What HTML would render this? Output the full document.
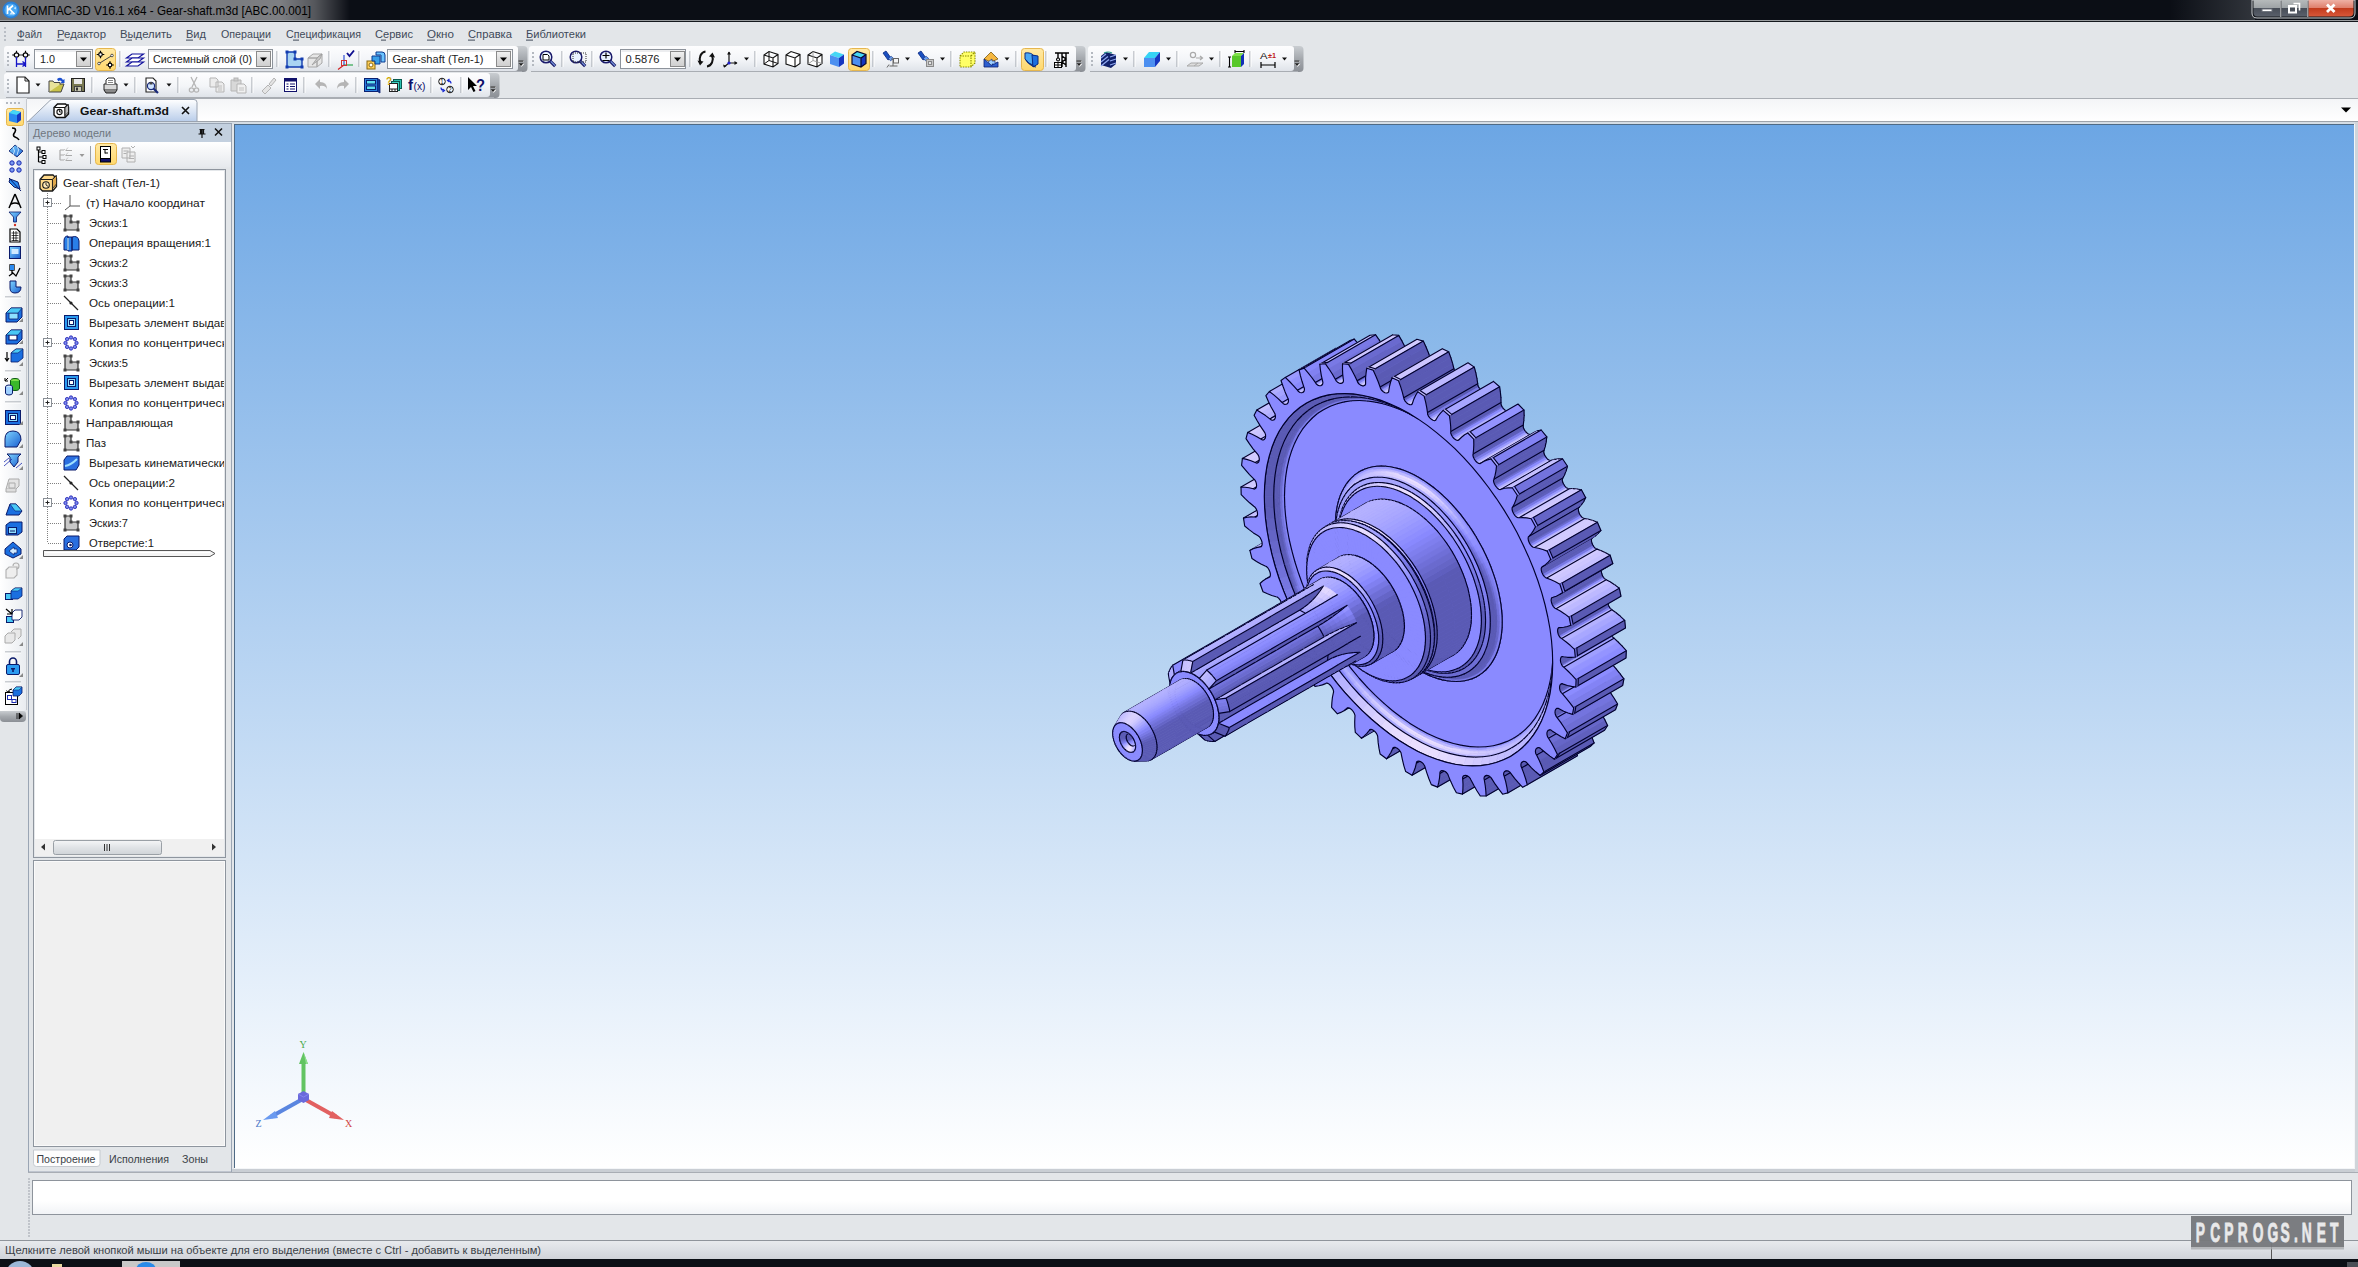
<!DOCTYPE html>
<html><head><meta charset="utf-8"><title>KOMPAS-3D</title>
<style>
html,body{margin:0;padding:0;width:2358px;height:1267px;overflow:hidden;background:#e3e6e9;font-family:"Liberation Sans", sans-serif}
#vp{position:absolute;left:235px;top:125px;width:2119px;height:1043px;background:linear-gradient(#6ca6e4,#ffffff)}
svg{position:absolute;left:0;top:0;font-family:"Liberation Sans", sans-serif}
.e{fill:none;stroke:#00002c;stroke-width:1.15;stroke-linecap:round}
.f{stroke:#00002c;stroke-width:1.15;stroke-linejoin:round}
</style></head><body>
<div id="vp"></div>
<svg width="2358" height="1267" viewBox="0 0 2358 1267">
<g stroke-width=".7">
<path d="M1319 548.4l-3.1 1.6-50.2 29 3.1-1.6z" fill="#b9b5ff" stroke="#b9b5ff"/>
<path d="M1319 548.4l-3.1 1.6M1315.9 550l-50.2 29" class="e"/>
<path d="M1303.3 519.8l-3.2 1.7-50.2 28.9 3.2-1.6z" fill="#b8b5ff" stroke="#b8b5ff"/>
<path d="M1303.3 519.8l-3.2 1.7M1300.1 521.5l-50.2 28.9" class="e"/>
<path d="M1394.1 681.7l2.8-2.2-50.2 29-2.8 2.2z" fill="#5a5ab4" stroke="#5a5ab4"/>
<path d="M1394.1 681.7l-50.2 29M1394.1 681.7l2.8-2.2" class="e"/>
<path d="M1320 548l-1 .4-50.2 29 1-.4z" fill="#bab6ff" stroke="#bab6ff"/>
<path d="M1320 548l-50.2 29M1320 548l-1 .4M1319 548.4l-50.2 29" class="e"/>
<path d="M1411.6 709.2l2.9-2.3-50.2 29-2.9 2.3z" fill="#5a5ab4" stroke="#5a5ab4"/>
<path d="M1411.6 709.2l-50.2 29M1411.6 709.2l2.9-2.3" class="e"/>
<path d="M1396.9 679.5l.8-.7-50.2 29-.8 .7z" fill="#5a5ab4" stroke="#5a5ab4"/>
<path d="M1396.9 679.5l-50.2 29M1396.9 679.5l.8-.7M1397.7 678.8l-50.2 29" class="e"/>
<path d="M1306.8 518.6l-3.5 1.2-50.2 29 3.4-1.2z" fill="#bcb8ff" stroke="#bcb8ff"/>
<path d="M1306.8 518.6l-3.5 1.2" class="e"/>
<path d="M1414.5 706.9l2.6-2.5-50.2 29-2.6 2.5z" fill="#5a5ab4" stroke="#5a5ab4"/>
<path d="M1414.5 706.9l2.6-2.5" class="e"/>
<path d="M1310.3 517.9l-3.5 .7-50.3 29 3.6-.7z" fill="#c1bcff" stroke="#c1bcff"/>
<path d="M1310.3 517.9l-3.5 .7" class="e"/>
<path d="M1311.4 517.7l-1.1 .2-50.2 29 1.1-.2z" fill="#c3beff" stroke="#c3beff"/>
<path d="M1311.4 517.7l-50.2 29M1311.4 517.7l-1.1 .2M1310.3 517.9l-50.2 29" class="e"/>
<path d="M1417.1 704.4l2.2-2.9-50.2 29-2.2 2.9z" fill="#5a5ab4" stroke="#5a5ab4"/>
<path d="M1417.1 704.4l2.2-2.9" class="e"/>
<path d="M1297.4 488.3l-3.7 .8-50.2 29 3.7-.8z" fill="#c1bcff" stroke="#c1bcff"/>
<path d="M1297.4 488.3l-3.7 .8M1293.7 489.1l-50.2 29" class="e"/>
<path d="M1419.3 701.5l.7-1-50.2 29-.7 1z" fill="#5a5ab4" stroke="#5a5ab4"/>
<path d="M1419.3 701.5l-50.2 29M1419.3 701.5l.7-1M1420 700.5l-50.2 29" class="e"/>
<path d="M1436.7 729.8l2.3-3-50.2 29-2.3 3z" fill="#5a5ab4" stroke="#5a5ab4"/>
<path d="M1436.7 729.8l-50.2 29M1436.7 729.8l2.3-3" class="e"/>
<path d="M1301.2 487.9l-3.8 .4-50.2 29 3.8-.4z" fill="#c5c0ff" stroke="#c5c0ff"/>
<path d="M1301.2 487.9l-3.8 .4" class="e"/>
<path d="M1305 488.1l-3.8-.2-50.2 29 3.8 .1z" fill="#cbc4ff" stroke="#cbc4ff"/>
<path d="M1305 488.1l-3.8-.2" class="e"/>
<path d="M1439 726.8l2.1-3.3-50.2 29-2.1 3.3z" fill="#5a5ab4" stroke="#5a5ab4"/>
<path d="M1439 726.8l2.1-3.3" class="e"/>
<path d="M1306.2 488.2l-1.2-.1-50.2 28.9 1.2 .1z" fill="#cdc6ff" stroke="#cdc6ff"/>
<path d="M1306.2 488.2l-50.2 28.9M1306.2 488.2l-1.2-.1M1305 488.1l-50.2 28.9" class="e"/>
<path d="M1441.1 723.5l1.6-3.6-50.2 29-1.6 3.6z" fill="#5a5ab4" stroke="#5a5ab4"/>
<path d="M1441.1 723.5l1.6-3.6" class="e"/>
<path d="M1442.7 719.9l.5-1.1-50.2 28.9-.5 1.2z" fill="#5a5ab4" stroke="#5a5ab4"/>
<path d="M1442.7 719.9l-50.2 29M1442.7 719.9l.5-1.1M1443.2 718.8l-50.2 28.9" class="e"/>
<path d="M1295.2 458.3l-4-.2-50.2 29 4 .1z" fill="#cbc4ff" stroke="#cbc4ff"/>
<path d="M1295.2 458.3l-4-.2M1291.2 458.1l-50.2 29" class="e"/>
<path d="M1299.3 458.8l-4.1-.5-50.2 28.9 4.1 .6z" fill="#cfc8ff" stroke="#cfc8ff"/>
<path d="M1299.3 458.8l-4.1-.5" class="e"/>
<path d="M1462.3 746.2l1.7-3.7-50.2 29-1.7 3.7z" fill="#5a5ab4" stroke="#5a5ab4"/>
<path d="M1462.3 746.2l-50.2 29M1462.3 746.2l1.7-3.7" class="e"/>
<path d="M1303.4 459.7l-4.1-.9-50.2 29 4.1 .9z" fill="#d2caff" stroke="#d2caff"/>
<path d="M1303.4 459.7l-4.1-.9" class="e"/>
<path d="M1464 742.5l1.5-4-50.2 29-1.5 4z" fill="#5a5ab4" stroke="#5a5ab4"/>
<path d="M1464 742.5l1.5-4" class="e"/>
<path d="M1304.7 460.1l-1.3-.4-50.2 29 1.3 .4z" fill="#d2cbff" stroke="#d2cbff"/>
<path d="M1304.7 460.1l-1.3-.4M1303.4 459.7l-50.2 29" class="e"/>
<path d="M1305.7 459.6l-1 .5-50.2 29 1-.5z" fill="#bab6ff" stroke="#bab6ff"/>
<path d="M1305.7 459.6l-50.2 29M1305.7 459.6l-1 .5" class="e"/>
<path d="M1465.5 738.5l1-4.2-50.2 29-1 4.2z" fill="#5a5ab4" stroke="#5a5ab4"/>
<path d="M1465.5 738.5l1-4.2" class="e"/>
<path d="M1466.5 734.3l.3-1.3-50.2 29-.3 1.3z" fill="#5a5ab4" stroke="#5a5ab4"/>
<path d="M1466.5 734.3l-50.2 29M1466.5 734.3l.3-1.3" class="e"/>
<path d="M1466.8 733l.9-.8-50.2 29-.9 .8z" fill="#5a5ab4" stroke="#5a5ab4"/>
<path d="M1466.8 733l.9-.8M1467.7 732.2l-50.2 29" class="e"/>
<path d="M1296.9 430.4l-4.3-1-50.2 29 4.3 1z" fill="#d2caff" stroke="#d2caff"/>
<path d="M1296.9 430.4l-4.3-1M1292.6 429.4l-50.2 29" class="e"/>
<path d="M1301.2 431.7l-4.3-1.3-50.2 29 4.3 1.3z" fill="#d2cbff" stroke="#d2cbff"/>
<path d="M1301.2 431.7l-4.3-1.3" class="e"/>
<path d="M1487.8 758.1l1.1-4.4-50.2 29-1.1 4.4z" fill="#5a5ab4" stroke="#5a5ab4"/>
<path d="M1487.8 758.1l-50.2 29M1487.8 758.1l1.1-4.4" class="e"/>
<path d="M1305.4 433.5l-4.2-1.8-50.2 29 4.2 1.8z" fill="#d0c9ff" stroke="#d0c9ff"/>
<path d="M1305.4 433.5l-4.2-1.8" class="e"/>
<path d="M1488.9 753.7l.8-4.5-50.2 28.9-.8 4.6z" fill="#5a5ab4" stroke="#5a5ab4"/>
<path d="M1488.9 753.7l.8-4.5" class="e"/>
<path d="M1306.7 434.1l-1.3-.6-50.2 29 1.3 .6z" fill="#cec7ff" stroke="#cec7ff"/>
<path d="M1306.7 434.1l-1.3-.6M1305.4 433.5l-50.2 29" class="e"/>
<path d="M1307.9 433.9l-1.2 .2-50.2 29 1.2-.2z" fill="#c3beff" stroke="#c3beff"/>
<path d="M1307.9 433.9l-50.2 29M1307.9 433.9l-1.2 .2" class="e"/>
<path d="M1489.7 749.2l.4-4.7-50.2 29-.4 4.6z" fill="#5a5ab4" stroke="#5a5ab4"/>
<path d="M1489.7 749.2l.4-4.7" class="e"/>
<path d="M1490.1 744.5l.1-1.5-50.2 29-.1 1.5z" fill="#5a5ab4" stroke="#5a5ab4"/>
<path d="M1490.1 744.5l-50.2 29M1490.1 744.5l.1-1.5" class="e"/>
<path d="M1490.2 743l.7-1-50.2 29-.7 1z" fill="#5a5ab4" stroke="#5a5ab4"/>
<path d="M1490.2 743l.7-1M1490.9 742l-50.2 29" class="e"/>
<path d="M1302.3 405.3l-4.4-1.8-50.2 28.9 4.4 1.9z" fill="#d0c9ff" stroke="#d0c9ff"/>
<path d="M1302.3 405.3l-4.4-1.8M1297.9 403.5l-50.2 28.9" class="e"/>
<path d="M1306.7 407.5l-4.4-2.2-50.2 29 4.4 2.2z" fill="#cbc5ff" stroke="#cbc5ff"/>
<path d="M1306.7 407.5l-4.4-2.2" class="e"/>
<path d="M1512.7 765.1l.4-5-50.2 29-.4 5z" fill="#5a5ab4" stroke="#5a5ab4"/>
<path d="M1512.7 765.1l-50.2 29M1512.7 765.1l.4-5" class="e"/>
<path d="M1311 410.1l-4.3-2.6-50.2 29 4.3 2.5z" fill="#c3beff" stroke="#c3beff"/>
<path d="M1311 410.1l-4.3-2.6" class="e"/>
<path d="M1312.3 410.9l-1.3-.8-50.2 28.9 1.3 .9z" fill="#bfbaff" stroke="#bfbaff"/>
<path d="M1312.3 410.9l-1.3-.8M1311 410.1l-50.2 28.9" class="e"/>
<path d="M1313.6 411l-1.3-.1-50.2 29 1.3 .1z" fill="#cdc6ff" stroke="#cdc6ff"/>
<path d="M1313.6 411l-1.3-.1" class="e"/>
<path d="M1513.1 760.1l.1-5-50.2 29-.1 5z" fill="#5a5ab4" stroke="#5a5ab4"/>
<path d="M1513.1 760.1l.1-5" class="e"/>
<path d="M1314.7 410.3l-1.1 .7-50.2 29 1.1-.7z" fill="#b7b4ff" stroke="#b7b4ff"/>
<path d="M1314.7 410.3l-50.2 29M1314.7 410.3l-1.1 .7" class="e"/>
<path d="M1513.2 755.1l-.2-5-50.3 29 .3 5z" fill="#5a5ab4" stroke="#5a5ab4"/>
<path d="M1513.2 755.1l-.2-5" class="e"/>
<path d="M1513 750.1l-.2-1.6-50.2 29 .1 1.6z" fill="#5a5ab4" stroke="#5a5ab4"/>
<path d="M1513 750.1l-50.3 29M1513 750.1l-.2-1.6" class="e"/>
<path d="M1512.8 748.5l.5-1.2-50.2 29-.5 1.2z" fill="#5a5ab4" stroke="#5a5ab4"/>
<path d="M1512.8 748.5l.5-1.2" class="e"/>
<path d="M1513.3 747.3l1.1-.8-50.2 29-1.1 .8z" fill="#5a5ab4" stroke="#5a5ab4"/>
<path d="M1513.3 747.3l1.1-.8M1514.4 746.5l-50.2 29" class="e"/>
<path d="M1311.5 383.7l-4.5-2.7-50.2 29 4.4 2.7z" fill="#c3beff" stroke="#c3beff"/>
<path d="M1311.5 383.7l-4.5-2.7M1307 381l-50.2 29" class="e"/>
<path d="M1315.8 386.6l-4.3-2.9-50.3 29 4.4 2.9z" fill="#bab6ff" stroke="#bab6ff"/>
<path d="M1315.8 386.6l-4.3-2.9" class="e"/>
<path d="M1320 389.9l-4.2-3.3-50.2 29 4.2 3.3z" fill="#afadff" stroke="#afadff"/>
<path d="M1320 389.9l-4.2-3.3" class="e"/>
<path d="M1536.3 767l-.3-5.3-50.2 29 .3 5.3z" fill="#5a5ab4" stroke="#5a5ab4"/>
<path d="M1536.3 767l-50.2 29M1536.3 767l-.3-5.3" class="e"/>
<path d="M1321.3 390.9l-1.3-1-50.2 29 1.3 1z" fill="#aaa8ff" stroke="#aaa8ff"/>
<path d="M1321.3 390.9l-1.3-1M1320 389.9l-50.2 29" class="e"/>
<path d="M1322.7 391.3l-1.4-.4-50.2 29 1.4 .4z" fill="#d2cbff" stroke="#d2cbff"/>
<path d="M1322.7 391.3l-1.4-.4" class="e"/>
<path d="M1536 761.7l-.6-5.4-50.2 29 .6 5.4z" fill="#5a5ab4" stroke="#5a5ab4"/>
<path d="M1536 761.7l-.6-5.4" class="e"/>
<path d="M1324 391l-1.3 .3-50.2 29 1.3-.3z" fill="#bfbaff" stroke="#bfbaff"/>
<path d="M1324 391l-50.2 29M1324 391l-1.3 .3" class="e"/>
<path d="M1535.4 756.3l-.9-5.3-50.2 29 .9 5.3z" fill="#5a5ab4" stroke="#5a5ab4"/>
<path d="M1535.4 756.3l-.9-5.3" class="e"/>
<path d="M1534.5 751l-.3-1.6-50.2 28.9 .3 1.7z" fill="#5a5ab4" stroke="#5a5ab4"/>
<path d="M1534.5 751l-50.2 29M1534.5 751l-.3-1.6" class="e"/>
<path d="M1534.2 749.4l.3-1.5-50.2 29-.3 1.4z" fill="#5a5ab4" stroke="#5a5ab4"/>
<path d="M1534.2 749.4l.3-1.5" class="e"/>
<path d="M1534.5 747.9l.9-1-50.2 29-.9 1z" fill="#5a5ab4" stroke="#5a5ab4"/>
<path d="M1534.5 747.9l.9-1M1535.4 746.9l-50.2 29" class="e"/>
<path d="M1324 365.9l-4.4-3.4-50.2 29 4.4 3.4z" fill="#afadff" stroke="#afadff"/>
<path d="M1324 365.9l-4.4-3.4M1319.6 362.5l-50.2 29" class="e"/>
<path d="M1328.3 369.6l-4.3-3.7-50.2 29 4.3 3.7z" fill="#a5a4ff" stroke="#a5a4ff"/>
<path d="M1328.3 369.6l-4.3-3.7" class="e"/>
<path d="M1332.3 373.5l-4-3.9-50.2 29 4 3.9z" fill="#9a9aff" stroke="#9a9aff"/>
<path d="M1332.3 373.5l-4-3.9" class="e"/>
<path d="M1333.6 374.7l-1.3-1.2-50.2 29 1.3 1.2z" fill="#9595ff" stroke="#9595ff"/>
<path d="M1333.6 374.7l-1.3-1.2M1332.3 373.5l-50.2 29" class="e"/>
<path d="M1335 375.4l-1.4-.7-50.2 29 1.4 .7z" fill="#cec7ff" stroke="#cec7ff"/>
<path d="M1335 375.4l-1.4-.7" class="e"/>
<path d="M1558 763.9l-.9-5.6-50.2 29 .9 5.6z" fill="#5a5ab4" stroke="#5a5ab4"/>
<path d="M1558 763.9l-50.2 29M1558 763.9l-.9-5.6" class="e"/>
<path d="M1336.4 375.4l-1.4 0-50.2 29 1.4-.1z" fill="#c9c3ff" stroke="#c9c3ff"/>
<path d="M1336.4 375.4l-1.4 0" class="e"/>
<path d="M1557.1 758.3l-1.2-5.6-50.2 29 1.2 5.6z" fill="#5a5ab4" stroke="#5a5ab4"/>
<path d="M1557.1 758.3l-1.2-5.6" class="e"/>
<path d="M1337.6 374.7l-1.2 .7-50.2 28.9 1.2-.6z" fill="#b7b4ff" stroke="#b7b4ff"/>
<path d="M1337.6 374.7l-50.2 29M1337.6 374.7l-1.2 .7" class="e"/>
<path d="M1555.9 752.7l-1.6-5.5-50.2 29 1.6 5.5z" fill="#5a5ab4" stroke="#5a5ab4"/>
<path d="M1555.9 752.7l-1.6-5.5" class="e"/>
<path d="M1554.3 747.2l-.5-1.6-50.2 28.9 .5 1.7z" fill="#5a5ab4" stroke="#5a5ab4"/>
<path d="M1554.3 747.2l-50.2 29M1554.3 747.2l-.5-1.6" class="e"/>
<path d="M1553.8 745.6l.1-1.6-50.2 29-.1 1.5z" fill="#5a5ab4" stroke="#5a5ab4"/>
<path d="M1553.8 745.6l.1-1.6" class="e"/>
<path d="M1553.9 744l.7-1.3-50.2 29-.7 1.3z" fill="#5a5ab4" stroke="#5a5ab4"/>
<path d="M1553.9 744l.7-1.3" class="e"/>
<path d="M1554.6 742.7l1.1-.8-50.2 29-1.1 .8z" fill="#5a5ab4" stroke="#5a5ab4"/>
<path d="M1554.6 742.7l1.1-.8M1555.7 741.9l-50.2 29" class="e"/>
<path d="M1339.8 352.5l-4.3-4.1-50.2 29 4.2 4.1z" fill="#9a9aff" stroke="#9a9aff"/>
<path d="M1339.8 352.5l-4.3-4.1M1335.5 348.4l-50.2 29" class="e"/>
<path d="M1343.8 356.8l-4-4.3-50.3 29 4.1 4.3z" fill="#9191ff" stroke="#9191ff"/>
<path d="M1343.8 356.8l-4-4.3" class="e"/>
<path d="M1347.6 361.3l-3.8-4.5-50.2 29 3.8 4.4z" fill="#8888fc" stroke="#8888fc"/>
<path d="M1347.6 361.3l-3.8-4.5" class="e"/>
<path d="M1348.7 362.6l-1.1-1.3-50.2 28.9 1.1 1.4z" fill="#8484f6" stroke="#8484f6"/>
<path d="M1348.7 362.6l-1.1-1.3M1347.6 361.3l-50.2 28.9" class="e"/>
<path d="M1350.2 363.6l-1.5-1-50.2 29 1.5 .9z" fill="#bfbaff" stroke="#bfbaff"/>
<path d="M1350.2 363.6l-1.5-1" class="e"/>
<path d="M1351.7 363.8l-1.5-.2-50.2 28.9 1.5 .3z" fill="#d1caff" stroke="#d1caff"/>
<path d="M1351.7 363.8l-1.5-.2" class="e"/>
<path d="M1577.5 755.8l-1.6-5.8-50.2 29 1.6 5.8z" fill="#5a5ab4" stroke="#5a5ab4"/>
<path d="M1577.5 755.8l-50.2 29M1577.5 755.8l-1.6-5.8" class="e"/>
<path d="M1353 363.5l-1.3 .3-50.2 29 1.3-.3z" fill="#bfbaff" stroke="#bfbaff"/>
<path d="M1353 363.5l-50.2 29M1353 363.5l-1.3 .3" class="e"/>
<path d="M1575.9 750l-1.9-5.6-50.2 29 1.9 5.6z" fill="#5a5ab4" stroke="#5a5ab4"/>
<path d="M1575.9 750l-1.9-5.6" class="e"/>
<path d="M1574 744.4l-2.1-5.5-50.2 28.9 2.1 5.6z" fill="#5a5ab4" stroke="#5a5ab4"/>
<path d="M1574 744.4l-2.1-5.5" class="e"/>
<path d="M1571.9 738.9l-.7-1.7-50.2 29 .7 1.6z" fill="#5a5ab4" stroke="#5a5ab4"/>
<path d="M1571.9 738.9l-50.2 28.9M1571.9 738.9l-.7-1.7" class="e"/>
<path d="M1571.2 737.2l-.1-1.7-50.2 29 .1 1.7z" fill="#5a5ab4" stroke="#5a5ab4"/>
<path d="M1571.2 737.2l-.1-1.7" class="e"/>
<path d="M1571.1 735.5l.4-1.5-50.2 28.9-.4 1.6z" fill="#5a5ab4" stroke="#5a5ab4"/>
<path d="M1571.1 735.5l.4-1.5" class="e"/>
<path d="M1571.5 734l.9-1.1-50.2 29-.9 1z" fill="#5a5ab4" stroke="#5a5ab4"/>
<path d="M1571.5 734l.9-1.1M1572.4 732.9l-50.2 29" class="e"/>
<path d="M1354.3 339.1l-5 1.8-50.2 29 5-1.8z" fill="#bbb7ff" stroke="#bbb7ff"/>
<path d="M1354.3 339.1l-5 1.8M1349.3 340.9l-50.2 29" class="e"/>
<path d="M1358.3 343.8l-4-4.7-50.2 29 4 4.7z" fill="#8888fc" stroke="#8888fc"/>
<path d="M1358.3 343.8l-4-4.7M1354.3 339.1l-50.2 29" class="e"/>
<path d="M1362 348.6l-3.7-4.8-50.2 29 3.7 4.7z" fill="#8181f1" stroke="#8181f1"/>
<path d="M1362 348.6l-3.7-4.8" class="e"/>
<path d="M1365.5 353.5l-3.5-4.9-50.2 28.9 3.5 4.9z" fill="#7979e5" stroke="#7979e5"/>
<path d="M1365.5 353.5l-3.5-4.9" class="e"/>
<path d="M1366.5 355l-1-1.5-50.2 28.9 1 1.6z" fill="#7575e0" stroke="#7575e0"/>
<path d="M1366.5 355l-1-1.5M1365.5 353.5l-50.2 28.9" class="e"/>
<path d="M1367.9 356.1l-1.4-1.1-50.2 29 1.4 1.1z" fill="#aaa9ff" stroke="#aaa9ff"/>
<path d="M1367.9 356.1l-1.4-1.1" class="e"/>
<path d="M1590.3 746.5l3.8-3.6-50.2 29-3.8 3.6z" fill="#5a5ab4" stroke="#5a5ab4"/>
<path d="M1590.3 746.5l-50.2 29M1590.3 746.5l3.8-3.6" class="e"/>
<path d="M1369.5 356.7l-1.6-.6-50.2 29 1.6 .6z" fill="#d1caff" stroke="#d1caff"/>
<path d="M1369.5 356.7l-1.6-.6" class="e"/>
<path d="M1371 356.7l-1.5 0-50.2 29 1.5 0z" fill="#c9c3ff" stroke="#c9c3ff"/>
<path d="M1371 356.7l-1.5 0" class="e"/>
<path d="M1594.1 742.9l-2.2-5.8-50.2 29 2.2 5.8z" fill="#5a5ab4" stroke="#5a5ab4"/>
<path d="M1594.1 742.9l-50.2 29M1594.1 742.9l-2.2-5.8" class="e"/>
<path d="M1372.2 356.1l-1.2 .6-50.2 29 1.2-.6z" fill="#b8b4ff" stroke="#b8b4ff"/>
<path d="M1372.2 356.1l-50.2 29M1372.2 356.1l-1.2 .6" class="e"/>
<path d="M1591.9 737.1l-2.4-5.6-50.2 29 2.4 5.6z" fill="#5a5ab4" stroke="#5a5ab4"/>
<path d="M1591.9 737.1l-2.4-5.6" class="e"/>
<path d="M1589.5 731.5l-2.7-5.4-50.2 29 2.7 5.4z" fill="#6060be" stroke="#6060be"/>
<path d="M1589.5 731.5l-2.7-5.4" class="e"/>
<path d="M1586.8 726.1l-.8-1.6-50.3 28.9 .9 1.7z" fill="#6363c3" stroke="#6363c3"/>
<path d="M1586.8 726.1l-50.2 29M1586.8 726.1l-.8-1.6" class="e"/>
<path d="M1586 724.5l-.4-1.8-50.2 28.9 .3 1.8z" fill="#5a5ab4" stroke="#5a5ab4"/>
<path d="M1586 724.5l-.4-1.8" class="e"/>
<path d="M1585.6 722.7l.2-1.8-50.2 29-.2 1.7z" fill="#5a5ab4" stroke="#5a5ab4"/>
<path d="M1585.6 722.7l.2-1.8" class="e"/>
<path d="M1585.8 720.9l.7-1.3-50.2 29-.7 1.3z" fill="#5a5ab4" stroke="#5a5ab4"/>
<path d="M1585.8 720.9l.7-1.3" class="e"/>
<path d="M1586.5 719.6l1.1-.8-50.2 28.9-1.1 .9z" fill="#5a5ab4" stroke="#5a5ab4"/>
<path d="M1586.5 719.6l1.1-.8M1587.6 718.8l-50.2 28.9" class="e"/>
<path d="M1375.5 334.7l-5.5 .6-50.2 29 5.5-.6z" fill="#c4bfff" stroke="#c4bfff"/>
<path d="M1375.5 334.7l-5.5 .6M1370 335.3l-50.2 29" class="e"/>
<path d="M1379.1 339.9l-3.6-5.2-50.2 29 3.6 5.1z" fill="#7979e5" stroke="#7979e5"/>
<path d="M1379.1 339.9l-3.6-5.2M1375.5 334.7l-50.2 29" class="e"/>
<path d="M1382.5 345.1l-3.4-5.2-50.2 28.9 3.4 5.2z" fill="#7272db" stroke="#7272db"/>
<path d="M1382.5 345.1l-3.4-5.2" class="e"/>
<path d="M1386.4 351.9l-.9-1.6-50.2 29 .9 1.6z" fill="#6767ca" stroke="#6767ca"/>
<path d="M1386.4 351.9l-.9-1.6" class="e"/>
<path d="M1385.5 350.3l-3-5.2-50.2 28.9 3 5.3z" fill="#6a6acf" stroke="#6a6acf"/>
<path d="M1385.5 350.3l-50.2 29M1385.5 350.3l-3-5.2" class="e"/>
<path d="M1387.8 353.2l-1.4-1.3-50.2 29 1.3 1.3z" fill="#9696ff" stroke="#9696ff"/>
<path d="M1387.8 353.2l-1.4-1.3" class="e"/>
<path d="M1389.3 354.1l-1.5-.9-50.3 29 1.6 .9z" fill="#c6c0ff" stroke="#c6c0ff"/>
<path d="M1389.3 354.1l-1.5-.9" class="e"/>
<path d="M1390.9 354.4l-1.6-.3-50.2 29 1.6 .3z" fill="#d1caff" stroke="#d1caff"/>
<path d="M1390.9 354.4l-1.6-.3" class="e"/>
<path d="M1604.6 730.2l3-4.7-50.2 29-3 4.7z" fill="#5a5ab4" stroke="#5a5ab4"/>
<path d="M1604.6 730.2l-50.2 29M1604.6 730.2l3-4.7" class="e"/>
<path d="M1392.3 354.1l-1.4 .3-50.2 29 1.4-.3z" fill="#c0bbff" stroke="#c0bbff"/>
<path d="M1392.3 354.1l-50.2 29M1392.3 354.1l-1.4 .3" class="e"/>
<path d="M1607.6 725.5l-2.8-5.7-50.2 29 2.8 5.7z" fill="#6060be" stroke="#6060be"/>
<path d="M1607.6 725.5l-50.2 29M1607.6 725.5l-2.8-5.7" class="e"/>
<path d="M1598.7 709.2l-1-1.6-50.2 29 1 1.6z" fill="#7171d9" stroke="#7171d9"/>
<path d="M1598.7 709.2l-1-1.6" class="e"/>
<path d="M1604.8 719.8l-3-5.5-50.2 29 3 5.5z" fill="#6666c8" stroke="#6666c8"/>
<path d="M1604.8 719.8l-3-5.5" class="e"/>
<path d="M1601.8 714.3l-3.1-5.1-50.2 29 3.1 5.1z" fill="#6e6ed4" stroke="#6e6ed4"/>
<path d="M1601.8 714.3l-3.1-5.1M1598.7 709.2l-50.2 29" class="e"/>
<path d="M1597.7 707.6l-.5-1.8-50.2 29 .5 1.8z" fill="#5a5ab4" stroke="#5a5ab4"/>
<path d="M1597.7 707.6l-.5-1.8" class="e"/>
<path d="M1597.2 705.8l-.1-1.9-50.2 29 .1 1.9z" fill="#5a5ab4" stroke="#5a5ab4"/>
<path d="M1597.2 705.8l-.1-1.9" class="e"/>
<path d="M1597.1 703.9l.5-1.6-50.2 29-.5 1.6z" fill="#5a5ab4" stroke="#5a5ab4"/>
<path d="M1597.1 703.9l.5-1.6" class="e"/>
<path d="M1597.6 702.3l.9-1.1-50.2 29-.9 1.1z" fill="#5a5ab4" stroke="#5a5ab4"/>
<path d="M1597.6 702.3l.9-1.1M1598.5 701.2l-50.2 29" class="e"/>
<path d="M1306.3 366.8l-4.9 1.8-2.3 1.3 5-1.8z" fill="#b8b4ff" stroke="#b8b4ff"/>
<path d="M1306.3 366.8l-4.9 1.8" class="e"/>
<path d="M1398.7 335.4l-5.9-.7-50.3 29 6 .7z" fill="#cec7ff" stroke="#cec7ff"/>
<path d="M1398.7 335.4l-5.9-.7M1392.8 334.7l-50.3 29" class="e"/>
<path d="M1542.3 774.2l3.9-3.6-2.3 1.3-3.8 3.6z" fill="#5a5ab4" stroke="#5a5ab4"/>
<path d="M1542.3 774.2l3.9-3.6" class="e"/>
<path d="M1408 353.5l-.7-1.7-50.2 29 .7 1.7z" fill="#5a5ab4" stroke="#5a5ab4"/>
<path d="M1408 353.5l-.7-1.7" class="e"/>
<path d="M1409.3 355l-1.3-1.5-50.2 29 1.3 1.5z" fill="#8484f7" stroke="#8484f7"/>
<path d="M1409.3 355l-1.3-1.5" class="e"/>
<path d="M1407.3 351.8l-2.5-5.4-50.2 29 2.5 5.4z" fill="#5c5cb9" stroke="#5c5cb9"/>
<path d="M1407.3 351.8l-50.2 29M1407.3 351.8l-2.5-5.4" class="e"/>
<path d="M1410.8 356.2l-1.5-1.2-50.2 29 1.5 1.1z" fill="#b3b0ff" stroke="#b3b0ff"/>
<path d="M1410.8 356.2l-1.5-1.2" class="e"/>
<path d="M1404.8 346.4l-2.9-5.5-50.2 29 2.9 5.5z" fill="#6464c5" stroke="#6464c5"/>
<path d="M1404.8 346.4l-2.9-5.5" class="e"/>
<path d="M1401.9 340.9l-3.2-5.5-50.2 29 3.2 5.5z" fill="#6a6acf" stroke="#6a6acf"/>
<path d="M1401.9 340.9l-3.2-5.5M1398.7 335.4l-50.2 29" class="e"/>
<path d="M1412.5 356.8l-1.7-.6-50.2 28.9 1.7 .7z" fill="#d1caff" stroke="#d1caff"/>
<path d="M1412.5 356.8l-1.7-.6" class="e"/>
<path d="M1414 356.8l-1.5 0-50.2 29 1.5 0z" fill="#cac4ff" stroke="#cac4ff"/>
<path d="M1414 356.8l-1.5 0" class="e"/>
<path d="M1615.5 709.7l2.1-5.7-50.2 28.9-2.2 5.8z" fill="#5a5ab4" stroke="#5a5ab4"/>
<path d="M1615.5 709.7l-50.3 29M1615.5 709.7l2.1-5.7" class="e"/>
<path d="M1415.2 356.2l-1.2 .6-50.2 29 1.2-.6z" fill="#b8b4ff" stroke="#b8b4ff"/>
<path d="M1415.2 356.2l-50.2 29M1415.2 356.2l-1.2 .6" class="e"/>
<path d="M1607.3 688.6l-1.1-1.5-50.2 29 1.1 1.5z" fill="#8080f0" stroke="#8080f0"/>
<path d="M1607.3 688.6l-1.1-1.5" class="e"/>
<path d="M1606.2 687.1l-.7-1.8-50.2 29 .7 1.8z" fill="#5a5ab4" stroke="#5a5ab4"/>
<path d="M1606.2 687.1l-.7-1.8" class="e"/>
<path d="M1610.9 693.4l-3.6-4.8-50.2 29 3.6 4.8z" fill="#7c7cea" stroke="#7c7cea"/>
<path d="M1610.9 693.4l-3.6-4.8M1607.3 688.6l-50.2 29" class="e"/>
<path d="M1605.5 685.3l-.3-2-50.2 29 .3 2z" fill="#5a5ab4" stroke="#5a5ab4"/>
<path d="M1605.5 685.3l-.3-2" class="e"/>
<path d="M1614.3 698.5l-3.4-5.1-50.2 29 3.4 5.1z" fill="#7474de" stroke="#7474de"/>
<path d="M1614.3 698.5l-3.4-5.1" class="e"/>
<path d="M1617.6 704l-3.3-5.5-50.2 29 3.3 5.4z" fill="#6e6ed4" stroke="#6e6ed4"/>
<path d="M1617.6 704l-50.2 28.9M1617.6 704l-3.3-5.5" class="e"/>
<path d="M1605.2 683.3l.2-1.8-50.2 29-.2 1.8z" fill="#5a5ab4" stroke="#5a5ab4"/>
<path d="M1605.2 683.3l.2-1.8" class="e"/>
<path d="M1605.4 681.5l.7-1.4-50.2 29-.7 1.4z" fill="#5a5ab4" stroke="#5a5ab4"/>
<path d="M1605.4 681.5l.7-1.4" class="e"/>
<path d="M1606.1 680.1l1-.7-50.2 28.9-1 .8z" fill="#5a5ab4" stroke="#5a5ab4"/>
<path d="M1606.1 680.1l1-.7M1607.1 679.4l-50.2 28.9" class="e"/>
<path d="M1327.6 362.4l-5.5 .6-2.3 1.3 5.5-.6z" fill="#bdb8ff" stroke="#bdb8ff"/>
<path d="M1327.6 362.4l-5.5 .6" class="e"/>
<path d="M1432 361.3l-1.2-1.6-50.2 29 1.1 1.6z" fill="#7575e0" stroke="#7575e0"/>
<path d="M1432 361.3l-1.2-1.6" class="e"/>
<path d="M1430.8 359.7l-.5-1.7-50.2 29 .5 1.7z" fill="#5a5ab4" stroke="#5a5ab4"/>
<path d="M1430.8 359.7l-.5-1.7" class="e"/>
<path d="M1433.5 362.7l-1.5-1.4-50.3 29 1.6 1.4z" fill="#9e9eff" stroke="#9e9eff"/>
<path d="M1433.5 362.7l-1.5-1.4" class="e"/>
<path d="M1423.3 341.1l-6.3-1.9-50.2 29 6.3 1.9z" fill="#d2cbff" stroke="#d2cbff"/>
<path d="M1423.3 341.1l-6.3-1.9M1417 339.2l-50.2 29" class="e"/>
<path d="M1430.3 358l-2-5.5-50.2 29 2 5.5z" fill="#5a5ab4" stroke="#5a5ab4"/>
<path d="M1430.3 358l-50.2 29M1430.3 358l-2-5.5" class="e"/>
<path d="M1435.2 363.7l-1.7-1-50.2 29 1.6 1z" fill="#c6c0ff" stroke="#c6c0ff"/>
<path d="M1435.2 363.7l-1.7-1" class="e"/>
<path d="M1428.3 352.5l-2.4-5.7-50.2 29 2.4 5.7z" fill="#5a5ab4" stroke="#5a5ab4"/>
<path d="M1428.3 352.5l-2.4-5.7" class="e"/>
<path d="M1436.8 364l-1.6-.3-50.3 29 1.7 .3z" fill="#d2caff" stroke="#d2caff"/>
<path d="M1436.8 364l-1.6-.3" class="e"/>
<path d="M1425.9 346.8l-2.6-5.7-50.2 29 2.6 5.7z" fill="#5c5cb9" stroke="#5c5cb9"/>
<path d="M1425.9 346.8l-2.6-5.7M1423.3 341.1l-50.2 29" class="e"/>
<path d="M1556.6 757.9l3.1-4.7-2.3 1.3-3 4.7z" fill="#5a5ab5" stroke="#5a5ab5"/>
<path d="M1556.6 757.9l3.1-4.7" class="e"/>
<path d="M1438.1 363.8l-1.3 .2-50.2 29 1.3-.3z" fill="#c0bbff" stroke="#c0bbff"/>
<path d="M1438.1 363.8l-50.2 28.9M1438.1 363.8l-1.3 .2" class="e"/>
<path d="M1611.3 663.5l-1-1.8-50.2 29 1 1.7z" fill="#6363c3" stroke="#6363c3"/>
<path d="M1611.3 663.5l-1-1.8" class="e"/>
<path d="M1612.5 664.7l-1.2-1.2-50.2 28.9 1.2 1.3z" fill="#9090ff" stroke="#9090ff"/>
<path d="M1612.5 664.7l-1.2-1.2" class="e"/>
<path d="M1610.3 661.7l-.5-2.1-50.2 29 .5 2.1z" fill="#5a5ab4" stroke="#5a5ab4"/>
<path d="M1610.3 661.7l-.5-2.1" class="e"/>
<path d="M1616.3 669.1l-3.8-4.4-50.2 29 3.8 4.4z" fill="#8c8cff" stroke="#8c8cff"/>
<path d="M1616.3 669.1l-3.8-4.4M1612.5 664.7l-50.2 29" class="e"/>
<path d="M1622.7 685.4l1.2-6.6-50.2 29-1.2 6.6z" fill="#5a5ab4" stroke="#5a5ab4"/>
<path d="M1622.7 685.4l-50.2 29M1622.7 685.4l1.2-6.6" class="e"/>
<path d="M1609.8 659.6l0-1.9-50.2 28.9 0 2z" fill="#5a5ab4" stroke="#5a5ab4"/>
<path d="M1609.8 659.6l0-1.9" class="e"/>
<path d="M1620.1 673.8l-3.8-4.7-50.2 29 3.8 4.7z" fill="#8383f5" stroke="#8383f5"/>
<path d="M1620.1 673.8l-3.8-4.7" class="e"/>
<path d="M1609.8 657.7l.4-1.7-50.2 29-.4 1.6z" fill="#5a5ab4" stroke="#5a5ab4"/>
<path d="M1609.8 657.7l.4-1.7" class="e"/>
<path d="M1623.9 678.8l-3.8-5-50.2 29 3.8 5z" fill="#7c7cea" stroke="#7c7cea"/>
<path d="M1623.9 678.8l-50.2 29M1623.9 678.8l-3.8-5" class="e"/>
<path d="M1610.2 656l.8-1-50.2 29-.8 1z" fill="#5a5ab4" stroke="#5a5ab4"/>
<path d="M1610.2 656l.8-1M1611 655l-50.2 29" class="e"/>
<path d="M1455.3 372.1l-1-1.8-50.2 29 1 1.8z" fill="#6767ca" stroke="#6767ca"/>
<path d="M1455.3 372.1l-1-1.8" class="e"/>
<path d="M1456.7 373.7l-1.4-1.6-50.2 29 1.4 1.6z" fill="#8b8bff" stroke="#8b8bff"/>
<path d="M1456.7 373.7l-1.4-1.6" class="e"/>
<path d="M1454.3 370.3l-.4-1.6-50.2 29 .4 1.6z" fill="#5a5ab4" stroke="#5a5ab4"/>
<path d="M1454.3 370.3l-.4-1.6" class="e"/>
<path d="M1458.4 375l-1.7-1.3-50.2 29 1.7 1.3z" fill="#b3b0ff" stroke="#b3b0ff"/>
<path d="M1458.4 375l-1.7-1.3" class="e"/>
<path d="M1453.9 368.7l-1.4-5.5-50.2 29 1.4 5.5z" fill="#5a5ab4" stroke="#5a5ab4"/>
<path d="M1453.9 368.7l-50.2 29M1453.9 368.7l-1.4-5.5" class="e"/>
<path d="M1460 375.6l-1.6-.6-50.2 29 1.6 .6z" fill="#d0c9ff" stroke="#d0c9ff"/>
<path d="M1460 375.6l-1.6-.6" class="e"/>
<path d="M1350.7 363.1l-5.9-.7-2.3 1.3 6 .7z" fill="#c1bcff" stroke="#c1bcff"/>
<path d="M1350.7 363.1l-5.9-.7" class="e"/>
<path d="M1448.7 351.8l-6.4-3.1-50.2 29 6.4 3.1z" fill="#ccc6ff" stroke="#ccc6ff"/>
<path d="M1448.7 351.8l-6.4-3.1M1442.3 348.7l-50.2 29" class="e"/>
<path d="M1452.5 363.2l-1.7-5.6-50.2 29 1.7 5.6z" fill="#5a5ab4" stroke="#5a5ab4"/>
<path d="M1452.5 363.2l-1.7-5.6" class="e"/>
<path d="M1461.4 375.7l-1.4-.1-50.2 29 1.4 .1z" fill="#cac4ff" stroke="#cac4ff"/>
<path d="M1461.4 375.7l-50.2 29M1461.4 375.7l-1.4-.1" class="e"/>
<path d="M1612.7 637.1l-1-1.7-50.2 29 1 1.7z" fill="#7171d9" stroke="#7171d9"/>
<path d="M1612.7 637.1l-1-1.7" class="e"/>
<path d="M1450.8 357.6l-2.1-5.8-50.2 29 2.1 5.8z" fill="#5a5ab4" stroke="#5a5ab4"/>
<path d="M1450.8 357.6l-2.1-5.8M1448.7 351.8l-50.2 29" class="e"/>
<path d="M1611.7 635.4l-.8-2-50.2 29 .8 2z" fill="#5a5ab4" stroke="#5a5ab4"/>
<path d="M1611.7 635.4l-.8-2" class="e"/>
<path d="M1614 638.2l-1.3-1.1-50.2 29 1.3 1.1z" fill="#a4a3ff" stroke="#a4a3ff"/>
<path d="M1614 638.2l-1.3-1.1" class="e"/>
<path d="M1610.9 633.4l-.3-2.1-50.2 29 .3 2.1z" fill="#5a5ab4" stroke="#5a5ab4"/>
<path d="M1610.9 633.4l-.3-2.1" class="e"/>
<path d="M1618.1 642l-4.1-3.8-50.2 29 4.1 3.8z" fill="#9f9fff" stroke="#9f9fff"/>
<path d="M1618.1 642l-4.1-3.8M1614 638.2l-50.2 29" class="e"/>
<path d="M1610.6 631.3l.2-1.8-50.2 28.9-.2 1.9z" fill="#5a5ab4" stroke="#5a5ab4"/>
<path d="M1610.6 631.3l.2-1.8" class="e"/>
<path d="M1610.8 629.5l.6-1.4-50.2 29-.6 1.3z" fill="#5a5ab4" stroke="#5a5ab4"/>
<path d="M1610.8 629.5l.6-1.4" class="e"/>
<path d="M1622.2 646.2l-4.1-4.2-50.2 29 4.1 4.2z" fill="#9494ff" stroke="#9494ff"/>
<path d="M1622.2 646.2l-4.1-4.2" class="e"/>
<path d="M1626 658l.3-7.3-50.2 29-.3 7.3z" fill="#5a5ab4" stroke="#5a5ab4"/>
<path d="M1626 658l-50.2 29M1626 658l.3-7.3" class="e"/>
<path d="M1567.5 737.4l2.2-5.8-2.3 1.3-2.2 5.8z" fill="#5d5dba" stroke="#5d5dba"/>
<path d="M1567.5 737.4l2.2-5.8" class="e"/>
<path d="M1611.4 628.1l1-.6-50.2 29-1 .6z" fill="#5a5ab4" stroke="#5a5ab4"/>
<path d="M1611.4 628.1l1-.6M1612.4 627.5l-50.2 29" class="e"/>
<path d="M1626.3 650.7l-4.1-4.5-50.2 29 4.1 4.5z" fill="#8c8cff" stroke="#8c8cff"/>
<path d="M1626.3 650.7l-50.2 29M1626.3 650.7l-4.1-4.5" class="e"/>
<path d="M1478.6 387.1l-.8-1.8-50.2 28.9 .8 1.9z" fill="#5a5ab4" stroke="#5a5ab4"/>
<path d="M1478.6 387.1l-.8-1.8" class="e"/>
<path d="M1480 388.9l-1.4-1.8-50.2 29 1.4 1.8z" fill="#7b7be9" stroke="#7b7be9"/>
<path d="M1480 388.9l-1.4-1.8" class="e"/>
<path d="M1477.8 385.3l-.1-1.6-50.2 28.9 .1 1.6z" fill="#5a5ab4" stroke="#5a5ab4"/>
<path d="M1477.8 385.3l-.1-1.6" class="e"/>
<path d="M1481.6 390.4l-1.6-1.5-50.2 29 1.6 1.4z" fill="#9e9eff" stroke="#9e9eff"/>
<path d="M1481.6 390.4l-1.6-1.5" class="e"/>
<path d="M1483.3 391.4l-1.7-1-50.2 28.9 1.6 1z" fill="#c4bfff" stroke="#c4bfff"/>
<path d="M1483.3 391.4l-1.7-1" class="e"/>
<path d="M1477.7 383.7l-.8-5.3-50.2 29 .8 5.2z" fill="#5a5ab4" stroke="#5a5ab4"/>
<path d="M1477.7 383.7l-50.2 28.9M1477.7 383.7l-.8-5.3" class="e"/>
<path d="M1484.8 391.7l-1.5-.3-50.3 28.9 1.6 .4z" fill="#d2caff" stroke="#d2caff"/>
<path d="M1484.8 391.7l-1.5-.3" class="e"/>
<path d="M1609.4 607.2l-1-2-50.2 29 1 2z" fill="#5d5dba" stroke="#5d5dba"/>
<path d="M1609.4 607.2l-1-2" class="e"/>
<path d="M1610.6 608.8l-1.2-1.6-50.2 29 1.2 1.6z" fill="#7f7fef" stroke="#7f7fef"/>
<path d="M1610.6 608.8l-1.2-1.6" class="e"/>
<path d="M1485.9 391.3l-1.1 .4-50.2 29 1.1-.4z" fill="#bdb8ff" stroke="#bdb8ff"/>
<path d="M1485.9 391.3l-50.2 29M1485.9 391.3l-1.1 .4" class="e"/>
<path d="M1608.4 605.2l-.5-2.2-50.2 29 .5 2.2z" fill="#5a5ab4" stroke="#5a5ab4"/>
<path d="M1608.4 605.2l-.5-2.2" class="e"/>
<path d="M1476.9 378.4l-1.1-5.6-50.2 29 1.1 5.6z" fill="#5a5ab4" stroke="#5a5ab4"/>
<path d="M1476.9 378.4l-1.1-5.6" class="e"/>
<path d="M1611.9 609.7l-1.3-.9-50.2 29 1.3 .8z" fill="#b9b5ff" stroke="#b9b5ff"/>
<path d="M1611.9 609.7l-1.3-.9" class="e"/>
<path d="M1607.9 603l-.1-2-50.2 29 .1 2z" fill="#5a5ab4" stroke="#5a5ab4"/>
<path d="M1607.9 603l-.1-2" class="e"/>
<path d="M1474.3 367.1l-6.3-4.3-50.2 29 6.3 4.3z" fill="#bcb8ff" stroke="#bcb8ff"/>
<path d="M1474.3 367.1l-6.3-4.3M1468 362.8l-50.2 29" class="e"/>
<path d="M1616.1 612.8l-4.2-3.1-50.2 28.9 4.2 3.1z" fill="#b4b1ff" stroke="#b4b1ff"/>
<path d="M1616.1 612.8l-4.2-3.1M1611.9 609.7l-50.2 28.9" class="e"/>
<path d="M1607.8 601l.4-1.5-50.2 29-.4 1.5z" fill="#5a5ab4" stroke="#5a5ab4"/>
<path d="M1607.8 601l.4-1.5" class="e"/>
<path d="M1475.8 372.8l-1.5-5.7-50.2 29 1.5 5.7z" fill="#5a5ab4" stroke="#5a5ab4"/>
<path d="M1475.8 372.8l-1.5-5.7M1474.3 367.1l-50.2 29" class="e"/>
<path d="M1608.2 599.5l.8-.9-50.2 29-.8 .9z" fill="#5a5ab4" stroke="#5a5ab4"/>
<path d="M1608.2 599.5l.8-.9M1609 598.6l-50.2 29" class="e"/>
<path d="M1620.4 616.3l-4.3-3.5-50.2 28.9 4.3 3.6z" fill="#a8a7ff" stroke="#a8a7ff"/>
<path d="M1620.4 616.3l-4.3-3.5" class="e"/>
<path d="M1375.3 368.8l-6.2-1.9-2.3 1.3 6.3 1.9z" fill="#c5bfff" stroke="#c5bfff"/>
<path d="M1375.3 368.8l-6.2-1.9" class="e"/>
<path d="M1625.5 628l-.8-7.7-50.2 29 .8 7.7z" fill="#5a5ab4" stroke="#5a5ab4"/>
<path d="M1625.5 628l-50.2 29M1625.5 628l-.8-7.7" class="e"/>
<path d="M1624.7 620.3l-4.3-4-50.2 29 4.3 4z" fill="#9f9fff" stroke="#9f9fff"/>
<path d="M1624.7 620.3l-50.2 29M1624.7 620.3l-4.3-4" class="e"/>
<path d="M1502.7 407.8l-1.1-1.9-50.2 29 1.1 1.9z" fill="#6d6dd3" stroke="#6d6dd3"/>
<path d="M1502.7 407.8l-1.1-1.9" class="e"/>
<path d="M1501.6 405.9l-.7-1.9-50.2 29 .7 1.9z" fill="#5a5ab4" stroke="#5a5ab4"/>
<path d="M1501.6 405.9l-.7-1.9" class="e"/>
<path d="M1504.2 409.5l-1.5-1.7-50.2 29 1.5 1.7z" fill="#8b8bff" stroke="#8b8bff"/>
<path d="M1504.2 409.5l-1.5-1.7" class="e"/>
<path d="M1500.9 404l.1-1.5-50.2 29-.1 1.5z" fill="#5a5ab4" stroke="#5a5ab4"/>
<path d="M1500.9 404l.1-1.5" class="e"/>
<path d="M1505.9 410.8l-1.7-1.3-50.2 29 1.7 1.3z" fill="#b0aeff" stroke="#b0aeff"/>
<path d="M1505.9 410.8l-1.7-1.3" class="e"/>
<path d="M1507.5 411.4l-1.6-.6-50.2 29 1.6 .6z" fill="#d0c9ff" stroke="#d0c9ff"/>
<path d="M1507.5 411.4l-1.6-.6" class="e"/>
<path d="M1574.7 713.1l1.2-6.6-2.2 1.3-1.2 6.6z" fill="#6262c2" stroke="#6262c2"/>
<path d="M1574.7 713.1l1.2-6.6" class="e"/>
<path d="M1501 402.5l-.1-4.9-50.2 28.9 .1 5z" fill="#5a5ab4" stroke="#5a5ab4"/>
<path d="M1501 402.5l-50.2 29M1501 402.5l-.1-4.9" class="e"/>
<path d="M1603.6 577.6l-1.1-1.9-50.2 29 1.1 1.9z" fill="#6b6bd0" stroke="#6b6bd0"/>
<path d="M1603.6 577.6l-1.1-1.9" class="e"/>
<path d="M1602.5 575.7l-.8-2.2-50.2 29 .8 2.2z" fill="#5a5ab4" stroke="#5a5ab4"/>
<path d="M1602.5 575.7l-.8-2.2" class="e"/>
<path d="M1604.9 579.1l-1.3-1.5-50.2 29 1.3 1.4z" fill="#9090ff" stroke="#9090ff"/>
<path d="M1604.9 579.1l-1.3-1.5" class="e"/>
<path d="M1508.7 411.3l-1.2 .1-50.2 29 1.2-.1z" fill="#c6c0ff" stroke="#c6c0ff"/>
<path d="M1508.7 411.3l-50.2 29M1508.7 411.3l-1.2 .1" class="e"/>
<path d="M1601.7 573.5l-.4-2.1-50.2 29 .4 2.1z" fill="#5a5ab4" stroke="#5a5ab4"/>
<path d="M1601.7 573.5l-.4-2.1" class="e"/>
<path d="M1606.2 579.7l-1.3-.6-50.2 28.9 1.3 .7z" fill="#cbc4ff" stroke="#cbc4ff"/>
<path d="M1606.2 579.7l-1.3-.6" class="e"/>
<path d="M1601.3 571.4l.2-1.7-50.2 29-.2 1.7z" fill="#5a5ab4" stroke="#5a5ab4"/>
<path d="M1601.3 571.4l.2-1.7" class="e"/>
<path d="M1500.9 397.6l-.5-5.3-50.2 28.9 .5 5.3z" fill="#5a5ab4" stroke="#5a5ab4"/>
<path d="M1500.9 397.6l-.5-5.3" class="e"/>
<path d="M1610.5 582.1l-4.3-2.4-50.2 29 4.3 2.4z" fill="#c7c1ff" stroke="#c7c1ff"/>
<path d="M1610.5 582.1l-4.3-2.4M1606.2 579.7l-50.2 29" class="e"/>
<path d="M1601.5 569.7l.6-1.1-50.2 29-.6 1.1z" fill="#5a5ab4" stroke="#5a5ab4"/>
<path d="M1601.5 569.7l.6-1.1M1602.1 568.6l-50.2 29" class="e"/>
<path d="M1499.6 386.7l-6.2-5.3-50.2 29 6.2 5.3z" fill="#a7a6ff" stroke="#a7a6ff"/>
<path d="M1499.6 386.7l-6.2-5.3M1493.4 381.4l-50.2 29" class="e"/>
<path d="M1500.4 392.3l-.8-5.6-50.2 29 .8 5.5z" fill="#5a5ab4" stroke="#5a5ab4"/>
<path d="M1500.4 392.3l-.8-5.6M1499.6 386.7l-50.2 29" class="e"/>
<path d="M1614.9 584.9l-4.4-2.8-50.2 29 4.4 2.8z" fill="#bdb9ff" stroke="#bdb9ff"/>
<path d="M1614.9 584.9l-4.4-2.8" class="e"/>
<path d="M1524.5 430.1l-1-2-50.2 29 1 2z" fill="#5f5fbd" stroke="#5f5fbd"/>
<path d="M1524.5 430.1l-1-2" class="e"/>
<path d="M1525.9 432l-1.4-1.9-50.2 29 1.3 1.9z" fill="#7b7be9" stroke="#7b7be9"/>
<path d="M1525.9 432l-1.4-1.9" class="e"/>
<path d="M1523.5 428.1l-.4-1.8-50.2 28.9 .4 1.9z" fill="#5a5ab4" stroke="#5a5ab4"/>
<path d="M1523.5 428.1l-.4-1.8" class="e"/>
<path d="M1527.5 433.5l-1.6-1.5-50.3 29 1.6 1.5z" fill="#9b9bff" stroke="#9b9bff"/>
<path d="M1527.5 433.5l-1.6-1.5" class="e"/>
<path d="M1523.1 426.3l.2-1.4-50.2 29-.2 1.3z" fill="#5a5ab4" stroke="#5a5ab4"/>
<path d="M1523.1 426.3l.2-1.4" class="e"/>
<path d="M1529 434.4l-1.5-.9-50.3 29 1.6 .9z" fill="#c4bfff" stroke="#c4bfff"/>
<path d="M1529 434.4l-1.5-.9" class="e"/>
<path d="M1593.1 545.7l-1-2.2-50.2 29 1 2.1z" fill="#5d5dba" stroke="#5d5dba"/>
<path d="M1593.1 545.7l-1-2.2" class="e"/>
<path d="M1594.4 547.5l-1.3-1.8-50.2 28.9 1.3 1.8z" fill="#7979e6" stroke="#7979e6"/>
<path d="M1594.4 547.5l-1.3-1.8" class="e"/>
<path d="M1621 596.3l-1.7-8.1-50.2 29 1.7 8.1z" fill="#5a5ab4" stroke="#5a5ab4"/>
<path d="M1621 596.3l-50.2 29M1621 596.3l-1.7-8.1" class="e"/>
<path d="M1619.3 588.2l-4.4-3.3-50.2 29 4.4 3.3z" fill="#b4b1ff" stroke="#b4b1ff"/>
<path d="M1619.3 588.2l-50.2 29M1619.3 588.2l-4.4-3.3" class="e"/>
<path d="M1592.1 543.5l-.6-2.1-50.2 28.9 .6 2.2z" fill="#5a5ab4" stroke="#5a5ab4"/>
<path d="M1592.1 543.5l-.6-2.1" class="e"/>
<path d="M1595.8 548.7l-1.4-1.2-50.2 28.9 1.4 1.3z" fill="#a3a3ff" stroke="#a3a3ff"/>
<path d="M1595.8 548.7l-1.4-1.2" class="e"/>
<path d="M1530.4 434.6l-1.4-.2-50.2 29 1.4 .2z" fill="#cfc8ff" stroke="#cfc8ff"/>
<path d="M1530.4 434.6l-50.2 29M1530.4 434.6l-1.4-.2" class="e"/>
<path d="M1591.5 541.4l-.1-1.9-50.2 29 .1 1.8z" fill="#5a5ab4" stroke="#5a5ab4"/>
<path d="M1591.5 541.4l-.1-1.9" class="e"/>
<path d="M1597.1 549.1l-1.3-.4-50.2 29 1.2 .4z" fill="#d2cbff" stroke="#d2cbff"/>
<path d="M1597.1 549.1l-1.3-.4" class="e"/>
<path d="M1523.3 424.9l.5-4.6-50.2 29-.5 4.6z" fill="#5a5ab4" stroke="#5a5ab4"/>
<path d="M1523.3 424.9l-50.2 29M1523.3 424.9l.5-4.6" class="e"/>
<path d="M1591.4 539.5l.5-1.3-50.2 29-.5 1.3z" fill="#5a5ab4" stroke="#5a5ab4"/>
<path d="M1591.4 539.5l.5-1.3" class="e"/>
<path d="M1601.3 550.7l-4.2-1.6-50.3 29 4.3 1.6z" fill="#d2caff" stroke="#d2caff"/>
<path d="M1601.3 550.7l-4.2-1.6M1597.1 549.1l-50.3 29" class="e"/>
<path d="M1591.9 538.2l.9-.6-50.2 29-.9 .6z" fill="#5a5ab4" stroke="#5a5ab4"/>
<path d="M1591.9 538.2l.9-.6" class="e"/>
<path d="M1545.9 457.2l-1.2-2-50.2 29 1.2 2z" fill="#6d6dd3" stroke="#6d6dd3"/>
<path d="M1545.9 457.2l-1.2-2" class="e"/>
<path d="M1544.7 455.2l-.8-2.1-50.2 29 .8 2.1z" fill="#5a5ab4" stroke="#5a5ab4"/>
<path d="M1544.7 455.2l-.8-2.1" class="e"/>
<path d="M1547.4 459l-1.5-1.8-50.2 29 1.5 1.8z" fill="#8989fd" stroke="#8989fd"/>
<path d="M1547.4 459l-1.5-1.8" class="e"/>
<path d="M1543.9 453.1l-.2-1.7-50.2 29 .2 1.7z" fill="#5a5ab4" stroke="#5a5ab4"/>
<path d="M1543.9 453.1l-.2-1.7" class="e"/>
<path d="M1523.8 420.3l.3-4.9-50.3 29-.2 4.9z" fill="#5a5ab4" stroke="#5a5ab4"/>
<path d="M1523.8 420.3l.3-4.9" class="e"/>
<path d="M1549 460.2l-1.6-1.2-50.2 29 1.5 1.2z" fill="#b0aeff" stroke="#b0aeff"/>
<path d="M1549 460.2l-1.6-1.2" class="e"/>
<path d="M1580.6 515.7l-1.2-2-50.2 28.9 1.2 2.1z" fill="#6b6bd0" stroke="#6b6bd0"/>
<path d="M1580.6 515.7l-1.2-2" class="e"/>
<path d="M1579.4 513.7l-.8-2.2-50.2 29 .8 2.1z" fill="#5a5ab4" stroke="#5a5ab4"/>
<path d="M1579.4 513.7l-.8-2.2" class="e"/>
<path d="M1582 517.4l-1.4-1.7-50.2 29 1.4 1.6z" fill="#8989fd" stroke="#8989fd"/>
<path d="M1582 517.4l-1.4-1.7" class="e"/>
<path d="M1543.7 451.4l.4-1.2-50.2 29-.4 1.2z" fill="#5a5ab4" stroke="#5a5ab4"/>
<path d="M1543.7 451.4l.4-1.2" class="e"/>
<path d="M1578.6 511.5l-.3-2-50.2 29 .3 2z" fill="#5a5ab4" stroke="#5a5ab4"/>
<path d="M1578.6 511.5l-.3-2" class="e"/>
<path d="M1583.4 518.3l-1.4-.9-50.2 28.9 1.4 1z" fill="#b9b5ff" stroke="#b9b5ff"/>
<path d="M1583.4 518.3l-1.4-.9" class="e"/>
<path d="M1400.7 379.4l-6.3-3.1-2.3 1.4 6.4 3.1z" fill="#c5c0ff" stroke="#c5c0ff"/>
<path d="M1400.7 379.4l-6.3-3.1" class="e"/>
<path d="M1550.4 460.6l-1.4-.4-50.3 29 1.4 .4z" fill="#d2cbff" stroke="#d2cbff"/>
<path d="M1550.4 460.6l-1.4-.4" class="e"/>
<path d="M1563.9 484.7l-1.1-2.2-50.2 29 1.1 2.2z" fill="#5f5fbd" stroke="#5f5fbd"/>
<path d="M1563.9 484.7l-1.1-2.2" class="e"/>
<path d="M1565.2 486.6l-1.3-1.9-50.2 29 1.3 1.9z" fill="#7979e6" stroke="#7979e6"/>
<path d="M1565.2 486.6l-1.3-1.9" class="e"/>
<path d="M1592.8 537.6l2.9-1.9-50.2 29-2.9 1.9z" fill="#5a5ab4" stroke="#5a5ab4"/>
<path d="M1592.8 537.6l-50.2 29M1592.8 537.6l2.9-1.9" class="e"/>
<path d="M1562.8 482.5l-.5-2-50.2 29 .5 2z" fill="#5a5ab4" stroke="#5a5ab4"/>
<path d="M1562.8 482.5l-.5-2" class="e"/>
<path d="M1578.3 509.5l.2-1.5-50.2 29-.2 1.5z" fill="#5a5ab4" stroke="#5a5ab4"/>
<path d="M1578.3 509.5l.2-1.5" class="e"/>
<path d="M1566.8 488l-1.6-1.4-50.2 29 1.5 1.4z" fill="#9b9bff" stroke="#9b9bff"/>
<path d="M1566.8 488l-1.6-1.4" class="e"/>
<path d="M1584.7 518.5l-1.3-.2-50.2 29 1.3 .2z" fill="#cfc8ff" stroke="#cfc8ff"/>
<path d="M1584.7 518.5l-1.3-.2" class="e"/>
<path d="M1605.6 552.7l-4.3-2-50.2 29 4.3 2z" fill="#cdc6ff" stroke="#cdc6ff"/>
<path d="M1605.6 552.7l-4.3-2" class="e"/>
<path d="M1551.4 460.3l-1 .3-50.3 29 1.1-.3z" fill="#bcb8ff" stroke="#bcb8ff"/>
<path d="M1551.4 460.3l-1 .3" class="e"/>
<path d="M1609.7 565.5l3.1-2-50.2 29-3.1 2z" fill="#5a5ab4" stroke="#5a5ab4"/>
<path d="M1609.7 565.5l-50.2 29M1609.7 565.5l3.1-2" class="e"/>
<path d="M1562.3 480.5l0-1.6-50.2 29 0 1.6z" fill="#5a5ab4" stroke="#5a5ab4"/>
<path d="M1562.3 480.5l0-1.6" class="e"/>
<path d="M1568.2 488.8l-1.4-.8-50.3 29 1.5 .7z" fill="#cac4ff" stroke="#cac4ff"/>
<path d="M1568.2 488.8l-1.4-.8" class="e"/>
<path d="M1524.1 415.4l-.1-5.3-50.3 29 .1 5.3z" fill="#5a5ab4" stroke="#5a5ab4"/>
<path d="M1524.1 415.4l-.1-5.3" class="e"/>
<path d="M1578.5 508l.8-.8-50.2 29-.8 .8z" fill="#5a5ab4" stroke="#5a5ab4"/>
<path d="M1578.5 508l.8-.8" class="e"/>
<path d="M1544.1 450.2l1.2-4-50.2 29-1.2 4z" fill="#5a5ab4" stroke="#5a5ab4"/>
<path d="M1544.1 450.2l-50.2 29M1544.1 450.2l1.2-4" class="e"/>
<path d="M1524 410.1l-6-6.1-50.2 29 5.9 6.1z" fill="#9393ff" stroke="#9393ff"/>
<path d="M1524 410.1l-50.3 29M1524 410.1l-6-6.1M1518 404l-50.2 29" class="e"/>
<path d="M1562.3 478.9l.6-1-50.2 29-.6 1z" fill="#5a5ab4" stroke="#5a5ab4"/>
<path d="M1562.3 478.9l.6-1" class="e"/>
<path d="M1569.3 488.7l-1.1 .1-50.2 28.9 1.1 0z" fill="#c6c0ff" stroke="#c6c0ff"/>
<path d="M1569.3 488.7l-1.1 .1" class="e"/>
<path d="M1537.6 430.9l-3.3 1.4-50.2 29 3.3-1.4z" fill="#bbb7ff" stroke="#bbb7ff"/>
<path d="M1537.6 430.9l-3.3 1.4M1534.3 432.3l-50.2 29" class="e"/>
<path d="M1588.7 519.3l-4-.8-50.2 29 4 .7z" fill="#d1c9ff" stroke="#d1c9ff"/>
<path d="M1588.7 519.3l-4-.8M1584.7 518.5l-50.2 29" class="e"/>
<path d="M1554.8 459.4l-3.4 .9-50.2 29 3.4-1z" fill="#bebaff" stroke="#bebaff"/>
<path d="M1554.8 459.4l-3.4 .9M1551.4 460.3l-50.2 29" class="e"/>
<path d="M1610.1 555.2l-4.5-2.5-50.2 29 4.5 2.5z" fill="#c7c1ff" stroke="#c7c1ff"/>
<path d="M1610.1 555.2l-4.5-2.5" class="e"/>
<path d="M1579.3 507.2l2.3-2.7-50.2 29-2.3 2.7z" fill="#5a5ab4" stroke="#5a5ab4"/>
<path d="M1579.3 507.2l-50.2 29M1579.3 507.2l2.3-2.7" class="e"/>
<path d="M1595.7 535.7l2.7-2.5-50.2 29-2.7 2.5z" fill="#5a5ab4" stroke="#5a5ab4"/>
<path d="M1595.7 535.7l2.7-2.5" class="e"/>
<path d="M1612.8 563.5l-2.7-8.3-50.2 29 2.7 8.3z" fill="#5a5ab4" stroke="#5a5ab4"/>
<path d="M1612.8 563.5l-50.2 29M1612.8 563.5l-2.7-8.3M1610.1 555.2l-50.2 29" class="e"/>
<path d="M1578.1 685.7l.2-7.3-2.2 1.3-.3 7.3z" fill="#6767ca" stroke="#6767ca"/>
<path d="M1578.1 685.7l.2-7.3" class="e"/>
<path d="M1562.9 477.9l1.8-3.5-50.2 29-1.8 3.5z" fill="#5a5ab4" stroke="#5a5ab4"/>
<path d="M1562.9 477.9l-50.2 29M1562.9 477.9l1.8-3.5" class="e"/>
<path d="M1573.1 488.6l-3.8 .1-50.2 29 3.8-.1z" fill="#c8c2ff" stroke="#c8c2ff"/>
<path d="M1573.1 488.6l-3.8 .1M1569.3 488.7l-50.2 29" class="e"/>
<path d="M1545.3 446.2l.9-4.5-50.2 29-.9 4.5z" fill="#5a5ab4" stroke="#5a5ab4"/>
<path d="M1545.3 446.2l.9-4.5" class="e"/>
<path d="M1593 520.5l-4.3-1.2-50.2 28.9 4.3 1.3z" fill="#d2cbff" stroke="#d2cbff"/>
<path d="M1593 520.5l-4.3-1.2" class="e"/>
<path d="M1541.2 430l-3.6 .9-50.2 29 3.6-1z" fill="#bfbaff" stroke="#bfbaff"/>
<path d="M1541.2 430l-3.6 .9" class="e"/>
<path d="M1558.6 458.9l-3.8 .5-50.2 28.9 3.7-.4z" fill="#c4beff" stroke="#c4beff"/>
<path d="M1558.6 458.9l-3.8 .5" class="e"/>
<path d="M1581.6 504.5l2.2-3.2-50.2 29-2.2 3.2z" fill="#5a5ab4" stroke="#5a5ab4"/>
<path d="M1581.6 504.5l2.2-3.2" class="e"/>
<path d="M1598.4 533.2l2.5-2.8-50.2 28.9-2.5 2.9z" fill="#5a5ab4" stroke="#5a5ab4"/>
<path d="M1598.4 533.2l2.5-2.8" class="e"/>
<path d="M1564.7 474.4l1.5-3.8-50.2 29-1.5 3.8z" fill="#5a5ab4" stroke="#5a5ab4"/>
<path d="M1564.7 474.4l1.5-3.8" class="e"/>
<path d="M1546.2 441.7l.6-4.8-50.3 29-.5 4.8z" fill="#5a5ab4" stroke="#5a5ab4"/>
<path d="M1546.2 441.7l.6-4.8" class="e"/>
<path d="M1577.1 489l-4-.4-50.2 29 4 .3z" fill="#cdc7ff" stroke="#cdc7ff"/>
<path d="M1577.1 489l-4-.4" class="e"/>
<path d="M1546.8 436.9l-5.6-6.9-50.2 28.9 5.5 7z" fill="#8282f3" stroke="#8282f3"/>
<path d="M1546.8 436.9l-50.3 29M1546.8 436.9l-5.6-6.9M1541.2 430l-50.2 28.9" class="e"/>
<path d="M1597.4 522.2l-4.4-1.7-50.2 29 4.4 1.6z" fill="#d2caff" stroke="#d2caff"/>
<path d="M1597.4 522.2l-4.4-1.7" class="e"/>
<path d="M1600.9 530.4l-3.5-8.2-50.2 28.9 3.5 8.2z" fill="#5a5ab4" stroke="#5a5ab4"/>
<path d="M1600.9 530.4l-50.2 28.9M1600.9 530.4l-3.5-8.2M1597.4 522.2l-50.2 28.9" class="e"/>
<path d="M1562.5 458.8l-3.9 .1-50.3 29 4-.1z" fill="#c8c2ff" stroke="#c8c2ff"/>
<path d="M1562.5 458.8l-3.9 .1" class="e"/>
<path d="M1583.8 501.3l1.9-3.6-50.2 29-1.9 3.6z" fill="#5a5ab4" stroke="#5a5ab4"/>
<path d="M1583.8 501.3l1.9-3.6" class="e"/>
<path d="M1566.2 470.6l1.3-4.3-50.2 29-1.3 4.3z" fill="#5a5ab4" stroke="#5a5ab4"/>
<path d="M1566.2 470.6l1.3-4.3" class="e"/>
<path d="M1581.4 489.7l-4.3-.7-50.2 28.9 4.3 .8z" fill="#d1c9ff" stroke="#d1c9ff"/>
<path d="M1581.4 489.7l-4.3-.7" class="e"/>
<path d="M1567.5 466.3l-5-7.5-50.2 29 5 7.5z" fill="#7373dd" stroke="#7373dd"/>
<path d="M1567.5 466.3l-50.2 29M1567.5 466.3l-5-7.5M1562.5 458.8l-50.2 29" class="e"/>
<path d="M1585.7 497.7l-4.3-8-50.2 29 4.3 8z" fill="#6565c7" stroke="#6565c7"/>
<path d="M1585.7 497.7l-50.2 29M1585.7 497.7l-4.3-8M1581.4 489.7l-50.2 29" class="e"/>
<path d="M1426.4 394.8l-6.4-4.3-2.2 1.3 6.3 4.3z" fill="#c3bdff" stroke="#c3bdff"/>
<path d="M1426.4 394.8l-6.4-4.3" class="e"/>
<path d="M1577.5 655.7l-.7-7.7-2.3 1.3 .8 7.7z" fill="#6d6dd4" stroke="#6d6dd4"/>
<path d="M1577.5 655.7l-.7-7.7" class="e"/>
<path d="M1451.7 414.4l-6.2-5.3-2.3 1.3 6.2 5.3z" fill="#bcb7ff" stroke="#bcb7ff"/>
<path d="M1451.7 414.4l-6.2-5.3" class="e"/>
<path d="M1573.1 624l-1.7-8.1-2.3 1.3 1.7 8.1z" fill="#7474de" stroke="#7474de"/>
<path d="M1573.1 624l-1.7-8.1" class="e"/>
<path d="M1476 437.8l-5.9-6.2-2.3 1.4 5.9 6.1z" fill="#b2afff" stroke="#b2afff"/>
<path d="M1476 437.8l-5.9-6.2" class="e"/>
<path d="M1564.8 591.2l-2.6-8.3-2.3 1.3 2.7 8.3z" fill="#7c7cea" stroke="#7c7cea"/>
<path d="M1564.8 591.2l-2.6-8.3" class="e"/>
<path d="M1498.8 464.6l-5.5-7-2.3 1.3 5.5 7z" fill="#a6a5ff" stroke="#a6a5ff"/>
<path d="M1498.8 464.6l-5.5-7" class="e"/>
<path d="M1552.9 558l-3.5-8.2-2.2 1.3 3.5 8.2z" fill="#8484f7" stroke="#8484f7"/>
<path d="M1552.9 558l-3.5-8.2" class="e"/>
<path d="M1519.5 494l-4.9-7.5-2.3 1.3 5 7.5z" fill="#9a9aff" stroke="#9a9aff"/>
<path d="M1519.5 494l-4.9-7.5" class="e"/>
<path d="M1537.7 525.4l-4.2-8-2.3 1.3 4.3 8z" fill="#8e8eff" stroke="#8e8eff"/>
<path d="M1537.7 525.4l-4.2-8" class="e"/>
<path d="M1553.2 651.4l-.2-10.3-.9-10.6-1.4-10.9-2-11-2.6-11.2-3.1-11.3-3.6-11.4-4.2-11.3-4.6-11.3-5.1-11.3-5.6-11-6-10.9-6.5-10.7-6.8-10.4-7.1-10-7.5-9.7-7.8-9.3-8-8.8-8.2-8.3-8.4-7.8-8.6-7.3-8.7-6.7-8.8-6-8.7-5.4-8.8-4.8-8.8-4-8.7-3.4-8.6-2.6-8.4-1.9-8.2-1.2-8-.4-7.8 .3-7.5 1-7.1 1.8-6.8 2.5-6.4 3.3-6.1 3.9-5.5 4.6-5.2 5.3-4.6 6-4.2 6.6-3.6 7.1-3.1 7.7-2.6 8.3-2 8.7-1.4 9.2-.9 9.6-.2 10 .2 10.4 .9 10.6 1.4 10.8 2 11.1 2.6 11.2 3.1 11.3 3.6 11.3 4.2 11.4 4.6 11.3 5.2 11.2 5.5 11.1 6.1 10.9 6.4 10.6 6.8 10.4 7.1 10.1 7.5 9.6 7.8 9.3 8 8.8 8.2 8.4 8.4 7.8 8.6 7.2 8.7 6.7 8.8 6.1 8.8 5.4 8.7 4.7 8.8 4.1 8.7 3.3 8.6 2.7 8.4 1.9 8.2 1.2 8 .4 7.8-.3 7.5-1.1 7.1-1.7 6.8-2.6 6.5-3.2 6-3.9 5.6-4.7 5.1-5.3 4.6-5.9 4.2-6.6 3.6-7.2 3.1-7.7 2.6-8.2 2-8.8 1.4-9.2 .9-9.6z" fill="#8a8aff"/>
<path d="M1310.4 621.5l6.2 11.2 2-1.1-6.2-11.2z" fill="#7f7fee" stroke="#7f7fee"/>
<path d="M1316.6 632.7l6.7 11.1 1.9-1.2-6.6-11z" fill="#8686f9" stroke="#8686f9"/>
<path d="M1312.4 620.4l6.2 11.2 2-1.2-6.1-11.1z" fill="#8d8dff" stroke="#8d8dff"/>
<path d="M1318.6 631.6l6.6 11 2-1.3-6.6-10.9z" fill="#9494ff" stroke="#9494ff"/>
<path d="M1300 626.9l6.5 11.7 8.1-4.7-6.3-11.3z" fill="#8d8dff" stroke="#8d8dff"/>
<path d="M1306.5 638.6l6.9 11.4 7.9-5-6.7-11.1z" fill="#9494ff" stroke="#9494ff"/>
<path d="M1300 626.9l6.5 11.7M1306.5 638.6l6.9 11.4" class="e"/>
<path d="M1304.6 610l5.8 11.5 2-1.1-5.7-11.4z" fill="#7878e4" stroke="#7878e4"/>
<path d="M1323.3 643.8l7 10.7 2-1.3-7.1-10.6z" fill="#8e8eff" stroke="#8e8eff"/>
<path d="M1306.7 609l5.7 11.4 2.1-1.1-5.7-11.3z" fill="#8686f9" stroke="#8686f9"/>
<path d="M1325.2 642.6l7.1 10.6 1.8-1.3-6.9-10.6z" fill="#9c9cff" stroke="#9c9cff"/>
<path d="M1314.5 619.3l6.1 11.1 1.8-1-6-11z" fill="#9090ff" stroke="#9090ff"/>
<path d="M1320.6 630.4l6.6 10.9 1.7-1.1-6.5-10.8z" fill="#9494ff" stroke="#9494ff"/>
<path d="M1308.3 622.6l6.3 11.3 2-1.2-6.2-11.2z" fill="#6e6ed4" stroke="#6e6ed4"/>
<path d="M1314.6 633.9l6.7 11.1 2-1.2-6.7-11.1z" fill="#7474de" stroke="#7474de"/>
<path d="M1314.6 633.9l-6.3-11.3M1321.3 645l-6.7-11.1" class="e"/>
<path d="M1294.1 615l5.9 11.9 8.3-4.3-5.7-11.5z" fill="#8686f9" stroke="#8686f9"/>
<path d="M1313.4 650l7.3 11.1 7.6-5.4-7-10.7z" fill="#9c9cff" stroke="#9c9cff"/>
<path d="M1294.1 615l5.9 11.9M1313.4 650l7.3 11.1" class="e"/>
<path d="M1308.8 608l5.7 11.3 1.9-.9-5.7-11.2z" fill="#8c8cff" stroke="#8c8cff"/>
<path d="M1327.2 641.3l6.9 10.6 1.7-1.3-6.9-10.4z" fill="#9898ff" stroke="#9898ff"/>
<path d="M1302.6 611.1l5.7 11.5 2.1-1.1-5.8-11.5z" fill="#6868cb" stroke="#6868cb"/>
<path d="M1321.3 645l7 10.7 2-1.2-7-10.7z" fill="#7a7ae7" stroke="#7a7ae7"/>
<path d="M1308.3 622.6l-5.7-11.5M1328.3 655.7l-7-10.7" class="e"/>
<path d="M1299.3 598.4l5.3 11.6 2.1-1-5.3-11.6z" fill="#7272db" stroke="#7272db"/>
<path d="M1330.3 654.5l7.4 10.4 1.9-1.3-7.3-10.4z" fill="#9797ff" stroke="#9797ff"/>
<path d="M1301.4 597.4l5.3 11.6 2.1-1-5.2-11.5z" fill="#8080f0" stroke="#8080f0"/>
<path d="M1332.3 653.2l7.3 10.4 1.8-1.4-7.3-10.3z" fill="#a5a4ff" stroke="#a5a4ff"/>
<path d="M1316.4 618.4l6 11 1.5-.8-6.1-10.9z" fill="#8c8cff" stroke="#8c8cff"/>
<path d="M1322.4 629.4l6.5 10.8 1.4-1-6.4-10.6z" fill="#8d8dff" stroke="#8d8dff"/>
<path d="M1323.9 628.6l-6.1-10.9M1330.3 639.2l-6.4-10.6" class="e"/>
<path d="M1288.6 603l5.5 12 8.5-3.9-5.4-11.6z" fill="#8080f0" stroke="#8080f0"/>
<path d="M1320.7 661.1l7.7 10.8 7.3-5.7-7.4-10.5z" fill="#a5a4ff" stroke="#a5a4ff"/>
<path d="M1288.6 603l5.5 12M1320.7 661.1l7.7 10.8" class="e"/>
<path d="M1303.6 596.5l5.2 11.5 1.9-.8-5.2-11.3z" fill="#8888fc" stroke="#8888fc"/>
<path d="M1334.1 651.9l7.3 10.3 1.6-1.4-7.2-10.2z" fill="#9c9cff" stroke="#9c9cff"/>
<path d="M1310.7 607.2l5.7 11.2 1.4-.7-5.5-11.1z" fill="#8b8bff" stroke="#8b8bff"/>
<path d="M1328.9 640.2l6.9 10.4 1.3-1-6.8-10.4z" fill="#8e8eff" stroke="#8e8eff"/>
<path d="M1317.8 617.7l-5.5-11.1M1337.1 649.6l-6.8-10.4" class="e"/>
<path d="M1297.2 599.5l5.4 11.6 2-1.1-5.3-11.6z" fill="#6262c1" stroke="#6262c1"/>
<path d="M1328.3 655.7l7.4 10.5 2-1.3-7.4-10.4z" fill="#8080f1" stroke="#8080f1"/>
<path d="M1302.6 611.1l-5.4-11.6M1335.7 666.2l-7.4-10.5" class="e"/>
<path d="M1294.5 586.7l4.8 11.7 2.1-1-4.8-11.6z" fill="#6c6cd2" stroke="#6c6cd2"/>
<path d="M1337.7 664.9l7.8 10 1.8-1.3-7.7-10z" fill="#a0a0ff" stroke="#a0a0ff"/>
<path d="M1296.6 585.8l4.8 11.6 2.2-.9-4.8-11.5z" fill="#7b7be8" stroke="#7b7be8"/>
<path d="M1339.6 663.6l7.7 10 1.8-1.6-7.7-9.8z" fill="#aeacff" stroke="#aeacff"/>
<path d="M1305.5 595.9l5.2 11.3 1.6-.6-5.1-11.1z" fill="#8a8aff" stroke="#8a8aff"/>
<path d="M1335.8 650.6l7.2 10.2 1.2-1.2-7.1-10z" fill="#8f8fff" stroke="#8f8fff"/>
<path d="M1312.3 606.6l-5.1-11.1M1344.2 659.6l-7.1-10" class="e"/>
<path d="M1283.6 590.9l5 12.1 8.6-3.5-4.8-11.7z" fill="#7b7be8" stroke="#7b7be8"/>
<path d="M1328.4 671.9l8 10.4 7.1-6.1-7.8-10z" fill="#aeacff" stroke="#aeacff"/>
<path d="M1283.6 590.9l5 12.1M1328.4 671.9l8 10.4" class="e"/>
<path d="M1298.8 585l4.8 11.5 1.9-.6-4.7-11.5z" fill="#8585f7" stroke="#8585f7"/>
<path d="M1341.4 662.2l7.7 9.8 1.5-1.4-7.6-9.8z" fill="#a0a0ff" stroke="#a0a0ff"/>
<path d="M1292.4 587.8l4.8 11.7 2.1-1.1-4.8-11.7z" fill="#5c5cb8" stroke="#5c5cb8"/>
<path d="M1335.7 666.2l7.8 10 2-1.3-7.8-10z" fill="#8787fa" stroke="#8787fa"/>
<path d="M1297.2 599.5l-4.8-11.7M1343.5 676.2l-7.8-10" class="e"/>
<path d="M1300.8 584.4l4.7 11.5 1.7-.4-4.7-11.3z" fill="#8989fe" stroke="#8989fe"/>
<path d="M1343 660.8l7.6 9.8 1-1.4-7.4-9.6z" fill="#9090ff" stroke="#9090ff"/>
<path d="M1307.2 595.5l-4.7-11.3M1351.6 669.2l-7.4-9.6" class="e"/>
<path d="M1347.3 673.6l8 9.5 1.7-1.6-7.9-9.5z" fill="#b8b4ff" stroke="#b8b4ff"/>
<path d="M1292.4 574.1l4.2 11.7 2.2-.8-4.2-11.6z" fill="#7676e0" stroke="#7676e0"/>
<path d="M1345.5 674.9l8 9.6 1.8-1.4-8-9.5z" fill="#aaa8ff" stroke="#aaa8ff"/>
<path d="M1290.2 574.9l4.3 11.8 2.1-.9-4.2-11.7z" fill="#6666c9" stroke="#6666c9"/>
<path d="M1294.6 573.4l4.2 11.6 2-.6-4.1-11.4z" fill="#8181f2" stroke="#8181f2"/>
<path d="M1349.1 672l7.9 9.5 1.4-1.6-7.8-9.3z" fill="#a4a4ff" stroke="#a4a4ff"/>
<path d="M1279.1 578.7l4.5 12.2 8.8-3.1-4.3-11.8z" fill="#7676e0" stroke="#7676e0"/>
<path d="M1336.4 682.3l8.3 10 6.8-6.5-8-9.6z" fill="#b8b4ff" stroke="#b8b4ff"/>
<path d="M1279.1 578.7l4.5 12.2M1336.4 682.3l8.3 10" class="e"/>
<path d="M1288.1 576l4.3 11.8 2.1-1.1-4.3-11.8z" fill="#5a5ab4" stroke="#5a5ab4"/>
<path d="M1343.5 676.2l8 9.6 2-1.3-8-9.6z" fill="#8d8dff" stroke="#8d8dff"/>
<path d="M1292.4 587.8l-4.3-11.8M1351.5 685.8l-8-9.6" class="e"/>
<path d="M1296.7 573l4.1 11.4 1.7-.2-4.1-11.4z" fill="#8888fc" stroke="#8888fc"/>
<path d="M1350.6 670.6l7.8 9.3 1-1.4-7.8-9.3z" fill="#9191ff" stroke="#9191ff"/>
<path d="M1302.5 584.2l-4.1-11.4M1359.4 678.5l-7.8-9.3" class="e"/>
<path d="M1288.6 562.4l3.8 11.7 2.2-.7-3.7-11.6z" fill="#7171d9" stroke="#7171d9"/>
<path d="M1355.3 683.1l8.3 9.1 1.6-1.7-8.2-9z" fill="#c1bcff" stroke="#c1bcff"/>
<path d="M1286.4 563.2l3.8 11.7 2.2-.8-3.8-11.7z" fill="#6161c0" stroke="#6161c0"/>
<path d="M1353.5 684.5l8.3 9.2 1.8-1.5-8.3-9.1z" fill="#b4b1ff" stroke="#b4b1ff"/>
<path d="M1290.9 561.8l3.7 11.6 2.1-.4-3.7-11.5z" fill="#7e7eed" stroke="#7e7eed"/>
<path d="M1357 681.5l8.2 9 1.3-1.7-8.1-8.9z" fill="#a9a7ff" stroke="#a9a7ff"/>
<path d="M1275.2 566.5l3.9 12.2 9-2.7-3.8-11.8z" fill="#7171d9" stroke="#7171d9"/>
<path d="M1344.7 692.3l8.6 9.4 6.5-6.7-8.3-9.2z" fill="#c1bcff" stroke="#c1bcff"/>
<path d="M1284.3 564.2l3.8 11.8 2.1-1.1-3.8-11.7z" fill="#5a5ab4" stroke="#5a5ab4"/>
<path d="M1351.5 685.8l8.3 9.2 2-1.3-8.3-9.2z" fill="#9494ff" stroke="#9494ff"/>
<path d="M1275.2 566.5l3.9 12.2M1344.7 692.3l8.6 9.4M1288.1 576l-3.8-11.8M1359.8 695l-8.3-9.2" class="e"/>
<path d="M1293 561.5l3.7 11.5 1.7-.2-3.6-11.3z" fill="#8787fb" stroke="#8787fb"/>
<path d="M1358.4 679.9l8.1 8.9 .9-1.5-8-8.8z" fill="#9292ff" stroke="#9292ff"/>
<path d="M1298.4 572.8l-3.6-11.3M1367.4 687.3l-8-8.8" class="e"/>
<path d="M1363.6 692.2l8.4 8.6 1.6-1.8-8.4-8.5z" fill="#cbc4ff" stroke="#cbc4ff"/>
<path d="M1285.4 550.7l3.2 11.7 2.3-.6-3.2-11.5z" fill="#6c6cd2" stroke="#6c6cd2"/>
<path d="M1283.2 551.5l3.2 11.7 2.2-.8-3.2-11.7z" fill="#5c5cb8" stroke="#5c5cb8"/>
<path d="M1361.8 693.7l8.5 8.6 1.7-1.5-8.4-8.6z" fill="#bebaff" stroke="#bebaff"/>
<path d="M1287.7 550.3l3.2 11.5 2.1-.3-3.1-11.4z" fill="#7b7be9" stroke="#7b7be9"/>
<path d="M1365.2 690.5l8.4 8.5 1.2-1.7-8.3-8.5z" fill="#acaaff" stroke="#acaaff"/>
<path d="M1281.1 552.5l3.2 11.7 2.1-1-3.2-11.7z" fill="#5a5ab4" stroke="#5a5ab4"/>
<path d="M1359.8 695l8.6 8.6 1.9-1.3-8.5-8.6z" fill="#9a9aff" stroke="#9a9aff"/>
<path d="M1271.9 554.4l3.3 12.1 9.1-2.3-3.2-11.7z" fill="#6c6cd2" stroke="#6c6cd2"/>
<path d="M1353.3 701.7l8.8 9 6.3-7.1-8.6-8.6z" fill="#cbc4ff" stroke="#cbc4ff"/>
<path d="M1271.9 554.4l3.3 12.1M1284.3 564.2l-3.2-11.7M1353.3 701.7l8.8 9M1368.4 703.6l-8.6-8.6" class="e"/>
<path d="M1289.9 550.1l3.1 11.4 1.8 0-3.1-11.3z" fill="#8686f9" stroke="#8686f9"/>
<path d="M1366.5 688.8l8.3 8.5 .8-1.7-8.2-8.3z" fill="#9393ff" stroke="#9393ff"/>
<path d="M1294.8 561.5l-3.1-11.3M1375.6 695.6l-8.2-8.3" class="e"/>
<path d="M1282.8 539.2l2.6 11.5 2.3-.4-2.6-11.5z" fill="#6868cb" stroke="#6868cb"/>
<path d="M1372 700.8l8.7 8 1.5-1.8-8.6-8z" fill="#d3ccff" stroke="#d3ccff"/>
<path d="M1280.6 539.9l2.6 11.6 2.2-.8-2.6-11.5z" fill="#5a5ab5" stroke="#5a5ab5"/>
<path d="M1370.3 702.3l8.7 8.1 1.7-1.6-8.7-8z" fill="#c8c2ff" stroke="#c8c2ff"/>
<path d="M1285.1 538.8l2.6 11.5 2.2-.2-2.6-11.3z" fill="#7878e4" stroke="#7878e4"/>
<path d="M1373.6 699l8.6 8 1.1-1.9-8.5-7.8z" fill="#b0adff" stroke="#b0adff"/>
<path d="M1278.5 540.9l2.6 11.6 2.1-1-2.6-11.6z" fill="#5a5ab4" stroke="#5a5ab4"/>
<path d="M1368.4 703.6l8.7 8.1 1.9-1.3-8.7-8.1z" fill="#a0a0ff" stroke="#a0a0ff"/>
<path d="M1269.2 542.4l2.7 12 9.2-1.9-2.6-11.6z" fill="#6868cb" stroke="#6868cb"/>
<path d="M1362.1 710.7l9.1 8.3 5.9-7.3-8.7-8.1z" fill="#d3ccff" stroke="#d3ccff"/>
<path d="M1269.2 542.4l2.7 12M1281.1 552.5l-2.6-11.6M1362.1 710.7l9.1 8.3M1377.1 711.7l-8.7-8.1" class="e"/>
<path d="M1287.3 538.8l2.6 11.3 1.8 .1-2.6-11.2z" fill="#8585f8" stroke="#8585f8"/>
<path d="M1374.8 697.3l8.5 7.8 .7-1.7-8.4-7.8z" fill="#9494ff" stroke="#9494ff"/>
<path d="M1291.7 550.2l-2.6-11.2M1384 703.4l-8.4-7.8" class="e"/>
<path d="M1380.7 708.8l8.8 7.5 1.4-1.9-8.7-7.4z" fill="#dbd2ff" stroke="#dbd2ff"/>
<path d="M1280.7 527.8l2.1 11.4 2.3-.4-2-11.3z" fill="#6464c5" stroke="#6464c5"/>
<path d="M1379 710.4l8.9 7.5 1.6-1.6-8.8-7.5z" fill="#d1caff" stroke="#d1caff"/>
<path d="M1278.5 528.4l2.1 11.5 2.2-.7-2.1-11.4z" fill="#5a5ab4" stroke="#5a5ab4"/>
<path d="M1382.2 707l8.7 7.4 1.1-1.9-8.7-7.4z" fill="#b3b0ff" stroke="#b3b0ff"/>
<path d="M1283.1 527.5l2 11.3 2.2 0-2-11.2z" fill="#7676e0" stroke="#7676e0"/>
<path d="M1276.4 529.4l2.1 11.5 2.1-1-2.1-11.5z" fill="#5a5ab4" stroke="#5a5ab4"/>
<path d="M1377.1 711.7l8.9 7.6 1.9-1.4-8.9-7.5z" fill="#a6a5ff" stroke="#a6a5ff"/>
<path d="M1267 530.5l2.2 11.9 9.3-1.5-2.1-11.5z" fill="#6464c5" stroke="#6464c5"/>
<path d="M1371.2 719l9.2 7.8 5.6-7.5-8.9-7.6z" fill="#dbd2ff" stroke="#dbd2ff"/>
<path d="M1267 530.5l2.2 11.9M1278.5 540.9l-2.1-11.5M1371.2 719l9.2 7.8M1386 719.3l-8.9-7.6" class="e"/>
<path d="M1383.3 705.1l8.7 7.4 .6-1.8-8.6-7.3z" fill="#9494ff" stroke="#9494ff"/>
<path d="M1285.3 527.6l2 11.2 1.8 .2-2-11z" fill="#8484f6" stroke="#8484f6"/>
<path d="M1392.6 710.7l-8.6-7.3M1289.1 539l-2-11" class="e"/>
<path d="M1389.5 716.3l9 6.9 1.3-2-8.9-6.8z" fill="#e2d8ff" stroke="#e2d8ff"/>
<path d="M1279.3 516.6l1.4 11.2 2.4-.3-1.5-11z" fill="#6060bf" stroke="#6060bf"/>
<path d="M1387.9 717.9l9 6.9 1.6-1.6-9-6.9z" fill="#d8d0ff" stroke="#d8d0ff"/>
<path d="M1277 517.2l1.5 11.2 2.2-.6-1.4-11.2z" fill="#5a5ab4" stroke="#5a5ab4"/>
<path d="M1390.9 714.4l8.9 6.8 1-2-8.8-6.7z" fill="#b6b3ff" stroke="#b6b3ff"/>
<path d="M1281.6 516.5l1.5 11 2.2 .1-1.5-11z" fill="#7373dc" stroke="#7373dc"/>
<path d="M1386 719.3l9 6.9 1.9-1.4-9-6.9z" fill="#aba9ff" stroke="#aba9ff"/>
<path d="M1274.9 518.1l1.5 11.3 2.1-1-1.5-11.2z" fill="#5a5ab4" stroke="#5a5ab4"/>
<path d="M1380.4 726.8l9.3 7.2 5.3-7.8-9-6.9z" fill="#e2d8ff" stroke="#e2d8ff"/>
<path d="M1265.5 518.9l1.5 11.6 9.4-1.1-1.5-11.3z" fill="#6060bf" stroke="#6060bf"/>
<path d="M1380.4 726.8l9.3 7.2M1395 726.2l-9-6.9M1265.5 518.9l1.5 11.6M1276.4 529.4l-1.5-11.3" class="e"/>
<path d="M1392 712.5l8.8 6.7 .4-1.9-8.6-6.6z" fill="#9595ff" stroke="#9595ff"/>
<path d="M1283.8 516.6l1.5 11 1.8 .4-1.4-10.8z" fill="#8383f5" stroke="#8383f5"/>
<path d="M1401.2 717.3l-8.6-6.6M1287.1 528l-1.4-10.8" class="e"/>
<path d="M1278.4 505.7l.9 10.9 2.3-.1-.9-10.9z" fill="#5c5cb8" stroke="#5c5cb8"/>
<path d="M1398.5 723.2l9 6.2 1.3-2-9-6.2z" fill="#e6dcff" stroke="#e6dcff"/>
<path d="M1276.1 506.2l.9 11 2.3-.6-.9-10.9z" fill="#5a5ab4" stroke="#5a5ab4"/>
<path d="M1396.9 724.8l9.1 6.3 1.5-1.7-9-6.2z" fill="#ded5ff" stroke="#ded5ff"/>
<path d="M1280.7 505.6l.9 10.9 2.2 .1-.9-10.7z" fill="#7070d8" stroke="#7070d8"/>
<path d="M1399.8 721.2l9 6.2 .8-2.1-8.8-6.1z" fill="#b8b5ff" stroke="#b8b5ff"/>
<path d="M1274 507.1l.9 11 2.1-.9-.9-11z" fill="#5a5ab4" stroke="#5a5ab4"/>
<path d="M1395 726.2l9.1 6.2 1.9-1.3-9.1-6.3z" fill="#b0adff" stroke="#b0adff"/>
<path d="M1282.9 505.9l.9 10.7 1.9 .6-.9-10.6z" fill="#8282f4" stroke="#8282f4"/>
<path d="M1400.8 719.2l8.8 6.1 .4-1.9-8.8-6.1z" fill="#9696ff" stroke="#9696ff"/>
<path d="M1285.7 517.2l-.9-10.6M1410 723.4l-8.8-6.1" class="e"/>
<path d="M1264.6 507.5l.9 11.4 9.4-.8-.9-11z" fill="#5c5cb8" stroke="#5c5cb8"/>
<path d="M1389.7 734l9.4 6.5 5-8.1-9.1-6.2z" fill="#e6dcff" stroke="#e6dcff"/>
<path d="M1264.6 507.5l.9 11.4M1274.9 518.1l-.9-11M1389.7 734l9.4 6.5M1404.1 732.4l-9.1-6.2" class="e"/>
<path d="M1278.1 495.1l.3 10.6 2.3-.1-.3-10.5z" fill="#5a5ab4" stroke="#5a5ab4"/>
<path d="M1407.5 729.4l9.1 5.6 1.1-2.1-8.9-5.5z" fill="#e9deff" stroke="#e9deff"/>
<path d="M1406 731.1l9.1 5.6 1.5-1.7-9.1-5.6z" fill="#e1d8ff" stroke="#e1d8ff"/>
<path d="M1275.8 495.5l.3 10.7 2.3-.5-.3-10.6z" fill="#5a5ab4" stroke="#5a5ab4"/>
<path d="M1408.8 727.4l8.9 5.5 .8-2.1-8.9-5.5z" fill="#bab6ff" stroke="#bab6ff"/>
<path d="M1280.4 495.1l.3 10.5 2.2 .3-.3-10.4z" fill="#6e6ed5" stroke="#6e6ed5"/>
<path d="M1404.1 732.4l9.1 5.7 1.9-1.4-9.1-5.6z" fill="#b3b0ff" stroke="#b3b0ff"/>
<path d="M1273.7 496.4l.3 10.7 2.1-.9-.3-10.7z" fill="#5a5ab4" stroke="#5a5ab4"/>
<path d="M1409.6 725.3l8.9 5.5 .3-2-8.8-5.4z" fill="#9696ff" stroke="#9696ff"/>
<path d="M1282.6 495.5l.3 10.4 1.9 .7-.3-10.3z" fill="#8282f3" stroke="#8282f3"/>
<path d="M1418.8 728.8l-8.8-5.4M1284.8 506.6l-.3-10.3" class="e"/>
<path d="M1264.3 496.4l.3 11.1 9.4-.4-.3-10.7z" fill="#5a5ab4" stroke="#5a5ab4"/>
<path d="M1399.1 740.5l9.4 5.8 4.7-8.2-9.1-5.7z" fill="#e9deff" stroke="#e9deff"/>
<path d="M1264.3 496.4l.3 11.1M1274 507.1l-.3-10.7M1399.1 740.5l9.4 5.8M1413.2 738.1l-9.1-5.7" class="e"/>
<path d="M1416.6 735l9 4.9 1.1-2.1-9-4.9z" fill="#eadfff" stroke="#eadfff"/>
<path d="M1278.4 484.8l-.3 10.3 2.3 0 .3-10.2z" fill="#5a5ab4" stroke="#5a5ab4"/>
<path d="M1417.7 732.9l9 4.9 .7-2.2-8.9-4.8z" fill="#bbb7ff" stroke="#bbb7ff"/>
<path d="M1280.7 484.9l-.3 10.2 2.2 .4 .3-10.1z" fill="#6c6cd1" stroke="#6c6cd1"/>
<path d="M1415.1 736.7l9.1 4.9 1.4-1.7-9-4.9z" fill="#e3d9ff" stroke="#e3d9ff"/>
<path d="M1276.1 485.2l-.3 10.3 2.3-.4 .3-10.3z" fill="#5a5ab4" stroke="#5a5ab4"/>
<path d="M1418.5 730.8l8.9 4.8 .1-2.1-8.7-4.7z" fill="#9797ff" stroke="#9797ff"/>
<path d="M1282.9 485.4l-.3 10.1 1.9 .8 .3-10z" fill="#8181f1" stroke="#8181f1"/>
<path d="M1427.5 733.5l-8.7-4.7M1284.5 496.3l.3-10" class="e"/>
<path d="M1413.2 738.1l9.2 4.9 1.8-1.4-9.1-4.9z" fill="#b6b3ff" stroke="#b6b3ff"/>
<path d="M1274 486.1l-.3 10.3 2.1-.9 .3-10.3z" fill="#5a5ab4" stroke="#5a5ab4"/>
<path d="M1408.5 746.3l9.4 5.1 4.5-8.4-9.2-4.9z" fill="#eadfff" stroke="#eadfff"/>
<path d="M1264.6 485.7l-.3 10.7 9.4 0 .3-10.3z" fill="#5a5ab4" stroke="#5a5ab4"/>
<path d="M1408.5 746.3l9.4 5.1M1422.4 743l-9.2-4.9M1264.6 485.7l-.3 10.7M1273.7 496.4l.3-10.3" class="e"/>
<path d="M1425.6 739.9l9 4.1 1.1-2.1-9-4.1z" fill="#e9dfff" stroke="#e9dfff"/>
<path d="M1279.3 474.9l-.9 9.9 2.3 .1 .9-9.8z" fill="#5a5ab4" stroke="#5a5ab4"/>
<path d="M1426.7 737.8l9 4.1 .5-2.2-8.8-4.1z" fill="#bcb8ff" stroke="#bcb8ff"/>
<path d="M1281.6 475.1l-.9 9.8 2.2 .5 .9-9.7z" fill="#6a6ace" stroke="#6a6ace"/>
<path d="M1424.2 741.6l9.1 4.2 1.3-1.8-9-4.1z" fill="#e3d9ff" stroke="#e3d9ff"/>
<path d="M1277 475.2l-.9 10 2.3-.4 .9-9.9z" fill="#5a5ab4" stroke="#5a5ab4"/>
<path d="M1427.4 735.6l8.8 4.1 .1-2.2-8.8-4z" fill="#9797ff" stroke="#9797ff"/>
<path d="M1283.8 475.7l-.9 9.7 1.9 .9 .9-9.6z" fill="#8080f0" stroke="#8080f0"/>
<path d="M1436.3 737.5l-8.8-4M1284.8 486.3l.9-9.6" class="e"/>
<path d="M1422.4 743l9 4.2 1.9-1.4-9.1-4.2z" fill="#b9b5ff" stroke="#b9b5ff"/>
<path d="M1274.9 476.1l-.9 10 2.1-.9 .9-10z" fill="#5a5ab4" stroke="#5a5ab4"/>
<path d="M1417.9 751.4l9.4 4.3 4.1-8.5-9-4.2z" fill="#e9dfff" stroke="#e9dfff"/>
<path d="M1265.5 475.4l-.9 10.3 9.4 .4 .9-10z" fill="#5a5ab4" stroke="#5a5ab4"/>
<path d="M1417.9 751.4l9.4 4.3M1431.4 747.2l-9-4.2M1265.5 475.4l-.9 10.3M1274 486.1l.9-10" class="e"/>
<path d="M1434.6 744l9 3.5 .9-2.1-8.8-3.5z" fill="#e7ddff" stroke="#e7ddff"/>
<path d="M1280.7 465.4l-1.4 9.5 2.3 .2 1.5-9.4z" fill="#5a5ab4" stroke="#5a5ab4"/>
<path d="M1435.7 741.9l8.8 3.5 .5-2.3-8.8-3.4z" fill="#bcb8ff" stroke="#bcb8ff"/>
<path d="M1283.1 465.7l-1.5 9.4 2.2 .6 1.5-9.3z" fill="#6868cb" stroke="#6868cb"/>
<path d="M1433.3 745.8l9 3.5 1.3-1.8-9-3.5z" fill="#e1d7ff" stroke="#e1d7ff"/>
<path d="M1278.5 465.7l-1.5 9.5 2.3-.3 1.4-9.5z" fill="#5a5ab4" stroke="#5a5ab4"/>
<path d="M1436.2 739.7l8.8 3.4-.1-2.2-8.6-3.4z" fill="#9898ff" stroke="#9898ff"/>
<path d="M1285.3 466.4l-1.5 9.3 1.9 1 1.4-9.1z" fill="#7f7fef" stroke="#7f7fef"/>
<path d="M1444.9 740.9l-8.6-3.4M1285.7 476.7l1.4-9.1" class="e"/>
<path d="M1431.4 747.2l9.1 3.5 1.8-1.4-9-3.5z" fill="#bab6ff" stroke="#bab6ff"/>
<path d="M1276.4 466.5l-1.5 9.6 2.1-.9 1.5-9.5z" fill="#5a5ab4" stroke="#5a5ab4"/>
<path d="M1427.3 755.7l9.3 3.6 3.9-8.6-9.1-3.5z" fill="#e7ddff" stroke="#e7ddff"/>
<path d="M1267 465.5l-1.5 9.9 9.4 .7 1.5-9.6z" fill="#5a5ab4" stroke="#5a5ab4"/>
<path d="M1427.3 755.7l9.3 3.6M1440.5 750.7l-9.1-3.5M1267 465.5l-1.5 9.9M1274.9 476.1l1.5-9.6" class="e"/>
<path d="M1443.6 747.5l8.8 2.7 .9-2.1-8.8-2.7z" fill="#e4daff" stroke="#e4daff"/>
<path d="M1282.8 456.4l-2.1 9 2.4 .3 2-9z" fill="#5a5ab4" stroke="#5a5ab4"/>
<path d="M1444.5 745.4l8.8 2.7 .4-2.4-8.7-2.6z" fill="#bcb8ff" stroke="#bcb8ff"/>
<path d="M1285.1 456.7l-2 9 2.2 .7 2-8.8z" fill="#6666c8" stroke="#6666c8"/>
<path d="M1442.3 749.3l8.8 2.7 1.3-1.8-8.8-2.7z" fill="#ded5ff" stroke="#ded5ff"/>
<path d="M1280.6 456.6l-2.1 9.1 2.2-.3 2.1-9z" fill="#5a5ab4" stroke="#5a5ab4"/>
<path d="M1445 743.1l8.7 2.6-.2-2.2-8.6-2.6z" fill="#9898ff" stroke="#9898ff"/>
<path d="M1287.3 457.6l-2 8.8 1.8 1.2 2-8.8z" fill="#7f7fee" stroke="#7f7fee"/>
<path d="M1453.5 743.5l-8.6-2.6M1287.1 467.6l2-8.8" class="e"/>
<path d="M1440.5 750.7l8.8 2.7 1.8-1.4-8.8-2.7z" fill="#bbb7ff" stroke="#bbb7ff"/>
<path d="M1278.5 457.5l-2.1 9 2.1-.8 2.1-9.1z" fill="#5a5ab4" stroke="#5a5ab4"/>
<path d="M1436.6 759.3l9.2 2.8 3.5-8.7-8.8-2.7z" fill="#e4daff" stroke="#e4daff"/>
<path d="M1269.2 456.1l-2.2 9.4 9.4 1 2.1-9z" fill="#5a5ab4" stroke="#5a5ab4"/>
<path d="M1436.6 759.3l9.2 2.8M1449.3 753.4l-8.8-2.7M1269.2 456.1l-2.2 9.4M1276.4 466.5l2.1-9" class="e"/>
<path d="M1453.3 748.1l8.6 1.9 .3-2.3-8.5-2z" fill="#bbb7ff" stroke="#bbb7ff"/>
<path d="M1287.7 448.3l-2.6 8.4 2.2 .9 2.6-8.4z" fill="#6464c5" stroke="#6464c5"/>
<path d="M1452.4 750.2l8.7 2 .8-2.2-8.6-1.9z" fill="#e0d6ff" stroke="#e0d6ff"/>
<path d="M1285.4 447.9l-2.6 8.5 2.3 .3 2.6-8.4z" fill="#5a5ab4" stroke="#5a5ab4"/>
<path d="M1453.7 745.7l8.5 2-.3-2.3-8.4-1.9z" fill="#9898ff" stroke="#9898ff"/>
<path d="M1289.9 449.2l-2.6 8.4 1.8 1.2 2.6-8.2z" fill="#7e7eed" stroke="#7e7eed"/>
<path d="M1461.9 745.4l-8.4-1.9M1289.1 458.8l2.6-8.2" class="e"/>
<path d="M1451.1 752l8.7 2 1.3-1.8-8.7-2z" fill="#dad1ff" stroke="#dad1ff"/>
<path d="M1283.2 448.1l-2.6 8.5 2.2-.2 2.6-8.5z" fill="#5a5ab4" stroke="#5a5ab4"/>
<path d="M1449.3 753.4l8.8 2 1.7-1.4-8.7-2z" fill="#bcb8ff" stroke="#bcb8ff"/>
<path d="M1281.1 448.9l-2.6 8.6 2.1-.9 2.6-8.5z" fill="#5a5ab4" stroke="#5a5ab4"/>
<path d="M1445.8 762.1l9.1 2.1 3.2-8.8-8.8-2z" fill="#e0d6ff" stroke="#e0d6ff"/>
<path d="M1271.9 447.3l-2.7 8.8 9.3 1.4 2.6-8.6z" fill="#5a5ab4" stroke="#5a5ab4"/>
<path d="M1445.8 762.1l9.1 2.1M1458.1 755.4l-8.8-2M1271.9 447.3l-2.7 8.8M1278.5 457.5l2.6-8.6" class="e"/>
<path d="M1461.9 750l8.4 1.2 .2-2.3-8.3-1.2z" fill="#bab6ff" stroke="#bab6ff"/>
<path d="M1290.9 440.4l-3.2 7.9 2.2 .9 3.1-7.8z" fill="#6262c2" stroke="#6262c2"/>
<path d="M1461.1 752.2l8.5 1.2 .7-2.2-8.4-1.2z" fill="#dbd2ff" stroke="#dbd2ff"/>
<path d="M1288.6 440l-3.2 7.9 2.3 .4 3.2-7.9z" fill="#5a5ab4" stroke="#5a5ab4"/>
<path d="M1462.2 747.7l8.3 1.2-.4-2.3-8.2-1.2z" fill="#9898ff" stroke="#9898ff"/>
<path d="M1293 441.4l-3.1 7.8 1.8 1.4 3.1-7.7z" fill="#7d7dec" stroke="#7d7dec"/>
<path d="M1470.1 746.6l-8.2-1.2M1291.7 450.6l3.1-7.7" class="e"/>
<path d="M1459.8 754l8.6 1.2 1.2-1.8-8.5-1.2z" fill="#d6ceff" stroke="#d6ceff"/>
<path d="M1286.4 440.1l-3.2 8 2.2-.2 3.2-7.9z" fill="#5a5ab4" stroke="#5a5ab4"/>
<path d="M1458.1 755.4l8.5 1.2 1.8-1.4-8.6-1.2z" fill="#bcb8ff" stroke="#bcb8ff"/>
<path d="M1284.3 440.9l-3.2 8 2.1-.8 3.2-8z" fill="#5a5ab4" stroke="#5a5ab4"/>
<path d="M1454.9 764.2l8.8 1.3 2.9-8.9-8.5-1.2z" fill="#dbd2ff" stroke="#dbd2ff"/>
<path d="M1275.2 439l-3.3 8.3 9.2 1.6 3.2-8z" fill="#5a5ab4" stroke="#5a5ab4"/>
<path d="M1454.9 764.2l8.8 1.3M1466.6 756.6l-8.5-1.2M1275.2 439l-3.3 8.3M1281.1 448.9l3.2-8" class="e"/>
<path d="M1470.3 751.2l8.2 .4 .1-2.3-8.1-.4z" fill="#b9b5ff" stroke="#b9b5ff"/>
<path d="M1294.6 433.1l-3.7 7.3 2.1 1 3.7-7.2z" fill="#6161c0" stroke="#6161c0"/>
<path d="M1470.5 748.9l8.1 .4-.5-2.3-8-.4z" fill="#9999ff" stroke="#9999ff"/>
<path d="M1296.7 434.2l-3.7 7.2 1.8 1.5 3.6-7.2z" fill="#7d7dec" stroke="#7d7dec"/>
<path d="M1478.1 747l-8-.4M1294.8 442.9l3.6-7.2" class="e"/>
<path d="M1469.6 753.4l8.2 .4 .7-2.2-8.2-.4z" fill="#d6ceff" stroke="#d6ceff"/>
<path d="M1292.4 432.6l-3.8 7.4 2.3 .4 3.7-7.3z" fill="#5a5ab4" stroke="#5a5ab4"/>
<path d="M1468.4 755.2l8.3 .5 1.1-1.9-8.2-.4z" fill="#d2caff" stroke="#d2caff"/>
<path d="M1290.2 432.7l-3.8 7.4 2.2-.1 3.8-7.4z" fill="#5a5ab4" stroke="#5a5ab4"/>
<path d="M1466.6 756.6l8.3 .5 1.8-1.4-8.3-.5z" fill="#bcb8ff" stroke="#bcb8ff"/>
<path d="M1288.1 433.5l-3.8 7.4 2.1-.8 3.8-7.4z" fill="#5a5ab4" stroke="#5a5ab4"/>
<path d="M1463.7 765.5l8.6 .4 2.6-8.8-8.3-.5z" fill="#d6ceff" stroke="#d6ceff"/>
<path d="M1279.1 431.3l-3.9 7.7 9.1 1.9 3.8-7.4z" fill="#5a5ab4" stroke="#5a5ab4"/>
<path d="M1463.7 765.5l8.6 .4M1474.9 757.1l-8.3-.5M1279.1 431.3l-3.9 7.7M1284.3 440.9l3.8-7.4" class="e"/>
<path d="M1478.5 751.6l7.9-.3 0-2.3-7.8 .3z" fill="#b8b4ff" stroke="#b8b4ff"/>
<path d="M1298.8 426.4l-4.2 6.7 2.1 1.1 4.1-6.6z" fill="#5f5fbe" stroke="#5f5fbe"/>
<path d="M1478.6 749.3l7.8-.3-.5-2.3-7.8 .3z" fill="#9999ff" stroke="#9999ff"/>
<path d="M1300.8 427.6l-4.1 6.6 1.7 1.5 4.1-6.5z" fill="#7c7ceb" stroke="#7c7ceb"/>
<path d="M1485.9 746.7l-7.8 .3M1298.4 435.7l4.1-6.5" class="e"/>
<path d="M1477.8 753.8l8-.3 .6-2.2-7.9 .3z" fill="#d1caff" stroke="#d1caff"/>
<path d="M1296.6 425.8l-4.2 6.8 2.2 .5 4.2-6.7z" fill="#5a5ab4" stroke="#5a5ab4"/>
<path d="M1476.7 755.7l8-.4 1.1-1.8-8 .3z" fill="#cec7ff" stroke="#cec7ff"/>
<path d="M1294.5 425.9l-4.3 6.8 2.2-.1 4.2-6.8z" fill="#5a5ab4" stroke="#5a5ab4"/>
<path d="M1474.9 757.1l8.1-.3 1.7-1.5-8 .4z" fill="#bcb8ff" stroke="#bcb8ff"/>
<path d="M1292.4 426.7l-4.3 6.8 2.1-.8 4.3-6.8z" fill="#5a5ab4" stroke="#5a5ab4"/>
<path d="M1472.3 765.9l8.3-.3 2.4-8.8-8.1 .3z" fill="#d1caff" stroke="#d1caff"/>
<path d="M1283.6 424.3l-4.5 7 9 2.2 4.3-6.8z" fill="#5a5ab4" stroke="#5a5ab4"/>
<path d="M1472.3 765.9l8.3-.3M1483 756.8l-8.1 .3M1283.6 424.3l-4.5 7M1288.1 433.5l4.3-6.8" class="e"/>
<path d="M1486.4 749l7.6-1.1-.7-2.2-7.4 1z" fill="#9999ff" stroke="#9999ff"/>
<path d="M1305.5 421.6l-4.7 6 1.7 1.6 4.7-5.9z" fill="#7c7cea" stroke="#7c7cea"/>
<path d="M1486.4 751.3l7.6-1 0-2.4-7.6 1.1z" fill="#b6b3ff" stroke="#b6b3ff"/>
<path d="M1303.6 420.3l-4.8 6.1 2 1.2 4.7-6z" fill="#5e5ebc" stroke="#5e5ebc"/>
<path d="M1493.3 745.7l-7.4 1M1302.5 429.2l4.7-5.9" class="e"/>
<path d="M1485.8 753.5l7.7-1.1 .5-2.1-7.6 1z" fill="#cdc6ff" stroke="#cdc6ff"/>
<path d="M1301.4 419.7l-4.8 6.1 2.2 .6 4.8-6.1z" fill="#5a5ab4" stroke="#5a5ab4"/>
<path d="M1484.7 755.3l7.8-1 1-1.9-7.7 1.1z" fill="#cac4ff" stroke="#cac4ff"/>
<path d="M1299.3 419.7l-4.8 6.2 2.1-.1 4.8-6.1z" fill="#5a5ab4" stroke="#5a5ab4"/>
<path d="M1483 756.8l7.7-1.1 1.8-1.4-7.8 1z" fill="#bcb8ff" stroke="#bcb8ff"/>
<path d="M1297.2 420.5l-4.8 6.2 2.1-.8 4.8-6.2z" fill="#5a5ab4" stroke="#5a5ab4"/>
<path d="M1480.6 765.6l8-1.1 2.1-8.8-7.7 1.1z" fill="#cdc6ff" stroke="#cdc6ff"/>
<path d="M1288.6 417.9l-5 6.4 8.8 2.4 4.8-6.2z" fill="#5a5ab4" stroke="#5a5ab4"/>
<path d="M1480.6 765.6l8-1.1M1490.7 755.7l-7.7 1.1M1288.6 417.9l-5 6.4M1292.4 426.7l4.8-6.2" class="e"/>
<path d="M1494 747.9l7.2-1.8-.7-2.2-7.2 1.8z" fill="#9999ff" stroke="#9999ff"/>
<path d="M1310.7 416.2l-5.2 5.4 1.7 1.7 5.1-5.3z" fill="#7c7cea" stroke="#7c7cea"/>
<path d="M1500.5 743.9l-7.2 1.8M1307.2 423.3l5.1-5.3" class="e"/>
<path d="M1494 750.3l7.3-1.9-.1-2.3-7.2 1.8z" fill="#b5b2ff" stroke="#b5b2ff"/>
<path d="M1308.8 414.9l-5.2 5.4 1.9 1.3 5.2-5.4z" fill="#5d5dba" stroke="#5d5dba"/>
<path d="M1493.5 752.4l7.4-1.8 .4-2.2-7.3 1.9z" fill="#c8c2ff" stroke="#c8c2ff"/>
<path d="M1306.7 414.2l-5.3 5.5 2.2 .6 5.2-5.4z" fill="#5a5ab4" stroke="#5a5ab4"/>
<path d="M1492.5 754.3l7.4-1.9 1-1.8-7.4 1.8z" fill="#c7c2ff" stroke="#c7c2ff"/>
<path d="M1304.6 414.2l-5.3 5.5 2.1 0 5.3-5.5z" fill="#5a5ab4" stroke="#5a5ab4"/>
<path d="M1490.7 755.7l7.5-1.9 1.7-1.4-7.4 1.9z" fill="#bcb8ff" stroke="#bcb8ff"/>
<path d="M1302.6 415l-5.4 5.5 2.1-.8 5.3-5.5z" fill="#5a5ab4" stroke="#5a5ab4"/>
<path d="M1488.6 764.5l7.7-2 1.9-8.7-7.5 1.9z" fill="#c8c2ff" stroke="#c8c2ff"/>
<path d="M1294.1 412.2l-5.5 5.7 8.6 2.6 5.4-5.5z" fill="#5a5ab4" stroke="#5a5ab4"/>
<path d="M1488.6 764.5l7.7-2M1498.2 753.8l-7.5 1.9M1294.1 412.2l-5.5 5.7M1297.2 420.5l5.4-5.5" class="e"/>
<path d="M1501.2 746.1l6.9-2.5-.9-2.2-6.7 2.5z" fill="#9898ff" stroke="#9898ff"/>
<path d="M1316.4 411.5l-5.7 4.7 1.6 1.8 5.5-4.7z" fill="#7b7be9" stroke="#7b7be9"/>
<path d="M1507.2 741.4l-6.7 2.5M1312.3 418l5.5-4.7" class="e"/>
<path d="M1501.3 748.4l7-2.5-.2-2.3-6.9 2.5z" fill="#b4b1ff" stroke="#b4b1ff"/>
<path d="M1314.5 410.2l-5.7 4.7 1.9 1.3 5.7-4.7z" fill="#5c5cb9" stroke="#5c5cb9"/>
<path d="M1500.9 750.6l7-2.6 .4-2.1-7 2.5z" fill="#c5bfff" stroke="#c5bfff"/>
<path d="M1312.4 409.5l-5.7 4.7 2.1 .7 5.7-4.7z" fill="#5a5ab4" stroke="#5a5ab4"/>
<path d="M1499.9 752.4l7-2.6 1-1.8-7 2.6z" fill="#c5bfff" stroke="#c5bfff"/>
<path d="M1310.4 409.4l-5.8 4.8 2.1 0 5.7-4.7z" fill="#5a5ab4" stroke="#5a5ab4"/>
<path d="M1498.2 753.8l7-2.6 1.7-1.4-7 2.6z" fill="#bbb7ff" stroke="#bbb7ff"/>
<path d="M1308.3 410.2l-5.7 4.8 2-.8 5.8-4.8z" fill="#5a5ab4" stroke="#5a5ab4"/>
<path d="M1496.3 762.5l7.3-2.7 1.6-8.6-7 2.6z" fill="#c5bfff" stroke="#c5bfff"/>
<path d="M1300 407.3l-5.9 4.9 8.5 2.8 5.7-4.8z" fill="#5a5ab4" stroke="#5a5ab4"/>
<path d="M1496.3 762.5l7.3-2.7M1505.2 751.2l-7 2.6M1300 407.3l-5.9 4.9M1302.6 415l5.7-4.8" class="e"/>
<path d="M1508.1 743.6l6.5-3.3-.9-2.1-6.5 3.2z" fill="#9898ff" stroke="#9898ff"/>
<path d="M1322.4 407.6l-6 3.9 1.4 1.8 6.1-3.9z" fill="#7b7be9" stroke="#7b7be9"/>
<path d="M1513.7 738.2l-6.5 3.2M1317.8 413.3l6.1-3.9" class="e"/>
<path d="M1320.6 406.2l-6.1 4 1.9 1.3 6-3.9z" fill="#5c5cb8" stroke="#5c5cb8"/>
<path d="M1508.3 745.9l6.5-3.3-.2-2.3-6.5 3.3z" fill="#b2afff" stroke="#b2afff"/>
<path d="M1507.9 748l6.6-3.3 .3-2.1-6.5 3.3z" fill="#c2bdff" stroke="#c2bdff"/>
<path d="M1318.6 405.4l-6.2 4.1 2.1 .7 6.1-4z" fill="#5a5ab4" stroke="#5a5ab4"/>
<path d="M1506.9 749.8l6.7-3.4 .9-1.7-6.6 3.3z" fill="#c3beff" stroke="#c3beff"/>
<path d="M1316.6 405.3l-6.2 4.1 2 .1 6.2-4.1zM1314.6 406.1l-6.3 4.1 2.1-.8 6.2-4.1z" fill="#5a5ab4" stroke="#5a5ab4"/>
<path d="M1505.2 751.2l6.7-3.4 1.7-1.4-6.7 3.4z" fill="#bab6ff" stroke="#bab6ff"/>
<path d="M1503.6 759.8l6.9-3.4 1.4-8.6-6.7 3.4z" fill="#c2bdff" stroke="#c2bdff"/>
<path d="M1306.5 403l-6.5 4.3 8.3 2.9 6.3-4.1z" fill="#5a5ab4" stroke="#5a5ab4"/>
<path d="M1503.6 759.8l6.9-3.4M1511.9 747.8l-6.7 3.4M1306.5 403l-6.5 4.3M1308.3 410.2l6.3-4.1" class="e"/>
<path d="M1514.6 740.3l6-4-.9-2.1-6 4z" fill="#9898ff" stroke="#9898ff"/>
<path d="M1328.9 404.3l-6.5 3.3 1.5 1.8 6.4-3.2z" fill="#7b7be9" stroke="#7b7be9"/>
<path d="M1519.7 734.2l-6 4M1323.9 409.4l6.4-3.2" class="e"/>
<path d="M1327.2 402.9l-6.6 3.3 1.8 1.4 6.5-3.3z" fill="#5b5bb7" stroke="#5b5bb7"/>
<path d="M1514.8 742.6l6.2-4.1-.4-2.2-6 4z" fill="#b1aeff" stroke="#b1aeff"/>
<path d="M1325.2 402.1l-6.6 3.3 2 .8 6.6-3.3z" fill="#5a5ab4" stroke="#5a5ab4"/>
<path d="M1514.5 744.7l6.2-4.1 .3-2.1-6.2 4.1z" fill="#bfbaff" stroke="#bfbaff"/>
<path d="M1513.6 746.4l6.2-4 .9-1.8-6.2 4.1z" fill="#c1bcff" stroke="#c1bcff"/>
<path d="M1323.3 402l-6.7 3.3 2 .1 6.6-3.3z" fill="#5a5ab4" stroke="#5a5ab4"/>
<path d="M1511.9 747.8l6.2-4.1 1.7-1.3-6.2 4z" fill="#b9b5ff" stroke="#b9b5ff"/>
<path d="M1321.3 402.7l-6.7 3.4 2-.8 6.7-3.3z" fill="#5a5ab4" stroke="#5a5ab4"/>
<path d="M1510.5 756.4l6.5-4.3 1.1-8.4-6.2 4.1z" fill="#bfbaff" stroke="#bfbaff"/>
<path d="M1313.4 399.6l-6.9 3.4 8.1 3.1 6.7-3.4z" fill="#5a5ab4" stroke="#5a5ab4"/>
<path d="M1510.5 756.4l6.5-4.3M1518.1 743.7l-6.2 4.1M1313.4 399.6l-6.9 3.4M1314.6 406.1l6.7-3.4" class="e"/>
<path d="M1520.6 736.3l5.7-4.7-1.1-2-5.5 4.6z" fill="#9898ff" stroke="#9898ff"/>
<path d="M1335.8 401.7l-6.9 2.6 1.4 1.9 6.8-2.5z" fill="#7b7be8" stroke="#7b7be8"/>
<path d="M1525.2 729.6l-5.5 4.6M1330.3 406.2l6.8-2.5" class="e"/>
<path d="M1521 738.5l5.7-4.7-.4-2.2-5.7 4.7z" fill="#afadff" stroke="#afadff"/>
<path d="M1334.1 400.3l-6.9 2.6 1.7 1.4 6.9-2.6z" fill="#5b5bb7" stroke="#5b5bb7"/>
<path d="M1520.7 740.6l5.7-4.8 .3-2-5.7 4.7z" fill="#bdb8ff" stroke="#bdb8ff"/>
<path d="M1332.3 399.5l-7.1 2.6 2 .8 6.9-2.6z" fill="#5a5ab4" stroke="#5a5ab4"/>
<path d="M1519.8 742.4l5.8-4.8 .8-1.8-5.7 4.8z" fill="#bfbaff" stroke="#bfbaff"/>
<path d="M1330.3 399.4l-7 2.6 1.9 .1 7.1-2.6z" fill="#5a5ab4" stroke="#5a5ab4"/>
<path d="M1518.1 743.7l5.8-4.8 1.7-1.3-5.8 4.8z" fill="#b8b4ff" stroke="#b8b4ff"/>
<path d="M1328.3 400.1l-7 2.6 2-.7 7-2.6z" fill="#5a5ab4" stroke="#5a5ab4"/>
<path d="M1523.9 738.9l1.7-1.3M1328.3 400.1l2-.7" class="e"/>
<path d="M1517 752.1l5.9-4.9 1-8.3-5.8 4.8z" fill="#bdb8ff" stroke="#bdb8ff"/>
<path d="M1320.7 396.9l-7.3 2.7 7.9 3.1 7-2.6z" fill="#5a5ab4" stroke="#5a5ab4"/>
<path d="M1517 752.1l5.9-4.9M1523.9 738.9l-5.8 4.8M1320.7 396.9l-7.3 2.7M1321.3 402.7l7-2.6" class="e"/>
<path d="M1526.3 731.6l5.1-5.3-1.1-2-5.1 5.3z" fill="#9797ff" stroke="#9797ff"/>
<path d="M1343 399.9l-7.2 1.8 1.3 2 7.1-1.8z" fill="#7b7be8" stroke="#7b7be8"/>
<path d="M1530.3 724.3l-5.1 5.3M1337.1 403.7l7.1-1.8" class="e"/>
<path d="M1526.7 733.8l5.2-5.4-.5-2.1-5.1 5.3z" fill="#aeabff" stroke="#aeabff"/>
<path d="M1341.4 398.5l-7.3 1.8 1.7 1.4 7.2-1.8z" fill="#5b5bb7" stroke="#5b5bb7"/>
<path d="M1526.4 735.8l5.3-5.4 .2-2-5.2 5.4z" fill="#bab6ff" stroke="#bab6ff"/>
<path d="M1339.6 397.6l-7.3 1.9 1.8 .8 7.3-1.8z" fill="#5a5ab4" stroke="#5a5ab4"/>
<path d="M1525.6 737.6l5.3-5.5 .8-1.7-5.3 5.4z" fill="#bdb9ff" stroke="#bdb9ff"/>
<path d="M1337.7 397.5l-7.4 1.9 2 .1 7.3-1.9z" fill="#5a5ab4" stroke="#5a5ab4"/>
<path d="M1530.9 732.1l-5.3 5.5M1330.3 399.4l7.4-1.9" class="e"/>
<path d="M1522.9 747.2l5.5-5.7 .8-8.1-5.3 5.5z" fill="#bab6ff" stroke="#bab6ff"/>
<path d="M1328.4 394.9l-7.7 2 7.6 3.2 7.4-1.8z" fill="#5a5ab4" stroke="#5a5ab4"/>
<path d="M1522.9 747.2l5.5-5.7M1529.2 733.4l-5.3 5.5M1328.4 394.9l-7.7 2M1328.3 400.1l7.4-1.8" class="e"/>
<path d="M1531.4 726.3l4.7-6-1.1-1.9-4.7 5.9z" fill="#9797ff" stroke="#9797ff"/>
<path d="M1350.6 398.9l-7.6 1 1.2 2 7.4-1.1z" fill="#7b7be8" stroke="#7b7be8"/>
<path d="M1535 718.4l-4.7 5.9M1344.2 401.9l7.4-1.1" class="e"/>
<path d="M1531.9 728.4l4.8-6.1-.6-2-4.7 6z" fill="#acaaff" stroke="#acaaff"/>
<path d="M1349.1 397.4l-7.7 1.1 1.6 1.4 7.6-1z" fill="#5b5bb7" stroke="#5b5bb7"/>
<path d="M1531.7 730.4l4.8-6.1 .2-2-4.8 6.1z" fill="#b8b5ff" stroke="#b8b5ff"/>
<path d="M1347.3 396.6l-7.7 1 1.8 .9 7.7-1.1z" fill="#5a5ab4" stroke="#5a5ab4"/>
<path d="M1530.9 732.1l4.8-6.2 .8-1.6-4.8 6.1z" fill="#bbb7ff" stroke="#bbb7ff"/>
<path d="M1345.5 396.4l-7.8 1.1 1.9 .1 7.7-1z" fill="#5a5ab4" stroke="#5a5ab4"/>
<path d="M1535.7 725.9l-4.8 6.2M1337.7 397.5l7.8-1.1" class="e"/>
<path d="M1528.4 741.5l5-6.4 .7-7.8-4.9 6.1z" fill="#b8b5ff" stroke="#b8b5ff"/>
<path d="M1336.4 393.8l-8 1.1 7.3 3.4 7.8-1.1z" fill="#5a5ab4" stroke="#5a5ab4"/>
<path d="M1528.4 741.5l5-6.4M1534.1 727.3l-4.9 6.1M1336.4 393.8l-8 1.1M1335.7 398.3l7.8-1.1" class="e"/>
<path d="M1536.1 720.3l4.2-6.6-1.2-1.9-4.1 6.6z" fill="#9696ff" stroke="#9696ff"/>
<path d="M1358.4 398.6l-7.8 .3 1 1.9 7.8-.3z" fill="#7b7be9" stroke="#7b7be9"/>
<path d="M1539.1 711.8l-4.1 6.6M1351.6 400.8l7.8-.3" class="e"/>
<path d="M1536.7 722.3l4.2-6.7-.6-1.9-4.2 6.6z" fill="#aba9ff" stroke="#aba9ff"/>
<path d="M1357 397.1l-7.9 .3 1.5 1.5 7.8-.3z" fill="#5b5bb7" stroke="#5b5bb7"/>
<path d="M1536.5 724.3l4.3-6.8 .1-1.9-4.2 6.7z" fill="#b6b3ff" stroke="#b6b3ff"/>
<path d="M1355.3 396.2l-8 .4 1.8 .8 7.9-.3z" fill="#5a5ab4" stroke="#5a5ab4"/>
<path d="M1535.7 725.9l4.3-6.8 .8-1.6-4.3 6.8z" fill="#b8b5ff" stroke="#b8b5ff"/>
<path d="M1353.5 396.1l-8 .3 1.8 .2 8-.4z" fill="#5a5ab4" stroke="#5a5ab4"/>
<path d="M1540 719.1l-4.3 6.8M1345.5 396.4l8-.3" class="e"/>
<path d="M1533.4 735.1l4.5-7 .5-7.6-4.3 6.8z" fill="#b6b3ff" stroke="#b6b3ff"/>
<path d="M1344.7 393.5l-8.3 .3 7.1 3.4 8-.3z" fill="#5a5ab4" stroke="#5a5ab4"/>
<path d="M1533.4 735.1l4.5-7M1538.4 720.5l-4.3 6.8M1344.7 393.5l-8.3 .3M1343.5 397.2l8-.3" class="e"/>
<path d="M1540.3 713.7l3.7-7.3-1.3-1.7-3.6 7.1z" fill="#9696ff" stroke="#9696ff"/>
<path d="M1366.5 399l-8.1-.4 1 1.9 8 .5z" fill="#7b7be9" stroke="#7b7be9"/>
<path d="M1542.7 704.7l-3.6 7.1M1359.4 400.5l8 .5" class="e"/>
<path d="M1540.9 715.6l3.7-7.3-.6-1.9-3.7 7.3z" fill="#a9a7ff" stroke="#a9a7ff"/>
<path d="M1365.2 397.5l-8.2-.4 1.4 1.5 8.1 .4z" fill="#5c5cb8" stroke="#5c5cb8"/>
<path d="M1540.8 717.5l3.7-7.4 .1-1.8-3.7 7.3z" fill="#b4b1ff" stroke="#b4b1ff"/>
<path d="M1363.6 396.7l-8.3-.5 1.7 .9 8.2 .4z" fill="#5a5ab4" stroke="#5a5ab4"/>
<path d="M1540 719.1l3.7-7.4 .8-1.6-3.7 7.4z" fill="#b6b2ff" stroke="#b6b2ff"/>
<path d="M1361.8 396.6l-8.3-.5 1.8 .1 8.3 .5z" fill="#5a5ab4" stroke="#5a5ab4"/>
<path d="M1543.7 711.7l-3.7 7.4M1543.7 711.7l.8-1.6M1353.5 396.1l8.3 .5M1361.8 396.6l1.8 .1" class="e"/>
<path d="M1537.9 728.1l3.9-7.7 .3-7.4-3.7 7.5z" fill="#b4b1ff" stroke="#b4b1ff"/>
<path d="M1353.3 393.9l-8.6-.4 6.8 3.4 8.3 .4z" fill="#5a5ab4" stroke="#5a5ab4"/>
<path d="M1537.9 728.1l3.9-7.7M1542.1 713l-3.7 7.5M1353.3 393.9l-8.6-.4M1351.5 396.9l8.3 .4" class="e"/>
<path d="M1544 706.4l3.1-7.8-1.3-1.6-3.1 7.7z" fill="#9595ff" stroke="#9595ff"/>
<path d="M1374.8 400.2l-8.3-1.2 .9 2 8.2 1.1z" fill="#7b7be9" stroke="#7b7be9"/>
<path d="M1545.8 697l-3.1 7.7M1367.4 401l8.2 1.1" class="e"/>
<path d="M1544.6 708.3l3.2-7.9-.7-1.8-3.1 7.8z" fill="#a7a6ff" stroke="#a7a6ff"/>
<path d="M1373.6 398.7l-8.4-1.2 1.3 1.5 8.3 1.2z" fill="#5c5cb9" stroke="#5c5cb9"/>
<path d="M1544.5 710.1l3.2-7.9 .1-1.8-3.2 7.9z" fill="#b1afff" stroke="#b1afff"/>
<path d="M1372 397.9l-8.4-1.2 1.6 .8 8.4 1.2z" fill="#5a5ab4" stroke="#5a5ab4"/>
<path d="M1547.7 702.2l-3.2 7.9M1363.6 396.7l8.4 1.2" class="e"/>
<path d="M1547.1 698.6l2.6-8.3-1.3-1.6-2.6 8.3z" fill="#9595ff" stroke="#9595ff"/>
<path d="M1383.3 402.1l-8.5-1.9 .8 1.9 8.4 1.9z" fill="#7c7ce9" stroke="#7c7ce9"/>
<path d="M1548.4 688.7l-2.6 8.3M1375.6 402.1l8.4 1.9" class="e"/>
<path d="M1541.8 720.4l3.3-8.3 .2-7.1-3.2 8z" fill="#b1afff" stroke="#b1afff"/>
<path d="M1362.1 395.2l-8.8-1.3 6.5 3.4 8.6 1.2z" fill="#5a5ab4" stroke="#5a5ab4"/>
<path d="M1541.8 720.4l3.3-8.3M1545.3 705l-3.2 8M1362.1 395.2l-8.8-1.3M1359.8 397.3l8.6 1.2" class="e"/>
<path d="M1547.8 700.4l2.6-8.4-.7-1.7-2.6 8.3z" fill="#a5a5ff" stroke="#a5a5ff"/>
<path d="M1382.2 400.7l-8.6-2 1.2 1.5 8.5 1.9z" fill="#5d5dba" stroke="#5d5dba"/>
<path d="M1547.7 702.2l2.6-8.5 .1-1.7-2.6 8.4z" fill="#afacff" stroke="#afacff"/>
<path d="M1380.7 399.9l-8.7-2 1.6 .8 8.6 2z" fill="#5a5ab4" stroke="#5a5ab4"/>
<path d="M1550.3 693.7l-2.6 8.5M1372 397.9l8.7 2" class="e"/>
<path d="M1549.7 690.3l2-8.8-1.3-1.5-2 8.7z" fill="#9494ff" stroke="#9494ff"/>
<path d="M1392 404.8l-8.7-2.7 .7 1.9 8.6 2.7z" fill="#7c7cea" stroke="#7c7cea"/>
<path d="M1550.4 680l-2 8.7M1384 404l8.6 2.7" class="e"/>
<path d="M1545.1 712.1l2.7-8.8 .2-6.8-2.7 8.5z" fill="#afacff" stroke="#afacff"/>
<path d="M1371.2 397.3l-9.1-2.1 6.3 3.3 8.7 2z" fill="#5a5ab4" stroke="#5a5ab4"/>
<path d="M1545.1 712.1l2.7-8.8M1548 696.5l-2.7 8.5M1371.2 397.3l-9.1-2.1M1368.4 398.5l8.7 2" class="e"/>
<path d="M1550.4 692l2-8.9-.7-1.6-2 8.8z" fill="#a4a3ff" stroke="#a4a3ff"/>
<path d="M1390.9 403.4l-8.7-2.7 1.1 1.4 8.7 2.7z" fill="#5e5ebb" stroke="#5e5ebb"/>
<path d="M1550.3 693.7l2.1-9 0-1.6-2 8.9z" fill="#acaaff" stroke="#acaaff"/>
<path d="M1389.5 402.6l-8.8-2.7 1.5 .8 8.7 2.7z" fill="#5a5ab4" stroke="#5a5ab4"/>
<path d="M1552.4 684.7l-2.1 9M1380.7 399.9l8.8 2.7" class="e"/>
<path d="M1551.7 681.5l1.5-9.3-1.4-1.4-1.4 9.2z" fill="#9393ff" stroke="#9393ff"/>
<path d="M1400.8 408.2l-8.8-3.4 .6 1.9 8.6 3.3z" fill="#7c7cea" stroke="#7c7cea"/>
<path d="M1551.8 670.8l-1.4 9.2M1392.6 406.7l8.6 3.3" class="e"/>
<path d="M1552.4 683.1l1.5-9.4-.7-1.5-1.5 9.3z" fill="#a2a1ff" stroke="#a2a1ff"/>
<path d="M1399.8 406.8l-8.9-3.4 1.1 1.4 8.8 3.4z" fill="#5f5fbd" stroke="#5f5fbd"/>
<path d="M1547.8 703.3l2.2-9.4 .1-6.5-2.1 9.1z" fill="#acaaff" stroke="#acaaff"/>
<path d="M1380.4 400.1l-9.2-2.8 5.9 3.2 8.9 2.8z" fill="#5a5ab4" stroke="#5a5ab4"/>
<path d="M1547.8 703.3l2.2-9.4M1550.1 687.4l-2.1 9.1M1380.4 400.1l-9.2-2.8M1377.1 400.5l8.9 2.8" class="e"/>
<path d="M1552.4 684.7l1.5-9.5 0-1.5-1.5 9.4z" fill="#a9a7ff" stroke="#a9a7ff"/>
<path d="M1398.5 406l-9-3.4 1.4 .8 8.9 3.4z" fill="#5a5ab4" stroke="#5a5ab4"/>
<path d="M1553.9 675.2l-1.5 9.5M1389.5 402.6l9 3.4" class="e"/>
<path d="M1409.6 412.3l-8.8-4.1 .4 1.8 8.8 4.1z" fill="#7d7deb" stroke="#7d7deb"/>
<path d="M1553.2 672.2l.9-9.7-1.4-1.3-.9 9.6z" fill="#9393ff" stroke="#9393ff"/>
<path d="M1401.2 410l8.8 4.1M1552.7 661.2l-.9 9.6" class="e"/>
<path d="M1408.8 410.9l-9-4.1 1 1.4 8.8 4.1z" fill="#6060bf" stroke="#6060bf"/>
<path d="M1553.9 673.7l.9-9.8-.7-1.4-.9 9.7z" fill="#a09fff" stroke="#a09fff"/>
<path d="M1550 693.9l1.5-9.9 .1-6.1-1.5 9.5z" fill="#a9a7ff" stroke="#a9a7ff"/>
<path d="M1389.7 403.7l-9.3-3.6 5.6 3.2 9 3.4z" fill="#5a5ab4" stroke="#5a5ab4"/>
<path d="M1550 693.9l1.5-9.9M1551.6 677.9l-1.5 9.5M1389.7 403.7l-9.3-3.6M1386 403.3l9 3.4" class="e"/>
<path d="M1407.5 410.2l-9-4.2 1.3 .8 9 4.1z" fill="#5a5ab4" stroke="#5a5ab4"/>
<path d="M1553.9 675.2l.9-9.9 0-1.4-.9 9.8z" fill="#a6a5ff" stroke="#a6a5ff"/>
<path d="M1398.5 406l9 4.2M1554.8 665.3l-.9 9.9" class="e"/>
<path d="M1418.5 417.1l-8.9-4.8 .4 1.8 8.8 4.7z" fill="#7d7dec" stroke="#7d7dec"/>
<path d="M1554.1 662.5l.2-10.1-1.3-1.1-.3 9.9z" fill="#9292ff" stroke="#9292ff"/>
<path d="M1410 414.1l8.8 4.7M1553 651.3l-.3 9.9" class="e"/>
<path d="M1417.7 415.8l-8.9-4.9 .8 1.4 8.9 4.8z" fill="#6262c1" stroke="#6262c1"/>
<path d="M1554.8 663.9l.3-10.2-.8-1.3-.2 10.1z" fill="#9d9dff" stroke="#9d9dff"/>
<path d="M1416.6 415.1l-9.1-4.9 1.3 .7 8.9 4.9z" fill="#5a5ab4" stroke="#5a5ab4"/>
<path d="M1554.8 665.3l.3-10.3 0-1.3-.3 10.2z" fill="#a2a2ff" stroke="#a2a2ff"/>
<path d="M1407.5 410.2l9.1 4.9M1555.1 655l-.3 10.3M1555.1 653.7l0 1.3M1416.6 415.1l1.1 .7" class="e"/>
<path d="M1399.1 408l-9.4-4.3 5.3 3 9.1 4.2z" fill="#5a5ab4" stroke="#5a5ab4"/>
<path d="M1551.5 684l.9-10.3 .1-5.8-.9 10z" fill="#a6a5ff" stroke="#a6a5ff"/>
<path d="M1399.1 408l-9.4-4.3M1395 406.7l9.1 4.2M1551.5 684l.9-10.3M1552.5 667.9l-.9 10" class="e"/>
<path d="M1554.3 652.4l-.2-10.5-1.4-.9 .3 10.3z" fill="#9191ff" stroke="#9191ff"/>
<path d="M1427.4 422.5l-8.9-5.4 .3 1.7 8.7 5.4z" fill="#7e7eed" stroke="#7e7eed"/>
<path d="M1552.7 641l.3 10.3M1418.8 418.8l8.7 5.4" class="e"/>
<path d="M1555.1 653.7l-.3-10.6-.7-1.2 .2 10.5z" fill="#9b9bff" stroke="#9b9bff"/>
<path d="M1426.7 421.3l-9-5.5 .8 1.3 8.9 5.4z" fill="#6363c4" stroke="#6363c4"/>
<path d="M1554.8 643.1l.3 10.6M1417.7 415.8l9 5.5" class="e"/>
<path d="M1552.4 673.7l.3-10.7 0-5.5-.2 10.4z" fill="#a2a2ff" stroke="#a2a2ff"/>
<path d="M1408.5 413.1l-9.4-5.1 5 2.9 9.1 5z" fill="#5a5ab4" stroke="#5a5ab4"/>
<path d="M1552.7 657.5l0 5.5M1552.4 673.7l.3-10.7M1552.7 657.5l-.2 10.4M1408.5 413.1l4.7 2.8M1408.5 413.1l-9.4-5.1M1404.1 410.9l9.1 5" class="e"/>
<path d="M1554.1 641.9l-.9-10.7-1.4-.8 .9 10.6z" fill="#9090ff" stroke="#9090ff"/>
<path d="M1436.2 428.6l-8.8-6.1 .1 1.7 8.8 6z" fill="#7e7eee" stroke="#7e7eee"/>
<path d="M1551.8 630.4l.9 10.6M1427.5 424.2l8.8 6" class="e"/>
<path d="M1554.8 643.1l-.9-10.8-.7-1.1 .9 10.7z" fill="#9999ff" stroke="#9999ff"/>
<path d="M1435.7 427.5l-9-6.2 .7 1.2 8.8 6.1z" fill="#6565c6" stroke="#6565c6"/>
<path d="M1553.9 632.3l.9 10.8M1426.7 421.3l9 6.2" class="e"/>
<path d="M1553.2 631.2l-1.5-10.9-1.3-.8 1.4 10.9z" fill="#8f8fff" stroke="#8f8fff"/>
<path d="M1445 435.4l-8.8-6.8 .1 1.6 8.6 6.7z" fill="#7f7fee" stroke="#7f7fee"/>
<path d="M1550.4 619.5l1.4 10.9M1436.3 430.2l8.6 6.7" class="e"/>
<path d="M1553.9 632.3l-1.5-11.1-.7-.9 1.5 10.9z" fill="#9696ff" stroke="#9696ff"/>
<path d="M1444.5 434.3l-8.8-6.8 .5 1.1 8.8 6.8z" fill="#6767c9" stroke="#6767c9"/>
<path d="M1552.4 621.2l1.5 11.1M1435.7 427.5l8.8 6.8" class="e"/>
<path d="M1453.7 442.7l-8.7-7.3-.1 1.5 8.6 7.2z" fill="#8080ef" stroke="#8080ef"/>
<path d="M1551.7 620.3l-2-11.2-1.3-.6 2 11z" fill="#8f8fff" stroke="#8f8fff"/>
<path d="M1444.9 436.9l8.6 7.2M1548.4 608.5l2 11" class="e"/>
<path d="M1552.4 621.2l-2-11.3-.7-.8 2 11.2z" fill="#9494ff" stroke="#9494ff"/>
<path d="M1453.3 441.7l-8.8-7.4 .5 1.1 8.7 7.3z" fill="#6969cc" stroke="#6969cc"/>
<path d="M1550.4 609.9l2 11.3M1444.5 434.3l8.8 7.4" class="e"/>
<path d="M1462.2 450.6l-8.5-7.9-.2 1.4 8.4 7.8z" fill="#8080f1" stroke="#8080f1"/>
<path d="M1549.7 609.1l-2.6-11.3-1.3-.5 2.6 11.2z" fill="#8e8eff" stroke="#8e8eff"/>
<path d="M1453.5 444.1l8.4 7.8M1545.8 597.3l2.6 11.2" class="e"/>
<path d="M1550.4 609.9l-2.6-11.4-.7-.7 2.6 11.3z" fill="#9191ff" stroke="#9191ff"/>
<path d="M1461.9 449.7l-8.6-8 .4 1 8.5 7.9z" fill="#6b6bd0" stroke="#6b6bd0"/>
<path d="M1547.8 598.5l2.6 11.4M1453.3 441.7l8.6 8" class="e"/>
<path d="M1547.1 597.8l-3.1-11.4-1.3-.3 3.1 11.2z" fill="#8d8dff" stroke="#8d8dff"/>
<path d="M1470.5 459l-8.3-8.4-.3 1.3 8.2 8.4z" fill="#8181f2" stroke="#8181f2"/>
<path d="M1542.7 586.1l3.1 11.2M1461.9 451.9l8.2 8.4" class="e"/>
<path d="M1547.8 598.5l-3.2-11.6-.6-.5 3.1 11.4z" fill="#8f8fff" stroke="#8f8fff"/>
<path d="M1470.3 458.2l-8.4-8.5 .3 .9 8.3 8.4z" fill="#6d6dd3" stroke="#6d6dd3"/>
<path d="M1544.6 586.9l3.2 11.6M1461.9 449.7l8.4 8.5" class="e"/>
<path d="M1544 586.4l-3.7-11.5-1.2-.2 3.6 11.4z" fill="#8c8cff" stroke="#8c8cff"/>
<path d="M1478.6 467.9l-8.1-8.9-.4 1.3 8 8.8z" fill="#8282f3" stroke="#8282f3"/>
<path d="M1539.1 574.7l3.6 11.4M1470.1 460.3l8 8.8" class="e"/>
<path d="M1544.6 586.9l-3.7-11.6-.6-.4 3.7 11.5z" fill="#8c8cff" stroke="#8c8cff"/>
<path d="M1478.5 467.2l-8.2-9 .2 .8 8.1 8.9z" fill="#6f6fd7" stroke="#6f6fd7"/>
<path d="M1540.9 575.3l3.7 11.6M1470.3 458.2l8.2 9" class="e"/>
<path d="M1540.3 574.9l-4.2-11.5-1.1 0 4.1 11.3z" fill="#8b8bff" stroke="#8b8bff"/>
<path d="M1486.4 477.3l-7.8-9.4-.5 1.2 7.8 9.2z" fill="#8383f4" stroke="#8383f4"/>
<path d="M1535 563.4l4.1 11.3M1478.1 469.1l7.8 9.2" class="e"/>
<path d="M1540.9 575.3l-4.2-11.6-.6-.3 4.2 11.5z" fill="#8989fe" stroke="#8989fe"/>
<path d="M1486.4 476.7l-7.9-9.5 .1 .7 7.8 9.4z" fill="#7272da" stroke="#7272da"/>
<path d="M1536.7 563.7l4.2 11.6M1478.5 467.2l7.9 9.5" class="e"/>
<path d="M1536.1 563.4l-4.7-11.4-1.1 .1 4.7 11.3z" fill="#8a8aff" stroke="#8a8aff"/>
<path d="M1494 487.1l-7.6-9.8-.5 1 7.4 9.7z" fill="#8484f5" stroke="#8484f5"/>
<path d="M1530.3 552.1l4.7 11.3M1485.9 478.3l7.4 9.7" class="e"/>
<path d="M1531.4 552l-5.1-11.3-1.1 .2 5.1 11.2z" fill="#8989fe" stroke="#8989fe"/>
<path d="M1501.2 497.2l-7.2-10.1-.7 .9 7.2 10z" fill="#8484f7" stroke="#8484f7"/>
<path d="M1525.2 540.9l5.1 11.2M1493.3 488l7.2 10" class="e"/>
<path d="M1536.7 563.7l-4.8-11.5-.5-.2 4.7 11.4z" fill="#8787fa" stroke="#8787fa"/>
<path d="M1494 486.6l-7.6-9.9 0 .6 7.6 9.8z" fill="#7474de" stroke="#7474de"/>
<path d="M1531.9 552.2l4.8 11.5M1486.4 476.7l7.6 9.9" class="e"/>
<path d="M1526.3 540.7l-5.7-11.2-.9 .4 5.5 11z" fill="#8888fc" stroke="#8888fc"/>
<path d="M1508.1 507.7l-6.9-10.5-.7 .8 6.7 10.4z" fill="#8585f8" stroke="#8585f8"/>
<path d="M1519.7 529.9l5.5 11M1500.5 498l6.7 10.4" class="e"/>
<path d="M1520.6 529.5l-6-11-.9 .5 6 10.9z" fill="#8787fb" stroke="#8787fb"/>
<path d="M1514.6 518.5l-6.5-10.8-.9 .7 6.5 10.6z" fill="#8686f9" stroke="#8686f9"/>
<path d="M1513.7 519l6 10.9M1507.2 508.4l6.5 10.6" class="e"/>
<path d="M1531.9 552.2l-5.2-11.5-.4 0 5.1 11.3z" fill="#8484f6" stroke="#8484f6"/>
<path d="M1501.3 496.8l-7.3-10.2 0 .5 7.2 10.1z" fill="#7777e2" stroke="#7777e2"/>
<path d="M1526.7 540.7l5.2 11.5M1494 486.6l7.3 10.2" class="e"/>
<path d="M1526.7 540.7l-5.7-11.3-.4 .1 5.7 11.2z" fill="#8181f2" stroke="#8181f2"/>
<path d="M1508.3 507.4l-7-10.6-.1 .4 6.9 10.5z" fill="#7979e6" stroke="#7979e6"/>
<path d="M1521 529.4l5.7 11.3M1501.3 496.8l7 10.6" class="e"/>
<path d="M1521 529.4l-6.2-11.1-.2 .2 6 11z" fill="#7e7eee" stroke="#7e7eee"/>
<path d="M1514.8 518.3l-6.5-10.9-.2 .3 6.5 10.8z" fill="#7c7cea" stroke="#7c7cea"/>
<path d="M1514.8 518.3l6.2 11.1M1508.3 507.4l6.5 10.9" class="e"/>
<path d="M1352 710l1.5 1.9 1 1.9 .5 1.9-.1 1.4-.2 4.8 .1 5.1 .5 5.4 6.1 5.8 2.9-2.3 2.6-2.5 2.2-2.9 .7-1 1.2-.2 1.5 .5 1.7 1.1 1.6 1.6 1.2 1.9 .7 1.8 .1 1.6 .4 5.1 .8 5.5 1.1 5.6 6.4 4.8 2.3-3 2.1-3.3 1.6-3.6 .5-1.2 1.1-.5 1.4 .2 1.7 .8 1.7 1.4 1.3 1.7 .9 1.8 .3 1.7 1.1 5.3 1.4 5.7 1.8 5.8 6.4 3.6 1.7-3.7 1.5-4 1-4.2 .3-1.3 .9-.8 1.3-.1 1.7 .5 1.7 1.1 1.4 1.5 1.1 1.8 .5 1.6 1.7 5.5 2 5.7 2.4 5.8 6.3 2.5 1.1-4.4 .8-4.6 .4-4.6 .1-1.5 .7-1 1.2-.5 1.6 .2 1.7 .8 1.5 1.3 1.2 1.6 .6 1.7 2.3 5.5 2.6 5.6 3 5.6 6.1 1.3 .4-5 .1-5-.3-5-.1-1.6 .5-1.2 1.1-.8 1.5-.1 1.6 .4 1.6 1.1 1.3 1.4 .8 1.7 2.8 5.3 3.1 5.4 3.4 5.3 5.8 0-.3-5.3-.6-5.4-.9-5.3-.3-1.7 .3-1.4 .9-1 1.3-.5 1.5 .2 1.6 .7 1.4 1.3 1 1.5 3.2 5.1 3.6 5 3.8 5 5.2-1.3-.9-5.6-1.2-5.6-1.6-5.5-.5-1.7 .1-1.5 .7-1.3 1.1-.8 1.4-.2 1.6 .4 1.4 1.1 1.1 1.4 3.6 4.7 3.9 4.6 4.2 4.4 4.6-2.5-1.6-5.8-1.9-5.6-2.1-5.6-.7-1.6-.1-1.7 .4-1.6 .9-1 1.3-.6 1.5 .2 1.4 .8 1.2 1.3 3.9 4.2 4.2 4 4.4 3.7 3.8-3.6-2.2-5.8-2.4-5.6-2.7-5.4-.9-1.7-.3-1.8 .2-1.7 .7-1.3 1.1-.9 1.4-.1 1.4 .5 1.2 1.1 4.2 3.6 4.3 3.3 4.5 3.1 3-4.7-2.8-5.7-3-5.5-3.1-5.1-1-1.6-.5-1.8-.1-1.9 .5-1.6 .9-1.1 1.2-.5 1.3 .2 1.3 1 4.3 2.9 4.4 2.6 4.4 2.3 2.2-5.8-3.3-5.4-3.4-5.1-3.6-4.8-1.1-1.5-.7-1.8-.3-2 .2-1.8 .7-1.4 1-.8 1.3 0 1.3 .7 4.2 2.2 4.4 1.8 4.4 1.4 1.2-6.6-3.8-5-3.8-4.7-3.8-4.4-1.2-1.3-1-1.7-.5-2.1 0-2 .4-1.6 .8-1 1.2-.4 1.3 .5 4.1 1.4 4.2 .9 4.2 .6 .3-7.3-4.1-4.5-4.1-4.2-4.1-3.8-1.3-1.1-1-1.7-.8-2-.3-2.1 .2-1.9 .6-1.3 1-.6 1.2 .3 4 .5 4 .1 3.9-.4-.8-7.7-4.3-4-4.3-3.6-4.2-3.1-1.3-.8-1.2-1.6-1-2-.5-2.2-.1-2 .4-1.5 .8-.9 1.2 0 3.7-.3 3.6-.8 3.5-1.2-1.7-8.1-4.4-3.3-4.4-2.8-4.3-2.4-1.3-.7-1.3-1.4-1.1-1.9-.8-2.2-.4-2.1 .2-1.7 .6-1.1 1.1-.3 3.3-1.1 3.2-1.7 3.1-2-2.7-8.3-4.5-2.5-4.3-2-4.3-1.6-1.2-.4-1.4-1.3-1.3-1.8-1-2.1-.6-2.2-.1-1.8 .5-1.3 .9-.6 2.9-1.9 2.7-2.5 2.5-2.9-3.5-8.2-4.4-1.6-4.3-1.3-4-.7-1.3-.2-1.4-1-1.4-1.6-1.2-2.1-.8-2.1-.3-2 .2-1.5 .8-.8 2.3-2.7 2.2-3.2 1.9-3.6-4.3-8-4.3-.8-4-.3-3.8 .1-1.1 0-1.5-.7-1.5-1.4-1.3-1.9-1.1-2.2-.5-2 0-1.6 .6-1 1.8-3.5 1.5-3.8 1.3-4.3-5-7.5-4 .1-3.7 .4-3.4 1-1.1 .3-1.4-.4-1.5-1.2-1.5-1.8-1.2-2-.8-2.1-.2-1.7 .4-1.2 1.2-4 .9-4.5 .5-4.8-5.5-7-3.6 1-3.3 1.4-3 1.7-.9 .6-1.4-.2-1.6-.9-1.6-1.5-1.3-1.9-1-2-.4-1.9 .2-1.3 .5-4.6 .2-4.9-.1-5.3-5.9-6.1-3.2 1.8-2.8 2.2-2.6 2.5-.7 .8-1.2 .1-1.6-.6-1.7-1.3-1.5-1.7-1.1-1.9-.7-1.9 .1-1.5-.1-5-.5-5.3-.8-5.5-6.2-5.3-2.7 2.7-2.3 2.9-2 3.3-.5 1-1.1 .4-1.6-.4-1.6-1-1.6-1.4-1.4-1.8-.8-1.9-.1-1.6-.8-5.2-1.1-5.6-1.5-5.7-6.3-4.3-2.1 3.4-1.8 3.7-1.3 3.9-.4 1.2-1 .7-1.4-.1-1.6-.6-1.7-1.3-1.4-1.6-1-1.8-.4-1.6-1.4-5.5-1.7-5.6-2.1-5.8-6.4-3.1-1.4 4-1.1 4.3-.8 4.5-.1 1.3-.8 .9-1.3 .3-1.7-.3-1.6-1-1.6-1.4-1.1-1.6-.5-1.7-2-5.5-2.4-5.7-2.6-5.7-6.3-1.9-.7 4.7-.5 4.8 0 4.9 0 1.5-.6 1.1-1.2 .6-1.5 0-1.7-.7-1.5-1.1-1.3-1.5-.7-1.7-2.5-5.4-2.9-5.5-3.2-5.5-6-.7 0 5.2 .2 5.2 .6 5.2 .2 1.6-.4 1.3-1 .9-1.4 .3-1.6-.3-1.6-.9-1.3-1.3-.9-1.6-3-5.3-3.4-5.2-3.6-5.1-5.5 .6 .6 5.5 .9 5.5 1.2 5.4 .4 1.7-.2 1.5-.7 1.2-1.2 .6-1.5 0-1.6-.6-1.4-1.1-1-1.6-3.5-4.9-3.7-4.7-4-4.7-5 1.8 1.3 5.8 1.6 5.6 1.8 5.5 .6 1.7 0 1.6-.5 1.4-1.1 1-1.3 .3-1.5-.3-1.5-.9-1.1-1.4-3.8-4.4-4.1-4.3-4.2-4.1-4.3 3.1 2 5.8 2.1 5.6 2.4 5.5 .8 1.7 .2 1.7-.3 1.6-.8 1.3-1.2 .6-1.4 .1-1.4-.7-1.3-1.2-4-3.9-4.3-3.7-4.4-3.4-3.5 4.2 2.5 5.7 2.7 5.6 3 5.3 .9 1.6 .4 1.8 0 1.8-.6 1.5-1 1-1.3 .3-1.4-.4-1.3-1-4.2-3.3-4.4-2.9-4.4-2.7-2.7 5.2 3.1 5.6 3.2 5.3 3.4 5 1 1.5 .7 1.8 .1 2-.3 1.7-.8 1.2-1.1 .7-1.3-.1-1.3-.9-4.3-2.5-4.4-2.2-4.4-1.9-1.7 6.2 3.5 5.3 3.6 4.9 3.8 4.6 1.1 1.3 .9 1.9 .4 2-.1 1.9-.6 1.5-.9 .9-1.2 .2-1.3-.6-4.2-1.8-4.3-1.3-4.3-1-.8 6.9 4 4.8 3.9 4.5 4 4 1.2 1.2 1.1 1.8 .6 2 .2 2.1-.3 1.7-.8 1.2-1 .5-1.3-.4-4.1-.9-4.1-.6-4-.1 .2 7.6 4.2 4.2 4.2 3.9 4.2 3.5 1.3 1 1.1 1.6 .9 2 .4 2.2 0 1.9-.5 1.4-1 .7-1.2-.1-3.8-.1-3.8 .4-3.7 .8 1.2 7.9 4.4 3.6 4.3 3.3 4.3 2.7 1.3 .8 1.3 1.5 1 2 .7 2.1 .2 2.1-.3 1.6-.7 1-1.1 .2-3.6 .7-3.4 1.2-3.2 1.6 2.1 8.2 4.5 2.9 4.4 2.5 4.3 2 1.2 .5 1.4 1.3 1.2 1.9 .9 2.2 .5 2.1-.1 1.8-.5 1.2-1 .4-3.1 1.6-3 2-2.7 2.5 3 8.3 4.5 2 4.3 1.7 4.2 1.2 1.2 .3 1.4 1.1 1.4 1.7 1.1 2.1 .7 2.2 .2 1.9-.4 1.4-.8 .7-2.6 2.3-2.5 2.8-2.2 3.3 3.9 8.1 4.4 1.2 4.1 .8 4 .4 1.1 0 1.5 .9 1.4 1.5 1.3 2 1 2.2 .4 2-.1 1.5-.7 .9-2.1 3.1-1.8 3.6-1.6 3.9 4.6 7.8 4.1 .3 3.9 0 3.7-.5 1-.3 1.5 .6 1.5 1.4 1.4 1.8 1.2 2.1 .6 2 .1 1.7-.5 1.1-1.5 3.8-1.2 4.2-.9 4.5 5.2 7.3 3.9-.6 3.5-.9 3.2-1.3 1-.5 1.4 .3 1.6 1.1 1.5 1.6 1.3 2 .9 2 .3 1.8-.3 1.3-.9 4.3-.5 4.7-.3 5.1 5.8 6.5 3.4-1.4 3.1-1.7 2.8-2.2 .8-.7 1.3 .1 1.6 .7zM1552.7 663l-.3-11.1-.9-11.4-1.5-11.6-2.2-11.9-2.7-12-3.3-12.1-3.9-12.2-4.5-12.2-5-12.1-5.5-12-5.9-11.9-6.5-11.7-6.9-11.4-7.3-11.1-7.7-10.8-8-10.4-8.3-10-8.6-9.4-8.8-9-9.1-8.3-9.2-7.8-9.3-7.2-9.4-6.5-9.4-5.8-9.4-5.1-9.4-4.3-9.3-3.6-9.2-2.8-9.1-2.1-8.8-1.3-8.6-.4-8.3 .3-8 1.1-7.7 2-7.3 2.7-6.9 3.4-6.5 4.3-5.9 4.9-5.5 5.7-5 6.4-4.5 7-3.9 7.7-3.3 8.3-2.7 8.8-2.2 9.4-1.5 9.9-.9 10.3-.3 10.7 .3 11.1 .9 11.4 1.5 11.6 2.2 11.9 2.7 12 3.3 12.1 3.9 12.2 4.5 12.2 5 12.1 5.5 12 5.9 11.9 6.5 11.7 6.9 11.4 7.3 11.1 7.7 10.8 8 10.4 8.3 10 8.6 9.4 8.8 9 9.1 8.3 9.2 7.8 9.3 7.2 9.4 6.5 9.4 5.8 9.4 5.1 9.4 4.3 9.3 3.6 9.2 2.8 9.1 2.1 8.8 1.3 8.6 .4 8.3-.3 8-1.1 7.7-2 7.3-2.7 6.9-3.4 6.5-4.3 5.9-4.9 5.5-5.7 5-6.4 4.5-7 3.9-7.7 3.3-8.3 2.7-8.8 2.2-9.4 1.5-9.9 .9-10.3z" fill="#8a8aff" fill-rule="evenodd" class="f"/>
<path d="M1502.2 622l-.1-5.7-.5-5.9-.7-5.9-1-6.1-1.2-6.1-1.5-6.2-1.8-6.2-2.1-6.3-2.3-6.3-2.5-6.2-2.8-6.2-3-6.1-3.3-6.1-3.4-5.9-3.6-5.9-3.8-5.6-4-5.5-4.1-5.4-4.3-5.1-4.4-4.9-4.5-4.7-4.6-4.4-4.7-4.2-4.8-3.8-4.8-3.6-4.8-3.3-4.8-3-4.9-2.6-4.8-2.3-4.8-2-4.8-1.6-4.7-1.2-4.6-.9-4.5-.6-4.4-.1-4.3 .2-4.1 .5-4 .9-3.8 1.3-3.6 1.6-3.4 2-3.3 2.3-3 2.7-2.8 3-2.5 3.3-2.3 3.6-2.1 3.9-1.8 4.2-1.5 4.4-1.2 4.7-1 4.9-.7 5.1-.4 5.4-.2 5.5 .2 5.7 .4 5.8 .7 6 1 6 1.2 6.2 1.5 6.2 1.8 6.2 2.1 6.3 2.3 6.2 2.5 6.3 2.8 6.2 3 6.1 3.3 6.1 3.4 5.9 3.6 5.8 3.8 5.7 4 5.5 4.1 5.3 4.3 5.2 4.4 4.9 4.5 4.6 4.6 4.5 4.7 4.1 4.8 3.9 4.8 3.6 4.8 3.3 4.9 2.9 4.8 2.7 4.8 2.3 4.8 1.9 4.8 1.6 4.7 1.3 4.6 .9 4.5 .5 4.4 .2 4.3-.2 4.1-.6 4-.9 3.8-1.2 3.6-1.7 3.4-2 3.3-2.3 3-2.6 2.8-3 2.5-3.3 2.3-3.6 2.1-3.9 1.8-4.2 1.5-4.4 1.2-4.7 1-4.9 .7-5.2 .5-5.3z" class="e"/>
<path d="M1358.1 604.9l3.4 5.9 1-.6-3.4-5.9z" fill="#8787fa" stroke="#8787fa"/>
<path d="M1358.1 604.9l3.4 5.9" class="e"/>
<path d="M1354.8 598.8l3.3 6.1 1-.6-3.1-5.9z" fill="#8888fb" stroke="#8888fb"/>
<path d="M1361.5 610.8l3.6 5.8 .9-.8-3.5-5.6z" fill="#8686f9" stroke="#8686f9"/>
<path d="M1354.8 598.8l3.3 6.1M1361.5 610.8l3.6 5.8" class="e"/>
<path d="M1351.8 592.7l3 6.1 1.2-.4-3-6z" fill="#8888fd" stroke="#8888fd"/>
<path d="M1365.1 616.6l3.8 5.7 .8-.9-3.7-5.6z" fill="#8585f8" stroke="#8585f8"/>
<path d="M1351.8 592.7l3 6.1M1365.1 616.6l3.8 5.7" class="e"/>
<path d="M1349 586.5l2.8 6.2 1.2-.3-2.7-6z" fill="#8989fe" stroke="#8989fe"/>
<path d="M1368.9 622.3l4 5.5 .7-1-3.9-5.4z" fill="#8484f6" stroke="#8484f6"/>
<path d="M1349 586.5l2.8 6.2M1368.9 622.3l4 5.5" class="e"/>
<path d="M1359.1 604.3l3.4 5.9 .3-.3-3.3-5.7z" fill="#7d7dec" stroke="#7d7dec"/>
<path d="M1362.8 609.9l-3.3-5.7" class="e"/>
<path d="M1372.9 627.8l4.1 5.3 .7-1.1-4.1-5.2z" fill="#8383f5" stroke="#8383f5"/>
<path d="M1346.5 580.2l2.5 6.3 1.3-.1-2.5-6.1z" fill="#8a8aff" stroke="#8a8aff"/>
<path d="M1372.9 627.8l4.1 5.3M1346.5 580.2l2.5 6.3" class="e"/>
<path d="M1362.5 610.2l3.5 5.6 .2-.3-3.4-5.6z" fill="#7b7be8" stroke="#7b7be8"/>
<path d="M1356 598.4l3.1 5.9 .4-.1-3.1-5.8z" fill="#8080ef" stroke="#8080ef"/>
<path d="M1366.2 615.5l-3.4-5.6M1359.5 604.2l-3.1-5.8" class="e"/>
<path d="M1353 592.4l3 6 .4 0-2.9-5.9z" fill="#8282f3" stroke="#8282f3"/>
<path d="M1366 615.8l3.7 5.6 .2-.5-3.7-5.4z" fill="#7878e5" stroke="#7878e5"/>
<path d="M1356.4 598.4l-2.9-5.9M1369.9 620.9l-3.7-5.4" class="e"/>
<path d="M1350.3 586.4l2.7 6 .5 .1-2.7-5.9z" fill="#8484f7" stroke="#8484f7"/>
<path d="M1369.7 621.4l3.9 5.4 .1-.6-3.8-5.3z" fill="#7676e1" stroke="#7676e1"/>
<path d="M1353.5 592.5l-2.7-5.9M1373.7 626.2l-3.8-5.3" class="e"/>
<path d="M1377 633.1l4.3 5.2 .5-1.3-4.1-5z" fill="#8383f4" stroke="#8383f4"/>
<path d="M1344.2 574l2.3 6.2 1.3 .1-2.3-6.2z" fill="#8b8bff" stroke="#8b8bff"/>
<path d="M1377 633.1l4.3 5.2M1344.2 574l2.3 6.2" class="e"/>
<path d="M1373.6 626.8l4.1 5.2-.1-.7-3.9-5.1z" fill="#7474de" stroke="#7474de"/>
<path d="M1347.8 580.3l2.5 6.1 .5 .2-2.4-6z" fill="#8787fa" stroke="#8787fa"/>
<path d="M1377.6 631.3l-3.9-5.1M1350.8 586.6l-2.4-6" class="e"/>
<path d="M1342.1 567.7l2.1 6.3 1.3 .1-2-6.1z" fill="#8c8cff" stroke="#8c8cff"/>
<path d="M1381.3 638.3l4.4 4.9 .4-1.4-4.3-4.8z" fill="#8282f3" stroke="#8282f3"/>
<path d="M1342.1 567.7l2.1 6.3M1381.3 638.3l4.4 4.9" class="e"/>
<path d="M1345.5 574.1l2.3 6.2 .6 .3-2.2-6z" fill="#8989fe" stroke="#8989fe"/>
<path d="M1377.7 632l4.1 5-.1-.8-4.1-4.9z" fill="#7272da" stroke="#7272da"/>
<path d="M1348.4 580.6l-2.2-6M1381.7 636.2l-4.1-4.9" class="e"/>
<path d="M1385.7 643.2l4.5 4.6 .4-1.4-4.5-4.6z" fill="#8181f2" stroke="#8181f2"/>
<path d="M1340.3 561.5l1.8 6.2 1.4 .3-1.7-6.1z" fill="#8d8dff" stroke="#8d8dff"/>
<path d="M1385.7 643.2l4.5 4.6M1340.3 561.5l1.8 6.2" class="e"/>
<path d="M1343.5 568l2 6.1 .7 .5-2-6z" fill="#8c8cff" stroke="#8c8cff"/>
<path d="M1381.8 637l4.3 4.8-.1-.9-4.3-4.7z" fill="#7070d7" stroke="#7070d7"/>
<path d="M1346.2 574.6l-2-6M1386 640.9l-4.3-4.7" class="e"/>
<path d="M1386.1 641.8l4.5 4.6-.3-1-4.3-4.5z" fill="#6e6ed4" stroke="#6e6ed4"/>
<path d="M1341.8 561.9l1.7 6.1 .7 .6-1.7-6z" fill="#8e8eff" stroke="#8e8eff"/>
<path d="M1390.3 645.4l-4.3-4.5M1344.2 568.6l-1.7-6" class="e"/>
<path d="M1390.2 647.8l4.6 4.5 .3-1.6-4.5-4.3z" fill="#8181f1" stroke="#8181f1"/>
<path d="M1338.8 555.3l1.5 6.2 1.5 .4-1.5-6.1z" fill="#8d8dff" stroke="#8d8dff"/>
<path d="M1390.2 647.8l4.6 4.5M1338.8 555.3l1.5 6.2" class="e"/>
<path d="M1390.6 646.4l4.5 4.3-.4-1.1-4.4-4.2z" fill="#6c6cd1" stroke="#6c6cd1"/>
<path d="M1340.3 555.8l1.5 6.1 .7 .7-1.5-5.9z" fill="#9090ff" stroke="#9090ff"/>
<path d="M1394.7 649.6l-4.4-4.2M1342.5 562.6l-1.5-5.9" class="e"/>
<path d="M1394.8 652.3l4.7 4.1 .1-1.6-4.5-4.1z" fill="#8080f0" stroke="#8080f0"/>
<path d="M1337.6 549.1l1.2 6.2 1.5 .5-1.2-6z" fill="#8e8eff" stroke="#8e8eff"/>
<path d="M1394.8 652.3l4.7 4.1M1337.6 549.1l1.2 6.2" class="e"/>
<path d="M1356.4 606.1l3.2 5.5 1.4-1-3.1-5.2z" fill="#8383f4" stroke="#8383f4"/>
<path d="M1359.6 611.6l-3.2-5.5M1361 610.6l-3.1-5.2" class="e"/>
<path d="M1353.4 600.5l3 5.6 1.5-.7-2.8-5.4z" fill="#8484f7" stroke="#8484f7"/>
<path d="M1359.6 611.6l3.4 5.4 1.2-1.2-3.2-5.2z" fill="#8181f2" stroke="#8181f2"/>
<path d="M1356.4 606.1l-3-5.6M1363 617l-3.4-5.4M1357.9 605.4l-2.8-5.4M1364.2 615.8l-3.2-5.2" class="e"/>
<path d="M1350.6 594.8l2.8 5.7 1.7-.5-2.7-5.4z" fill="#8686f9" stroke="#8686f9"/>
<path d="M1363 617l3.5 5.3 1.1-1.5-3.4-5z" fill="#8080f0" stroke="#8080f0"/>
<path d="M1353.4 600.5l-2.8-5.7M1355.1 600l-2.7-5.4M1366.5 622.3l-3.5-5.3M1367.6 620.8l-3.4-5" class="e"/>
<path d="M1348.1 589l2.5 5.8 1.8-.2-2.5-5.5z" fill="#8787fb" stroke="#8787fb"/>
<path d="M1366.5 622.3l3.7 5.1 .9-1.7-3.5-4.9z" fill="#7e7eed" stroke="#7e7eed"/>
<path d="M1350.6 594.8l-2.5-5.8M1352.4 594.6l-2.5-5.5M1370.2 627.4l-3.7-5.1M1371.1 625.7l-3.5-4.9" class="e"/>
<path d="M1395.1 650.7l4.5 4.1-.4-1.2-4.5-4z" fill="#6a6ace" stroke="#6a6ace"/>
<path d="M1339.1 549.8l1.2 6 .7 .9-1.2-5.9z" fill="#9393ff" stroke="#9393ff"/>
<path d="M1399.2 653.6l-4.5-4M1341 556.7l-1.2-5.9" class="e"/>
<path d="M1345.7 583.2l2.4 5.8 1.8 .1-2.2-5.5z" fill="#8989fe" stroke="#8989fe"/>
<path d="M1370.2 627.4l3.9 4.9 .6-1.9-3.6-4.7z" fill="#7d7deb" stroke="#7d7deb"/>
<path d="M1348.1 589l-2.4-5.8M1349.9 589.1l-2.2-5.5M1374.1 632.3l-3.9-4.9M1374.7 630.4l-3.6-4.7" class="e"/>
<path d="M1399.5 656.4l4.8 3.9 0-1.7-4.7-3.8z" fill="#7f7fef" stroke="#7f7fef"/>
<path d="M1336.6 543.1l1 6 1.5 .7-1-5.9z" fill="#8f8fff" stroke="#8f8fff"/>
<path d="M1399.5 656.4l4.8 3.9M1336.6 543.1l1 6" class="e"/>
<path d="M1343.6 577.4l2.1 5.8 2 .4-2.1-5.6z" fill="#8b8bff" stroke="#8b8bff"/>
<path d="M1374.1 632.3l3.9 4.8 .5-2.1-3.8-4.6z" fill="#7b7be9" stroke="#7b7be9"/>
<path d="M1345.7 583.2l-2.1-5.8M1378 637.1l-3.9-4.8M1347.7 583.6l-2.1-5.6M1378.5 635l-3.8-4.6" class="e"/>
<path d="M1338.1 543.9l1 5.9 .7 1-.9-5.8z" fill="#9595ff" stroke="#9595ff"/>
<path d="M1399.6 654.8l4.7 3.8-.6-1.3-4.5-3.7z" fill="#6868cb" stroke="#6868cb"/>
<path d="M1339.8 550.8l-.9-5.8M1403.7 657.3l-4.5-3.7" class="e"/>
<path d="M1341.7 571.6l1.9 5.8 2 .6-1.8-5.5z" fill="#8c8cff" stroke="#8c8cff"/>
<path d="M1378 637.1l4.1 4.6 .3-2.4-3.9-4.3z" fill="#7a7ae7" stroke="#7a7ae7"/>
<path d="M1343.6 577.4l-1.9-5.8M1382.1 641.7l-4.1-4.6M1345.6 578l-1.8-5.5M1382.4 639.3l-3.9-4.3" class="e"/>
<path d="M1335.9 537.1l.7 6 1.5 .8-.7-5.8z" fill="#9090ff" stroke="#9090ff"/>
<path d="M1404.3 660.3l4.8 3.6-.1-1.8-4.7-3.5z" fill="#7f7fee" stroke="#7f7fee"/>
<path d="M1335.9 537.1l.7 6M1404.3 660.3l4.8 3.6" class="e"/>
<path d="M1382.1 641.7l4.2 4.3 .1-2.6-4-4.1z" fill="#7878e5" stroke="#7878e5"/>
<path d="M1340 565.8l1.7 5.8 2.1 .9-1.6-5.5z" fill="#8e8eff" stroke="#8e8eff"/>
<path d="M1386.3 646l-4.2-4.3M1386.4 643.4l-4-4.1M1341.7 571.6l-1.7-5.8M1343.8 572.5l-1.6-5.5" class="e"/>
<path d="M1337.4 538.1l.7 5.8 .8 1.1-.7-5.7z" fill="#9797ff" stroke="#9797ff"/>
<path d="M1404.3 658.6l4.7 3.5-.7-1.3-4.6-3.5z" fill="#6666c8" stroke="#6666c8"/>
<path d="M1338.9 545l-.7-5.7M1408.3 660.8l-4.6-3.5" class="e"/>
<path d="M1335.5 531.3l.4 5.8 1.5 1-.4-5.7z" fill="#9090ff" stroke="#9090ff"/>
<path d="M1409.1 663.9l4.8 3.3-.2-1.9-4.7-3.2z" fill="#7e7eed" stroke="#7e7eed"/>
<path d="M1335.5 531.3l.4 5.8M1409.1 663.9l4.8 3.3" class="e"/>
<path d="M1386.3 646l4.3 4.1-.1-2.7-4.1-4z" fill="#7777e3" stroke="#7777e3"/>
<path d="M1338.6 560l1.4 5.8 2.2 1.2-1.3-5.5z" fill="#8f8fff" stroke="#8f8fff"/>
<path d="M1390.6 650.1l-4.3-4.1M1390.5 647.4l-4.1-4M1340 565.8l-1.4-5.8M1342.2 567l-1.3-5.5" class="e"/>
<path d="M1337 532.4l.4 5.7 .8 1.2-.4-5.6z" fill="#9999ff" stroke="#9999ff"/>
<path d="M1409 662.1l4.7 3.2-.7-1.4-4.7-3.1z" fill="#6565c6" stroke="#6565c6"/>
<path d="M1338.2 539.3l-.4-5.6M1413 663.9l-4.7-3.1" class="e"/>
<path d="M1337.4 554.3l1.2 5.7 2.3 1.5-1.1-5.5z" fill="#9191ff" stroke="#9191ff"/>
<path d="M1390.6 650.1l4.3 3.9-.3-3-4.1-3.6z" fill="#7676e1" stroke="#7676e1"/>
<path d="M1338.6 560l-1.2-5.7M1394.9 654l-4.3-3.9M1340.9 561.5l-1.1-5.5M1394.6 651l-4.1-3.6" class="e"/>
<path d="M1357.3 605.8l3 5.2 6.8-4.4-2.6-4.4z" fill="#8a8aff" stroke="#8a8aff"/>
<path d="M1360.3 611l-3-5.2M1367.1 606.6l-2.6-4.4" class="e"/>
<path d="M1354.5 600.6l2.8 5.2 7.2-3.6-2.4-4.5zM1360.3 611l3.1 5 6.3-5.1-2.6-4.3z" fill="#8a8aff" stroke="#8a8aff"/>
<path d="M1357.3 605.8l-2.8-5.2M1364.5 602.2l-2.4-4.5M1363.4 616l-3.1-5M1369.7 610.9l-2.6-4.3" class="e"/>
<path d="M1351.9 595.4l2.6 5.2 7.6-2.9-2.2-4.6zM1363.4 616l3.3 4.9 5.9-5.8-2.9-4.2z" fill="#8a8aff" stroke="#8a8aff"/>
<path d="M1354.5 600.6l-2.6-5.2M1366.7 620.9l-3.3-4.9M1362.1 597.7l-2.2-4.6M1372.6 615.1l-2.9-4.2" class="e"/>
<path d="M1413.9 667.2l4.9 2.9-.3-1.9-4.8-2.9z" fill="#7e7eed" stroke="#7e7eed"/>
<path d="M1335.3 525.6l.2 5.7 1.5 1.1-.1-5.6z" fill="#9191ff" stroke="#9191ff"/>
<path d="M1413.9 667.2l4.9 2.9M1335.3 525.6l.2 5.7" class="e"/>
<path d="M1349.5 590l2.4 5.4 8-2.3-2.1-4.6zM1366.7 620.9l3.4 4.7 5.4-6.4-2.9-4.1z" fill="#8a8aff" stroke="#8a8aff"/>
<path d="M1351.9 595.4l-2.4-5.4M1370.1 625.6l-3.4-4.7M1359.9 593.1l-2.1-4.6M1375.5 619.2l-2.9-4.1" class="e"/>
<path d="M1394.9 654l4.5 3.6-.5-3.1-4.3-3.5z" fill="#7575df" stroke="#7575df"/>
<path d="M1336.5 548.7l.9 5.6 2.4 1.7-.9-5.3z" fill="#9292ff" stroke="#9292ff"/>
<path d="M1399.4 657.6l-4.5-3.6M1398.9 654.5l-4.3-3.5M1337.4 554.3l-.9-5.6M1339.8 556l-.9-5.3" class="e"/>
<path d="M1347.3 584.6l2.2 5.4 8.3-1.5-1.9-4.6zM1370.1 625.6l3.5 4.6 5-7.1-3.1-3.9z" fill="#8a8aff" stroke="#8a8aff"/>
<path d="M1349.5 590l-2.2-5.4M1373.6 630.2l-3.5-4.6M1357.8 588.5l-1.9-4.6M1378.6 623.1l-3.1-3.9" class="e"/>
<path d="M1336.9 526.8l.1 5.6 .8 1.3-.1-5.4z" fill="#9b9bff" stroke="#9b9bff"/>
<path d="M1413.7 665.3l4.8 2.9-.9-1.4-4.6-2.9z" fill="#6363c4" stroke="#6363c4"/>
<path d="M1337.8 533.7l-.1-5.4M1417.6 666.8l-4.6-2.9" class="e"/>
<path d="M1373.6 630.2l3.7 4.4 4.5-7.6-3.2-3.9zM1345.4 579.3l1.9 5.3 8.6-.7-1.7-4.7z" fill="#8a8aff" stroke="#8a8aff"/>
<path d="M1377.3 634.6l-3.7-4.4M1381.8 627l-3.2-3.9M1347.3 584.6l-1.9-5.3M1355.9 583.9l-1.7-4.7" class="e"/>
<path d="M1418.8 670.1l4.8 2.7-.4-2-4.7-2.6z" fill="#7d7dec" stroke="#7d7dec"/>
<path d="M1335.5 520.1l-.2 5.5 1.6 1.2 .1-5.4z" fill="#9292ff" stroke="#9292ff"/>
<path d="M1418.8 670.1l4.8 2.7M1335.5 520.1l-.2 5.5" class="e"/>
<path d="M1343.6 573.9l1.8 5.4 8.8-.1-1.5-4.6zM1377.3 634.6l3.8 4.2 3.9-8.2-3.2-3.6z" fill="#8a8aff" stroke="#8a8aff"/>
<path d="M1345.4 579.3l-1.8-5.4M1381.1 638.8l-3.8-4.2M1354.2 579.2l-1.5-4.6M1385 630.6l-3.2-3.6" class="e"/>
<path d="M1335.8 543.2l.7 5.5 2.4 2-.6-5.3z" fill="#9494ff" stroke="#9494ff"/>
<path d="M1399.4 657.6l4.4 3.3-.7-3.2-4.2-3.2z" fill="#7474dd" stroke="#7474dd"/>
<path d="M1336.5 548.7l-.7-5.5M1403.8 660.9l-4.4-3.3M1338.9 550.7l-.6-5.3M1403.1 657.7l-4.2-3.2" class="e"/>
<path d="M1418.5 668.2l4.7 2.6-.9-1.5-4.7-2.5z" fill="#6262c1" stroke="#6262c1"/>
<path d="M1337 521.4l-.1 5.4 .8 1.5 .1-5.3z" fill="#9d9dff" stroke="#9d9dff"/>
<path d="M1381.1 638.8l3.9 4.1 3.4-8.8-3.4-3.5zM1342.1 568.5l1.5 5.4 9.1 .7-1.3-4.7z" fill="#8a8aff" stroke="#8a8aff"/>
<path d="M1385 642.9l-3.9-4.1M1388.4 634.1l-3.4-3.5M1343.6 573.9l-1.5-5.4M1352.7 574.6l-1.3-4.7" class="e"/>
<path d="M1335.4 537.7l.4 5.5 2.5 2.2-.4-5.2z" fill="#9595ff" stroke="#9595ff"/>
<path d="M1403.8 660.9l4.5 3-.9-3.3-4.3-2.9z" fill="#7272dc" stroke="#7272dc"/>
<path d="M1335.8 543.2l-.4-5.5M1408.3 663.9l-4.5-3M1338.3 545.4l-.4-5.2M1407.4 660.6l-4.3-2.9" class="e"/>
<path d="M1385 642.9l4 3.8 2.8-9.3-3.4-3.3zM1340.7 563.1l1.4 5.4 9.3 1.4-1.2-4.6z" fill="#8a8aff" stroke="#8a8aff"/>
<path d="M1389 646.7l-4-3.8M1391.8 637.4l-3.4-3.3M1342.1 568.5l-1.4-5.4M1351.4 569.9l-1.2-4.6" class="e"/>
<path d="M1417.6 666.8l4.7 2.5-1.4-.8-4.6-2.5z" fill="#5a5ab4" stroke="#5a5ab4"/>
<path d="M1337.8 523l-.1 5.3 0 1.5 .1-5.2z" fill="#a2a2ff" stroke="#a2a2ff"/>
<path d="M1417.6 666.8l-1.3-.8M1420.9 668.5l-4.6-2.5M1337.7 528.3l0 1.5M1337.7 529.8l.1-5.2" class="e"/>
<path d="M1423.6 672.8l4.8 2.3-.5-2.1-4.7-2.2z" fill="#7d7deb" stroke="#7d7deb"/>
<path d="M1335.9 514.7l-.4 5.4 1.5 1.3 .4-5.2z" fill="#9393ff" stroke="#9393ff"/>
<path d="M1423.6 672.8l4.8 2.3M1335.9 514.7l-.4 5.4" class="e"/>
<path d="M1389 646.7l4 3.5 2.3-9.8-3.5-3zM1339.7 557.9l1 5.2 9.5 2.2-.9-4.5z" fill="#8a8aff" stroke="#8a8aff"/>
<path d="M1393 650.2l-4-3.5M1395.3 640.4l-3.5-3M1340.7 563.1l-1-5.2M1350.2 565.3l-.9-4.5" class="e"/>
<path d="M1337.4 516.2l-.4 5.2 .8 1.6 .4-5.1z" fill="#9f9fff" stroke="#9f9fff"/>
<path d="M1423.2 670.8l4.7 2.2-1-1.5-4.6-2.2z" fill="#6060bf" stroke="#6060bf"/>
<path d="M1408.3 663.9l4.5 2.8-1.1-3.5-4.3-2.6z" fill="#7171da" stroke="#7171da"/>
<path d="M1335.3 532.5l.1 5.2 2.5 2.5-.1-5z" fill="#9797ff" stroke="#9797ff"/>
<path d="M1412.8 666.7l-4.5-2.8M1411.7 663.2l-4.3-2.6M1335.4 537.7l-.1-5.2M1337.9 540.2l-.1-5" class="e"/>
<path d="M1422.3 669.3l4.6 2.2-1.5-.9-4.5-2.1z" fill="#5a5ab4" stroke="#5a5ab4"/>
<path d="M1338.2 517.9l-.4 5.1 0 1.6 .4-5z" fill="#a5a4ff" stroke="#a5a4ff"/>
<path d="M1425.4 670.6l-4.5-2.1M1337.8 524.6l.4-5" class="e"/>
<path d="M1393 650.2l4.1 3.4 1.7-10.3-3.5-2.9zM1338.8 552.6l.9 5.3 9.6 2.9-.7-4.5z" fill="#8a8aff" stroke="#8a8aff"/>
<path d="M1397.1 653.6l-4.1-3.4M1398.8 643.3l-3.5-2.9M1339.7 557.9l-.9-5.3M1349.3 560.8l-.7-4.5" class="e"/>
<path d="M1336.6 509.6l-.7 5.1 1.5 1.5 .7-5z" fill="#9393ff" stroke="#9393ff"/>
<path d="M1428.4 675.1l4.8 1.9-.6-2.1-4.7-1.9z" fill="#7c7ceb" stroke="#7c7ceb"/>
<path d="M1336.6 509.6l-.7 5.1M1428.4 675.1l4.8 1.9" class="e"/>
<path d="M1338.1 511.2l-.7 5 .8 1.7 .7-5z" fill="#a1a1ff" stroke="#a1a1ff"/>
<path d="M1427.9 673l4.7 1.9-1.1-1.5-4.6-1.9z" fill="#5f5fbe" stroke="#5f5fbe"/>
<path d="M1412.8 666.7l4.5 2.4-1.3-3.6-4.3-2.3z" fill="#7171d9" stroke="#7171d9"/>
<path d="M1335.4 527.3l-.1 5.2 2.5 2.7 .1-4.9z" fill="#9898ff" stroke="#9898ff"/>
<path d="M1417.3 669.1l-4.5-2.4M1416 665.5l-4.3-2.3M1335.3 532.5l.1-5.2M1337.8 535.2l.1-4.9" class="e"/>
<path d="M1338.2 547.5l.6 5.1 9.8 3.7-.6-4.4zM1397.1 653.6l4.1 3.1 1.2-10.7-3.6-2.7z" fill="#8a8aff" stroke="#8a8aff"/>
<path d="M1338.8 552.6l-.6-5.1M1348.6 556.3l-.6-4.4M1401.2 656.7l-4.1-3.1M1402.4 646l-3.6-2.7" class="e"/>
<path d="M1338.9 512.9l-.7 5 0 1.7 .7-4.9z" fill="#a8a7ff" stroke="#a8a7ff"/>
<path d="M1426.9 671.5l4.6 1.9-1.5-.9-4.6-1.9z" fill="#5a5ab4" stroke="#5a5ab4"/>
<path d="M1338.2 519.6l.7-4.9M1430 672.5l-4.6-1.9" class="e"/>
<path d="M1433.2 677l4.8 1.6-.7-2.1-4.7-1.6z" fill="#7c7cea" stroke="#7c7cea"/>
<path d="M1337.6 504.7l-1 4.9 1.5 1.6 1-4.8z" fill="#9494ff" stroke="#9494ff"/>
<path d="M1433.2 677l4.8 1.6M1337.6 504.7l-1 4.9" class="e"/>
<path d="M1337.8 542.5l.4 5 9.8 4.4-.3-4.4zM1401.2 656.7l4.2 2.8 .6-11.1-3.6-2.4z" fill="#8a8aff" stroke="#8a8aff"/>
<path d="M1338.2 547.5l-.4-5M1405.4 659.5l-4.2-2.8M1348 551.9l-.3-4.4M1406 648.4l-3.6-2.4" class="e"/>
<path d="M1417.3 669.1l4.5 2.2-1.5-3.7-4.3-2.1z" fill="#7070d7" stroke="#7070d7"/>
<path d="M1335.8 522.4l-.4 4.9 2.5 3 .4-4.7z" fill="#9999ff" stroke="#9999ff"/>
<path d="M1421.8 671.3l-4.5-2.2M1335.4 527.3l.4-4.9" class="e"/>
<path d="M1432.6 674.9l4.7 1.6-1.2-1.6-4.6-1.5z" fill="#5e5ebc" stroke="#5e5ebc"/>
<path d="M1339.1 506.4l-1 4.8 .8 1.7 .9-4.7z" fill="#a3a2ff" stroke="#a3a2ff"/>
<path d="M1339.8 508.2l-.9 4.7 0 1.8 .9-4.6z" fill="#aba9ff" stroke="#aba9ff"/>
<path d="M1431.5 673.4l4.6 1.5-1.7-.9-4.4-1.5z" fill="#5a5ab4" stroke="#5a5ab4"/>
<path d="M1338.9 514.7l.9-4.6M1434.4 674l-4.4-1.5" class="e"/>
<path d="M1405.4 659.5l4.2 2.5 0-11.4-3.6-2.2zM1337.7 537.6l.1 4.9 9.9 5-.1-4.2z" fill="#8a8aff" stroke="#8a8aff"/>
<path d="M1409.6 662l-4.2-2.5M1409.6 650.6l-3.6-2.2M1337.8 542.5l-.1-4.9M1347.7 547.5l-.1-4.2" class="e"/>
<path d="M1438 678.6l4.7 1.3-.8-2.2-4.6-1.2z" fill="#7c7cea" stroke="#7c7cea"/>
<path d="M1338.8 500l-1.2 4.7 1.5 1.7 1.2-4.6z" fill="#9494ff" stroke="#9494ff"/>
<path d="M1438 678.6l4.7 1.3M1338.8 500l-1.2 4.7" class="e"/>
<path d="M1416 665.5l4.3 2.1-2.4-1.3-4.2-2z" fill="#5a5ab4" stroke="#5a5ab4"/>
<path d="M1338.3 525.6l-.4 4.7-.1 2.6 .4-4.6z" fill="#a5a4ff" stroke="#a5a4ff"/>
<path d="M1420.3 667.6l-4.3-2.1M1416 665.5l-2.3-1.2M1337.9 530.3l.4-4.7M1337.9 530.3l-.1 2.6" class="e"/>
<path d="M1336.5 517.6l-.7 4.8 2.5 3.2 .6-4.6z" fill="#9b9bff" stroke="#9b9bff"/>
<path d="M1421.8 671.3l4.5 1.8-1.8-3.8-4.2-1.7z" fill="#6f6fd6" stroke="#6f6fd6"/>
<path d="M1335.8 522.4l.7-4.8M1426.3 673.1l-4.5-1.8" class="e"/>
<path d="M1437.3 676.5l4.6 1.2-1.4-1.6-4.4-1.2z" fill="#5d5dba" stroke="#5d5dba"/>
<path d="M1340.3 501.8l-1.2 4.6 .7 1.8 1.2-4.5z" fill="#a5a4ff" stroke="#a5a4ff"/>
<path d="M1409.6 662l4.1 2.3-.5-11.7-3.6-2zM1337.8 532.9l-.1 4.7 9.9 5.7 .1-4.1z" fill="#8a8aff" stroke="#8a8aff"/>
<path d="M1413.7 664.3l-4.1-2.3M1413.2 652.6l-3.6-2M1337.7 537.6l.1-4.7M1347.6 543.3l.1-4.1" class="e"/>
<path d="M1436.1 674.9l4.4 1.2-1.6-.9-4.5-1.2z" fill="#5a5ab4" stroke="#5a5ab4"/>
<path d="M1341 503.7l-1.2 4.5 0 1.9 1.2-4.4z" fill="#adabff" stroke="#adabff"/>
<path d="M1438.9 675.2l-4.5-1.2M1339.8 510.1l1.2-4.4" class="e"/>
<path d="M1338.9 521l-.6 4.6-.1 2.7 .6-4.5z" fill="#a8a7ff" stroke="#a8a7ff"/>
<path d="M1420.3 667.6l4.2 1.7-2.5-1.3-4.1-1.7z" fill="#5a5ab4" stroke="#5a5ab4"/>
<path d="M1338.3 525.6l.6-4.6M1424.5 669.3l-4.2-1.7" class="e"/>
<path d="M1426.3 673.1l4.4 1.5-2-3.9-4.2-1.4z" fill="#6e6ed5" stroke="#6e6ed5"/>
<path d="M1337.4 513l-.9 4.6 2.4 3.4 .9-4.3z" fill="#9c9cff" stroke="#9c9cff"/>
<path d="M1430.7 674.6l-4.4-1.5M1336.5 517.6l.9-4.6" class="e"/>
<path d="M1442.7 679.9l4.6 .9-.9-2.2-4.5-.9z" fill="#7b7be9" stroke="#7b7be9"/>
<path d="M1340.3 495.6l-1.5 4.4 1.5 1.8 1.5-4.4z" fill="#9595ff" stroke="#9595ff"/>
<path d="M1442.7 679.9l4.6 .9M1340.3 495.6l-1.5 4.4" class="e"/>
<path d="M1413.7 664.3l4.2 2-1.1-12-3.6-1.7zM1338.2 528.3l-.4 4.6 9.9 6.3 .3-3.9z" fill="#8a8aff" stroke="#8a8aff"/>
<path d="M1417.9 666.3l-4.2-2M1416.8 654.3l-3.6-1.7M1337.8 532.9l.4-4.6M1347.7 539.2l.3-3.9" class="e"/>
<path d="M1441.9 677.7l4.5 .9-1.4-1.6-4.5-.9z" fill="#5d5db9" stroke="#5d5db9"/>
<path d="M1341.8 497.4l-1.5 4.4 .7 1.9 1.5-4.2z" fill="#a6a5ff" stroke="#a6a5ff"/>
<path d="M1440.5 676.1l4.5 .9-1.8-1-4.3-.8z" fill="#5a5ab4" stroke="#5a5ab4"/>
<path d="M1342.5 499.5l-1.5 4.2 0 2 1.4-4.2z" fill="#b0adff" stroke="#b0adff"/>
<path d="M1443.2 676l-4.3-.8M1341 505.7l1.4-4.2" class="e"/>
<path d="M1339.8 516.7l-.9 4.3-.1 2.8 .9-4.2z" fill="#aba9ff" stroke="#aba9ff"/>
<path d="M1424.5 669.3l4.2 1.4-2.6-1.3-4.1-1.4z" fill="#5a5ab4" stroke="#5a5ab4"/>
<path d="M1338.9 521l.9-4.3M1428.7 670.7l-4.2-1.4" class="e"/>
<path d="M1338.8 523.8l-.6 4.5 9.8 7 .6-3.9zM1417.9 666.3l4.1 1.7-1.7-12.3-3.5-1.4z" fill="#8a8aff" stroke="#8a8aff"/>
<path d="M1338.2 528.3l.6-4.5M1348 535.3l.6-3.9M1422 668l-4.1-1.7M1420.3 655.7l-3.5-1.4" class="e"/>
<path d="M1430.7 674.6l4.3 1.2-2.1-4-4.2-1.1z" fill="#6e6ed4" stroke="#6e6ed4"/>
<path d="M1338.6 508.7l-1.2 4.3 2.4 3.7 1.1-4.2z" fill="#9d9dff" stroke="#9d9dff"/>
<path d="M1435 675.8l-4.3-1.2M1337.4 513l1.2-4.3" class="e"/>
<path d="M1447.3 680.8l4.5 .5-1-2.2-4.4-.5z" fill="#7b7be9" stroke="#7b7be9"/>
<path d="M1342.1 491.4l-1.8 4.2 1.5 1.8 1.7-4z" fill="#9696ff" stroke="#9696ff"/>
<path d="M1447.3 680.8l4.5 .5M1342.1 491.4l-1.8 4.2" class="e"/>
<path d="M1446.4 678.6l4.4 .5-1.5-1.6-4.3-.5z" fill="#5c5cb8" stroke="#5c5cb8"/>
<path d="M1343.5 493.4l-1.7 4 .7 2.1 1.7-4z" fill="#a8a6ff" stroke="#a8a6ff"/>
<path d="M1428.7 670.7l4.2 1.1-2.7-1.3-4.1-1.1z" fill="#5a5ab4" stroke="#5a5ab4"/>
<path d="M1340.9 512.5l-1.1 4.2-.1 2.9 1-4z" fill="#aeabff" stroke="#aeabff"/>
<path d="M1432.9 671.8l-4.2-1.1M1339.8 516.7l1.1-4.2" class="e"/>
<path d="M1422 668l4.1 1.4-2.3-12.5-3.5-1.2zM1339.7 519.6l-.9 4.2 9.8 7.6 .7-3.6z" fill="#8a8aff" stroke="#8a8aff"/>
<path d="M1426.1 669.4l-4.1-1.4M1423.8 656.9l-3.5-1.2M1338.8 523.8l.9-4.2M1348.6 531.4l.7-3.6" class="e"/>
<path d="M1445 677l4.3 .5-1.9-1-4.2-.5z" fill="#5a5ab4" stroke="#5a5ab4"/>
<path d="M1344.2 495.5l-1.7 4-.1 2 1.7-4z" fill="#b2afff" stroke="#b2afff"/>
<path d="M1447.4 676.5l-4.2-.5M1342.4 501.5l1.7-4" class="e"/>
<path d="M1435 675.8l4.3 .8-2.3-4-4.1-.8z" fill="#6d6dd4" stroke="#6d6dd4"/>
<path d="M1340 504.6l-1.4 4.1 2.3 3.8 1.3-3.9z" fill="#9e9eff" stroke="#9e9eff"/>
<path d="M1439.3 676.6l-4.3-.8M1338.6 508.7l1.4-4.1" class="e"/>
<path d="M1451.8 681.3l4.4 .2-1.1-2.2-4.3-.2z" fill="#7b7be9" stroke="#7b7be9"/>
<path d="M1344.2 487.5l-2.1 3.9 1.4 2 2-3.8z" fill="#9696ff" stroke="#9696ff"/>
<path d="M1451.8 681.3l4.4 .2M1344.2 487.5l-2.1 3.9" class="e"/>
<path d="M1450.8 679.1l4.3 .2-1.6-1.7-4.2-.1z" fill="#5b5bb8" stroke="#5b5bb8"/>
<path d="M1345.5 489.6l-2 3.8 .7 2.1 2-3.7z" fill="#a9a8ff" stroke="#a9a8ff"/>
<path d="M1432.9 671.8l4.1 .8-2.9-1.4-3.9-.7z" fill="#5a5ab4" stroke="#5a5ab4"/>
<path d="M1342.2 508.6l-1.3 3.9-.2 3.1 1.4-3.9z" fill="#b0adff" stroke="#b0adff"/>
<path d="M1426.1 669.4l4.1 1.1-2.9-12.6-3.5-1zM1340.7 515.6l-1 4 9.6 8.2 .9-3.5z" fill="#8a8aff" stroke="#8a8aff"/>
<path d="M1437 672.6l-4.1-.8M1340.9 512.5l1.3-3.9M1430.2 670.5l-4.1-1.1M1427.3 657.9l-3.5-1M1339.7 519.6l1-4M1349.3 527.8l.9-3.5" class="e"/>
<path d="M1449.3 677.5l4.2 .1-1.9-.9-4.2-.2z" fill="#5a5ab4" stroke="#5a5ab4"/>
<path d="M1346.2 491.8l-2 3.7-.1 2 1.9-3.6z" fill="#b4b1ff" stroke="#b4b1ff"/>
<path d="M1439.3 676.6l4.2 .5-2.6-4-3.9-.5z" fill="#6d6dd3" stroke="#6d6dd3"/>
<path d="M1341.7 500.7l-1.7 3.9 2.2 4 1.6-3.7z" fill="#9f9fff" stroke="#9f9fff"/>
<path d="M1443.5 677.1l-4.2-.5M1340 504.6l1.7-3.9" class="e"/>
<path d="M1447.4 676.5l4.2 .2-2-.1-4.1-.2z" fill="#5a5ab4" stroke="#5a5ab4"/>
<path d="M1346 493.9l-1.9 3.6-.9 1.8 1.9-3.6z" fill="#b6b3ff" stroke="#b6b3ff"/>
<path d="M1447.4 676.5l-1.9-.1M1449.6 676.6l-4.1-.2M1344.1 497.5l-.9 1.8M1343.2 499.3l1.9-3.6" class="e"/>
<path d="M1346.5 483.9l-2.3 3.6 1.3 2.1 2.3-3.6z" fill="#9696ff" stroke="#9696ff"/>
<path d="M1456.2 681.5l4.3-.2-1.2-2.2-4.2 .2z" fill="#7b7be8" stroke="#7b7be8"/>
<path d="M1346.5 483.9l-2.3 3.6M1456.2 681.5l4.3-.2" class="e"/>
<path d="M1430.2 670.5l3.9 .7-3.4-12.7-3.4-.6zM1342.1 511.7l-1.4 3.9 9.5 8.7 1.2-3.3z" fill="#8a8aff" stroke="#8a8aff"/>
<path d="M1434.1 671.2l-3.9-.7M1430.7 658.5l-3.4-.6M1340.7 515.6l1.4-3.9M1350.2 524.3l1.2-3.3" class="e"/>
<path d="M1437 672.6l3.9 .5-2.9-1.4-3.9-.5z" fill="#5a5ab4" stroke="#5a5ab4"/>
<path d="M1343.8 504.9l-1.6 3.7-.1 3.1 1.5-3.6z" fill="#b2afff" stroke="#b2afff"/>
<path d="M1440.9 673.1l-3.9-.5M1342.2 508.6l1.6-3.7" class="e"/>
<path d="M1455.1 679.3l4.2-.2-1.7-1.6-4.1 .1z" fill="#5b5bb7" stroke="#5b5bb7"/>
<path d="M1347.8 486l-2.3 3.6 .7 2.2 2.2-3.5z" fill="#aba9ff" stroke="#aba9ff"/>
<path d="M1348.4 488.3l-2.2 3.5-.2 2.1 2.2-3.4z" fill="#b6b3ff" stroke="#b6b3ff"/>
<path d="M1453.5 677.6l4.1-.1-2-1-4 .2z" fill="#5a5ab4" stroke="#5a5ab4"/>
<path d="M1443.5 677.1l4.1 .2-2.8-4-3.9-.2z" fill="#6d6dd2" stroke="#6d6dd2"/>
<path d="M1343.6 497.1l-1.9 3.6 2.1 4.2 1.8-3.5z" fill="#a0a0ff" stroke="#a0a0ff"/>
<path d="M1447.6 677.3l-4.1-.2M1341.7 500.7l1.9-3.6" class="e"/>
<path d="M1348.2 490.5l-2.2 3.4-.9 1.8 2.2-3.4z" fill="#b8b5ff" stroke="#b8b5ff"/>
<path d="M1451.6 676.7l4-.2-2.1-.1-3.9 .2z" fill="#5a5ab4" stroke="#5a5ab4"/>
<path d="M1345.1 495.7l2.2-3.4M1453.5 676.4l-3.9 .2" class="e"/>
<path d="M1434.1 671.2l3.9 .5-3.9-12.8-3.4-.4zM1343.6 508.1l-1.5 3.6 9.3 9.3 1.3-3.1z" fill="#8a8aff" stroke="#8a8aff"/>
<path d="M1438 671.7l-3.9-.5M1434.1 658.9l-3.4-.4M1342.1 511.7l1.5-3.6M1351.4 521l1.3-3.1" class="e"/>
<path d="M1440.9 673.1l3.9 .2-3-1.5-3.8-.1z" fill="#5a5ab4" stroke="#5a5ab4"/>
<path d="M1345.6 501.4l-1.8 3.5-.2 3.2 1.8-3.3z" fill="#b4b1ff" stroke="#b4b1ff"/>
<path d="M1444.8 673.3l-3.9-.2M1343.8 504.9l1.8-3.5" class="e"/>
<path d="M1460.5 681.3l4.1-.6-1.3-2.1-4 .5z" fill="#7b7be8" stroke="#7b7be8"/>
<path d="M1349 480.6l-2.5 3.3 1.3 2.1 2.5-3.2z" fill="#9797ff" stroke="#9797ff"/>
<path d="M1460.5 681.3l4.1-.6M1349 480.6l-2.5 3.3" class="e"/>
<path d="M1459.3 679.1l4-.5-1.7-1.7-4 .6z" fill="#5b5bb7" stroke="#5b5bb7"/>
<path d="M1350.3 482.8l-2.5 3.2 .6 2.3 2.4-3.2z" fill="#acaaff" stroke="#acaaff"/>
<path d="M1447.6 677.3l4-.2-3-4-3.8 .2z" fill="#6c6cd2" stroke="#6c6cd2"/>
<path d="M1345.7 493.7l-2.1 3.4 2 4.3 2.1-3.1z" fill="#a1a1ff" stroke="#a1a1ff"/>
<path d="M1451.6 677.1l-4 .2M1343.6 497.1l2.1-3.4" class="e"/>
<path d="M1457.6 677.5l4-.6-2.1-.9-3.9 .5z" fill="#5a5ab4" stroke="#5a5ab4"/>
<path d="M1350.8 485.1l-2.4 3.2-.2 2.2 2.4-3.1z" fill="#b8b4ff" stroke="#b8b4ff"/>
<path d="M1438 671.7l3.8 .1-4.4-12.7-3.3-.2zM1345.4 504.8l-1.8 3.3 9.1 9.8 1.5-2.9z" fill="#8a8aff" stroke="#8a8aff"/>
<path d="M1441.8 671.8l-3.8-.1M1437.4 659.1l-3.3-.2M1343.6 508.1l1.8-3.3M1352.7 517.9l1.5-2.9" class="e"/>
<path d="M1455.6 676.5l3.9-.5-2.1-.1-3.9 .5z" fill="#5a5ab4" stroke="#5a5ab4"/>
<path d="M1350.6 487.4l-2.4 3.1-.9 1.8 2.4-3z" fill="#bbb7ff" stroke="#bbb7ff"/>
<path d="M1457.4 675.9l-3.9 .5M1347.3 492.3l2.4-3" class="e"/>
<path d="M1347.7 498.3l-2.1 3.1-.2 3.4 1.9-3.1z" fill="#b6b3ff" stroke="#b6b3ff"/>
<path d="M1444.8 673.3l3.8-.2-3.1-1.4-3.7 .1z" fill="#5a5ab4" stroke="#5a5ab4"/>
<path d="M1345.6 501.4l2.1-3.1M1448.6 673.1l-3.8 .2" class="e"/>
<path d="M1464.6 680.7l4-.9-1.4-2.1-3.9 .9z" fill="#7b7be8" stroke="#7b7be8"/>
<path d="M1351.8 477.6l-2.8 3 1.3 2.2 2.7-2.9z" fill="#9797ff" stroke="#9797ff"/>
<path d="M1464.6 680.7l4-.9M1351.8 477.6l-2.8 3" class="e"/>
<path d="M1463.3 678.6l3.9-.9-1.8-1.7-3.8 .9z" fill="#5b5bb7" stroke="#5b5bb7"/>
<path d="M1353 479.9l-2.7 2.9 .5 2.3 2.7-2.8z" fill="#adabff" stroke="#adabff"/>
<path d="M1451.6 677.1l3.8-.5-3.1-4-3.7 .5z" fill="#6c6cd2" stroke="#6c6cd2"/>
<path d="M1348.1 490.7l-2.4 3 2 4.6 2.2-3z" fill="#a2a1ff" stroke="#a2a1ff"/>
<path d="M1455.4 676.6l-3.8 .5M1345.7 493.7l2.4-3" class="e"/>
<path d="M1347.3 501.7l-1.9 3.1 8.8 10.2 1.7-2.6zM1441.8 671.8l3.7-.1-5-12.8-3.1 .2z" fill="#8a8aff" stroke="#8a8aff"/>
<path d="M1345.4 504.8l1.9-3.1M1354.2 515l1.7-2.6M1445.5 671.7l-3.7 .1M1440.5 658.9l-3.1 .2" class="e"/>
<path d="M1461.6 676.9l3.8-.9-2.1-.9-3.8 .9z" fill="#5a5ab4" stroke="#5a5ab4"/>
<path d="M1353.5 482.3l-2.7 2.8-.2 2.3 2.6-2.8z" fill="#bab6ff" stroke="#bab6ff"/>
<path d="M1322.9 626.3l2.4 4.2 14.4-9.3-1.6-2.7z" fill="#8a8aff" stroke="#8a8aff"/>
<path d="M1325.3 630.5l-2.4-4.2M1339.7 621.2l-1.6-2.7" class="e"/>
<path d="M1320.6 622l2.3 4.3 15.2-7.8-1.4-2.8zM1325.3 630.5l2.6 4.2 13.5-10.8-1.7-2.7z" fill="#8a8aff" stroke="#8a8aff"/>
<path d="M1322.9 626.3l-2.3-4.3M1338.1 618.5l-1.4-2.8M1327.9 634.7l-2.6-4.2M1341.4 623.9l-1.7-2.7" class="e"/>
<path d="M1327.9 634.7l2.7 4 12.5-12.2-1.7-2.6zM1318.4 617.6l2.2 4.4 16.1-6.3-1.4-2.8z" fill="#8a8aff" stroke="#8a8aff"/>
<path d="M1330.6 638.7l-2.7-4M1343.1 626.5l-1.7-2.6M1320.6 622l-2.2-4.4M1336.7 615.7l-1.4-2.8" class="e"/>
<path d="M1459.5 676l3.8-.9-2.2-.1-3.7 .9z" fill="#5a5ab4" stroke="#5a5ab4"/>
<path d="M1353.2 484.6l-2.6 2.8-.9 1.9 2.6-2.8z" fill="#bdb8ff" stroke="#bdb8ff"/>
<path d="M1461.1 675l-3.7 .9M1349.7 489.3l2.6-2.8" class="e"/>
<path d="M1448.6 673.1l3.7-.5-3.3-1.4-3.5 .5z" fill="#5a5ab4" stroke="#5a5ab4"/>
<path d="M1349.9 495.3l-2.2 3-.4 3.4 2.2-2.9z" fill="#b8b5ff" stroke="#b8b5ff"/>
<path d="M1452.3 672.6l-3.7 .5M1347.7 498.3l2.2-3" class="e"/>
<path d="M1316.4 613.2l2 4.4 16.9-4.7-1.3-2.9zM1330.6 638.7l2.8 4 11.6-13.6-1.9-2.6z" fill="#8a8aff" stroke="#8a8aff"/>
<path d="M1318.4 617.6l-2-4.4M1335.3 612.9l-1.3-2.9M1333.4 642.7l-2.8-4M1345 629.1l-1.9-2.6" class="e"/>
<path d="M1314.6 608.8l1.8 4.4 17.6-3.2-1.2-2.8zM1333.4 642.7l3 3.7 10.5-14.9-1.9-2.4z" fill="#8a8aff" stroke="#8a8aff"/>
<path d="M1316.4 613.2l-1.8-4.4M1336.4 646.4l-3-3.7M1334 610l-1.2-2.8M1346.9 631.5l-1.9-2.4" class="e"/>
<path d="M1336.4 646.4l3 3.7 9.4-16.2-1.9-2.4zM1313 604.3l1.6 4.5 18.2-1.6-1-2.9z" fill="#8a8aff" stroke="#8a8aff"/>
<path d="M1339.4 650.1l-3-3.7M1348.8 633.9l-1.9-2.4M1314.6 608.8l-1.6-4.5M1332.8 607.2l-1-2.9" class="e"/>
<path d="M1468.6 679.8l3.8-1.2-1.5-2.2-3.7 1.3z" fill="#7b7be8" stroke="#7b7be8"/>
<path d="M1354.8 474.9l-3 2.7 1.2 2.3 3-2.6z" fill="#9898ff" stroke="#9898ff"/>
<path d="M1468.6 679.8l3.8-1.2M1354.8 474.9l-3 2.7" class="e"/>
<path d="M1445.5 671.7l3.5-.5-5.4-12.7-3.1 .4zM1349.5 498.8l-2.2 2.9 8.6 10.7 1.9-2.5z" fill="#8a8aff" stroke="#8a8aff"/>
<path d="M1449 671.2l-3.5 .5M1443.6 658.5l-3.1 .4M1347.3 501.7l2.2-2.9M1355.9 512.4l1.9-2.5" class="e"/>
<path d="M1467.2 677.7l3.7-1.3-1.9-1.6-3.6 1.2z" fill="#5b5bb7" stroke="#5b5bb7"/>
<path d="M1356 477.3l-3 2.6 .5 2.4 2.9-2.6z" fill="#afacff" stroke="#afacff"/>
<path d="M1311.5 599.9l1.5 4.4 18.8 0-1-2.9zM1339.4 650.1l3.1 3.5 8.4-17.5-2.1-2.2z" fill="#8a8aff" stroke="#8a8aff"/>
<path d="M1313 604.3l-1.5-4.4M1342.5 653.6l-3.1-3.5M1331.8 604.3l-1-2.9M1350.9 636.1l-2.1-2.2" class="e"/>
<path d="M1455.4 676.6l3.7-.9-3.3-3.9-3.5 .8z" fill="#6c6cd2" stroke="#6c6cd2"/>
<path d="M1350.6 487.9l-2.5 2.8 1.8 4.6 2.5-2.6z" fill="#a3a2ff" stroke="#a3a2ff"/>
<path d="M1459.1 675.7l-3.7 .9M1348.1 490.7l2.5-2.8" class="e"/>
<path d="M1465.4 676l3.6-1.2-2.2-.9-3.5 1.2z" fill="#5a5ab4" stroke="#5a5ab4"/>
<path d="M1356.4 479.7l-2.9 2.6-.3 2.3 2.9-2.5z" fill="#bcb8ff" stroke="#bcb8ff"/>
<path d="M1342.5 653.6l3.3 3.3 7.1-18.6-2-2.2zM1310.3 595.4l1.2 4.5 19.3 1.5-.8-2.9z" fill="#8a8aff" stroke="#8a8aff"/>
<path d="M1345.8 656.9l-3.3-3.3M1352.9 638.3l-2-2.2M1311.5 599.9l-1.2-4.5M1330.8 601.4l-.8-2.9" class="e"/>
<path d="M1452.3 672.6l3.5-.8-3.3-1.4-3.5 .8z" fill="#5a5ab4" stroke="#5a5ab4"/>
<path d="M1352.4 492.7l-2.5 2.6-.4 3.5 2.4-2.5z" fill="#bab6ff" stroke="#bab6ff"/>
<path d="M1455.8 671.8l-3.5 .8M1349.9 495.3l2.5-2.6" class="e"/>
<path d="M1463.3 675.1l3.5-1.2-2.1-.1-3.6 1.2z" fill="#5a5ab4" stroke="#5a5ab4"/>
<path d="M1356.1 482.1l-2.9 2.5-.9 1.9 2.8-2.5z" fill="#bebaff" stroke="#bebaff"/>
<path d="M1464.7 673.8l-3.6 1.2M1352.3 486.5l2.8-2.5" class="e"/>
<path d="M1345.8 656.9l3.2 3.2 6.1-19.8-2.2-2zM1309.2 591l1.1 4.4 19.7 3.1-.7-2.8z" fill="#8a8aff" stroke="#8a8aff"/>
<path d="M1349 660.1l-3.2-3.2M1355.1 640.3l-2.2-2M1310.3 595.4l-1.1-4.4M1330 598.5l-.7-2.8" class="e"/>
<path d="M1368.5 674.3l3.7 1.9-2.7-1.5-3.4-1.9z" fill="#5a5ab4" stroke="#5a5ab4"/>
<path d="M1306.7 562.9l-.1 4.1 .1 2.9 .1-3.9z" fill="#a2a2ff" stroke="#a2a2ff"/>
<path d="M1372.2 676.2l-3.7-1.9M1368.5 674.3l-2.4-1.5M1306.6 567l.1-4.1M1306.6 567l.1 2.9" class="e"/>
<path d="M1449 671.2l3.5-.8-5.9-12.6-3 .7zM1351.9 496.3l-2.4 2.5 8.3 11.1 2.1-2.2z" fill="#8a8aff" stroke="#8a8aff"/>
<path d="M1452.5 670.4l-3.5 .8M1446.6 657.8l-3 .7M1349.5 498.8l2.4-2.5M1357.8 509.9l2.1-2.2" class="e"/>
<path d="M1349 660.1l3.4 2.9 4.8-20.8-2.1-1.9zM1308.3 586.6l.9 4.4 20.1 4.7-.6-2.9z" fill="#8a8aff" stroke="#8a8aff"/>
<path d="M1352.4 663l-3.4-2.9M1357.2 642.2l-2.1-1.9M1309.2 591l-.9-4.4M1329.3 595.7l-.6-2.9" class="e"/>
<path d="M1472.4 678.6l3.6-1.7-1.5-2.1-3.6 1.6z" fill="#7b7be9" stroke="#7b7be9"/>
<path d="M1358.1 472.6l-3.3 2.3 1.2 2.4 3.1-2.3z" fill="#9898ff" stroke="#9898ff"/>
<path d="M1472.4 678.6l3.6-1.7M1358.1 472.6l-3.3 2.3" class="e"/>
<path d="M1470.9 676.4l3.6-1.6-2-1.5-3.5 1.5z" fill="#5b5bb7" stroke="#5b5bb7"/>
<path d="M1359.1 475l-3.1 2.3 .4 2.4 3.1-2.2z" fill="#b0aeff" stroke="#b0aeff"/>
<path d="M1459.1 675.7l3.5-1.2-3.4-3.9-3.4 1.2z" fill="#6c6cd2" stroke="#6c6cd2"/>
<path d="M1353.4 485.4l-2.8 2.5 1.8 4.8 2.7-2.4z" fill="#a3a3ff" stroke="#a3a3ff"/>
<path d="M1462.6 674.5l-3.5 1.2M1350.6 487.9l2.8-2.5" class="e"/>
<path d="M1352.4 663l3.4 2.8 3.6-21.8-2.2-1.8zM1307.6 582.3l.7 4.3 20.4 6.2-.4-2.7z" fill="#8a8aff" stroke="#8a8aff"/>
<path d="M1355.8 665.8l-3.4-2.8M1359.4 644l-2.2-1.8M1308.3 586.6l-.7-4.3M1328.7 592.8l-.4-2.7" class="e"/>
<path d="M1469 674.8l3.5-1.5-2.2-.9-3.5 1.5z" fill="#5a5ab4" stroke="#5a5ab4"/>
<path d="M1359.5 477.5l-3.1 2.2-.3 2.4 3-2.2z" fill="#bebaff" stroke="#bebaff"/>
<path d="M1455.8 671.8l3.4-1.2-3.5-1.3-3.2 1.1z" fill="#5a5ab4" stroke="#5a5ab4"/>
<path d="M1355.1 490.3l-2.7 2.4-.5 3.6 2.6-2.3z" fill="#bcb8ff" stroke="#bcb8ff"/>
<path d="M1459.2 670.6l-3.4 1.2M1352.4 492.7l2.7-2.4" class="e"/>
<path d="M1307 558.9l-.3 4 .1 3.1 .3-3.8z" fill="#a5a4ff" stroke="#a5a4ff"/>
<path d="M1372.2 676.2l3.5 1.8-2.7-1.7-3.5-1.6z" fill="#5a5ab4" stroke="#5a5ab4"/>
<path d="M1306.7 562.9l.3-4M1375.7 678l-3.5-1.8" class="e"/>
<path d="M1315 547.6l-.7 3.6-.3 1.7 .7-3.6z" fill="#acaaff" stroke="#acaaff"/>
<path d="M1386 675.5l3.6 1.2-1.7-.6-3.5-1.1z" fill="#5a5ab4" stroke="#5a5ab4"/>
<path d="M1314.3 551.2l.7-3.6M1389.6 676.7l-3.6-1.2M1314.3 551.2l-.3 1.7M1314 552.9l.7-3.6M1386 675.5l-1.6-.5M1387.9 676.1l-3.5-1.1" class="e"/>
<path d="M1466.8 673.9l3.5-1.5-2.3-.1-3.3 1.5z" fill="#5a5ab4" stroke="#5a5ab4"/>
<path d="M1359.1 479.9l-3 2.2-1 1.9 3-2.2z" fill="#c0bbff" stroke="#c0bbff"/>
<path d="M1307.1 578.1l.5 4.2 20.7 7.8-.4-2.8zM1355.8 665.8l3.4 2.5 2.4-22.6-2.2-1.7z" fill="#8a8aff" stroke="#8a8aff"/>
<path d="M1307.6 582.3l-.5-4.2M1328.3 590.1l-.4-2.8M1359.2 668.3l-3.4-2.5M1361.6 645.7l-2.2-1.7" class="e"/>
<path d="M1452.5 670.4l3.2-1.1-6.3-12.4-2.8 .9zM1354.5 494l-2.6 2.3 8 11.4 2.2-2z" fill="#8a8aff" stroke="#8a8aff"/>
<path d="M1455.7 669.3l-3.2 1.1M1449.4 656.9l-2.8 .9M1351.9 496.3l2.6-2.3M1359.9 507.7l2.2-2" class="e"/>
<path d="M1464.7 673.8l3.3-1.5-2 .7-3.4 1.5z" fill="#5a5ab4" stroke="#5a5ab4"/>
<path d="M1358.1 481.8l-3 2.2-1.7 1.4 3-2.1z" fill="#b9b5ff" stroke="#b9b5ff"/>
<path d="M1464.7 673.8l-2.1 .7M1355.1 484l-1.7 1.4" class="e"/>
<path d="M1359.2 668.3l3.4 2.4 1.2-23.5-2.2-1.5zM1306.8 573.9l.3 4.2 20.8 9.2-.2-2.7z" fill="#8a8aff" stroke="#8a8aff"/>
<path d="M1362.6 670.7l-3.4-2.4M1363.8 647.2l-2.2-1.5M1307.1 578.1l-.3-4.2M1327.9 587.3l-.2-2.7" class="e"/>
<path d="M1476 676.9l3.4-2-1.6-2-3.3 1.9z" fill="#7b7be9" stroke="#7b7be9"/>
<path d="M1361.5 470.6l-3.4 2 1 2.4 3.4-1.9z" fill="#9898ff" stroke="#9898ff"/>
<path d="M1476 676.9l3.4-2M1361.5 470.6l-3.4 2" class="e"/>
<path d="M1307.5 555.1l-.5 3.8 .1 3.3 .5-3.7z" fill="#a8a7ff" stroke="#a8a7ff"/>
<path d="M1375.7 678l3.6 1.4-2.9-1.7-3.4-1.4z" fill="#5a5ab4" stroke="#5a5ab4"/>
<path d="M1307 558.9l.5-3.8M1379.3 679.4l-3.6-1.4" class="e"/>
<path d="M1462.6 674.5l3.4-1.5-3.6-3.8-3.2 1.4z" fill="#6c6cd2" stroke="#6c6cd2"/>
<path d="M1356.4 483.3l-3 2.1 1.7 4.9 2.8-2z" fill="#a4a3ff" stroke="#a4a3ff"/>
<path d="M1466 673l-3.4 1.5M1353.4 485.4l3-2.1" class="e"/>
<path d="M1474.5 674.8l3.3-1.9-2-1.5-3.3 1.9z" fill="#5c5cb8" stroke="#5c5cb8"/>
<path d="M1362.5 473.1l-3.4 1.9 .4 2.5 3.3-1.9z" fill="#b1afff" stroke="#b1afff"/>
<path d="M1389.6 676.7l3.4 1-1.7-.7-3.4-.9z" fill="#5a5ab4" stroke="#5a5ab4"/>
<path d="M1315.9 544.1l-.9 3.5-.3 1.7 .9-3.4z" fill="#aeacff" stroke="#aeacff"/>
<path d="M1393 677.7l-3.4-1M1391.3 677l-3.4-.9M1315 547.6l.9-3.5M1314.7 549.3l.9-3.4" class="e"/>
<path d="M1362.8 475.6l-3.3 1.9-.4 2.4 3.2-1.9z" fill="#c0bcff" stroke="#c0bcff"/>
<path d="M1472.5 673.3l3.3-1.9-2.3-.9-3.2 1.9zM1459.2 670.6l3.2-1.4-3.5-1.3-3.2 1.4z" fill="#5a5ab4" stroke="#5a5ab4"/>
<path d="M1357.9 488.3l-2.8 2-.6 3.7 2.8-2z" fill="#bfbaff" stroke="#bfbaff"/>
<path d="M1462.4 669.2l-3.2 1.4M1355.1 490.3l2.8-2" class="e"/>
<path d="M1362.6 670.7l3.5 2.1 0-24.3-2.3-1.3zM1306.7 569.9l.1 4 20.9 10.7 0-2.6z" fill="#8a8aff" stroke="#8a8aff"/>
<path d="M1366.1 672.8l-3.5-2.1M1366.1 648.5l-2.3-1.3M1306.8 573.9l-.1-4M1327.7 584.6l0-2.6" class="e"/>
<path d="M1470.3 672.4l3.2-1.9-2.3 0-3.2 1.8z" fill="#5a5ab4" stroke="#5a5ab4"/>
<path d="M1362.3 478l-3.2 1.9-1 1.9 3.2-1.8z" fill="#c2bdff" stroke="#c2bdff"/>
<path d="M1455.7 669.3l3.2-1.4-6.8-12.2-2.7 1.2zM1357.3 492l-2.8 2 7.6 11.7 2.4-1.7z" fill="#8a8aff" stroke="#8a8aff"/>
<path d="M1458.9 667.9l-3.2 1.4M1452.1 655.7l-2.7 1.2M1354.5 494l2.8-2M1362.1 505.7l2.4-1.7" class="e"/>
<path d="M1308.3 551.5l-.8 3.6 .1 3.4 .7-3.5z" fill="#aba9ff" stroke="#aba9ff"/>
<path d="M1379.3 679.4l3.5 1.2-3-1.8-3.4-1.1z" fill="#5a5ab4" stroke="#5a5ab4"/>
<path d="M1307.5 555.1l.8-3.6M1382.8 680.6l-3.5-1.2" class="e"/>
<path d="M1468 672.3l3.2-1.8-2 .7-3.2 1.8z" fill="#5a5ab4" stroke="#5a5ab4"/>
<path d="M1361.3 480l-3.2 1.8-1.7 1.5 3.2-1.9z" fill="#bab6ff" stroke="#bab6ff"/>
<path d="M1366.1 672.8l3.4 1.9-1.2-25-2.2-1.2zM1306.8 566l-.1 3.9 21 12.1 0-2.5z" fill="#8a8aff" stroke="#8a8aff"/>
<path d="M1393 677.7l3.5 .6-1.8-.6-3.4-.7z" fill="#5a5ab4" stroke="#5a5ab4"/>
<path d="M1317.1 540.8l-1.2 3.3-.3 1.8 1.1-3.2z" fill="#b1aeff" stroke="#b1aeff"/>
<path d="M1369.5 674.7l-3.4-1.9M1368.3 649.7l-2.2-1.2M1306.7 569.9l.1-3.9M1327.7 582l0-2.5M1396.5 678.3l-3.5-.6M1394.7 677.7l-3.4-.7M1315.9 544.1l1.2-3.3M1315.6 545.9l1.1-3.2" class="e"/>
<path d="M1466 673l3.2-1.8-3.8-3.8-3 1.8z" fill="#6d6dd2" stroke="#6d6dd2"/>
<path d="M1359.6 481.4l-3.2 1.9 1.5 5 3.1-1.8z" fill="#a5a4ff" stroke="#a5a4ff"/>
<path d="M1469.2 671.2l-3.2 1.8M1356.4 483.3l3.2-1.9" class="e"/>
<path d="M1479.4 674.9l3.3-2.3-1.7-2-3.2 2.3z" fill="#7b7be9" stroke="#7b7be9"/>
<path d="M1365.1 469l-3.6 1.6 1 2.5 3.5-1.6z" fill="#9898ff" stroke="#9898ff"/>
<path d="M1479.4 674.9l3.3-2.3M1365.1 469l-3.6 1.6" class="e"/>
<path d="M1477.8 672.9l3.2-2.3-2.1-1.5-3.1 2.3z" fill="#5c5cb8" stroke="#5c5cb8"/>
<path d="M1366 471.5l-3.5 1.6 .3 2.5 3.4-1.6z" fill="#b3b0ff" stroke="#b3b0ff"/>
<path d="M1361 486.5l-3.1 1.8-.6 3.7 3-1.7z" fill="#c1bcff" stroke="#c1bcff"/>
<path d="M1462.4 669.2l3-1.8-3.6-1.2-2.9 1.7z" fill="#5a5ab4" stroke="#5a5ab4"/>
<path d="M1357.9 488.3l3.1-1.8M1465.4 667.4l-3 1.8" class="e"/>
<path d="M1307.1 562.2l-.3 3.8 20.9 13.5 .2-2.5zM1369.5 674.7l3.5 1.6-2.5-25.5-2.2-1.1z" fill="#8a8aff" stroke="#8a8aff"/>
<path d="M1306.8 566l.3-3.8M1327.7 579.5l.2-2.5M1373 676.3l-3.5-1.6M1370.5 650.8l-2.2-1.1" class="e"/>
<path d="M1475.8 671.4l3.1-2.3-2.4-.8-3 2.2z" fill="#5a5ab4" stroke="#5a5ab4"/>
<path d="M1366.2 474l-3.4 1.6-.5 2.4 3.5-1.5z" fill="#c3beff" stroke="#c3beff"/>
<path d="M1382.8 680.6l3.5 .9-3.2-1.8-3.3-.9z" fill="#5a5ab4" stroke="#5a5ab4"/>
<path d="M1309.2 548l-.9 3.5 0 3.5 .9-3.3z" fill="#adabff" stroke="#adabff"/>
<path d="M1386.3 681.5l-3.5-.9M1308.3 551.5l.9-3.5" class="e"/>
<path d="M1458.9 667.9l2.9-1.7-7.2-12-2.5 1.5zM1360.3 490.3l-3 1.7 7.2 12 2.6-1.5z" fill="#8a8aff" stroke="#8a8aff"/>
<path d="M1461.8 666.2l-2.9 1.7M1454.6 654.2l-2.5 1.5M1357.3 492l3-1.7M1364.5 504l2.6-1.5" class="e"/>
<path d="M1473.5 670.5l3-2.2-2.3 0-3 2.2z" fill="#5a5ab4" stroke="#5a5ab4"/>
<path d="M1365.8 476.5l-3.5 1.5-1 2 3.3-1.5z" fill="#c4beff" stroke="#c4beff"/>
<path d="M1396.5 678.3l3.3 .4-1.9-.6-3.2-.4z" fill="#5a5ab4" stroke="#5a5ab4"/>
<path d="M1318.4 537.7l-1.3 3.1-.4 1.9 1.3-3z" fill="#b4b0ff" stroke="#b4b0ff"/>
<path d="M1399.8 678.7l-3.3-.4M1397.9 678.1l-3.2-.4M1317.1 540.8l1.3-3.1M1316.7 542.7l1.3-3" class="e"/>
<path d="M1307.6 558.5l-.5 3.7 20.8 14.8 .4-2.3zM1373 676.3l3.4 1.4-3.7-26-2.2-.9z" fill="#8a8aff" stroke="#8a8aff"/>
<path d="M1364.6 478.5l-3.3 1.5-1.7 1.4 3.4-1.5z" fill="#bbb7ff" stroke="#bbb7ff"/>
<path d="M1471.2 670.5l3-2.2-2 .7-3 2.2z" fill="#5a5ab4" stroke="#5a5ab4"/>
<path d="M1307.1 562.2l.5-3.7M1327.9 577l.4-2.3M1376.4 677.7l-3.4-1.4M1372.7 651.7l-2.2-.9" class="e"/>
<path d="M1469.2 671.2l3-2.2-3.9-3.6-2.9 2z" fill="#6d6dd3" stroke="#6d6dd3"/>
<path d="M1363 479.9l-3.4 1.5 1.4 5.1 3.2-1.4z" fill="#a5a4ff" stroke="#a5a4ff"/>
<path d="M1472.2 669l-3 2.2M1359.6 481.4l3.4-1.5" class="e"/>
<path d="M1386.3 681.5l3.4 .7-3.3-1.8-3.3-.7z" fill="#5a5ab4" stroke="#5a5ab4"/>
<path d="M1310.3 544.7l-1.1 3.3 0 3.7 1.1-3.2z" fill="#afadff" stroke="#afadff"/>
<path d="M1389.7 682.2l-3.4-.7M1309.2 548l1.1-3.3" class="e"/>
<path d="M1482.7 672.6l3-2.6-1.8-2-2.9 2.6z" fill="#7b7be9" stroke="#7b7be9"/>
<path d="M1368.9 467.7l-3.8 1.3 .9 2.5 3.7-1.3z" fill="#9898ff" stroke="#9898ff"/>
<path d="M1482.7 672.6l3-2.6M1368.9 467.7l-3.8 1.3" class="e"/>
<path d="M1481 670.6l2.9-2.6-2.2-1.4-2.8 2.5z" fill="#5d5db9" stroke="#5d5db9"/>
<path d="M1369.7 470.2l-3.7 1.3 .2 2.5 3.7-1.2z" fill="#b4b1ff" stroke="#b4b1ff"/>
<path d="M1465.4 667.4l2.9-2-3.7-1.2-2.8 2z" fill="#5a5ab4" stroke="#5a5ab4"/>
<path d="M1364.2 485.1l-3.2 1.4-.7 3.8 3.1-1.4z" fill="#c3beff" stroke="#c3beff"/>
<path d="M1468.3 665.4l-2.9 2M1361 486.5l3.2-1.4" class="e"/>
<path d="M1399.8 678.7l3.3 .2-2-.7-3.2-.1z" fill="#5a5ab4" stroke="#5a5ab4"/>
<path d="M1319.9 534.8l-1.5 2.9-.4 2 1.5-2.9z" fill="#b6b2ff" stroke="#b6b2ff"/>
<path d="M1403.1 678.9l-3.3-.2M1401.1 678.2l-3.2-.1M1318.4 537.7l1.5-2.9M1318 539.7l1.5-2.9" class="e"/>
<path d="M1461.8 666.2l2.8-2-7.6-11.7-2.4 1.7zM1363.4 488.9l-3.1 1.4 6.8 12.2 2.6-1.2zM1376.4 677.7l3.4 1.1-4.9-26.4-2.2-.7zM1308.3 555l-.7 3.5 20.7 16.2 .4-2.3z" fill="#8a8aff" stroke="#8a8aff"/>
<path d="M1464.6 664.2l-2.8 2M1360.3 490.3l3.1-1.4M1379.8 678.8l-3.4-1.1M1374.9 652.4l-2.2-.7M1307.6 558.5l.7-3.5M1328.3 574.7l.4-2.3" class="e"/>
<path d="M1478.9 669.1l2.8-2.5-2.3-.8-2.9 2.5z" fill="#5a5ab4" stroke="#5a5ab4"/>
<path d="M1369.9 472.8l-3.7 1.2-.4 2.5 3.5-1.2z" fill="#c6c0ff" stroke="#c6c0ff"/>
<path d="M1476.5 668.3l2.9-2.5-2.4 0-2.8 2.5z" fill="#5a5ab4" stroke="#5a5ab4"/>
<path d="M1369.3 475.3l-3.5 1.2-1.2 2 3.6-1.2z" fill="#c6c0ff" stroke="#c6c0ff"/>
<path d="M1389.7 682.2l3.4 .4-3.5-1.8-3.2-.4z" fill="#5a5ab4" stroke="#5a5ab4"/>
<path d="M1311.7 541.6l-1.4 3.1 0 3.8 1.2-3z" fill="#b2afff" stroke="#b2afff"/>
<path d="M1393.1 682.6l-3.4-.4M1310.3 544.7l1.4-3.1" class="e"/>
<path d="M1474.2 668.3l2.8-2.5-2 .7-2.8 2.5z" fill="#5a5ab4" stroke="#5a5ab4"/>
<path d="M1368.2 477.3l-3.6 1.2-1.6 1.4 3.5-1.2z" fill="#bcb8ff" stroke="#bcb8ff"/>
<path d="M1379.8 678.8l3.3 .9-6-26.7-2.2-.6zM1309.2 551.7l-.9 3.3 20.4 17.4 .6-2.2z" fill="#8a8aff" stroke="#8a8aff"/>
<path d="M1383.1 679.7l-3.3-.9M1377.1 653l-2.2-.6M1308.3 555l.9-3.3M1328.7 572.4l.6-2.2" class="e"/>
<path d="M1472.2 669l2.8-2.5-4-3.5-2.7 2.4z" fill="#6d6dd4" stroke="#6d6dd4"/>
<path d="M1366.5 478.7l-3.5 1.2 1.2 5.2 3.4-1.2z" fill="#a6a5ff" stroke="#a6a5ff"/>
<path d="M1475 666.5l-2.8 2.5M1363 479.9l3.5-1.2" class="e"/>
<path d="M1321.6 532.2l-1.7 2.6-.4 2 1.7-2.6z" fill="#b8b4ff" stroke="#b8b4ff"/>
<path d="M1403.1 678.9l3.1-.2-1.9-.6-3.2 .1z" fill="#5a5ab4" stroke="#5a5ab4"/>
<path d="M1319.9 534.8l1.7-2.6M1319.5 536.8l1.7-2.6M1406.2 678.7l-3.1 .2M1404.3 678.1l-3.2 .1" class="e"/>
<path d="M1468.3 665.4l2.7-2.4-3.8-1.1-2.6 2.3z" fill="#5a5ab4" stroke="#5a5ab4"/>
<path d="M1367.6 483.9l-3.4 1.2-.8 3.8 3.3-1.1z" fill="#c6c1ff" stroke="#c6c1ff"/>
<path d="M1471 663l-2.7 2.4M1364.2 485.1l3.4-1.2" class="e"/>
<path d="M1464.6 664.2l2.6-2.3-8-11.4-2.2 2zM1366.7 487.8l-3.3 1.1 6.3 12.4 2.9-.9z" fill="#8a8aff" stroke="#8a8aff"/>
<path d="M1467.2 661.9l-2.6 2.3M1363.4 488.9l3.3-1.1" class="e"/>
<path d="M1485.7 670l2.8-3-1.9-1.9-2.7 2.9z" fill="#7c7cea" stroke="#7c7cea"/>
<path d="M1372.9 466.8l-4 .9 .8 2.5 3.9-.9z" fill="#9999ff" stroke="#9999ff"/>
<path d="M1485.7 670l2.8-3M1372.9 466.8l-4 .9" class="e"/>
<path d="M1483.9 668l2.7-2.9-2.2-1.4-2.7 2.9z" fill="#5d5dbb" stroke="#5d5dbb"/>
<path d="M1373.6 469.3l-3.9 .9 .2 2.6 3.8-.9z" fill="#b5b2ff" stroke="#b5b2ff"/>
<path d="M1481.7 666.6l2.7-2.9-2.4-.7-2.6 2.8z" fill="#5a5ab4" stroke="#5a5ab4"/>
<path d="M1373.7 471.9l-3.8 .9-.6 2.5 3.8-.9z" fill="#c9c3ff" stroke="#c9c3ff"/>
<path d="M1383.1 679.7l3.3 .7-7.2-27-2.1-.4zM1310.3 548.5l-1.1 3.2 20.1 18.5 .7-2z" fill="#8a8aff" stroke="#8a8aff"/>
<path d="M1386.4 680.4l-3.3-.7M1379.2 653.4l-2.1-.4M1309.2 551.7l1.1-3.2M1329.3 570.2l.7-2" class="e"/>
<path d="M1393.1 682.6l3.2 .1-3.6-1.8-3.1-.1z" fill="#5a5ab4" stroke="#5a5ab4"/>
<path d="M1313.2 538.7l-1.5 2.9-.2 3.9 1.5-2.7z" fill="#b4b1ff" stroke="#b4b1ff"/>
<path d="M1396.3 682.7l-3.2-.1M1311.7 541.6l1.5-2.9" class="e"/>
<path d="M1479.4 665.8l2.6-2.8-2.4 0-2.6 2.8z" fill="#5a5ab4" stroke="#5a5ab4"/>
<path d="M1373.1 474.4l-3.8 .9-1.1 2 3.7-.9z" fill="#c8c2ff" stroke="#c8c2ff"/>
<path d="M1369.7 501.3l-2.6 1.2-17.2 9.9 2.7-1.2z" fill="#b5b2ff" stroke="#b5b2ff"/>
<path d="M1454.6 654.2l2.4-1.7-17.1 9.9-2.4 1.7z" fill="#5a5ab4" stroke="#5a5ab4"/>
<path d="M1367.1 502.5l2.6-1.2M1367.1 502.5l-17.2 9.9M1457 652.5l-2.4 1.7M1454.6 654.2l-17.1 9.9" class="e"/>
<path d="M1477 665.8l2.6-2.8-2 .8-2.6 2.7z" fill="#5a5ab4" stroke="#5a5ab4"/>
<path d="M1371.9 476.4l-3.7 .9-1.7 1.4 3.7-.8z" fill="#bdb8ff" stroke="#bdb8ff"/>
<path d="M1406.2 678.7l3.1-.4-2-.6-3 .4z" fill="#5a5ab4" stroke="#5a5ab4"/>
<path d="M1323.5 529.7l-1.9 2.5-.4 2 1.8-2.4z" fill="#bab6ff" stroke="#bab6ff"/>
<path d="M1409.3 678.3l-3.1 .4M1407.3 677.7l-3 .4M1321.6 532.2l1.9-2.5M1321.2 534.2l1.8-2.4" class="e"/>
<path d="M1475 666.5l2.6-2.7-4.2-3.4-2.4 2.6z" fill="#6e6ed4" stroke="#6e6ed4"/>
<path d="M1370.2 477.9l-3.7 .8 1.1 5.2 3.5-.8z" fill="#a6a5ff" stroke="#a6a5ff"/>
<path d="M1477.6 663.8l-2.6 2.7M1366.5 478.7l3.7-.8" class="e"/>
<path d="M1386.4 680.4l3.2 .4-8.3-27.1-2.1-.3zM1311.5 545.5l-1.2 3 19.7 19.7 .8-1.9z" fill="#8a8aff" stroke="#8a8aff"/>
<path d="M1389.6 680.8l-3.2-.4M1381.3 653.7l-2.1-.3M1310.3 548.5l1.2-3M1330 568.2l.8-1.9" class="e"/>
<path d="M1467.2 661.9l2.4-2.6-8.3-11-2.1 2.2zM1370.1 487l-3.4 .8 5.9 12.6 2.9-.7z" fill="#8a8aff" stroke="#8a8aff"/>
<path d="M1471 663l2.4-2.6-3.8-1.1-2.4 2.6z" fill="#5a5ab4" stroke="#5a5ab4"/>
<path d="M1371.1 483.1l-3.5 .8-.9 3.9 3.4-.8z" fill="#cac3ff" stroke="#cac3ff"/>
<path d="M1473.4 660.4l-2.4 2.6M1469.6 659.3l-2.4 2.6M1367.6 483.9l3.5-.8M1366.7 487.8l3.4-.8" class="e"/>
<path d="M1396.3 682.7l3.2-.1-3.7-1.9-3.1 .2z" fill="#5a5ab4" stroke="#5a5ab4"/>
<path d="M1314.9 536l-1.7 2.7-.2 4.1 1.6-2.6z" fill="#b6b2ff" stroke="#b6b2ff"/>
<path d="M1399.5 682.6l-3.2 .1M1313.2 538.7l1.7-2.7" class="e"/>
<path d="M1486.6 665.1l2.5-3.2-2.2-1.3-2.5 3.1z" fill="#5e5ebc" stroke="#5e5ebc"/>
<path d="M1377.7 468.8l-4.1 .5 .1 2.6 3.9-.5z" fill="#b7b3ff" stroke="#b7b3ff"/>
<path d="M1488.5 667l2.5-3.3-1.9-1.8-2.5 3.2z" fill="#7c7cea" stroke="#7c7cea"/>
<path d="M1377 466.3l-4.1 .5 .7 2.5 4.1-.5z" fill="#9999ff" stroke="#9999ff"/>
<path d="M1488.5 667l2.5-3.3M1377 466.3l-4.1 .5" class="e"/>
<path d="M1484.4 663.7l2.5-3.1-2.5-.7-2.4 3.1z" fill="#5a5ab4" stroke="#5a5ab4"/>
<path d="M1377.6 471.4l-3.9 .5-.6 2.5 3.9-.5z" fill="#cdc6ff" stroke="#cdc6ff"/>
<path d="M1457 652.5l2.2-2-17.1 9.9-2.2 2z" fill="#5a5ab4" stroke="#5a5ab4"/>
<path d="M1372.6 500.4l-2.9 .9-17.1 9.9 2.8-.9z" fill="#b5b2ff" stroke="#b5b2ff"/>
<path d="M1459.2 650.5l-2.2 2M1369.7 501.3l2.9-.9" class="e"/>
<path d="M1316.7 632.7l2.6 4.3 3.1-2.5-2.3-3.8zM1314.3 628.3l2.4 4.4 3.4-2-2.1-3.8z" fill="#8a8aff" stroke="#8a8aff"/>
<path d="M1319.3 637l-2.6-4.3M1322.4 634.5l-2.3-3.8M1316.7 632.7l-2.4-4.4M1320.1 630.7l-2.1-3.8" class="e"/>
<path d="M1482 663l2.4-3.1-2.4 .1-2.4 3z" fill="#5a5ab4" stroke="#5a5ab4"/>
<path d="M1377 473.9l-3.9 .5-1.2 2 3.9-.5z" fill="#cbc4ff" stroke="#cbc4ff"/>
<path d="M1312.2 623.7l2.1 4.6 3.7-1.4-1.8-3.9zM1319.3 637l2.9 4.1 2.7-3.1-2.5-3.5z" fill="#8a8aff" stroke="#8a8aff"/>
<path d="M1314.3 628.3l-2.1-4.6M1322.2 641.1l-2.9-4.1M1318 626.9l-1.8-3.9M1324.9 638l-2.5-3.5" class="e"/>
<path d="M1389.6 680.8l3.1 .1-9.4-27.1-2-.1zM1313 542.8l-1.5 2.7 19.3 20.8 1-1.8z" fill="#8a8aff" stroke="#8a8aff"/>
<path d="M1392.7 680.9l-3.1-.1M1383.3 653.8l-2-.1M1311.5 545.5l1.5-2.7M1330.8 566.3l1-1.8" class="e"/>
<path d="M1409.3 678.3l3-.7-2.1-.6-2.9 .7z" fill="#5a5ab4" stroke="#5a5ab4"/>
<path d="M1325.6 527.5l-2.1 2.2-.5 2.1 2.1-2.2z" fill="#bcb8ff" stroke="#bcb8ff"/>
<path d="M1412.3 677.6l-3 .7M1410.2 677l-2.9 .7M1323.5 529.7l2.1-2.2M1323 531.8l2.1-2.2" class="e"/>
<path d="M1310.3 619.1l1.9 4.6 4-.7-1.6-4zM1322.2 641.1l3.1 3.9 2.2-3.6-2.6-3.4z" fill="#8a8aff" stroke="#8a8aff"/>
<path d="M1312.2 623.7l-1.9-4.6M1325.3 645l-3.1-3.9M1316.2 623l-1.6-4M1327.5 641.4l-2.6-3.4" class="e"/>
<path d="M1479.6 663l2.4-3-2.1 .7-2.3 3.1z" fill="#5a5ab4" stroke="#5a5ab4"/>
<path d="M1375.8 475.9l-3.9 .5-1.7 1.5 3.9-.6z" fill="#bdb9ff" stroke="#bdb9ff"/>
<path d="M1469.6 659.3l2.2-2.8-8.6-10.7-1.9 2.5zM1373.6 486.5l-3.5 .5 5.4 12.7 3.1-.4z" fill="#8a8aff" stroke="#8a8aff"/>
<path d="M1477.6 663.8l2.3-3.1-4.2-3.2-2.3 2.9z" fill="#6e6ed5" stroke="#6e6ed5"/>
<path d="M1374.1 477.3l-3.9 .6 .9 5.2 3.6-.5z" fill="#a7a5ff" stroke="#a7a5ff"/>
<path d="M1479.9 660.7l-2.3 3.1M1370.2 477.9l3.9-.6" class="e"/>
<path d="M1325.3 645l3.2 3.6 1.8-4.1-2.8-3.1zM1308.8 614.5l1.5 4.6 4.3-.1-1.4-4z" fill="#8a8aff" stroke="#8a8aff"/>
<path d="M1328.5 648.6l-3.2-3.6M1330.3 644.5l-2.8-3.1M1310.3 619.1l-1.5-4.6M1314.6 619l-1.4-4" class="e"/>
<path d="M1399.5 682.6l3.1-.4-3.9-1.9-2.9 .4z" fill="#5a5ab4" stroke="#5a5ab4"/>
<path d="M1316.8 533.6l-1.9 2.4-.3 4.2 1.8-2.3z" fill="#b8b4ff" stroke="#b8b4ff"/>
<path d="M1402.6 682.2l-3.1 .4M1314.9 536l1.9-2.4" class="e"/>
<path d="M1473.4 660.4l2.3-2.9-3.9-1-2.2 2.8z" fill="#5a5ab4" stroke="#5a5ab4"/>
<path d="M1374.7 482.6l-3.6 .5-1 3.9 3.5-.5z" fill="#cdc7ff" stroke="#cdc7ff"/>
<path d="M1475.7 657.5l-2.3 2.9M1471.8 656.5l-2.2 2.8M1371.1 483.1l3.6-.5M1370.1 487l3.5-.5" class="e"/>
<path d="M1392.7 680.9l3.1-.2-10.5-27-2 .1zM1314.6 540.2l-1.6 2.6 18.8 21.7 1-1.7z" fill="#8a8aff" stroke="#8a8aff"/>
<path d="M1395.8 680.7l-3.1 .2M1385.3 653.7l-2 .1M1313 542.8l1.6-2.6M1331.8 564.5l1-1.7" class="e"/>
<path d="M1459.2 650.5l2.1-2.2-17.1 9.9-2.1 2.2z" fill="#5a5ab4" stroke="#5a5ab4"/>
<path d="M1375.5 499.7l-2.9 .7-17.2 9.9 3-.7z" fill="#b6b2ff" stroke="#b6b2ff"/>
<path d="M1461.3 648.3l-2.1 2.2M1372.6 500.4l2.9-.7" class="e"/>
<path d="M1328.5 648.6l3.3 3.3 1.4-4.5-2.9-2.9zM1307.6 610l1.2 4.5 4.4 .5-1-4z" fill="#8a8aff" stroke="#8a8aff"/>
<path d="M1331.8 651.9l-3.3-3.3M1333.2 647.4l-2.9-2.9M1308.8 614.5l-1.2-4.5M1313.2 615l-1-4" class="e"/>
<path d="M1489.1 661.9l2.3-3.6-2.3-1.2-2.2 3.5z" fill="#5f5fbe" stroke="#5f5fbe"/>
<path d="M1381.8 468.6l-4.1 .2-.1 2.6 4.1-.2z" fill="#b8b4ff" stroke="#b8b4ff"/>
<path d="M1491 663.7l2.3-3.6-1.9-1.8-2.3 3.6z" fill="#7c7ceb" stroke="#7c7ceb"/>
<path d="M1381.3 466.1l-4.3 .2 .7 2.5 4.1-.2z" fill="#9999ff" stroke="#9999ff"/>
<path d="M1491 663.7l2.3-3.6M1381.3 466.1l-4.3 .2" class="e"/>
<path d="M1381.7 471.2l-4.1 .2-.6 2.5 4-.2z" fill="#d1c9ff" stroke="#d1c9ff"/>
<path d="M1486.9 660.6l2.2-3.5-2.5-.6-2.2 3.4zM1412.3 677.6l2.8-.9-2.2-.6-2.7 .9z" fill="#5a5ab4" stroke="#5a5ab4"/>
<path d="M1327.8 525.5l-2.2 2-.5 2.1 2.2-1.9z" fill="#beb9ff" stroke="#beb9ff"/>
<path d="M1415.1 676.7l-2.8 .9M1412.9 676.1l-2.7 .9M1325.6 527.5l2.2-2M1325.1 529.6l2.2-1.9" class="e"/>
<path d="M1381 473.7l-4 .2-1.2 2 3.9-.2z" fill="#cec7ff" stroke="#cec7ff"/>
<path d="M1484.4 659.9l2.2-3.4-2.4 .1-2.2 3.4z" fill="#5a5ab4" stroke="#5a5ab4"/>
<path d="M1331.8 651.9l3.5 3 .9-4.9-3-2.6zM1306.7 605.5l.9 4.5 4.6 1-.7-3.9z" fill="#8a8aff" stroke="#8a8aff"/>
<path d="M1335.3 654.9l-3.5-3M1336.2 650l-3-2.6M1307.6 610l-.9-4.5M1312.2 611l-.7-3.9" class="e"/>
<path d="M1471.8 656.5l2-3.1-8.9-10.3-1.7 2.7zM1377.3 486.3l-3.7 .2 5 12.8 3.2-.2z" fill="#8a8aff" stroke="#8a8aff"/>
<path d="M1482 660l2.2-3.4-2.1 .8-2.2 3.3z" fill="#5a5ab4" stroke="#5a5ab4"/>
<path d="M1379.7 475.7l-3.9 .2-1.7 1.4 3.9-.1z" fill="#bdb9ff" stroke="#bdb9ff"/>
<path d="M1402.6 682.2l2.9-.7-4-1.8-2.8 .6z" fill="#5a5ab4" stroke="#5a5ab4"/>
<path d="M1318.9 531.4l-2.1 2.2-.4 4.3 2-2.2z" fill="#bab6ff" stroke="#bab6ff"/>
<path d="M1405.5 681.5l-2.9 .7M1316.8 533.6l2.1-2.2" class="e"/>
<path d="M1395.8 680.7l2.9-.4-11.5-26.9-1.9 .3zM1316.4 537.9l-1.8 2.3 18.2 22.6 1.2-1.5z" fill="#8a8aff" stroke="#8a8aff"/>
<path d="M1398.7 680.3l-2.9 .4M1387.2 653.4l-1.9 .3M1314.6 540.2l1.8-2.3M1332.8 562.8l1.2-1.5" class="e"/>
<path d="M1479.9 660.7l2.2-3.3-4.4-3.1-2 3.2z" fill="#6f6fd6" stroke="#6f6fd6"/>
<path d="M1378 477.2l-3.9 .1 .6 5.3 3.8-.1z" fill="#a7a6ff" stroke="#a7a6ff"/>
<path d="M1482.1 657.4l-2.2 3.3M1374.1 477.3l3.9-.1" class="e"/>
<path d="M1378.5 482.5l-3.8 .1-1.1 3.9 3.7-.2z" fill="#d1caff" stroke="#d1caff"/>
<path d="M1475.7 657.5l2-3.2-3.9-.9-2 3.1z" fill="#5a5ab4" stroke="#5a5ab4"/>
<path d="M1374.7 482.6l3.8-.1M1477.7 654.3l-2 3.2M1373.6 486.5l3.7-.2M1473.8 653.4l-2 3.1" class="e"/>
<path d="M1335.3 654.9l3.5 2.7 .5-5.3-3.1-2.3zM1306.2 601.1l.5 4.4 4.8 1.6-.5-3.8z" fill="#8a8aff" stroke="#8a8aff"/>
<path d="M1338.8 657.6l-3.5-2.7M1339.3 652.3l-3.1-2.3M1306.7 605.5l-.5-4.4M1311.5 607.1l-.5-3.8" class="e"/>
<path d="M1461.3 648.3l1.9-2.5-17.1 9.9-1.9 2.5z" fill="#5a5ab4" stroke="#5a5ab4"/>
<path d="M1378.6 499.3l-3.1 .4-17.1 9.9 3-.4z" fill="#b6b2ff" stroke="#b6b2ff"/>
<path d="M1463.2 645.8l-1.9 2.5M1375.5 499.7l3.1-.4" class="e"/>
<path d="M1415.1 676.7l2.7-1.2-2.2-.6-2.7 1.2z" fill="#5a5ab4" stroke="#5a5ab4"/>
<path d="M1330.2 523.8l-2.4 1.7-.5 2.2 2.3-1.7z" fill="#c0bbff" stroke="#c0bbff"/>
<path d="M1417.8 675.5l-2.7 1.2M1415.6 674.9l-2.7 1.2M1327.8 525.5l2.4-1.7M1327.3 527.7l2.3-1.7" class="e"/>
<path d="M1491.4 658.3l2-3.8-2.4-1.1-1.9 3.7z" fill="#6161c0" stroke="#6161c0"/>
<path d="M1386.1 468.8l-4.3-.2-.1 2.6 4.3 .2z" fill="#b9b5ff" stroke="#b9b5ff"/>
<path d="M1344.4 661l3.8 2-2.3-1.3-3.5-1.9z" fill="#5a5ab4" stroke="#5a5ab4"/>
<path d="M1306.2 590.3l-.2 4.2 0 2.4 .2-4z" fill="#a3a3ff" stroke="#a3a3ff"/>
<path d="M1348.2 663l-3.8-2M1344.4 661l-2-1.2M1306 594.5l.2-4.2M1306 594.5l0 2.4" class="e"/>
<path d="M1352.6 511.2l-2.7 1.2-17.1 9.9 2.7-1.2z" fill="#b5b2ff" stroke="#b5b2ff"/>
<path d="M1437.5 664.1l2.4-1.7-17.2 9.9-2.4 1.7z" fill="#5a5ab4" stroke="#5a5ab4"/>
<path d="M1349.9 512.4l-17.1 9.9M1437.5 664.1l-17.2 9.9" class="e"/>
<path d="M1493.3 660.1l2.1-3.9-2-1.7-2 3.8z" fill="#7d7deb" stroke="#7d7deb"/>
<path d="M1385.7 466.2l-4.4-.1 .5 2.5 4.3 .2z" fill="#9999ff" stroke="#9999ff"/>
<path d="M1493.3 660.1l2.1-3.9M1385.7 466.2l-4.4-.1" class="e"/>
<path d="M1489.1 657.1l1.9-3.7-2.5-.6-1.9 3.7z" fill="#5a5ab4" stroke="#5a5ab4"/>
<path d="M1386 471.4l-4.3-.2-.7 2.5 4.2 .1z" fill="#d5cdff" stroke="#d5cdff"/>
<path d="M1398.7 680.3l2.8-.6-12.5-26.7-1.8 .4zM1318.4 535.7l-2 2.2 17.6 23.4 1.3-1.4z" fill="#8a8aff" stroke="#8a8aff"/>
<path d="M1401.5 679.7l-2.8 .6M1389 653l-1.8 .4M1316.4 537.9l2-2.2M1334 561.3l1.3-1.4" class="e"/>
<path d="M1306 596.9l.2 4.2 4.8 2.2-.2-3.6zM1338.8 657.6l3.6 2.2 0-5.5-3.1-2z" fill="#8a8aff" stroke="#8a8aff"/>
<path d="M1306.2 601.1l-.2-4.2M1342.4 659.8l-3.6-2.2M1311 603.3l-.2-3.6M1342.4 654.3l-3.1-2" class="e"/>
<path d="M1486.6 656.5l1.9-3.7-2.4 .2-1.9 3.6z" fill="#5a5ab4" stroke="#5a5ab4"/>
<path d="M1385.2 473.8l-4.2-.1-1.3 2 4.1 .2z" fill="#d1caff" stroke="#d1caff"/>
<path d="M1405.5 681.5l2.9-1-4.1-1.7-2.8 .9z" fill="#5a5ab4" stroke="#5a5ab4"/>
<path d="M1321.1 529.4l-2.2 2-.5 4.3 2.2-1.9z" fill="#bcb7ff" stroke="#bcb7ff"/>
<path d="M1408.4 680.5l-2.9 1M1318.9 531.4l2.2-2" class="e"/>
<path d="M1473.8 653.4l1.7-3.4-9.1-9.7-1.5 2.8zM1381.1 486.5l-3.8-.2 4.5 12.8 3.2 .1z" fill="#8a8aff" stroke="#8a8aff"/>
<path d="M1484.2 656.6l1.9-3.6-2.1 .7-1.9 3.7z" fill="#5a5ab4" stroke="#5a5ab4"/>
<path d="M1383.8 475.9l-4.1-.2-1.7 1.5 4.1 .1z" fill="#bdb9ff" stroke="#bdb9ff"/>
<path d="M1381.8 499.1l-3.2 .2-17.2 9.9 3.2-.2z" fill="#b5b2ff" stroke="#b5b2ff"/>
<path d="M1463.2 645.8l1.7-2.7-17.1 9.9-1.7 2.7z" fill="#5a5ab4" stroke="#5a5ab4"/>
<path d="M1378.6 499.3l3.2-.2M1464.9 643.1l-1.7 2.7" class="e"/>
<path d="M1482.1 657.4l1.9-3.7-4.5-2.9-1.8 3.5z" fill="#7070d8" stroke="#7070d8"/>
<path d="M1382.1 477.3l-4.1-.1 .5 5.3 3.9 .1z" fill="#a7a6ff" stroke="#a7a6ff"/>
<path d="M1484 653.7l-1.9 3.7M1378 477.2l4.1 .1" class="e"/>
<path d="M1477.7 654.3l1.8-3.5-4-.8-1.7 3.4z" fill="#5a5ab4" stroke="#5a5ab4"/>
<path d="M1382.4 482.6l-3.9-.1-1.2 3.8 3.8 .2z" fill="#d6ceff" stroke="#d6ceff"/>
<path d="M1479.5 650.8l-1.8 3.5M1475.5 650l-1.7 3.4M1378.5 482.5l3.9 .1M1377.3 486.3l3.8 .2" class="e"/>
<path d="M1348.2 663l3.7 1.5-2.4-1.4-3.6-1.4z" fill="#5a5ab4" stroke="#5a5ab4"/>
<path d="M1306.8 586.3l-.6 4 0 2.6 .5-3.8z" fill="#a8a7ff" stroke="#a8a7ff"/>
<path d="M1351.9 664.5l-3.7-1.5M1306.2 590.3l.6-4" class="e"/>
<path d="M1342.4 659.8l3.5 1.9-.4-5.8-3.1-1.6zM1306.2 592.9l-.2 4 4.8 2.8 .2-3.5z" fill="#8a8aff" stroke="#8a8aff"/>
<path d="M1345.9 661.7l-3.5-1.9M1345.5 655.9l-3.1-1.6M1306 596.9l.2-4M1310.8 599.7l.2-3.5" class="e"/>
<path d="M1332.8 522.3l-2.6 1.5-.6 2.2 2.5-1.5z" fill="#c2bdff" stroke="#c2bdff"/>
<path d="M1417.8 675.5l2.5-1.5-2.2-.6-2.5 1.5z" fill="#5a5ab4" stroke="#5a5ab4"/>
<path d="M1330.2 523.8l2.6-1.5M1329.6 526l2.5-1.5M1420.3 674l-2.5 1.5M1418.1 673.4l-2.5 1.5" class="e"/>
<path d="M1401.5 679.7l2.8-.9-13.5-26.4-1.8 .6zM1320.6 533.8l-2.2 1.9 16.9 24.2 1.4-1.2z" fill="#8a8aff" stroke="#8a8aff"/>
<path d="M1404.3 678.8l-2.8 .9M1390.8 652.4l-1.8 .6M1318.4 535.7l2.2-1.9M1335.3 559.9l1.4-1.2" class="e"/>
<path d="M1439.9 662.4l2.2-2-17.1 9.9-2.3 2z" fill="#5a5ab4" stroke="#5a5ab4"/>
<path d="M1355.4 510.3l-2.8 .9-17.1 9.9 2.8-.9z" fill="#b5b2ff" stroke="#b5b2ff"/>
<path d="M1493.4 654.5l1.7-4.1-2.4-1-1.7 4z" fill="#6262c2" stroke="#6262c2"/>
<path d="M1390.6 469.3l-4.5-.5-.1 2.6 4.3 .5z" fill="#bab6ff" stroke="#bab6ff"/>
<path d="M1491 653.4l1.7-4-2.5-.5-1.7 3.9z" fill="#5a5ab4" stroke="#5a5ab4"/>
<path d="M1390.3 471.9l-4.3-.5-.8 2.4 4.2 .5z" fill="#d9d1ff" stroke="#d9d1ff"/>
<path d="M1495.4 656.2l1.8-4.2-2.1-1.6-1.7 4.1z" fill="#7d7dec" stroke="#7d7dec"/>
<path d="M1390.2 466.8l-4.5-.6 .4 2.6 4.5 .5z" fill="#9999ff" stroke="#9999ff"/>
<path d="M1495.4 656.2l1.8-4.2M1390.2 466.8l-4.5-.6" class="e"/>
<path d="M1408.4 680.5l2.7-1.2-4.3-1.7-2.5 1.2z" fill="#5a5ab4" stroke="#5a5ab4"/>
<path d="M1323.5 527.7l-2.4 1.7-.5 4.4 2.3-1.6z" fill="#beb9ff" stroke="#beb9ff"/>
<path d="M1411.1 679.3l-2.7 1.2M1321.1 529.4l2.4-1.7" class="e"/>
<path d="M1475.5 650l1.6-3.6-9.3-9.2-1.4 3.1zM1385 486.9l-3.9-.4 3.9 12.7 3.4 .4z" fill="#8a8aff" stroke="#8a8aff"/>
<path d="M1488.5 652.8l1.7-3.9-2.5 .2-1.6 3.9z" fill="#5a5ab4" stroke="#5a5ab4"/>
<path d="M1389.4 474.3l-4.2-.5-1.4 2.1 4.2 .5z" fill="#d5cdff" stroke="#d5cdff"/>
<path d="M1464.9 643.1l1.5-2.8-17.1 9.9-1.5 2.8z" fill="#5a5ab4" stroke="#5a5ab4"/>
<path d="M1385 499.2l-3.2-.1-17.2 9.9 3.3 .1z" fill="#b5b2ff" stroke="#b5b2ff"/>
<path d="M1466.4 640.3l-1.5 2.8M1381.8 499.1l3.2 .1" class="e"/>
<path d="M1345.9 661.7l3.6 1.4-1-6-3-1.2zM1306.7 589.1l-.5 3.8 4.8 3.3 .5-3.3z" fill="#8a8aff" stroke="#8a8aff"/>
<path d="M1349.5 663.1l-3.6-1.4M1348.5 657.1l-3-1.2M1306.2 592.9l.5-3.8M1311 596.2l.5-3.3" class="e"/>
<path d="M1351.9 664.5l3.7 1-2.7-1.4-3.4-1z" fill="#5a5ab4" stroke="#5a5ab4"/>
<path d="M1307.7 582.6l-.9 3.7-.1 2.8 .9-3.5z" fill="#adabff" stroke="#adabff"/>
<path d="M1355.6 665.5l-3.7-1M1306.8 586.3l.9-3.7" class="e"/>
<path d="M1486.1 653l1.6-3.9-2.1 .8-1.6 3.8z" fill="#5a5ab4" stroke="#5a5ab4"/>
<path d="M1388 476.4l-4.2-.5-1.7 1.4 4.2 .5z" fill="#beb9ff" stroke="#beb9ff"/>
<path d="M1404.3 678.8l2.5-1.2-14.4-25.9-1.6 .7zM1322.9 532.2l-2.3 1.6 16.1 24.9 1.4-1.1z" fill="#8a8aff" stroke="#8a8aff"/>
<path d="M1406.8 677.6l-2.5 1.2M1392.4 651.7l-1.6 .7M1320.6 533.8l2.3-1.6M1336.7 558.7l1.4-1.1" class="e"/>
<path d="M1484 653.7l1.6-3.8-4.5-2.8-1.6 3.7z" fill="#7171d9" stroke="#7171d9"/>
<path d="M1386.3 477.8l-4.2-.5 .3 5.3 4 .5z" fill="#a7a6ff" stroke="#a7a6ff"/>
<path d="M1485.6 649.9l-1.6 3.8M1382.1 477.3l4.2 .5" class="e"/>
<path d="M1479.5 650.8l1.6-3.7-4-.7-1.6 3.6z" fill="#5a5ab4" stroke="#5a5ab4"/>
<path d="M1386.4 483.1l-4-.5-1.3 3.9 3.9 .4z" fill="#dad2ff" stroke="#dad2ff"/>
<path d="M1481.1 647.1l-1.6 3.7M1477.1 646.4l-1.6 3.6M1382.4 482.6l4 .5M1381.1 486.5l3.9 .4" class="e"/>
<path d="M1335.5 521.1l-2.7 1.2-.7 2.2 2.7-1.2z" fill="#c5bfff" stroke="#c5bfff"/>
<path d="M1420.3 674l2.4-1.7-2.3-.6-2.3 1.7z" fill="#5a5ab4" stroke="#5a5ab4"/>
<path d="M1332.8 522.3l2.7-1.2M1422.7 672.3l-2.4 1.7M1332.1 524.5l2.7-1.2M1420.4 671.7l-2.3 1.7" class="e"/>
<path d="M1442.1 660.4l2.1-2.2-17.2 9.9-2 2.2z" fill="#5a5ab4" stroke="#5a5ab4"/>
<path d="M1358.4 509.6l-3 .7-17.1 9.9 2.9-.7z" fill="#b6b2ff" stroke="#b6b2ff"/>
<path d="M1326 526.2l-2.5 1.5-.6 4.5 2.4-1.4z" fill="#c0bbff" stroke="#c0bbff"/>
<path d="M1411.1 679.3l2.5-1.4-4.3-1.7-2.5 1.4z" fill="#5a5ab4" stroke="#5a5ab4"/>
<path d="M1323.5 527.7l2.5-1.5M1413.6 677.9l-2.5 1.4" class="e"/>
<path d="M1477.1 646.4l1.3-3.8-9.5-8.7-1.1 3.3zM1389 487.7l-4-.8 3.4 12.7 3.4 .7zM1349.5 663.1l3.4 1-1.4-6.1-3-.9zM1307.6 585.6l-.9 3.5 4.8 3.8 .7-3z" fill="#8a8aff" stroke="#8a8aff"/>
<path d="M1352.9 664.1l-3.4-1M1351.5 658l-3-.9M1306.7 589.1l.9-3.5M1311.5 592.9l.7-3" class="e"/>
<path d="M1495.1 650.4l1.5-4.3-2.4-1-1.5 4.3z" fill="#6363c4" stroke="#6363c4"/>
<path d="M1395.1 470.2l-4.5-.9-.3 2.6 4.4 .9z" fill="#bbb7ff" stroke="#bbb7ff"/>
<path d="M1492.7 649.4l1.5-4.3-2.6-.4-1.4 4.2z" fill="#5a5ab4" stroke="#5a5ab4"/>
<path d="M1394.7 472.8l-4.4-.9-.9 2.4 4.4 .9z" fill="#ded5ff" stroke="#ded5ff"/>
<path d="M1466.4 640.3l1.4-3.1-17.2 9.9-1.3 3.1z" fill="#5a5ab4" stroke="#5a5ab4"/>
<path d="M1388.4 499.6l-3.4-.4-17.1 9.9 3.3 .4z" fill="#b4b1ff" stroke="#b4b1ff"/>
<path d="M1467.8 637.2l-1.4 3.1M1385 499.2l3.4 .4" class="e"/>
<path d="M1497.2 652l1.5-4.4-2.1-1.5-1.5 4.3z" fill="#7e7eed" stroke="#7e7eed"/>
<path d="M1394.8 467.7l-4.6-.9 .4 2.5 4.5 .9z" fill="#9898ff" stroke="#9898ff"/>
<path d="M1497.2 652l1.5-4.4M1394.8 467.7l-4.6-.9" class="e"/>
<path d="M1406.8 677.6l2.5-1.4-15.3-25.5-1.6 1zM1325.3 530.8l-2.4 1.4 15.2 25.4 1.6-.9z" fill="#8a8aff" stroke="#8a8aff"/>
<path d="M1409.3 676.2l-2.5 1.4M1394 650.7l-1.6 1M1322.9 532.2l2.4-1.4M1338.1 557.6l1.6-.9" class="e"/>
<path d="M1355.6 665.5l3.5 .6-2.8-1.4-3.4-.6z" fill="#5a5ab4" stroke="#5a5ab4"/>
<path d="M1309 579.2l-1.3 3.4-.1 3 1.2-3.2z" fill="#b1aeff" stroke="#b1aeff"/>
<path d="M1359.1 666.1l-3.5-.6M1307.7 582.6l1.3-3.4" class="e"/>
<path d="M1490.2 648.9l1.4-4.2-2.4 .2-1.5 4.2z" fill="#5a5ab4" stroke="#5a5ab4"/>
<path d="M1393.8 475.2l-4.4-.9-1.4 2.1 4.3 .8z" fill="#d8d0ff" stroke="#d8d0ff"/>
<path d="M1332.6 522.7l-2.7 1.3-3.9 2.2 2.7-1.2z" fill="#b5b2ff" stroke="#b5b2ff"/>
<path d="M1417.5 675.6l2.4-1.7-3.9 2.2-2.4 1.8z" fill="#5a5ab4" stroke="#5a5ab4"/>
<path d="M1329.9 524l2.7-1.3M1329.9 524l-3.9 2.2M1419.9 673.9l-2.4 1.7M1417.5 675.6l-3.9 2.3" class="e"/>
<path d="M1317.9 656.8l-.9 1.8 4.3-2.6 0 0z" fill="#5a5ab4" stroke="#5a5ab4"/>
<path d="M1321.3 656l-4.3 2.6M1321.3 656l-3.4 .8" class="e"/>
<path d="M1422.7 672.3l2.3-2-2.4-.5-2.2 1.9z" fill="#5a5ab4" stroke="#5a5ab4"/>
<path d="M1338.3 520.2l-2.8 .9-.7 2.2 2.7-.9z" fill="#c8c2ff" stroke="#c8c2ff"/>
<path d="M1425 670.3l-2.3 2M1422.6 669.8l-2.2 1.9M1335.5 521.1l2.8-.9M1334.8 523.3l2.7-.9" class="e"/>
<path d="M1487.7 649.1l1.5-4.2-2.1 .8-1.5 4.2z" fill="#5a5ab4" stroke="#5a5ab4"/>
<path d="M1392.3 477.2l-4.3-.8-1.7 1.4 4.3 .8z" fill="#bdb9ff" stroke="#bdb9ff"/>
<path d="M1481.1 647.1l1.4-3.9-4.1-.6-1.3 3.8z" fill="#5a5ab4" stroke="#5a5ab4"/>
<path d="M1390.5 483.9l-4.1-.8-1.4 3.8 4 .8z" fill="#dfd5ff" stroke="#dfd5ff"/>
<path d="M1478.4 642.6l-1.3 3.8M1385 486.9l4 .8" class="e"/>
<path d="M1485.6 649.9l1.5-4.2-4.6-2.5-1.4 3.9z" fill="#7272da" stroke="#7272da"/>
<path d="M1390.6 478.6l-4.3-.8 .1 5.3 4.1 .8z" fill="#a7a6ff" stroke="#a7a6ff"/>
<path d="M1487.1 645.7l-1.5 4.2M1482.5 643.2l-1.4 3.9M1386.3 477.8l4.3 .8M1386.4 483.1l4.1 .8" class="e"/>
<path d="M1444.2 658.2l1.9-2.5-17.2 9.9-1.9 2.5z" fill="#5a5ab4" stroke="#5a5ab4"/>
<path d="M1361.4 509.2l-3 .4-17.2 9.9 3.1-.4z" fill="#b6b2ff" stroke="#b6b2ff"/>
<path d="M1298.4 614.6l0 0-4.4 2.5 2.1 .3z" fill="#b4b1ff" stroke="#b4b1ff"/>
<path d="M1298.4 614.6l-2.3 2.8M1294 617.1l4.4-2.5" class="e"/>
<path d="M1308.8 582.4l-1.2 3.2 4.6 4.3 1-2.8zM1352.9 664.1l3.4 .6-1.8-6.2-3-.5z" fill="#8a8aff" stroke="#8a8aff"/>
<path d="M1307.6 585.6l1.2-3.2M1356.3 664.7l-3.4-.6M1312.2 589.9l1-2.8M1354.5 658.5l-3-.5" class="e"/>
<path d="M1328.7 525l-2.7 1.2-.7 4.6 2.6-1.2z" fill="#c3bdff" stroke="#c3bdff"/>
<path d="M1413.6 677.9l2.4-1.8-4.4-1.5-2.3 1.6z" fill="#5a5ab4" stroke="#5a5ab4"/>
<path d="M1326 526.2l2.7-1.2M1416 676.1l-2.4 1.8" class="e"/>
<path d="M1478.4 642.6l1.1-4-9.7-8.2-.9 3.5zM1393 488.8l-4-1.1 2.8 12.6 3.5 .9zM1409.3 676.2l2.3-1.6-16.1-24.9-1.5 1zM1327.9 529.6l-2.6 1.2 14.4 25.9 1.7-.7z" fill="#8a8aff" stroke="#8a8aff"/>
<path d="M1411.6 674.6l-2.3 1.6M1395.5 649.7l-1.5 1M1325.3 530.8l2.6-1.2M1339.7 556.7l1.7-.7" class="e"/>
<path d="M1467.8 637.2l1.1-3.3-17.1 9.9-1.2 3.3z" fill="#5a5ab4" stroke="#5a5ab4"/>
<path d="M1391.8 500.3l-3.4-.7-17.2 9.9 3.4 .7z" fill="#b3b0ff" stroke="#b3b0ff"/>
<path d="M1468.9 633.9l-1.1 3.3M1388.4 499.6l3.4 .7" class="e"/>
<path d="M1310.6 576.2l-1.6 3-.2 3.2 1.5-2.8z" fill="#b4b1ff" stroke="#b4b1ff"/>
<path d="M1359.1 666.1l3.4 .1-3-1.4-3.2-.1z" fill="#5a5ab4" stroke="#5a5ab4"/>
<path d="M1309 579.2l1.6-3M1362.5 666.2l-3.4-.1" class="e"/>
<path d="M1496.6 646.1l1.3-4.6-2.5-.9-1.2 4.5z" fill="#6565c6" stroke="#6565c6"/>
<path d="M1399.6 471.4l-4.5-1.2-.4 2.6 4.5 1.2z" fill="#bcb7ff" stroke="#bcb7ff"/>
<path d="M1399.2 474l-4.5-1.2-.9 2.4 4.4 1.2z" fill="#e2d8ff" stroke="#e2d8ff"/>
<path d="M1494.2 645.1l1.2-4.5-2.6-.3-1.2 4.4zM1419.9 673.9l2.2-2-3.9 2.3-2.2 1.9z" fill="#5a5ab4" stroke="#5a5ab4"/>
<path d="M1335.4 521.8l-2.8 .9-3.9 2.3 2.9-1z" fill="#b5b2ff" stroke="#b5b2ff"/>
<path d="M1422.1 671.9l-2.2 2M1332.6 522.7l2.8-.9" class="e"/>
<path d="M1399.5 468.9l-4.7-1.2 .3 2.5 4.5 1.2z" fill="#9898ff" stroke="#9898ff"/>
<path d="M1498.7 647.6l1.2-4.7-2-1.4-1.3 4.6z" fill="#7e7eee" stroke="#7e7eee"/>
<path d="M1399.5 468.9l-4.7-1.2M1498.7 647.6l1.2-4.7" class="e"/>
<path d="M1491.6 644.7l1.2-4.4-2.5 .3-1.1 4.3z" fill="#5a5ab4" stroke="#5a5ab4"/>
<path d="M1398.2 476.4l-4.4-1.2-1.5 2 4.4 1.2z" fill="#dcd3ff" stroke="#dcd3ff"/>
<path d="M1425 670.3l2-2.2-2.3-.5-2.1 2.2z" fill="#5a5ab4" stroke="#5a5ab4"/>
<path d="M1341.2 519.5l-2.9 .7-.8 2.2 2.9-.7z" fill="#cbc5ff" stroke="#cbc5ff"/>
<path d="M1427 668.1l-2 2.2M1424.7 667.6l-2.1 2.2M1338.3 520.2l2.9-.7M1337.5 522.4l2.9-.7" class="e"/>
<path d="M1314.2 657.9l-1.6 3.2 4.4-2.5 .9-1.8z" fill="#5a5ab4" stroke="#5a5ab4"/>
<path d="M1317 658.6l-4.4 2.5M1317.9 656.8l-3.7 1.1" class="e"/>
<path d="M1482.5 643.2l1.1-4.1-4.1-.5-1.1 4z" fill="#5a5ab4" stroke="#5a5ab4"/>
<path d="M1394.6 485l-4.1-1.1-1.5 3.8 4 1.1z" fill="#e3d9ff" stroke="#e3d9ff"/>
<path d="M1479.5 638.6l-1.1 4M1389 487.7l4 1.1" class="e"/>
<path d="M1396.7 478.4l-4.4-1.2-1.7 1.4 4.3 1.2z" fill="#bdb9ff" stroke="#bdb9ff"/>
<path d="M1489.2 644.9l1.1-4.3-2.1 .8-1.1 4.3z" fill="#5a5ab4" stroke="#5a5ab4"/>
<path d="M1394.9 479.8l-4.3-1.2-.1 5.3 4.1 1.1z" fill="#a7a6ff" stroke="#a7a6ff"/>
<path d="M1487.1 645.7l1.1-4.3-4.6-2.3-1.1 4.1z" fill="#7373dc" stroke="#7373dc"/>
<path d="M1390.6 478.6l4.3 1.2M1390.5 483.9l4.1 1.1M1488.2 641.4l-1.1 4.3M1483.6 639.1l-1.1 4.1" class="e"/>
<path d="M1364.6 509l-3.2 .2-17.1 9.9 3.2-.2z" fill="#b5b2ff" stroke="#b5b2ff"/>
<path d="M1446.1 655.7l1.7-2.7-17.2 9.9-1.7 2.7z" fill="#5a5ab4" stroke="#5a5ab4"/>
<path d="M1356.3 664.7l3.2 .1-2.2-6.2-2.8-.1zM1310.3 579.6l-1.5 2.8 4.4 4.7 1.4-2.5z" fill="#8a8aff" stroke="#8a8aff"/>
<path d="M1359.5 664.8l-3.2-.1M1357.3 658.6l-2.8-.1M1308.8 582.4l1.5-2.8M1313.2 587.1l1.4-2.5" class="e"/>
<path d="M1411.6 674.6l2.1-1.9-16.8-24.2-1.4 1.2zM1330.6 528.7l-2.7 .9 13.5 26.4 1.7-.6z" fill="#8a8aff" stroke="#8a8aff"/>
<path d="M1396.9 648.5l-1.4 1.2M1341.4 556l1.7-.6" class="e"/>
<path d="M1393.2 651.2l2.6-1.7-10.9 6.2-2.5 1.8z" fill="#5a5ab4" stroke="#5a5ab4"/>
<path d="M1341.7 555.9l-2.8 1.3-10.8 6.2 2.8-1.3z" fill="#b5b1ff" stroke="#b5b1ff"/>
<path d="M1393.2 651.2l-10.8 6.3M1393.2 651.2l2.6-1.7M1341.7 555.9l-2.8 1.3M1338.9 557.2l-10.8 6.2" class="e"/>
<path d="M1296.1 617.4l-2.1-.3-4.4 2.5 3.7 .5z" fill="#b4b1ff" stroke="#b4b1ff"/>
<path d="M1296.1 617.4l-2.8 2.7M1289.6 619.6l4.4-2.5" class="e"/>
<path d="M1397.1 490.2l-4.1-1.4 2.3 12.4 3.5 1.2zM1479.5 638.6l.8-4.3-9.7-7.6-.8 3.7z" fill="#8a8aff" stroke="#8a8aff"/>
<path d="M1416 676.1l2.2-1.9-4.5-1.5-2.1 1.9z" fill="#5a5ab4" stroke="#5a5ab4"/>
<path d="M1331.6 524l-2.9 1-.8 4.6 2.7-.9z" fill="#c5c0ff" stroke="#c5c0ff"/>
<path d="M1418.2 674.2l-2.2 1.9M1413.7 672.7l-2.1 1.9M1328.7 525l2.9-1M1327.9 529.6l2.7-.9" class="e"/>
<path d="M1395.3 501.2l-3.5-.9-17.2 9.9 3.5 .9z" fill="#b2afff" stroke="#b2afff"/>
<path d="M1468.9 633.9l.9-3.5-17.1 9.9-.9 3.5z" fill="#5a5ab4" stroke="#5a5ab4"/>
<path d="M1391.8 500.3l3.5 .9M1469.8 630.4l-.9 3.5" class="e"/>
<path d="M1362.5 666.2l3.3-.3-3.2-1.5-3.1 .4z" fill="#5a5ab4" stroke="#5a5ab4"/>
<path d="M1312.5 573.6l-1.9 2.6-.3 3.4 1.9-2.5z" fill="#b8b4ff" stroke="#b8b4ff"/>
<path d="M1365.8 665.9l-3.3 .3M1310.6 576.2l1.9-2.6" class="e"/>
<path d="M1403.7 475.5l-4.5-1.5-1 2.4 4.5 1.5z" fill="#e5dbff" stroke="#e5dbff"/>
<path d="M1495.4 640.6l1-4.7-2.7-.2-.9 4.6z" fill="#5a5ab4" stroke="#5a5ab4"/>
<path d="M1404.3 473l-4.7-1.6-.4 2.6 4.5 1.5z" fill="#bcb8ff" stroke="#bcb8ff"/>
<path d="M1497.9 641.5l.9-4.8-2.4-.8-1 4.7z" fill="#6666c9" stroke="#6666c9"/>
<path d="M1422.1 671.9l2.1-2.2-3.9 2.2-2.1 2.3z" fill="#5a5ab4" stroke="#5a5ab4"/>
<path d="M1338.4 521.1l-3 .7-3.8 2.2 2.9-.6z" fill="#b6b2ff" stroke="#b6b2ff"/>
<path d="M1424.2 669.7l-2.1 2.2M1335.4 521.8l3-.7" class="e"/>
<path d="M1402.7 477.9l-4.5-1.5-1.5 2 4.4 1.5z" fill="#dfd6ff" stroke="#dfd6ff"/>
<path d="M1492.8 640.3l.9-4.6-2.4 .3-1 4.6zM1427 668.1l1.9-2.5-2.4-.4-1.8 2.4z" fill="#5a5ab4" stroke="#5a5ab4"/>
<path d="M1344.3 519.1l-3.1 .4-.8 2.2 3-.4z" fill="#cfc8ff" stroke="#cfc8ff"/>
<path d="M1428.9 665.6l-1.9 2.5M1426.5 665.2l-1.8 2.4M1341.2 519.5l3.1-.4M1340.4 521.7l3-.4" class="e"/>
<path d="M1404.3 470.5l-4.8-1.6 .1 2.5 4.7 1.6z" fill="#9898ff" stroke="#9898ff"/>
<path d="M1499.9 642.9l1-4.9-2.1-1.3-.9 4.8z" fill="#7f7fee" stroke="#7f7fee"/>
<path d="M1404.3 470.5l-4.8-1.6M1499.9 642.9l1-4.9" class="e"/>
<path d="M1413.7 672.7l2-2.2-17.5-23.4-1.3 1.4zM1333.4 528l-2.8 .7 12.5 26.7 1.9-.4z" fill="#8a8aff" stroke="#8a8aff"/>
<path d="M1398.2 647.1l-1.3 1.4M1343.1 555.4l1.9-.4" class="e"/>
<path d="M1359.5 664.8l3.1-.4-2.7-6.1-2.6 .3zM1312.2 577.1l-1.9 2.5 4.3 5 1.6-2.1z" fill="#8a8aff" stroke="#8a8aff"/>
<path d="M1362.6 664.4l-3.1 .4M1359.9 658.3l-2.6 .3M1310.3 579.6l1.9-2.5M1314.6 584.6l1.6-2.1" class="e"/>
<path d="M1398.9 486.4l-4.3-1.4-1.6 3.8 4.1 1.4z" fill="#e7dcff" stroke="#e7dcff"/>
<path d="M1483.6 639.1l.9-4.4-4.2-.4-.8 4.3z" fill="#5a5ab4" stroke="#5a5ab4"/>
<path d="M1393 488.8l4.1 1.4M1480.3 634.3l-.8 4.3" class="e"/>
<path d="M1447.8 653l1.5-2.8-17.2 9.9-1.5 2.8z" fill="#5a5ab4" stroke="#5a5ab4"/>
<path d="M1367.9 509.1l-3.3-.1-17.1 9.9 3.2 .1z" fill="#b5b2ff" stroke="#b5b2ff"/>
<path d="M1310.4 659.3l-2.2 4.3 4.4-2.5 1.6-3.2z" fill="#5a5ab4" stroke="#5a5ab4"/>
<path d="M1312.6 661.1l-4.4 2.5M1314.2 657.9l-3.8 1.4" class="e"/>
<path d="M1399.4 481.3l-4.5-1.5-.3 5.2 4.3 1.4z" fill="#a7a6ff" stroke="#a7a6ff"/>
<path d="M1488.2 641.4l.9-4.6-4.6-2.1-.9 4.4z" fill="#7474de" stroke="#7474de"/>
<path d="M1394.6 485l4.3 1.4M1484.5 634.7l-.9 4.4" class="e"/>
<path d="M1401.1 479.9l-4.4-1.5-1.8 1.4 4.5 1.5z" fill="#bdb8ff" stroke="#bdb8ff"/>
<path d="M1490.3 640.6l1-4.6-2.2 .8-.9 4.6z" fill="#5a5ab4" stroke="#5a5ab4"/>
<path d="M1394.9 479.8l4.5 1.5M1489.1 636.8l-.9 4.6" class="e"/>
<path d="M1480.3 634.3l.6-4.4-9.8-7-.5 3.8zM1401.2 491.9l-4.1-1.7 1.7 12.2 3.6 1.5z" fill="#8a8aff" stroke="#8a8aff"/>
<path d="M1398.8 502.4l-3.5-1.2-17.2 9.9 3.6 1.2z" fill="#b0aeff" stroke="#b0aeff"/>
<path d="M1469.8 630.4l.8-3.7-17.2 9.9-.7 3.7z" fill="#5a5ab4" stroke="#5a5ab4"/>
<path d="M1395.3 501.2l3.5 1.2M1470.6 626.7l-.8 3.7" class="e"/>
<path d="M1395.8 649.5l2.2-2.2-10.8 6.2-2.3 2.2z" fill="#5a5ab4" stroke="#5a5ab4"/>
<path d="M1344.7 555l-3 .9-10.8 6.2 3-.8z" fill="#b5b2ff" stroke="#b5b2ff"/>
<path d="M1395.8 649.5l2.2-2.2M1344.7 555l-3 .9" class="e"/>
<path d="M1293.3 620.1l-3.7-.5-4.3 2.5 4.9 .7z" fill="#b4b1ff" stroke="#b4b1ff"/>
<path d="M1293.3 620.1l-3.1 2.7M1285.3 622.1l4.3-2.5" class="e"/>
<path d="M1418.2 674.2l2.1-2.3-4.6-1.4-2 2.2z" fill="#5a5ab4" stroke="#5a5ab4"/>
<path d="M1334.5 523.4l-2.9 .6-1 4.7 2.8-.7z" fill="#c9c3ff" stroke="#c9c3ff"/>
<path d="M1420.3 671.9l-2.1 2.3M1415.7 670.5l-2 2.2M1331.6 524l2.9-.6M1330.6 528.7l2.8-.7" class="e"/>
<path d="M1314.8 571.4l-2.3 2.2-.3 3.5 2.1-2.1z" fill="#bbb7ff" stroke="#bbb7ff"/>
<path d="M1365.8 665.9l3-.9-3.4-1.4-2.8 .8z" fill="#5a5ab4" stroke="#5a5ab4"/>
<path d="M1312.5 573.6l2.3-2.2M1368.8 665l-3 .9" class="e"/>
<path d="M1424.2 669.7l1.9-2.4-3.9 2.2-1.9 2.4z" fill="#5a5ab4" stroke="#5a5ab4"/>
<path d="M1341.5 520.7l-3.1 .4-3.9 2.3 3.1-.5z" fill="#b6b2ff" stroke="#b6b2ff"/>
<path d="M1426.1 667.3l-1.9 2.4M1338.4 521.1l3.1-.4" class="e"/>
<path d="M1415.7 670.5l1.8-2.3-18.2-22.6-1.1 1.5zM1336.4 527.7l-3 .3 11.6 27 1.9-.3z" fill="#8a8aff" stroke="#8a8aff"/>
<path d="M1399.3 645.6l-1.1 1.5M1345 555l1.9-.3" class="e"/>
<path d="M1408.3 477.4l-4.6-1.9-1 2.4 4.5 1.8z" fill="#e8ddff" stroke="#e8ddff"/>
<path d="M1496.4 635.9l.6-4.9-2.6-.2-.7 4.9z" fill="#5a5ab4" stroke="#5a5ab4"/>
<path d="M1498.8 636.7l.7-5-2.5-.7-.6 4.9z" fill="#6868cb" stroke="#6868cb"/>
<path d="M1409 474.9l-4.7-1.9-.6 2.5 4.6 1.9z" fill="#bcb8ff" stroke="#bcb8ff"/>
<path d="M1428.9 665.6l1.7-2.7-2.4-.3-1.7 2.6z" fill="#5a5ab4" stroke="#5a5ab4"/>
<path d="M1347.5 518.9l-3.2 .2-.9 2.2 3.2-.1z" fill="#d3cbff" stroke="#d3cbff"/>
<path d="M1430.6 662.9l-1.7 2.7M1428.2 662.6l-1.7 2.6M1344.3 519.1l3.2-.2M1343.4 521.3l3.2-.1" class="e"/>
<path d="M1493.7 635.7l.7-4.9-2.5 .4-.6 4.8z" fill="#5a5ab4" stroke="#5a5ab4"/>
<path d="M1407.2 479.7l-4.5-1.8-1.6 2 4.5 1.8z" fill="#e1d8ff" stroke="#e1d8ff"/>
<path d="M1314.3 575l-2.1 2.1 4 5.4 1.8-1.8zM1362.6 664.4l2.8-.8-3-6-2.5 .7z" fill="#8a8aff" stroke="#8a8aff"/>
<path d="M1312.2 577.1l2.1-2.1M1365.4 663.6l-2.8 .8M1316.2 582.5l1.8-1.8M1362.4 657.6l-2.5 .7" class="e"/>
<path d="M1449.3 650.2l1.3-3.1-17.1 9.9-1.4 3.1z" fill="#5a5ab4" stroke="#5a5ab4"/>
<path d="M1371.2 509.5l-3.3-.4-17.2 9.9 3.4 .4z" fill="#b4b1ff" stroke="#b4b1ff"/>
<path d="M1484.5 634.7l.6-4.6-4.2-.2-.6 4.4z" fill="#5a5ab4" stroke="#5a5ab4"/>
<path d="M1403.1 488.2l-4.2-1.8-1.8 3.8 4.1 1.7z" fill="#e9dfff" stroke="#e9dfff"/>
<path d="M1480.9 629.9l-.6 4.4M1397.1 490.2l4.1 1.7" class="e"/>
<path d="M1500.9 638l.7-5.2-2.1-1.1-.7 5z" fill="#8080ef" stroke="#8080ef"/>
<path d="M1409.1 472.5l-4.8-2 0 2.5 4.7 1.9z" fill="#9898ff" stroke="#9898ff"/>
<path d="M1500.9 638l.7-5.2M1409.1 472.5l-4.8-2" class="e"/>
<path d="M1480.9 629.9l.4-4.6-9.9-6.4-.3 4zM1405.4 493.9l-4.2-2 1.2 12 3.6 1.7z" fill="#8a8aff" stroke="#8a8aff"/>
<path d="M1306.4 661.1l-2.5 5 4.3-2.5 2.2-4.3z" fill="#5a5ab4" stroke="#5a5ab4"/>
<path d="M1308.2 663.6l-4.3 2.5M1310.4 659.3l-4 1.8" class="e"/>
<path d="M1470.6 626.7l.5-3.8-17.2 9.9-.5 3.8z" fill="#5a5ab4" stroke="#5a5ab4"/>
<path d="M1402.4 503.9l-3.6-1.5-17.1 9.9 3.5 1.5z" fill="#aeacff" stroke="#aeacff"/>
<path d="M1471.1 622.9l-.5 3.8M1398.8 502.4l3.6 1.5" class="e"/>
<path d="M1403.8 483.1l-4.4-1.8-.5 5.1 4.2 1.8z" fill="#a6a5ff" stroke="#a6a5ff"/>
<path d="M1489.1 636.8l.7-4.8-4.7-1.9-.6 4.6z" fill="#7575df" stroke="#7575df"/>
<path d="M1398.9 486.4l4.2 1.8M1485.1 630.1l-.6 4.6" class="e"/>
<path d="M1491.3 636l.6-4.8-2.1 .8-.7 4.8z" fill="#5a5ab4" stroke="#5a5ab4"/>
<path d="M1405.6 481.7l-4.5-1.8-1.7 1.4 4.4 1.8z" fill="#bcb7ff" stroke="#bcb7ff"/>
<path d="M1489.8 632l-.7 4.8M1399.4 481.3l4.4 1.8" class="e"/>
<path d="M1420.3 671.9l1.9-2.4-4.7-1.3-1.8 2.3z" fill="#5a5ab4" stroke="#5a5ab4"/>
<path d="M1337.6 522.9l-3.1 .5-1.1 4.6 3-.3z" fill="#ccc6ff" stroke="#ccc6ff"/>
<path d="M1422.2 669.5l-1.9 2.4M1417.5 668.2l-1.8 2.3M1334.5 523.4l3.1-.5M1333.4 528l3-.3" class="e"/>
<path d="M1398 647.3l1.9-2.7-10.8 6.3-1.9 2.6z" fill="#5a5ab4" stroke="#5a5ab4"/>
<path d="M1348 554.6l-3.3 .4-10.8 6.3 3.3-.4z" fill="#b5b2ff" stroke="#b5b2ff"/>
<path d="M1398 647.3l1.9-2.7M1348 554.6l-3.3 .4" class="e"/>
<path d="M1290.2 622.8l-4.9-.7-4.4 2.5 5.8 .8z" fill="#b4b1ff" stroke="#b4b1ff"/>
<path d="M1290.2 622.8l-3.5 2.6M1280.9 624.6l4.4-2.5" class="e"/>
<path d="M1382.4 657.5l2.5-1.8-10.8 6.2-2.5 1.8z" fill="#5a5ab4" stroke="#5a5ab4"/>
<path d="M1330.9 562.1l-2.8 1.3-10.8 6.3 2.8-1.3z" fill="#b5b1ff" stroke="#b5b1ff"/>
<path d="M1382.4 657.5l-10.8 6.2M1328.1 563.4l-10.8 6.3" class="e"/>
<path d="M1417.5 668.2l1.7-2.6-18.8-21.7-1.1 1.7zM1339.4 527.5l-3 .2 10.5 27 1.9-.1z" fill="#8a8aff" stroke="#8a8aff"/>
<path d="M1400.4 643.9l-1.1 1.7M1346.9 554.7l1.9-.1" class="e"/>
<path d="M1317.3 569.7l-2.5 1.7-.5 3.6 2.4-1.6z" fill="#bebaff" stroke="#bebaff"/>
<path d="M1368.8 665l2.8-1.3-3.5-1.3-2.7 1.2z" fill="#5a5ab4" stroke="#5a5ab4"/>
<path d="M1314.8 571.4l2.5-1.7M1371.6 663.7l-2.8 1.3" class="e"/>
<path d="M1344.6 520.6l-3.1 .1-3.9 2.2 3.1-.1z" fill="#b5b2ff" stroke="#b5b2ff"/>
<path d="M1426.1 667.3l1.7-2.7-3.9 2.2-1.7 2.7z" fill="#5a5ab4" stroke="#5a5ab4"/>
<path d="M1341.5 520.7l3.1-.1M1427.8 664.6l-1.7 2.7" class="e"/>
<path d="M1497 631l.4-5.1-2.6-.1-.4 5z" fill="#5a5ab4" stroke="#5a5ab4"/>
<path d="M1413 479.6l-4.7-2.2-1.1 2.3 4.5 2.2z" fill="#eadfff" stroke="#eadfff"/>
<path d="M1430.6 662.9l1.5-2.8-2.4-.3-1.5 2.8z" fill="#5a5ab4" stroke="#5a5ab4"/>
<path d="M1350.7 519l-3.2-.1-.9 2.3 3.2 .1z" fill="#d7cfff" stroke="#d7cfff"/>
<path d="M1432.1 660.1l-1.5 2.8M1429.7 659.8l-1.5 2.8M1347.5 518.9l3.2 .1M1346.6 521.2l3.2 .1" class="e"/>
<path d="M1365.4 663.6l2.7-1.2-3.4-5.9-2.3 1.1zM1316.7 573.4l-2.4 1.6 3.7 5.7 2.1-1.5z" fill="#8a8aff" stroke="#8a8aff"/>
<path d="M1368.1 662.4l-2.7 1.2M1364.7 656.5l-2.3 1.1M1314.3 575l2.4-1.6M1318 580.7l2.1-1.5" class="e"/>
<path d="M1471.1 622.9l.3-4-17.1 9.9-.4 4z" fill="#5a5ab4" stroke="#5a5ab4"/>
<path d="M1406 505.6l-3.6-1.7-17.2 9.9 3.6 1.7z" fill="#acaaff" stroke="#acaaff"/>
<path d="M1471.4 618.9l-.3 4M1402.4 503.9l3.6 1.7" class="e"/>
<path d="M1481.3 625.3l.1-4.7-9.9-5.7-.1 4zM1409.6 496.1l-4.2-2.2 .6 11.7 3.6 2z" fill="#8a8aff" stroke="#8a8aff"/>
<path d="M1499.5 631.7l.4-5.2-2.5-.6-.4 5.1z" fill="#6a6ace" stroke="#6a6ace"/>
<path d="M1413.7 477.1l-4.7-2.2-.7 2.5 4.7 2.2z" fill="#bcb8ff" stroke="#bcb8ff"/>
<path d="M1450.6 647.1l1.2-3.3-17.2 9.9-1.1 3.3z" fill="#5a5ab4" stroke="#5a5ab4"/>
<path d="M1374.6 510.2l-3.4-.7-17.1 9.9 3.4 .7z" fill="#b3b0ff" stroke="#b3b0ff"/>
<path d="M1485.1 630.1l.3-4.7-4.1-.1-.4 4.6z" fill="#5a5ab4" stroke="#5a5ab4"/>
<path d="M1407.4 490.2l-4.3-2-1.9 3.7 4.2 2z" fill="#ebe0ff" stroke="#ebe0ff"/>
<path d="M1494.4 630.8l.4-5-2.5 .4-.4 5z" fill="#5a5ab4" stroke="#5a5ab4"/>
<path d="M1411.7 481.9l-4.5-2.2-1.6 2 4.5 2.2z" fill="#e3d9ff" stroke="#e3d9ff"/>
<path d="M1481.3 625.3l-.4 4.6M1401.2 491.9l4.2 2" class="e"/>
<path d="M1302.3 663.1l-2.8 5.5 4.4-2.5 2.5-5z" fill="#5a5ab4" stroke="#5a5ab4"/>
<path d="M1303.9 666.1l-4.4 2.5M1306.4 661.1l-4.1 2" class="e"/>
<path d="M1501.6 632.8l.5-5.3-2.2-1-.4 5.2z" fill="#8080f0" stroke="#8080f0"/>
<path d="M1413.9 474.8l-4.8-2.3-.1 2.4 4.7 2.2z" fill="#9797ff" stroke="#9797ff"/>
<path d="M1501.6 632.8l.5-5.3M1413.9 474.8l-4.8-2.3" class="e"/>
<path d="M1489.8 632l.4-4.9-4.8-1.7-.3 4.7z" fill="#7676e1" stroke="#7676e1"/>
<path d="M1408.3 485.3l-4.5-2.2-.7 5.1 4.3 2z" fill="#a6a5ff" stroke="#a6a5ff"/>
<path d="M1485.4 625.4l-.3 4.7M1403.1 488.2l4.3 2" class="e"/>
<path d="M1491.9 631.2l.4-5-2.1 .9-.4 4.9z" fill="#5a5ab4" stroke="#5a5ab4"/>
<path d="M1410.1 483.9l-4.5-2.2-1.8 1.4 4.5 2.2z" fill="#bab6ff" stroke="#bab6ff"/>
<path d="M1490.2 627.1l-.4 4.9M1403.8 483.1l4.5 2.2" class="e"/>
<path d="M1340.7 522.8l-3.1 .1-1.2 4.8 3-.2z" fill="#d0c9ff" stroke="#d0c9ff"/>
<path d="M1422.2 669.5l1.7-2.7-4.7-1.2-1.7 2.6z" fill="#5a5ab4" stroke="#5a5ab4"/>
<path d="M1337.6 522.9l3.1-.1M1423.9 666.8l-1.7 2.7M1336.4 527.7l3-.2M1419.2 665.6l-1.7 2.6" class="e"/>
<path d="M1286.7 625.4l-5.8-.8-4.3 2.5 6.3 .9z" fill="#b4b1ff" stroke="#b4b1ff"/>
<path d="M1286.7 625.4l-3.8 2.6M1276.6 627.1l4.3-2.5" class="e"/>
<path d="M1419.2 665.6l1.4-2.8-19.3-20.7-.9 1.8zM1342.5 527.6l-3.1-.1 9.4 27.1 2.1 .1z" fill="#8a8aff" stroke="#8a8aff"/>
<path d="M1401.3 642.1l-.9 1.8M1348.8 554.6l2.1 .1" class="e"/>
<path d="M1399.9 644.6l1.6-3-10.8 6.3-1.6 3z" fill="#5a5ab4" stroke="#5a5ab4"/>
<path d="M1351.4 554.8l-3.4-.2-10.8 6.3 3.4 .1z" fill="#b5b2ff" stroke="#b5b2ff"/>
<path d="M1399.9 644.6l1.6-3M1351.4 554.8l-3.4-.2" class="e"/>
<path d="M1384.9 655.7l2.3-2.2-10.8 6.3-2.3 2.1z" fill="#5a5ab4" stroke="#5a5ab4"/>
<path d="M1333.9 561.3l-3 .8-10.8 6.3 3-.9z" fill="#b5b2ff" stroke="#b5b2ff"/>
<path d="M1471.4 618.9l.1-4-17.1 9.9-.1 4z" fill="#5a5ab4" stroke="#5a5ab4"/>
<path d="M1409.6 507.6l-3.6-2-17.2 9.9 3.6 2z" fill="#aaa8ff" stroke="#aaa8ff"/>
<path d="M1471.5 614.9l-.1 4M1406 505.6l3.6 2" class="e"/>
<path d="M1371.6 663.7l2.5-1.8-3.6-1.2-2.4 1.7z" fill="#5a5ab4" stroke="#5a5ab4"/>
<path d="M1320.1 568.4l-2.8 1.3-.6 3.7 2.6-1.3z" fill="#c3bdff" stroke="#c3bdff"/>
<path d="M1374.1 661.9l-2.5 1.8M1317.3 569.7l2.8-1.3" class="e"/>
<path d="M1481.4 620.6l-.1-4.9-9.9-5.1 .1 4.3zM1413.7 498.7l-4.1-2.6 0 11.5 3.6 2.2z" fill="#8a8aff" stroke="#8a8aff"/>
<path d="M1427.8 664.6l1.5-2.9-3.9 2.2-1.5 2.9z" fill="#5a5ab4" stroke="#5a5ab4"/>
<path d="M1347.9 520.7l-3.3-.1-3.9 2.2 3.3 .1z" fill="#b5b2ff" stroke="#b5b2ff"/>
<path d="M1429.3 661.7l-1.5 2.9M1344.6 520.6l3.3 .1" class="e"/>
<path d="M1432.1 660.1l1.4-3.1-2.5-.3-1.3 3.1z" fill="#5a5ab4" stroke="#5a5ab4"/>
<path d="M1354.1 519.4l-3.4-.4-.9 2.3 3.3 .4z" fill="#dcd3ff" stroke="#dcd3ff"/>
<path d="M1433.5 657l-1.4 3.1M1431 656.7l-1.3 3.1M1350.7 519l3.4 .4M1349.8 521.3l3.3 .4" class="e"/>
<path d="M1378.1 511.1l-3.5-.9-17.1 9.9 3.5 .9z" fill="#b2afff" stroke="#b2afff"/>
<path d="M1451.8 643.8l.9-3.5-17.2 9.9-.9 3.5zM1497.4 625.9l.2-5.3-2.7 0-.1 5.2z" fill="#5a5ab4" stroke="#5a5ab4"/>
<path d="M1417.6 482.1l-4.6-2.5-1.3 2.3 4.6 2.5z" fill="#eadfff" stroke="#eadfff"/>
<path d="M1368.1 662.4l2.4-1.7-3.7-5.7-2.1 1.5zM1319.3 572.1l-2.6 1.3 3.4 5.8 2.3-1z" fill="#8a8aff" stroke="#8a8aff"/>
<path d="M1370.5 660.7l-2.4 1.7M1366.8 655l-2.1 1.5M1316.7 573.4l2.6-1.3M1320.1 579.2l2.3-1" class="e"/>
<path d="M1485.4 625.4l.2-4.9-4.2 .1-.1 4.7z" fill="#5a5ab4" stroke="#5a5ab4"/>
<path d="M1411.7 492.5l-4.3-2.3-2 3.7 4.2 2.2z" fill="#ece1ff" stroke="#ece1ff"/>
<path d="M1481.4 620.6l-.1 4.7M1405.4 493.9l4.2 2.2" class="e"/>
<path d="M1499.9 626.5l.2-5.4-2.5-.5-.2 5.3z" fill="#6c6cd1" stroke="#6c6cd1"/>
<path d="M1418.5 479.7l-4.8-2.6-.7 2.5 4.6 2.5z" fill="#bbb7ff" stroke="#bbb7ff"/>
<path d="M1494.8 625.8l.1-5.2-2.5 .5-.1 5.1z" fill="#5a5ab4" stroke="#5a5ab4"/>
<path d="M1416.3 484.4l-4.6-2.5-1.6 2 4.5 2.4z" fill="#e3d9ff" stroke="#e3d9ff"/>
<path d="M1298 665.5l-2.8 5.6 4.3-2.5 2.8-5.5z" fill="#5a5ab4" stroke="#5a5ab4"/>
<path d="M1299.5 668.6l-4.3 2.5M1302.3 663.1l-4.3 2.4" class="e"/>
<path d="M1490.2 627.1l.1-5.1-4.7-1.5-.2 4.9z" fill="#7777e3" stroke="#7777e3"/>
<path d="M1412.8 487.7l-4.5-2.4-.9 4.9 4.3 2.3z" fill="#a5a4ff" stroke="#a5a4ff"/>
<path d="M1485.6 620.5l-.2 4.9M1407.4 490.2l4.3 2.3" class="e"/>
<path d="M1420.6 662.8l1.3-2.9-19.7-19.7-.9 1.9zM1345.8 528l-3.3-.4 8.4 27.1 2 .3z" fill="#8a8aff" stroke="#8a8aff"/>
<path d="M1402.2 640.2l-.9 1.9M1350.9 554.7l2 .3" class="e"/>
<path d="M1502.1 627.5l.1-5.5-2.1-.9-.2 5.4z" fill="#8181f1" stroke="#8181f1"/>
<path d="M1418.8 477.4l-4.9-2.6-.2 2.3 4.8 2.6z" fill="#9797ff" stroke="#9797ff"/>
<path d="M1502.1 627.5l.1-5.5M1418.8 477.4l-4.9-2.6" class="e"/>
<path d="M1492.3 626.2l.1-5.1-2.1 .9-.1 5.1z" fill="#5a5ab4" stroke="#5a5ab4"/>
<path d="M1414.6 486.3l-4.5-2.4-1.8 1.4 4.5 2.4z" fill="#b8b4ff" stroke="#b8b4ff"/>
<path d="M1490.3 622l-.1 5.1M1408.3 485.3l4.5 2.4" class="e"/>
<path d="M1340.1 665.7l.8 2.9 4.3-2.5 0 0z" fill="#5a5ab4" stroke="#5a5ab4"/>
<path d="M1345.2 666.1l-4.3 2.5" class="e"/>
<path d="M1423.9 666.8l1.5-2.9-4.8-1.1-1.4 2.8z" fill="#5a5ab4" stroke="#5a5ab4"/>
<path d="M1344 522.9l-3.3-.1-1.3 4.7 3.1 .1z" fill="#d4cdff" stroke="#d4cdff"/>
<path d="M1425.4 663.9l-1.5 2.9M1420.6 662.8l-1.4 2.8M1340.7 522.8l3.3 .1M1339.4 527.5l3.1 .1" class="e"/>
<path d="M1282.9 628l-6.3-.9-4.4 2.6 6.5 .9z" fill="#b4b1ff" stroke="#b4b1ff"/>
<path d="M1282.9 628l-4.2 2.6M1272.2 629.7l4.4-2.6" class="e"/>
<path d="M1401.5 641.6l1.3-3.3-10.8 6.2-1.3 3.4z" fill="#5a5ab4" stroke="#5a5ab4"/>
<path d="M1354.9 555.3l-3.5-.5-10.8 6.2 3.5 .6z" fill="#b3b0ff" stroke="#b3b0ff"/>
<path d="M1401.5 641.6l1.3-3.3M1354.9 555.3l-3.5-.5" class="e"/>
<path d="M1471.5 614.9l-.1-4.3-17.1 9.9 .1 4.3z" fill="#5a5ab4" stroke="#5a5ab4"/>
<path d="M1413.2 509.8l-3.6-2.2-17.2 9.9 3.6 2.2z" fill="#a7a5ff" stroke="#a7a5ff"/>
<path d="M1471.4 610.6l.1 4.3M1409.6 507.6l3.6 2.2" class="e"/>
<path d="M1417.9 501.5l-4.2-2.8-.5 11.1 3.6 2.4zM1481.3 615.7l-.4-5-9.8-4.4 .3 4.3z" fill="#8a8aff" stroke="#8a8aff"/>
<path d="M1387.2 653.5l1.9-2.6-10.8 6.2-1.9 2.7z" fill="#5a5ab4" stroke="#5a5ab4"/>
<path d="M1337.2 560.9l-3.3 .4-10.8 6.2 3.2-.4z" fill="#b5b2ff" stroke="#b5b2ff"/>
<path d="M1429.3 661.7l1.3-3.1-3.8 2.2-1.4 3.1z" fill="#5a5ab4" stroke="#5a5ab4"/>
<path d="M1351.3 521.1l-3.4-.4-3.9 2.2 3.4 .4z" fill="#b4b1ff" stroke="#b4b1ff"/>
<path d="M1430.6 658.6l-1.3 3.1M1347.9 520.7l3.4 .4" class="e"/>
<path d="M1381.7 512.3l-3.6-1.2-17.1 9.9 3.5 1.2z" fill="#b0aeff" stroke="#b0aeff"/>
<path d="M1452.7 640.3l.7-3.7-17.1 9.9-.8 3.7z" fill="#5a5ab4" stroke="#5a5ab4"/>
<path d="M1416 495.2l-4.3-2.7-2.1 3.6 4.1 2.6z" fill="#ebe0ff" stroke="#ebe0ff"/>
<path d="M1485.6 620.5l-.2-5-4.1 .2 .1 4.9z" fill="#5a5ab4" stroke="#5a5ab4"/>
<path d="M1409.6 496.1l4.1 2.6M1481.3 615.7l.1 4.9" class="e"/>
<path d="M1374.1 661.9l2.3-2.1-3.8-1.2-2.1 2.1z" fill="#5a5ab4" stroke="#5a5ab4"/>
<path d="M1323.1 567.5l-3 .9-.8 3.7 2.9-.8z" fill="#c8c2ff" stroke="#c8c2ff"/>
<path d="M1376.4 659.8l-2.3 2.1M1320.1 568.4l3-.9" class="e"/>
<path d="M1433.5 657l1.1-3.3-2.5-.2-1.1 3.2z" fill="#5a5ab4" stroke="#5a5ab4"/>
<path d="M1357.5 520.1l-3.4-.7-1 2.3 3.3 .7z" fill="#e1d8ff" stroke="#e1d8ff"/>
<path d="M1434.6 653.7l-1.1 3.3M1432.1 653.5l-1.1 3.2M1354.1 519.4l3.4 .7M1353.1 521.7l3.3 .7" class="e"/>
<path d="M1345.2 666.1l3-.6-5.5-.3-2.6 .5z" fill="#5a5ab4" stroke="#5a5ab4"/>
<path d="M1348.2 665.5l-3 .6M1345.2 666.1l-5.1-.4" class="e"/>
<path d="M1497.6 620.6l-.2-5.5-2.6 .1 .1 5.4z" fill="#5a5ab4" stroke="#5a5ab4"/>
<path d="M1422.3 485l-4.7-2.9-1.3 2.3 4.6 2.8z" fill="#e9deff" stroke="#e9deff"/>
<path d="M1303.1 590l0 0-4.3 2.5 2 2.2z" fill="#8a8aff" stroke="#8a8aff"/>
<path d="M1298.8 592.5l4.3-2.5" class="e"/>
<path d="M1370.5 660.7l2.1-2.1-4-5.4-1.8 1.8zM1322.2 571.3l-2.9 .8 3.1 6.1 2.5-.7z" fill="#8a8aff" stroke="#8a8aff"/>
<path d="M1372.6 658.6l-2.1 2.1M1368.6 653.2l-1.8 1.8M1319.3 572.1l2.9-.8M1322.4 578.2l2.5-.7" class="e"/>
<path d="M1420.9 487.2l-4.6-2.8-1.7 1.9 4.6 2.8z" fill="#e2d8ff" stroke="#e2d8ff"/>
<path d="M1494.9 620.6l-.1-5.4-2.5 .6 .1 5.3z" fill="#5a5ab4" stroke="#5a5ab4"/>
<path d="M1421.9 659.9l1.1-3.2-20.1-18.6-.7 2.1zM1349 528.7l-3.2-.7 7.1 27 2.2 .4z" fill="#8a8aff" stroke="#8a8aff"/>
<path d="M1402.9 638.1l-.7 2.1M1352.9 555l2.2 .4" class="e"/>
<path d="M1423.2 482.6l-4.7-2.9-.9 2.4 4.7 2.9z" fill="#bab6ff" stroke="#bab6ff"/>
<path d="M1500.1 621.1l-.2-5.6-2.5-.4 .2 5.5z" fill="#6e6ed4" stroke="#6e6ed4"/>
<path d="M1364 656.9l2.4-1.6-13.1 7.6-2.4 1.5z" fill="#5a5ab4" stroke="#5a5ab4"/>
<path d="M1364 656.9l-13.1 7.5M1364 656.9l2.4-1.6" class="e"/>
<path d="M1490.3 622l-.1-5.3-4.8-1.2 .2 5z" fill="#7979e5" stroke="#7979e5"/>
<path d="M1417.3 490.5l-4.5-2.8-1.1 4.8 4.3 2.7z" fill="#a4a3ff" stroke="#a4a3ff"/>
<path d="M1485.4 615.5l.2 5M1411.7 492.5l4.3 2.7" class="e"/>
<path d="M1471.4 610.6l-.3-4.3-17.2 9.9 .4 4.3z" fill="#5a5ab4" stroke="#5a5ab4"/>
<path d="M1416.8 512.2l-3.6-2.4-17.2 9.9 3.6 2.4z" fill="#a3a3ff" stroke="#a3a3ff"/>
<path d="M1471.1 606.3l.3 4.3M1413.2 509.8l3.6 2.4" class="e"/>
<path d="M1492.4 621.1l-.1-5.3-2.1 .9 .1 5.3z" fill="#5a5ab4" stroke="#5a5ab4"/>
<path d="M1419.2 489.1l-4.6-2.8-1.8 1.4 4.5 2.8z" fill="#b6b2ff" stroke="#b6b2ff"/>
<path d="M1490.2 616.7l.1 5.3M1412.8 487.7l4.5 2.8" class="e"/>
<path d="M1502.2 622l-.1-5.7-2.2-.8 .2 5.6z" fill="#8282f2" stroke="#8282f2"/>
<path d="M1423.6 480.4l-4.8-3-.3 2.3 4.7 2.9z" fill="#9696ff" stroke="#9696ff"/>
<path d="M1502.2 622l-.1-5.7M1423.6 480.4l-4.8-3" class="e"/>
<path d="M1480.9 610.7l-.6-5.2-9.7-3.6 .5 4.4zM1422 504.6l-4.1-3.1-1.1 10.7 3.5 2.7z" fill="#8a8aff" stroke="#8a8aff"/>
<path d="M1425.4 663.9l1.4-3.1-4.9-.9-1.3 2.9z" fill="#5a5ab4" stroke="#5a5ab4"/>
<path d="M1347.4 523.3l-3.4-.4-1.5 4.7 3.3 .4z" fill="#d9d0ff" stroke="#d9d0ff"/>
<path d="M1426.8 660.8l-1.4 3.1M1421.9 659.9l-1.3 2.9M1344 522.9l3.4 .4M1342.5 527.6l3.3 .4" class="e"/>
<path d="M1335.1 666l1.4 5.1 4.4-2.5-.8-2.9z" fill="#5a5ab4" stroke="#5a5ab4"/>
<path d="M1340.9 668.6l-4.4 2.5" class="e"/>
<path d="M1305.3 588l-2.2 2-2.3 4.7 1.9-1.7z" fill="#beb9ff" stroke="#beb9ff"/>
<path d="M1303.1 590l2.2-2M1303.1 590l-2.3 4.7" class="e"/>
<path d="M1402.8 638.3l.9-3.7-10.8 6.2-.9 3.7z" fill="#5a5ab4" stroke="#5a5ab4"/>
<path d="M1358.6 556.4l-3.7-1.1-10.8 6.3 3.7 1z" fill="#b1afff" stroke="#b1afff"/>
<path d="M1402.8 638.3l.9-3.7M1358.6 556.4l-3.7-1.1" class="e"/>
<path d="M1323.5 577.8l-2.7 1.1-13.1 7.5 2.7-1z" fill="#b5b2ff" stroke="#b5b2ff"/>
<path d="M1323.5 577.8l-2.7 1.1M1320.8 578.9l-13.1 7.5" class="e"/>
<path d="M1420.3 498.1l-4.3-2.9-2.3 3.5 4.2 2.8z" fill="#e8deff" stroke="#e8deff"/>
<path d="M1485.4 615.5l-.3-5.2-4.2 .4 .4 5z" fill="#5a5ab6" stroke="#5a5ab6"/>
<path d="M1413.7 498.7l4.2 2.8M1480.9 610.7l.4 5" class="e"/>
<path d="M1389.1 650.9l1.6-3-10.8 6.2-1.6 3z" fill="#5a5ab4" stroke="#5a5ab4"/>
<path d="M1340.6 561l-3.4-.1-10.9 6.2 3.4 .1z" fill="#b5b2ff" stroke="#b5b2ff"/>
<path d="M1453.4 636.6l.5-3.8-17.1 9.9-.5 3.8z" fill="#5a5ab4" stroke="#5a5ab4"/>
<path d="M1385.2 513.8l-3.5-1.5-17.2 9.9 3.6 1.5z" fill="#aeacff" stroke="#aeacff"/>
<path d="M1352.4 529.5l-3.4-.8 6.1 26.7 2.1 .5zM1423 656.7l.9-3.3-20.5-17.4-.5 2.1z" fill="#8a8aff" stroke="#8a8aff"/>
<path d="M1355.1 555.4l2.1 .5M1403.4 636l-.5 2.1" class="e"/>
<path d="M1430.6 658.6l1.2-3.3-3.9 2.2-1.1 3.3z" fill="#5a5ab4" stroke="#5a5ab4"/>
<path d="M1354.7 521.7l-3.4-.6-3.9 2.2 3.4 .7z" fill="#b3b0ff" stroke="#b3b0ff"/>
<path d="M1431.8 655.3l-1.2 3.3M1351.3 521.1l3.4 .6" class="e"/>
<path d="M1361 521l-3.5-.9-1.1 2.3 3.4 .9z" fill="#e6dcff" stroke="#e6dcff"/>
<path d="M1434.6 653.7l.9-3.5-2.5-.1-.9 3.4z" fill="#5a5ab4" stroke="#5a5ab4"/>
<path d="M1357.5 520.1l3.5 .9M1435.5 650.2l-.9 3.5M1356.4 522.4l3.4 .9M1433 650.1l-.9 3.4" class="e"/>
<path d="M1497.4 615.1l-.4-5.5-2.6 .1 .4 5.5z" fill="#5b5bb7" stroke="#5b5bb7"/>
<path d="M1426.9 488.1l-4.6-3.1-1.4 2.2 4.5 3.1z" fill="#e7dcff" stroke="#e7dcff"/>
<path d="M1348.2 665.5l2.7-1.1-5.9-.1-2.3 .9z" fill="#5a5ab4" stroke="#5a5ab4"/>
<path d="M1350.9 664.4l-2.7 1.1" class="e"/>
<path d="M1494.8 615.2l-.4-5.5-2.5 .6 .4 5.5z" fill="#5a5ab4" stroke="#5a5ab4"/>
<path d="M1425.4 490.3l-4.5-3.1-1.7 1.9 4.5 3z" fill="#dfd5ff" stroke="#dfd5ff"/>
<path d="M1471.1 606.3l-.5-4.4-17.2 9.9 .5 4.4z" fill="#5a5ab4" stroke="#5a5ab4"/>
<path d="M1420.3 514.9l-3.5-2.7-17.2 9.9 3.6 2.7z" fill="#a09fff" stroke="#a09fff"/>
<path d="M1470.6 601.9l.5 4.4M1416.8 512.2l3.5 2.7" class="e"/>
<path d="M1372.6 658.6l1.8-2.4-4.2-5.1-1.6 2.1zM1325.3 571l-3.1 .3 2.7 6.2 2.6-.3z" fill="#8a8aff" stroke="#8a8aff"/>
<path d="M1370.2 651.1l-1.6 2.1M1324.9 577.5l2.6-.3" class="e"/>
<path d="M1376.4 659.8l1.9-2.7-3.9-.9-1.8 2.4z" fill="#5a5ab4" stroke="#5a5ab4"/>
<path d="M1326.3 567.1l-3.2 .4-.9 3.8 3.1-.3z" fill="#cec7ff" stroke="#cec7ff"/>
<path d="M1300.8 594.7l-2-2.2-4.4 2.5 3.6 4z" fill="#8a8aff" stroke="#8a8aff"/>
<path d="M1378.3 657.1l-1.9 2.7M1374.4 656.2l-1.8 2.4M1323.1 567.5l3.2-.4M1322.2 571.3l3.1-.3" class="e"/>
<path d="M1499.9 615.5l-.4-5.7-2.5-.2 .4 5.5z" fill="#7070d8" stroke="#7070d8"/>
<path d="M1427.9 485.8l-4.7-3.2-.9 2.4 4.6 3.1z" fill="#b9b5ff" stroke="#b9b5ff"/>
<path d="M1294.4 595l4.4-2.5" class="e"/>
<path d="M1480.3 605.5l-.8-5.2-9.7-2.9 .8 4.5zM1426.1 507.9l-4.1-3.3-1.7 10.3 3.5 2.8z" fill="#8a8aff" stroke="#8a8aff"/>
<path d="M1490.2 616.7l-.4-5.4-4.7-1 .3 5.2z" fill="#7a7ae7" stroke="#7a7ae7"/>
<path d="M1421.8 493.5l-4.5-3-1.3 4.7 4.3 2.9z" fill="#a3a3ff" stroke="#a3a3ff"/>
<path d="M1485.1 610.3l.3 5.2M1416 495.2l4.3 2.9" class="e"/>
<path d="M1340.1 665.7l2.6-.5-5.3 .3-2.3 .5z" fill="#5a5ab4" stroke="#5a5ab4"/>
<path d="M1340.1 665.7l-5 .3" class="e"/>
<path d="M1366.4 655.3l2.2-2-13.1 7.6-2.2 2z" fill="#5a5ab4" stroke="#5a5ab4"/>
<path d="M1366.4 655.3l2.2-2" class="e"/>
<path d="M1492.3 615.8l-.4-5.5-2.1 1 .4 5.4z" fill="#5a5ab4" stroke="#5a5ab4"/>
<path d="M1423.7 492.1l-4.5-3-1.9 1.4 4.5 3z" fill="#b2afff" stroke="#b2afff"/>
<path d="M1489.8 611.3l.4 5.4M1417.3 490.5l4.5 3" class="e"/>
<path d="M1428.4 483.7l-4.8-3.3-.4 2.2 4.7 3.2z" fill="#9696ff" stroke="#9696ff"/>
<path d="M1502.1 616.3l-.5-5.9-2.1-.6 .4 5.7z" fill="#8282f4" stroke="#8282f4"/>
<path d="M1428.4 483.7l-4.8-3.3M1502.1 616.3l-.5-5.9" class="e"/>
<path d="M1426.8 660.8l1.1-3.3-4.9-.8-1.1 3.2z" fill="#5a5ab4" stroke="#5a5ab4"/>
<path d="M1350.8 524l-3.4-.7-1.6 4.7 3.2 .7z" fill="#ddd4ff" stroke="#ddd4ff"/>
<path d="M1427.9 657.5l-1.1 3.3M1423 656.7l-1.1 3.2M1347.4 523.3l3.4 .7M1345.8 528l3.2 .7" class="e"/>
<path d="M1330.3 666.8l1.9 6.8 4.3-2.5-1.4-5.1z" fill="#5a5ab4" stroke="#5a5ab4"/>
<path d="M1336.5 671.1l-4.3 2.5" class="e"/>
<path d="M1403.7 634.6l.6-4-10.8 6.2-.6 4z" fill="#5a5ab4" stroke="#5a5ab4"/>
<path d="M1362.3 557.9l-3.7-1.5-10.8 6.2 3.7 1.5z" fill="#aeacff" stroke="#aeacff"/>
<path d="M1403.7 634.6l.6-4M1362.3 557.9l-3.7-1.5" class="e"/>
<path d="M1307.7 586.4l-2.4 1.6-2.6 5 2.1-1.4z" fill="#c1bcff" stroke="#c1bcff"/>
<path d="M1305.3 588l2.4-1.6" class="e"/>
<path d="M1355.8 530.7l-3.4-1.2 4.8 26.4 2.2 .8zM1423.9 653.4l.7-3.5-20.7-16.2-.5 2.3z" fill="#8a8aff" stroke="#8a8aff"/>
<path d="M1357.2 555.9l2.2 .8M1403.9 633.7l-.5 2.3" class="e"/>
<path d="M1485.1 610.3l-.6-5.2-4.2 .4 .6 5.2z" fill="#5e5ebb" stroke="#5e5ebb"/>
<path d="M1424.5 501.2l-4.2-3.1-2.4 3.4 4.1 3.1z" fill="#e4daff" stroke="#e4daff"/>
<path d="M1480.3 605.5l.6 5.2M1417.9 501.5l4.1 3.1" class="e"/>
<path d="M1470.6 601.9l-.8-4.5-17.1 9.9 .7 4.5z" fill="#5a5ab4" stroke="#5a5ab4"/>
<path d="M1423.8 517.7l-3.5-2.8-17.1 9.9 3.5 2.8z" fill="#9c9cff" stroke="#9c9cff"/>
<path d="M1469.8 597.4l.8 4.5M1420.3 514.9l3.5 2.8" class="e"/>
<path d="M1302.7 593l-1.9 1.7-2.8 4.3 1.7-1.6z" fill="#bdb9ff" stroke="#bdb9ff"/>
<path d="M1300.8 594.7l-2.8 4.3" class="e"/>
<path d="M1479.5 600.3l-1.1-5.3-9.5-2.2 .9 4.6zM1430.2 511.5l-4.1-3.6-2.3 9.8 3.5 3.1z" fill="#8a8aff" stroke="#8a8aff"/>
<path d="M1453.9 632.8l.4-4-17.2 9.9-.3 4z" fill="#5a5ab4" stroke="#5a5ab4"/>
<path d="M1388.8 515.5l-3.6-1.7-17.1 9.9 3.6 1.7z" fill="#acaaff" stroke="#acaaff"/>
<path d="M1497 609.6l-.6-5.7-2.7 .2 .7 5.6z" fill="#5f5fbd" stroke="#5f5fbd"/>
<path d="M1431.5 491.5l-4.6-3.4-1.5 2.2 4.6 3.4z" fill="#e3d9ff" stroke="#e3d9ff"/>
<path d="M1326.5 577.2l-3 .6-13.1 7.6 3-.6z" fill="#b6b2ff" stroke="#b6b2ff"/>
<path d="M1326.5 577.2l-3 .6" class="e"/>
<path d="M1364.5 522.2l-3.5-1.2-1.2 2.3 3.5 1.2z" fill="#eadfff" stroke="#eadfff"/>
<path d="M1435.5 650.2l.8-3.7-2.6 0-.7 3.6z" fill="#5a5ab4" stroke="#5a5ab4"/>
<path d="M1361 521l3.5 1.2M1359.8 523.3l3.5 1.2M1436.3 646.5l-.8 3.7M1433.7 646.5l-.7 3.6" class="e"/>
<path d="M1494.4 609.7l-.7-5.6-2.4 .7 .6 5.5z" fill="#5a5ab4" stroke="#5a5ab4"/>
<path d="M1430 493.7l-4.6-3.4-1.7 1.8 4.5 3.4z" fill="#dad1ff" stroke="#dad1ff"/>
<path d="M1358.2 522.7l-3.5-1-3.9 2.3 3.5 .9z" fill="#b2afff" stroke="#b2afff"/>
<path d="M1431.8 655.3l.9-3.5-3.9 2.3-.9 3.4z" fill="#5a5ab4" stroke="#5a5ab4"/>
<path d="M1354.7 521.7l3.5 1M1432.7 651.8l-.9 3.5" class="e"/>
<path d="M1390.7 647.9l1.3-3.4-10.8 6.3-1.3 3.3z" fill="#5a5ab4" stroke="#5a5ab4"/>
<path d="M1344.1 561.6l-3.5-.6-10.9 6.2 3.6 .6z" fill="#b3b0ff" stroke="#b3b0ff"/>
<path d="M1277.1 677.5l-2.8 5.7 20.9-12.1 2.8-5.6z" fill="#5a5ab4" stroke="#5a5ab4"/>
<path d="M1295.2 671.1l-20.9 12.1M1298 665.5l-20.9 12" class="e"/>
<path d="M1499.5 609.8l-.7-5.8-2.4-.1 .6 5.7z" fill="#7272db" stroke="#7272db"/>
<path d="M1432.6 489.3l-4.7-3.5-1 2.3 4.6 3.4z" fill="#b7b3ff" stroke="#b7b3ff"/>
<path d="M1489.8 611.3l-.7-5.6-4.6-.6 .6 5.2z" fill="#7c7cea" stroke="#7c7cea"/>
<path d="M1426.3 496.9l-4.5-3.4-1.5 4.6 4.2 3.1z" fill="#a2a2ff" stroke="#a2a2ff"/>
<path d="M1484.5 605.1l.6 5.2M1420.3 498.1l4.2 3.1" class="e"/>
<path d="M1374.4 656.2l1.6-2.9-4.5-4.7-1.3 2.5zM1328.5 571.1l-3.2-.1 2.2 6.2 2.8 .1z" fill="#8a8aff" stroke="#8a8aff"/>
<path d="M1371.5 648.6l-1.3 2.5M1327.5 577.2l2.8 .1" class="e"/>
<path d="M1350.9 664.4l2.4-1.5-6.1 0-2.2 1.4zM1342.7 665.2l2.3-.9-5.5 .4-2.1 .8z" fill="#5a5ab4" stroke="#5a5ab4"/>
<path d="M1298 599l-3.6-4-4.3 2.5 4.8 5.3z" fill="#8a8aff" stroke="#8a8aff"/>
<path d="M1290.1 597.5l4.3-2.5" class="e"/>
<path d="M1491.9 610.3l-.6-5.5-2.2 .9 .7 5.6z" fill="#5a5ab4" stroke="#5a5ab4"/>
<path d="M1428.2 495.5l-4.5-3.4-1.9 1.4 4.5 3.4z" fill="#aeacff" stroke="#aeacff"/>
<path d="M1489.1 605.7l.7 5.6M1421.8 493.5l4.5 3.4" class="e"/>
<path d="M1378.3 657.1l1.6-3-3.9-.8-1.6 2.9z" fill="#5a5ab4" stroke="#5a5ab4"/>
<path d="M1329.7 567.2l-3.4-.1-1 3.9 3.2 .1z" fill="#d5cdff" stroke="#d5cdff"/>
<path d="M1379.9 654.1l-1.6 3M1376 653.3l-1.6 2.9M1326.3 567.1l3.4 .1M1325.3 571l3.2 .1" class="e"/>
<path d="M1368.6 653.3l1.3-1.8-13 7.5-1.4 1.9z" fill="#5a5ab4" stroke="#5a5ab4"/>
<path d="M1368.6 653.3l1.3-1.8" class="e"/>
<path d="M1278.7 630.6l-6.5-.9-20.9 12 6.5 .9z" fill="#b4b1ff" stroke="#b4b1ff"/>
<path d="M1278.7 630.6l-20.9 12M1251.3 641.7l20.9-12" class="e"/>
<path d="M1335.1 666l2.3-.5-5 .9-2.1 .4z" fill="#5a5ab4" stroke="#5a5ab4"/>
<path d="M1335.1 666l-4.8 .8M1332.4 666.4l-2.1 .4" class="e"/>
<path d="M1469.8 597.4l-.9-4.6-17.1 9.9 .9 4.6z" fill="#5a5ab4" stroke="#5a5ab4"/>
<path d="M1427.3 520.8l-3.5-3.1-17.1 9.9 3.5 3.1z" fill="#9797ff" stroke="#9797ff"/>
<path d="M1468.9 592.8l.9 4.6M1423.8 517.7l3.5 3.1" class="e"/>
<path d="M1434.1 515.3l-3.9-3.8-2.9 9.3 3.4 3.3zM1478.4 595l-1.3-5.3-9.3-1.5 1.1 4.6z" fill="#8a8aff" stroke="#8a8aff"/>
<path d="M1501.6 610.4l-.7-5.9-2.1-.5 .7 5.8z" fill="#8383f5" stroke="#8383f5"/>
<path d="M1433.2 487.3l-4.8-3.6-.5 2.1 4.7 3.5z" fill="#9595ff" stroke="#9595ff"/>
<path d="M1501.6 610.4l-.7-5.9M1433.2 487.3l-4.8-3.6" class="e"/>
<path d="M1424.6 649.9l.5-3.7-20.9-14.8-.3 2.3zM1359.2 532.1l-3.4-1.4 3.6 26 2.2 .9z" fill="#8a8aff" stroke="#8a8aff"/>
<path d="M1404.2 631.4l-.3 2.3M1359.4 556.7l2.2 .9" class="e"/>
<path d="M1484.5 605.1l-.9-5.4-4.1 .6 .8 5.2z" fill="#6161c1" stroke="#6161c1"/>
<path d="M1428.7 504.7l-4.2-3.5-2.5 3.4 4.1 3.3z" fill="#dfd6ff" stroke="#dfd6ff"/>
<path d="M1479.5 600.3l.8 5.2M1422 504.6l4.1 3.3" class="e"/>
<path d="M1354.3 524.9l-3.5-.9-1.8 4.7 3.4 .8z" fill="#e1d7ff" stroke="#e1d7ff"/>
<path d="M1427.9 657.5l.9-3.4-4.9-.7-.9 3.3z" fill="#5a5ab4" stroke="#5a5ab4"/>
<path d="M1350.8 524l3.5 .9M1349 528.7l3.4 .8M1428.8 654.1l-.9 3.4M1423.9 653.4l-.9 3.3" class="e"/>
<path d="M1404.3 630.6l.2-4.2-10.8 6.2-.2 4.2z" fill="#5a5ab4" stroke="#5a5ab4"/>
<path d="M1366.1 559.9l-3.8-2-10.8 6.2 3.8 2z" fill="#aaa9ff" stroke="#aaa9ff"/>
<path d="M1404.3 630.6l.2-4.2M1366.1 559.9l-3.8-2" class="e"/>
<path d="M1454.3 628.8l.1-4-17.2 9.9-.1 4z" fill="#5a5ab4" stroke="#5a5ab4"/>
<path d="M1392.4 517.5l-3.6-2-17.1 9.9 3.6 2z" fill="#aaa8ff" stroke="#aaa8ff"/>
<path d="M1325.6 668.2l2.2 7.9 4.4-2.5-1.9-6.8z" fill="#5a5ab4" stroke="#5a5ab4"/>
<path d="M1332.2 673.6l-4.4 2.5M1330.3 666.8l-4.7 1.4" class="e"/>
<path d="M1304.8 591.6l-2.1 1.4-3 4.4 2-1.2z" fill="#c0bbff" stroke="#c0bbff"/>
<path d="M1310.4 585.4l-2.7 1-2.9 5.2 2.4-.9z" fill="#c4bfff" stroke="#c4bfff"/>
<path d="M1496.4 603.9l-1-5.8-2.6 .3 .9 5.7z" fill="#6262c2" stroke="#6262c2"/>
<path d="M1436.1 495.3l-4.6-3.8-1.5 2.2 4.4 3.6z" fill="#ded5ff" stroke="#ded5ff"/>
<path d="M1493.7 604.1l-.9-5.7-2.5 .7 1 5.7z" fill="#5a5ab4" stroke="#5a5ab4"/>
<path d="M1434.4 497.3l-4.4-3.6-1.8 1.8 4.4 3.6z" fill="#d4ccff" stroke="#d4ccff"/>
<path d="M1489.1 605.7l-.9-5.6-4.6-.4 .9 5.4z" fill="#7d7dec" stroke="#7d7dec"/>
<path d="M1430.7 500.5l-4.4-3.6-1.8 4.3 4.2 3.5z" fill="#a1a0ff" stroke="#a1a0ff"/>
<path d="M1483.6 599.7l.9 5.4M1424.5 501.2l4.2 3.5" class="e"/>
<path d="M1299.7 597.4l-1.7 1.6-3.1 3.8 1.5-1.4z" fill="#bcb7ff" stroke="#bcb7ff"/>
<path d="M1298 599l-3.1 3.8" class="e"/>
<path d="M1328.8 577.2l-2.3 0-13.1 7.6 2.3-.1z" fill="#b5b2ff" stroke="#b5b2ff"/>
<path d="M1436.3 646.5l.5-3.8-2.5 0-.6 3.8z" fill="#5a5ab4" stroke="#5a5ab4"/>
<path d="M1368.1 523.7l-3.6-1.5-1.2 2.3 3.5 1.4z" fill="#ede2ff" stroke="#ede2ff"/>
<path d="M1328.8 577.2l-2.3 0" class="e"/>
<path d="M1468.9 592.8l-1.1-4.6-17.2 9.9 1.2 4.6z" fill="#5a5ab4" stroke="#5a5ab4"/>
<path d="M1430.7 524.1l-3.4-3.3-17.1 9.9 3.4 3.3z" fill="#9393ff" stroke="#9393ff"/>
<path d="M1436.8 642.7l-.5 3.8M1364.5 522.2l3.6 1.5" class="e"/>
<path d="M1477.1 589.7l-1.6-5.4-9.1-.7 1.4 4.6zM1438 519.3l-3.9-4-3.4 8.8 3.4 3.5z" fill="#8a8aff" stroke="#8a8aff"/>
<path d="M1467.8 588.2l1.1 4.6M1427.3 520.8l3.4 3.3" class="e"/>
<path d="M1437.3 493.1l-4.7-3.8-1.1 2.2 4.6 3.8z" fill="#b4b1ff" stroke="#b4b1ff"/>
<path d="M1498.8 604l-.9-5.9-2.5 0 1 5.8z" fill="#7575df" stroke="#7575df"/>
<path d="M1361.7 523.9l-3.5-1.2-3.9 2.2 3.5 1.2z" fill="#b0aeff" stroke="#b0aeff"/>
<path d="M1432.7 651.8l.7-3.6-3.9 2.2-.7 3.7z" fill="#5a5ab4" stroke="#5a5ab4"/>
<path d="M1358.2 522.7l3.5 1.2M1433.4 648.2l-.7 3.6" class="e"/>
<path d="M1491.3 604.8l-1-5.7-2.1 1 .9 5.6z" fill="#5a5ab4" stroke="#5a5ab4"/>
<path d="M1432.6 499.1l-4.4-3.6-1.9 1.4 4.4 3.6z" fill="#aaa8ff" stroke="#aaa8ff"/>
<path d="M1488.2 600.1l.9 5.6M1426.3 496.9l4.4 3.6" class="e"/>
<path d="M1392 644.5l.9-3.7-10.8 6.3-.9 3.7z" fill="#5a5ab4" stroke="#5a5ab4"/>
<path d="M1347.8 562.6l-3.7-1-10.8 6.2 3.6 1.1z" fill="#b1afff" stroke="#b1afff"/>
<path d="M1345 664.3l2.2-1.4-5.8 .6-1.9 1.2z" fill="#5a5ab4" stroke="#5a5ab4"/>
<path d="M1376 653.3l1.2-3.2-4.6-4.2-1.1 2.7zM1331.8 571.6l-3.3-.5 1.8 6.2 2.9 .4z" fill="#8a8aff" stroke="#8a8aff"/>
<path d="M1372.6 645.9l-1.1 2.7M1330.3 577.3l2.9 .4" class="e"/>
<path d="M1369.9 651.5l1.2-2-13.1 7.5-1.1 2z" fill="#5a5ab4" stroke="#5a5ab4"/>
<path d="M1369.9 651.5l1.2-2" class="e"/>
<path d="M1362.6 533.7l-3.4-1.6 2.4 25.5 2.2 1zM1425.1 646.2l.3-3.8-21-13.5-.2 2.5z" fill="#8a8aff" stroke="#8a8aff"/>
<path d="M1361.6 557.6l2.2 1M1404.4 628.9l-.2 2.5" class="e"/>
<path d="M1337.4 665.5l2.1-.8-5.2 .9-1.9 .8zM1353.3 662.9l2.2-2-6.4 .3-1.9 1.7z" fill="#5a5ab4" stroke="#5a5ab4"/>
<path d="M1355.5 660.9l-6.4 .3" class="e"/>
<path d="M1483.6 599.7l-1.1-5.4-4.1 .7 1.1 5.3z" fill="#6565c7" stroke="#6565c7"/>
<path d="M1432.9 508.4l-4.2-3.7-2.6 3.2 4.1 3.6z" fill="#d9d0ff" stroke="#d9d0ff"/>
<path d="M1478.4 595l1.1 5.3M1426.1 507.9l4.1 3.6" class="e"/>
<path d="M1433.7 646.5l.6-3.8-.3 1.6-.6 3.9z" fill="#5a5ab4" stroke="#5a5ab4"/>
<path d="M1366.8 525.9l-3.5-1.4-1.6-.6 3.5 1.4z" fill="#7c7cea" stroke="#7c7cea"/>
<path d="M1434.3 642.7l-.6 3.8M1433.7 646.5l-.3 1.7M1363.3 524.5l3.5 1.4M1363.3 524.5l-1.6-.6" class="e"/>
<path d="M1294.9 602.8l-4.8-5.3-4.4 2.6 5.6 6.2z" fill="#8a8aff" stroke="#8a8aff"/>
<path d="M1285.7 600.1l4.4-2.6" class="e"/>
<path d="M1500.9 604.5l-1-6.1-2-.3 .9 5.9z" fill="#8484f6" stroke="#8484f6"/>
<path d="M1438 491.1l-4.8-3.8-.6 2 4.7 3.8z" fill="#9595ff" stroke="#9595ff"/>
<path d="M1500.9 604.5l-1-6.1M1438 491.1l-4.8-3.8" class="e"/>
<path d="M1379.9 654.1l1.3-3.3-4-.7-1.2 3.2z" fill="#5a5ab4" stroke="#5a5ab4"/>
<path d="M1333.3 567.8l-3.6-.6-1.2 3.9 3.3 .5z" fill="#dcd3ff" stroke="#dcd3ff"/>
<path d="M1381.2 650.8l-1.3 3.3M1377.2 650.1l-1.2 3.2M1329.7 567.2l3.6 .6M1328.5 571.1l3.3 .5" class="e"/>
<path d="M1475.5 584.3l-1.7-5.4-8.9 0 1.5 4.7zM1441.8 523.6l-3.8-4.3-3.9 8.3 3.3 3.6z" fill="#8a8aff" stroke="#8a8aff"/>
<path d="M1467.8 588.2l-1.4-4.6-17.1 9.9 1.3 4.6z" fill="#5a5ab4" stroke="#5a5ab4"/>
<path d="M1434.1 527.6l-3.4-3.5-17.1 9.9 3.3 3.5z" fill="#8e8eff" stroke="#8e8eff"/>
<path d="M1466.4 583.6l1.4 4.6M1430.7 524.1l3.4 3.5" class="e"/>
<path d="M1404.5 626.4l-.2-4.5-10.8 6.3 .2 4.4z" fill="#5a5ab4" stroke="#5a5ab4"/>
<path d="M1369.8 562.2l-3.7-2.3-10.8 6.2 3.7 2.4z" fill="#a6a5ff" stroke="#a6a5ff"/>
<path d="M1404.5 626.4l-.2-4.5M1369.8 562.2l-3.7-2.3" class="e"/>
<path d="M1357.8 526.1l-3.5-1.2-1.9 4.6 3.4 1.2z" fill="#e4daff" stroke="#e4daff"/>
<path d="M1428.8 654.1l.7-3.7-4.9-.5-.7 3.5z" fill="#5a5ab4" stroke="#5a5ab4"/>
<path d="M1354.3 524.9l3.5 1.2M1352.4 529.5l3.4 1.2M1429.5 650.4l-.7 3.7M1424.6 649.9l-.7 3.5" class="e"/>
<path d="M1454.4 624.8l-.1-4.3-17.2 9.9 .1 4.3z" fill="#5a5ab4" stroke="#5a5ab4"/>
<path d="M1396 519.7l-3.6-2.2-17.1 9.9 3.6 2.2z" fill="#a7a5ff" stroke="#a7a5ff"/>
<path d="M1495.4 598.1l-1.2-5.9-2.6 .4 1.2 5.8z" fill="#6666c8" stroke="#6666c8"/>
<path d="M1440.5 499.2l-4.4-3.9-1.7 2 4.5 3.9z" fill="#d7cfff" stroke="#d7cfff"/>
<path d="M1492.8 598.4l-1.2-5.8-2.4 .8 1.1 5.7z" fill="#5a5ab5" stroke="#5a5ab5"/>
<path d="M1438.9 501.2l-4.5-3.9-1.8 1.8 4.4 3.9z" fill="#cdc6ff" stroke="#cdc6ff"/>
<path d="M1488.2 600.1l-1.1-5.7-4.6-.1 1.1 5.4z" fill="#7f7fee" stroke="#7f7fee"/>
<path d="M1435 504.3l-4.3-3.8-2 4.2 4.2 3.7z" fill="#9f9fff" stroke="#9f9fff"/>
<path d="M1482.5 594.3l1.1 5.4M1428.7 504.7l4.2 3.7" class="e"/>
<path d="M1307.2 590.7l-2.4 .9-3.1 4.6 2.1-.8z" fill="#c2bdff" stroke="#c2bdff"/>
<path d="M1331.2 577.4l-2.4-.2-13.1 7.5 2.5 .2z" fill="#b4b1ff" stroke="#b4b1ff"/>
<path d="M1331.2 577.4l-2.4-.2" class="e"/>
<path d="M1497.9 598.1l-1.3-6-2.4 .1 1.2 5.9z" fill="#7777e2" stroke="#7777e2"/>
<path d="M1441.9 497.2l-4.6-4.1-1.2 2.2 4.4 3.9z" fill="#b2afff" stroke="#b2afff"/>
<path d="M1321.1 670l2.3 8.6 4.4-2.5-2.2-7.9z" fill="#5a5ab4" stroke="#5a5ab4"/>
<path d="M1327.8 676.1l-4.4 2.5M1325.6 668.2l-4.5 1.8" class="e"/>
<path d="M1301.7 596.2l-2 1.2-3.3 4 1.8-1z" fill="#beb9ff" stroke="#beb9ff"/>
<path d="M1473.8 578.9l-2-5.4-8.6 .8 1.7 4.6zM1445.5 528l-3.7-4.4-4.4 7.6 3.1 3.8z" fill="#8a8aff" stroke="#8a8aff"/>
<path d="M1371.7 525.4l-3.6-1.7-1.3 2.2 3.5 1.7z" fill="#efe4ff" stroke="#efe4ff"/>
<path d="M1436.8 642.7l.3-4-2.5 .1-.3 3.9z" fill="#5a5ab4" stroke="#5a5ab4"/>
<path d="M1368.1 523.7l3.6 1.7M1437.1 638.7l-.3 4" class="e"/>
<path d="M1313.4 584.8l-3 .6-3.2 5.3 2.6-.6z" fill="#c9c3ff" stroke="#c9c3ff"/>
<path d="M1313.4 584.8l-3.6 5.3" class="e"/>
<path d="M1466.4 583.6l-1.5-4.7-17.1 9.9 1.5 4.7z" fill="#5a5ab4" stroke="#5a5ab4"/>
<path d="M1437.4 531.2l-3.3-3.6-17.2 9.9 3.3 3.6z" fill="#8989fe" stroke="#8989fe"/>
<path d="M1464.9 578.9l1.5 4.7M1434.1 527.6l3.3 3.6" class="e"/>
<path d="M1490.3 599.1l-1.1-5.7-2.1 1 1.1 5.7z" fill="#5a5ab4" stroke="#5a5ab4"/>
<path d="M1437 503l-4.4-3.9-1.9 1.4 4.3 3.8z" fill="#a5a4ff" stroke="#a5a4ff"/>
<path d="M1487.1 594.4l1.1 5.7M1430.7 500.5l4.3 3.8" class="e"/>
<path d="M1425.4 642.4l.1-3.9-21-12.1-.1 2.5zM1366.1 535.6l-3.5-1.9 1.2 24.9 2.3 1.3z" fill="#8a8aff" stroke="#8a8aff"/>
<path d="M1404.5 626.4l-.1 2.5M1363.8 558.6l2.3 1.3" class="e"/>
<path d="M1482.5 594.3l-1.4-5.5-4 .9 1.3 5.3z" fill="#6969cc" stroke="#6969cc"/>
<path d="M1437 512.3l-4.1-3.9-2.7 3.1 3.9 3.8z" fill="#d1caff" stroke="#d1caff"/>
<path d="M1477.1 589.7l1.3 5.3M1430.2 511.5l3.9 3.8" class="e"/>
<path d="M1371.1 649.5l1-2.3-13.1 7.5-1 2.3z" fill="#5a5ab4" stroke="#5a5ab4"/>
<path d="M1371.1 649.5l1-2.3" class="e"/>
<path d="M1433.4 648.2l.6-3.9-3.9 2.3-.6 3.8z" fill="#5a5ab4" stroke="#5a5ab4"/>
<path d="M1365.2 525.3l-3.5-1.4-3.9 2.2 3.6 1.5z" fill="#aeacff" stroke="#aeacff"/>
<path d="M1434 644.3l-.6 3.9M1361.7 523.9l3.5 1.4" class="e"/>
<path d="M1296.4 601.4l-1.5 1.4-3.6 3.5 1.5-1.3z" fill="#bab6ff" stroke="#bab6ff"/>
<path d="M1294.9 602.8l-3.6 3.5M1291.3 606.3l1.5-1.3" class="e"/>
<path d="M1347.2 662.9l1.9-1.7-5.9 .7-1.8 1.6z" fill="#5a5ab4" stroke="#5a5ab4"/>
<path d="M1349.1 661.2l-5.9 .7" class="e"/>
<path d="M1377.2 650.1l.8-3.5-4.7-3.8-.7 3.1zM1335.3 572.6l-3.5-1 1.4 6.1 3 .9z" fill="#8a8aff" stroke="#8a8aff"/>
<path d="M1339.5 664.7l1.9-1.2-5.4 1-1.7 1.1z" fill="#5a5ab4" stroke="#5a5ab4"/>
<path d="M1373.3 642.8l-.7 3.1M1333.2 577.7l3 .9" class="e"/>
<path d="M1499.9 598.4l-1.2-6.1-2.1-.2 1.3 6z" fill="#8585f7" stroke="#8585f7"/>
<path d="M1442.7 495.3l-4.7-4.2-.7 2 4.6 4.1z" fill="#9494ff" stroke="#9494ff"/>
<path d="M1499.9 598.4l-1.2-6.1M1442.7 495.3l-4.7-4.2" class="e"/>
<path d="M1449 532.6l-3.5-4.6-5 7 3.1 4zM1471.8 573.5l-2.2-5.3-8.3 1.5 1.9 4.6z" fill="#8a8aff" stroke="#8a8aff"/>
<path d="M1392.9 640.8l.6-4-10.9 6.3-.5 4z" fill="#5a5ab4" stroke="#5a5ab4"/>
<path d="M1351.5 564.1l-3.7-1.5-10.9 6.3 3.8 1.5z" fill="#aeacff" stroke="#aeacff"/>
<path d="M1434.3 642.7l.3-3.9-.3 1.6-.3 3.9z" fill="#5a5ab4" stroke="#5a5ab4"/>
<path d="M1370.3 527.6l-3.5-1.7-1.6-.6 3.6 1.7z" fill="#7a7ae7" stroke="#7a7ae7"/>
<path d="M1434.6 638.8l-.3 3.9M1366.8 525.9l3.5 1.7" class="e"/>
<path d="M1464.9 578.9l-1.7-4.6-17.1 9.9 1.7 4.6z" fill="#5a5ab4" stroke="#5a5ab4"/>
<path d="M1440.5 535l-3.1-3.8-17.2 9.9 3.2 3.8z" fill="#8484f6" stroke="#8484f6"/>
<path d="M1404.3 621.9l-.6-4.6-10.8 6.2 .6 4.7z" fill="#5a5ab4" stroke="#5a5ab4"/>
<path d="M1373.6 565l-3.8-2.8-10.8 6.3 3.7 2.8z" fill="#a09fff" stroke="#a09fff"/>
<path d="M1463.2 574.3l1.7 4.6M1437.4 531.2l3.1 3.8M1404.3 621.9l-.6-4.6M1373.6 565l-3.8-2.8" class="e"/>
<path d="M1332.4 666.4l1.9-.8-5 1.4-1.8 .7z" fill="#5a5ab4" stroke="#5a5ab4"/>
<path d="M1332.4 666.4l-4.9 1.3" class="e"/>
<path d="M1494.2 592.2l-1.5-6-2.5 .6 1.4 5.8z" fill="#6a6ace" stroke="#6a6ace"/>
<path d="M1445 503.5l-4.5-4.3-1.6 2 4.3 4.2z" fill="#d0c9ff" stroke="#d0c9ff"/>
<path d="M1454.3 620.5l-.4-4.3-17.1 9.9 .3 4.3z" fill="#5a5ab4" stroke="#5a5ab4"/>
<path d="M1399.6 522.1l-3.6-2.4-17.1 9.9 3.6 2.4z" fill="#a3a3ff" stroke="#a3a3ff"/>
<path d="M1355.5 660.9l1.4-1.9-4.4 2.6-1.4 1.8z" fill="#5a5ab4" stroke="#5a5ab4"/>
<path d="M1351.1 663.4l4.4-2.5" class="e"/>
<path d="M1443.2 505.4l-4.3-4.2-1.9 1.8 4.3 4.1z" fill="#c4bfff" stroke="#c4bfff"/>
<path d="M1491.6 592.6l-1.4-5.8-2.5 .8 1.5 5.8z" fill="#5a5ab5" stroke="#5a5ab5"/>
<path d="M1291.3 606.3l-5.6-6.2-4.4 2.5 6.2 6.7z" fill="#8a8aff" stroke="#8a8aff"/>
<path d="M1291.3 606.3l-3.8 3M1281.3 602.6l4.4-2.5" class="e"/>
<path d="M1487.1 594.4l-1.5-5.8-4.5 .2 1.4 5.5z" fill="#8080f1" stroke="#8080f1"/>
<path d="M1439.3 508.4l-4.3-4.1-2.1 4.1 4.1 3.9z" fill="#9e9eff" stroke="#9e9eff"/>
<path d="M1481.1 588.8l1.4 5.5M1432.9 508.4l4.1 3.9" class="e"/>
<path d="M1452.5 537.3l-3.5-4.7-5.4 6.4 3 4.1zM1469.6 568.2l-2.4-5.4-8 2.3 2.1 4.6z" fill="#8a8aff" stroke="#8a8aff"/>
<path d="M1381.2 650.8l.9-3.7-4.1-.5-.8 3.5z" fill="#5a5ab4" stroke="#5a5ab4"/>
<path d="M1336.9 568.9l-3.6-1.1-1.5 3.8 3.5 1z" fill="#e3d9ff" stroke="#e3d9ff"/>
<path d="M1382.1 647.1l-.9 3.7M1378 646.6l-.8 3.5M1333.3 567.8l3.6 1.1M1331.8 571.6l3.5 1" class="e"/>
<path d="M1361.4 527.6l-3.6-1.5-2 4.6 3.4 1.4z" fill="#e7dcff" stroke="#e7dcff"/>
<path d="M1429.5 650.4l.6-3.8-5-.4-.5 3.7z" fill="#5a5ab4" stroke="#5a5ab4"/>
<path d="M1357.8 526.1l3.6 1.5M1430.1 646.6l-.6 3.8M1355.8 530.7l3.4 1.4M1425.1 646.2l-.5 3.7" class="e"/>
<path d="M1481.1 588.8l-1.6-5.6-4 1.1 1.6 5.4z" fill="#6d6dd3" stroke="#6d6dd3"/>
<path d="M1440.9 516.4l-3.9-4.1-2.9 3 3.9 4z" fill="#c9c3ff" stroke="#c9c3ff"/>
<path d="M1475.5 584.3l1.6 5.4M1434.1 515.3l3.9 4" class="e"/>
<path d="M1496.6 592.1l-1.5-6.1-2.4 .2 1.5 6z" fill="#7979e6" stroke="#7979e6"/>
<path d="M1446.4 501.5l-4.5-4.3-1.4 2 4.5 4.3z" fill="#afacff" stroke="#afacff"/>
<path d="M1333.7 577.9l-2.5-.5-13 7.5 2.5 .5z" fill="#b3b0ff" stroke="#b3b0ff"/>
<path d="M1333.7 577.9l-2.5-.5" class="e"/>
<path d="M1425.5 638.5l-.1-4.1-21-10.7 .1 2.7zM1369.5 537.7l-3.4-2.1 0 24.3 2.2 1.3z" fill="#8a8aff" stroke="#8a8aff"/>
<path d="M1404.4 623.7l.1 2.7M1366.1 559.9l2.2 1.3" class="e"/>
<path d="M1463.2 574.3l-1.9-4.6-17.1 9.9 1.9 4.6z" fill="#5a5ab4" stroke="#5a5ab4"/>
<path d="M1443.6 539l-3.1-4-17.1 9.9 3.1 4z" fill="#7f7fee" stroke="#7f7fee"/>
<path d="M1461.3 569.7l1.9 4.6M1440.5 535l3.1 4" class="e"/>
<path d="M1489.2 593.4l-1.5-5.8-2.1 1 1.5 5.8z" fill="#5a5ab4" stroke="#5a5ab4"/>
<path d="M1441.3 507.1l-4.3-4.1-2 1.3 4.3 4.1z" fill="#9f9fff" stroke="#9f9fff"/>
<path d="M1467.2 562.8l-2.6-5.3-7.6 3 2.2 4.6zM1455.7 542.2l-3.2-4.9-5.9 5.8 2.8 4.2z" fill="#8a8aff" stroke="#8a8aff"/>
<path d="M1485.6 588.6l1.5 5.8M1435 504.3l4.3 4.1" class="e"/>
<path d="M1303.8 595.4l-2.1 .8-3.5 4.2 1.9-.8z" fill="#c0bbff" stroke="#c0bbff"/>
<path d="M1309.8 590.1l-2.6 .6-3.4 4.7 2.3-.5z" fill="#c5c0ff" stroke="#c5c0ff"/>
<path d="M1309.8 590.1l-3.7 4.8" class="e"/>
<path d="M1458.9 547.2l-3.2-5-6.3 5.1 2.7 4.3zM1464.6 557.5l-2.8-5.2-7.2 3.7 2.4 4.5z" fill="#8a8aff" stroke="#8a8aff"/>
<path d="M1437.1 638.7l.1-4-2.5 .1-.1 4z" fill="#5a5ab4" stroke="#5a5ab4"/>
<path d="M1375.3 527.4l-3.6-2-1.4 2.2 3.6 1.9z" fill="#f0e4ff" stroke="#f0e4ff"/>
<path d="M1437.2 634.7l-.1 4M1371.7 525.4l3.6 2" class="e"/>
<path d="M1461.8 552.3l-2.9-5.1-6.8 4.4 2.5 4.4z" fill="#8a8aff" stroke="#8a8aff"/>
<path d="M1372.1 647.2l.8-2.5-13.1 7.6-.8 2.4z" fill="#5a5ab4" stroke="#5a5ab4"/>
<path d="M1372.1 647.2l.8-2.5" class="e"/>
<path d="M1446.6 543.1l-3-4.1-17.1 9.9 2.9 4.1z" fill="#7a7ae7" stroke="#7a7ae7"/>
<path d="M1461.3 569.7l-2.1-4.6-17.1 9.9 2.1 4.6z" fill="#5a5ab5" stroke="#5a5ab5"/>
<path d="M1443.6 539l3 4.1M1459.2 565.1l2.1 4.6" class="e"/>
<path d="M1316.6 672.3l2.5 8.8 4.3-2.5-2.3-8.6z" fill="#5a5ab4" stroke="#5a5ab4"/>
<path d="M1323.4 678.6l-4.3 2.5M1321.1 670l-4.5 2.3" class="e"/>
<path d="M1298.2 600.4l-1.8 1-3.6 3.6 1.6-1z" fill="#bcb8ff" stroke="#bcb8ff"/>
<path d="M1498.7 592.3l-1.5-6.2-2.1-.1 1.5 6.1z" fill="#8686f8" stroke="#8686f8"/>
<path d="M1447.3 499.7l-4.6-4.4-.8 1.9 4.5 4.3z" fill="#9393ff" stroke="#9393ff"/>
<path d="M1498.7 592.3l-1.5-6.2M1447.3 499.7l-4.6-4.4" class="e"/>
<path d="M1368.8 527l-3.6-1.7-3.8 2.3 3.5 1.7z" fill="#acaaff" stroke="#acaaff"/>
<path d="M1434 644.3l.3-3.9-3.9 2.2-.3 4z" fill="#5a5ab4" stroke="#5a5ab4"/>
<path d="M1365.2 525.3l3.6 1.7M1434.3 640.4l-.3 3.9" class="e"/>
<path d="M1403.7 617.3l-.9-4.8-10.8 6.3 .9 4.7z" fill="#5a5ab4" stroke="#5a5ab4"/>
<path d="M1377.2 568.2l-3.6-3.2-10.9 6.3 3.7 3.1z" fill="#9999ff" stroke="#9999ff"/>
<path d="M1403.7 617.3l-.9-4.8M1377.2 568.2l-3.6-3.2" class="e"/>
<path d="M1492.7 586.2l-1.7-5.9-2.5 .6 1.7 5.9z" fill="#6d6dd4" stroke="#6d6dd4"/>
<path d="M1449.3 508l-4.3-4.5-1.8 1.9 4.2 4.4z" fill="#c8c2ff" stroke="#c8c2ff"/>
<path d="M1315.7 584.7l-2.3 .1-4.4 2.5 2.4-.1z" fill="#b5b2ff" stroke="#b5b2ff"/>
<path d="M1313.4 584.8l-4.4 2.5" class="e"/>
<path d="M1459.2 565.1l-2.2-4.6-17.1 9.9 2.2 4.6z" fill="#5f5fbe" stroke="#5f5fbe"/>
<path d="M1449.4 547.3l-2.8-4.2-17.2 9.9 2.8 4.2z" fill="#7575df" stroke="#7575df"/>
<path d="M1457 560.5l2.2 4.6M1446.6 543.1l2.8 4.2" class="e"/>
<path d="M1341.4 663.5l1.8-1.6-5.6 1.2-1.6 1.4z" fill="#5a5ab4" stroke="#5a5ab4"/>
<path d="M1485.6 588.6l-1.6-5.8-4.5 .4 1.6 5.6z" fill="#8282f3" stroke="#8282f3"/>
<path d="M1443.5 512.8l-4.2-4.4-2.3 3.9 3.9 4.1z" fill="#9c9cff" stroke="#9c9cff"/>
<path d="M1343.2 661.9l-5.6 1.2M1479.5 583.2l1.6 5.6M1437 512.3l3.9 4.1" class="e"/>
<path d="M1490.2 586.8l-1.7-5.9-2.4 .9 1.6 5.8z" fill="#5d5dba" stroke="#5d5dba"/>
<path d="M1447.4 509.8l-4.2-4.4-1.9 1.7 4.2 4.4z" fill="#bcb7ff" stroke="#bcb7ff"/>
<path d="M1479.5 583.2l-1.8-5.5-3.9 1.2 1.7 5.4z" fill="#7171d9" stroke="#7171d9"/>
<path d="M1444.8 520.8l-3.9-4.4-2.9 2.9 3.8 4.3z" fill="#c0bbff" stroke="#c0bbff"/>
<path d="M1338.8 574l-3.5-1.4 .9 6 3.1 1.2zM1378 646.6l.6-3.7-4.8-3.3-.5 3.2z" fill="#8a8aff" stroke="#8a8aff"/>
<path d="M1473.8 578.9l1.7 5.4M1438 519.3l3.8 4.3M1336.2 578.6l3.1 1.2M1373.8 639.6l-.5 3.2" class="e"/>
<path d="M1434.6 638.8l.1-4-.3 1.5-.1 4.1z" fill="#5a5ab4" stroke="#5a5ab4"/>
<path d="M1373.9 529.5l-3.6-1.9-1.5-.6 3.6 2z" fill="#7777e3" stroke="#7777e3"/>
<path d="M1453.9 616.2l-.5-4.4-17.1 9.9 .5 4.4z" fill="#5a5ab4" stroke="#5a5ab4"/>
<path d="M1403.2 524.8l-3.6-2.7-17.1 9.9 3.5 2.7z" fill="#a09fff" stroke="#a09fff"/>
<path d="M1434.7 634.8l-.1 4M1370.3 527.6l3.6 1.9" class="e"/>
<path d="M1457 560.5l-2.4-4.5-17.1 9.9 2.4 4.5z" fill="#6565c6" stroke="#6565c6"/>
<path d="M1452.1 551.6l-2.7-4.3-17.2 9.9 2.7 4.3z" fill="#6f6fd7" stroke="#6f6fd7"/>
<path d="M1454.6 556l2.4 4.5M1449.4 547.3l2.7 4.3" class="e"/>
<path d="M1334.3 665.6l1.7-1.1-5.1 1.5-1.6 1z" fill="#5a5ab4" stroke="#5a5ab4"/>
<path d="M1454.6 556l-2.5-4.4-17.2 9.9 2.6 4.4z" fill="#6a6ace" stroke="#6a6ace"/>
<path d="M1355.3 566.1l-3.8-2-10.8 6.3 3.7 2z" fill="#aaa9ff" stroke="#aaa9ff"/>
<path d="M1393.5 636.8l.2-4.2-10.9 6.3-.2 4.2z" fill="#5a5ab4" stroke="#5a5ab4"/>
<path d="M1452.1 551.6l2.5 4.4" class="e"/>
<path d="M1450.8 506.1l-4.4-4.6-1.4 2 4.3 4.5z" fill="#abaaff" stroke="#abaaff"/>
<path d="M1495.1 586l-1.7-6.1-2.4 .4 1.7 5.9z" fill="#7c7cea" stroke="#7c7cea"/>
<path d="M1356.9 659l1.1-2-4.3 2.5-1.2 2.1z" fill="#5a5ab4" stroke="#5a5ab4"/>
<path d="M1425.4 634.4l-.3-4.1-20.9-9.2 .2 2.6zM1373 540.1l-3.5-2.4-1.2 23.5 2.2 1.5z" fill="#8a8aff" stroke="#8a8aff"/>
<path d="M1404.2 621.1l.2 2.6M1368.3 561.2l2.2 1.5" class="e"/>
<path d="M1487.7 587.6l-1.6-5.8-2.1 1 1.6 5.8z" fill="#5a5ab4" stroke="#5a5ab4"/>
<path d="M1445.5 511.5l-4.2-4.4-2 1.3 4.2 4.4z" fill="#9a9aff" stroke="#9a9aff"/>
<path d="M1484 582.8l1.6 5.8M1439.3 508.4l4.2 4.4" class="e"/>
<path d="M1336.3 578.6l-2.6-.7-13 7.5 2.5 .8z" fill="#b1aeff" stroke="#b1aeff"/>
<path d="M1336.3 578.6l-2.6-.7" class="e"/>
<path d="M1327.5 667.7l1.8-.7-4.7 1.8-1.7 .7z" fill="#5a5ab4" stroke="#5a5ab4"/>
<path d="M1327.5 667.7l-4.6 1.8M1324.6 668.8l-1.7 .7" class="e"/>
<path d="M1351.1 663.4l1.4-1.8-4.4 2.5-1.3 1.8z" fill="#5a5ab4" stroke="#5a5ab4"/>
<path d="M1346.8 665.9l4.3-2.5" class="e"/>
<path d="M1287.5 609.3l-6.2-6.7-4.3 2.5 6.3 6.9z" fill="#8a8aff" stroke="#8a8aff"/>
<path d="M1287.5 609.3l-4.2 2.7M1277 605.1l4.3-2.5" class="e"/>
<path d="M1430.1 646.6l.3-4-5-.2-.3 3.8z" fill="#5a5ab4" stroke="#5a5ab4"/>
<path d="M1364.9 529.3l-3.5-1.7-2.2 4.5 3.4 1.6z" fill="#e8deff" stroke="#e8deff"/>
<path d="M1430.4 642.6l-.3 4M1425.4 642.4l-.3 3.8M1361.4 527.6l3.5 1.7M1359.2 532.1l3.4 1.6" class="e"/>
<path d="M1340.7 570.4l-3.8-1.5-1.6 3.7 3.5 1.4z" fill="#e8ddff" stroke="#e8ddff"/>
<path d="M1382.1 647.1l.5-4-4-.2-.6 3.7z" fill="#5a5ab4" stroke="#5a5ab4"/>
<path d="M1336.9 568.9l3.8 1.5M1382.6 643.1l-.5 4M1335.3 572.6l3.5 1.4M1378.6 642.9l-.6 3.7" class="e"/>
<path d="M1477.7 577.7l-2-5.6-3.9 1.4 2 5.4z" fill="#7575df" stroke="#7575df"/>
<path d="M1448.6 525.3l-3.8-4.5-3 2.8 3.7 4.4z" fill="#b7b4ff" stroke="#b7b4ff"/>
<path d="M1471.8 573.5l2 5.4M1441.8 523.6l3.7 4.4" class="e"/>
<path d="M1484 582.8l-1.9-5.8-4.4 .7 1.8 5.5z" fill="#8484f6" stroke="#8484f6"/>
<path d="M1447.6 517.3l-4.1-4.5-2.6 3.6 3.9 4.4z" fill="#9b9bff" stroke="#9b9bff"/>
<path d="M1477.7 577.7l1.8 5.5M1440.9 516.4l3.9 4.4" class="e"/>
<path d="M1402.8 612.5l-1.3-4.8-10.8 6.3 1.3 4.8z" fill="#5a5ab4" stroke="#5a5ab4"/>
<path d="M1380.8 571.7l-3.6-3.5-10.8 6.2 3.5 3.6z" fill="#9191ff" stroke="#9191ff"/>
<path d="M1491 580.3l-1.9-6-2.5 .7 1.9 5.9z" fill="#7272da" stroke="#7272da"/>
<path d="M1453.5 512.7l-4.2-4.7-1.9 1.8 4.2 4.6z" fill="#c0bbff" stroke="#c0bbff"/>
<path d="M1306.1 594.9l-2.3 .5-3.7 4.2 2.1-.5z" fill="#c2bdff" stroke="#c2bdff"/>
<path d="M1402.8 612.5l-1.3-4.8M1380.8 571.7l-3.6-3.5M1306.1 594.9l-3.9 4.2" class="e"/>
<path d="M1488.5 580.9l-1.9-5.9-2.4 1 1.9 5.8z" fill="#6262c2" stroke="#6262c2"/>
<path d="M1451.6 514.4l-4.2-4.6-1.9 1.7 4.1 4.5z" fill="#b2b0ff" stroke="#b2b0ff"/>
<path d="M1497.2 586.1l-1.8-6.2-2 0 1.7 6.1z" fill="#8686fa" stroke="#8686fa"/>
<path d="M1451.8 504.4l-4.5-4.7-.9 1.8 4.4 4.6z" fill="#9393ff" stroke="#9393ff"/>
<path d="M1497.2 586.1l-1.8-6.2M1451.8 504.4l-4.5-4.7" class="e"/>
<path d="M1378.9 529.6l-3.6-2.2-1.4 2.1 3.5 2.1z" fill="#efe4ff" stroke="#efe4ff"/>
<path d="M1437.2 634.7l-.1-4.3-2.5 .3 .1 4.1z" fill="#5a5ab4" stroke="#5a5ab4"/>
<path d="M1375.3 527.4l3.6 2.2M1437.1 630.4l.1 4.3" class="e"/>
<path d="M1372.9 644.7l.7-3.6-13.1 7.6-.7 3.6z" fill="#5a5ab4" stroke="#5a5ab4"/>
<path d="M1372.9 644.7l.7-3.6" class="e"/>
<path d="M1300.1 599.6l-1.9 .8-3.8 3.6 1.8-.7z" fill="#bdb9ff" stroke="#bdb9ff"/>
<path d="M1493.4 579.9l-2-6.1-2.3 .5 1.9 6z" fill="#7f7fee" stroke="#7f7fee"/>
<path d="M1455.1 510.9l-4.3-4.8-1.5 1.9 4.2 4.7z" fill="#a8a7ff" stroke="#a8a7ff"/>
<path d="M1453.4 611.8l-.7-4.5-17.2 9.9 .8 4.5z" fill="#5a5ab4" stroke="#5a5ab4"/>
<path d="M1406.7 527.6l-3.5-2.8-17.2 9.9 3.6 2.8z" fill="#9c9cff" stroke="#9c9cff"/>
<path d="M1425.1 630.3l-.5-4.2-20.7-7.8 .3 2.8zM1376.4 542.6l-3.4-2.5-2.5 22.6 2.2 1.7z" fill="#8a8aff" stroke="#8a8aff"/>
<path d="M1403.9 618.3l.3 2.8M1370.5 562.7l2.2 1.7" class="e"/>
<path d="M1486.1 581.8l-1.9-5.8-2.1 1 1.9 5.8z" fill="#5a5ab4" stroke="#5a5ab4"/>
<path d="M1449.6 516l-4.1-4.5-2 1.3 4.1 4.5z" fill="#9494ff" stroke="#9494ff"/>
<path d="M1482.1 577l1.9 5.8M1443.5 512.8l4.1 4.5" class="e"/>
<path d="M1318.2 584.9l-2.5-.2-4.3 2.5 2.4 .2z" fill="#b4b1ff" stroke="#b4b1ff"/>
<path d="M1434.3 640.4l.1-4.1-3.9 2.2-.1 4.1z" fill="#5a5ab4" stroke="#5a5ab4"/>
<path d="M1372.4 529l-3.6-2-3.9 2.3 3.6 1.9z" fill="#aaa8ff" stroke="#aaa8ff"/>
<path d="M1475.7 572.1l-2.3-5.5-3.8 1.6 2.2 5.3z" fill="#7a7ae6" stroke="#7a7ae6"/>
<path d="M1452.3 530l-3.7-4.7-3.1 2.7 3.5 4.6z" fill="#afacff" stroke="#afacff"/>
<path d="M1434.4 636.3l-.1 4.1M1368.8 527l3.6 2M1469.6 568.2l2.2 5.3M1445.5 528l3.5 4.6" class="e"/>
<path d="M1294.4 604l-1.6 1-3.9 3.1 1.6-.9z" fill="#b9b5ff" stroke="#b9b5ff"/>
<path d="M1342.4 575.9l-3.6-1.9 .5 5.8 3.1 1.7zM1378.6 642.9l.1-4-4.8-2.8-.1 3.5z" fill="#8a8aff" stroke="#8a8aff"/>
<path d="M1292.8 605l-3.9 3.1M1339.3 579.8l3.1 1.7M1373.9 636.1l-.1 3.5" class="e"/>
<path d="M1336 664.5l1.6-1.4-5.2 1.6-1.5 1.3z" fill="#5a5ab4" stroke="#5a5ab4"/>
<path d="M1337.6 663.1l-5.2 1.6" class="e"/>
<path d="M1434.7 634.8l-.1-4.1-.3 1.4 .1 4.2z" fill="#5a5ab4" stroke="#5a5ab4"/>
<path d="M1377.4 531.6l-3.5-2.1-1.5-.5 3.6 2.2z" fill="#7575e0" stroke="#7575e0"/>
<path d="M1434.6 630.7l.1 4.1M1373.9 529.5l3.5 2.1" class="e"/>
<path d="M1482.1 577l-2.2-5.8-4.2 .9 2 5.6z" fill="#8686f9" stroke="#8686f9"/>
<path d="M1451.6 522.1l-4-4.8-2.8 3.5 3.8 4.5z" fill="#9999ff" stroke="#9999ff"/>
<path d="M1475.7 572.1l2 5.6M1444.8 520.8l3.8 4.5" class="e"/>
<path d="M1311.4 587.2l-2.4 .1-4.3 2.5 2.3-.1z" fill="#b5b2ff" stroke="#b5b2ff"/>
<path d="M1309 587.3l-4.3 2.5" class="e"/>
<path d="M1393.7 632.6l-.2-4.4-10.9 6.2 .2 4.5z" fill="#5a5ab4" stroke="#5a5ab4"/>
<path d="M1359 568.5l-3.7-2.4-10.9 6.3 3.8 2.3z" fill="#a6a5ff" stroke="#a6a5ff"/>
<path d="M1358 657l1-2.3-4.3 2.6-1 2.2zM1401.5 607.7l-1.6-4.9-10.8 6.3 1.6 4.9z" fill="#5a5ab4" stroke="#5a5ab4"/>
<path d="M1384.2 575.5l-3.4-3.8-10.9 6.3 3.5 3.8z" fill="#8989fd" stroke="#8989fd"/>
<path d="M1401.5 607.7l-1.6-4.9M1384.2 575.5l-3.4-3.8" class="e"/>
<path d="M1489.1 574.3l-2.2-6-2.5 .8 2.2 5.9z" fill="#7676e1" stroke="#7676e1"/>
<path d="M1457.6 517.6l-4.1-4.9-1.9 1.7 4 4.9z" fill="#b7b3ff" stroke="#b7b3ff"/>
<path d="M1486.6 575l-2.2-5.9-2.4 1 2.2 5.9z" fill="#6767c9" stroke="#6767c9"/>
<path d="M1455.6 519.3l-4-4.9-2 1.6 3.9 4.8z" fill="#a9a8ff" stroke="#a9a8ff"/>
<path d="M1329.3 667l1.6-1-4.8 1.9-1.5 .9z" fill="#5a5ab4" stroke="#5a5ab4"/>
<path d="M1473.4 566.6l-2.4-5.5-3.8 1.7 2.4 5.4z" fill="#7f7fee" stroke="#7f7fee"/>
<path d="M1455.8 534.9l-3.5-4.9-3.3 2.6 3.5 4.7z" fill="#a6a5ff" stroke="#a6a5ff"/>
<path d="M1467.2 562.8l2.4 5.4M1449 532.6l3.5 4.7" class="e"/>
<path d="M1495.4 579.9l-2.1-6.3-1.9 .2 2 6.1z" fill="#8787fb" stroke="#8787fb"/>
<path d="M1456.2 509.3l-4.4-4.9-1 1.7 4.3 4.8z" fill="#9292ff" stroke="#9292ff"/>
<path d="M1495.4 579.9l-2.1-6.3M1456.2 509.3l-4.4-4.9" class="e"/>
<path d="M1339.8 580.1l-3.5-1.5-13.1 7.6 3.6 1.5z" fill="#aeacff" stroke="#aeacff"/>
<path d="M1339.8 580.1l-3.5-1.5" class="e"/>
<path d="M1352.5 661.6l1.2-2.1-4.4 2.5-1.2 2.1z" fill="#5a5ab4" stroke="#5a5ab4"/>
<path d="M1491.4 573.8l-2.3-6.2-2.2 .7 2.2 6z" fill="#8282f2" stroke="#8282f2"/>
<path d="M1459.3 515.9l-4.2-5-1.6 1.8 4.1 4.9z" fill="#a4a3ff" stroke="#a4a3ff"/>
<path d="M1484.2 576l-2.2-5.9-2.1 1.1 2.2 5.8z" fill="#5a5ab5" stroke="#5a5ab5"/>
<path d="M1453.5 520.8l-3.9-4.8-2 1.3 4 4.8z" fill="#8e8eff" stroke="#8e8eff"/>
<path d="M1479.9 571.2l2.2 5.8M1447.6 517.3l4 4.8" class="e"/>
<path d="M1430.4 642.6l.1-4.1-5 0-.1 3.9z" fill="#5a5ab4" stroke="#5a5ab4"/>
<path d="M1368.5 531.2l-3.6-1.9-2.3 4.4 3.5 1.9z" fill="#e9deff" stroke="#e9deff"/>
<path d="M1430.5 638.5l-.1 4.1M1425.5 638.5l-.1 3.9M1364.9 529.3l3.6 1.9M1362.6 533.7l3.5 1.9" class="e"/>
<path d="M1424.6 626.1l-.7-4.4-20.5-6.2 .5 2.8zM1379.8 545.4l-3.4-2.8-3.7 21.8 2.2 1.8z" fill="#8a8aff" stroke="#8a8aff"/>
<path d="M1403.4 615.5l.5 2.8M1372.7 564.4l2.2 1.8" class="e"/>
<path d="M1471 561.1l-2.7-5.4-3.7 1.8 2.6 5.3z" fill="#8484f6" stroke="#8484f6"/>
<path d="M1459.2 539.9l-3.4-5-3.3 2.4 3.2 4.9z" fill="#9e9eff" stroke="#9e9eff"/>
<path d="M1464.6 557.5l2.6 5.3M1452.5 537.3l3.2 4.9" class="e"/>
<path d="M1479.9 571.2l-2.3-5.8-4.2 1.2 2.3 5.5z" fill="#8787fb" stroke="#8787fb"/>
<path d="M1455.4 527l-3.8-4.9-3 3.2 3.7 4.7z" fill="#9797ff" stroke="#9797ff"/>
<path d="M1473.4 566.6l2.3 5.5M1448.6 525.3l3.7 4.7" class="e"/>
<path d="M1437.1 630.4l-.3-4.3-2.5 .3 .3 4.3z" fill="#5a5ab4" stroke="#5a5ab4"/>
<path d="M1382.5 532l-3.6-2.4-1.5 2 3.5 2.4z" fill="#ede1ff" stroke="#ede1ff"/>
<path d="M1436.8 626.1l.3 4.3M1378.9 529.6l3.6 2.4" class="e"/>
<path d="M1399.9 602.8l-1.9-4.8-10.8 6.2 1.9 4.9z" fill="#5a5ab4" stroke="#5a5ab4"/>
<path d="M1387.4 579.6l-3.2-4.1-10.8 6.3 3.2 4.1z" fill="#8080f0" stroke="#8080f0"/>
<path d="M1399.9 602.8l-1.9-4.8M1387.4 579.6l-3.2-4.1" class="e"/>
<path d="M1346.8 665.9l1.3-1.8-4.3 2.5-1.4 1.8zM1452.7 607.3l-.9-4.6-17.2 9.9 .9 4.6z" fill="#5a5ab4" stroke="#5a5ab4"/>
<path d="M1410.2 530.7l-3.5-3.1-17.1 9.9 3.4 3.1z" fill="#9797ff" stroke="#9797ff"/>
<path d="M1342.4 668.4l4.4-2.5" class="e"/>
<path d="M1382.6 643.1l.2-4.2-4.1 0-.1 4z" fill="#5a5ab4" stroke="#5a5ab4"/>
<path d="M1344.4 572.4l-3.7-2-1.9 3.6 3.6 1.9z" fill="#eadfff" stroke="#eadfff"/>
<path d="M1382.8 638.9l-.2 4.2M1378.7 638.9l-.1 4M1340.7 570.4l3.7 2M1338.8 574l3.6 1.9" class="e"/>
<path d="M1486.9 568.3l-2.5-6-2.4 .9 2.4 5.9z" fill="#7a7ae8" stroke="#7a7ae8"/>
<path d="M1461.6 522.7l-4-5.1-2 1.7 3.9 5z" fill="#aeacff" stroke="#aeacff"/>
<path d="M1484.4 569.1l-2.4-5.9-2.4 1.1 2.4 5.8z" fill="#6c6cd1" stroke="#6c6cd1"/>
<path d="M1459.5 524.3l-3.9-5-2.1 1.5 3.9 5z" fill="#a1a0ff" stroke="#a1a0ff"/>
<path d="M1468.3 555.7l-2.9-5.4-3.6 2 2.8 5.2z" fill="#8a8afe" stroke="#8a8afe"/>
<path d="M1462.4 545.1l-3.2-5.2-3.5 2.3 3.2 5z" fill="#9797ff" stroke="#9797ff"/>
<path d="M1461.8 552.3l2.8 5.2M1455.7 542.2l3.2 5" class="e"/>
<path d="M1302.2 599.1l-2.1 .5-3.9 3.7 1.9-.5z" fill="#bfbaff" stroke="#bfbaff"/>
<path d="M1302.2 599.1l-4.1 3.7" class="e"/>
<path d="M1465.4 550.3l-3-5.2-3.5 2.1 2.9 5.1z" fill="#9090ff" stroke="#9090ff"/>
<path d="M1458.9 547.2l2.9 5.1" class="e"/>
<path d="M1373.6 641.1l.3-3.9-13.1 7.6-.3 3.9z" fill="#5a5ab4" stroke="#5a5ab4"/>
<path d="M1373.6 641.1l.3-3.9" class="e"/>
<path d="M1320.7 585.4l-2.5-.5-4.4 2.5 2.5 .5z" fill="#b3b0ff" stroke="#b3b0ff"/>
<path d="M1398 598l-2.2-4.8-10.9 6.3 2.3 4.7z" fill="#5c5cb9" stroke="#5c5cb9"/>
<path d="M1390.4 584l-3-4.4-10.8 6.3 3 4.3z" fill="#7777e3" stroke="#7777e3"/>
<path d="M1398 598l-2.2-4.8M1390.4 584l-3-4.4" class="e"/>
<path d="M1296.2 603.3l-1.8 .7-3.9 3.2 1.7-.7z" fill="#bab6ff" stroke="#bab6ff"/>
<path d="M1489.1 567.6l-2.5-6.1-2.2 .8 2.5 6z" fill="#8585f7" stroke="#8585f7"/>
<path d="M1463.3 521.1l-4-5.2-1.7 1.7 4 5.1z" fill="#a0a0ff" stroke="#a0a0ff"/>
<path d="M1482 570.1l-2.4-5.8-2 1.1 2.3 5.8z" fill="#5c5cb9" stroke="#5c5cb9"/>
<path d="M1457.4 525.8l-3.9-5-1.9 1.3 3.8 4.9z" fill="#8888fc" stroke="#8888fc"/>
<path d="M1477.6 565.4l2.3 5.8M1451.6 522.1l3.8 4.9" class="e"/>
<path d="M1459.1 532.1l-3.7-5.1-3.1 3 3.5 4.9z" fill="#9595ff" stroke="#9595ff"/>
<path d="M1477.6 565.4l-2.6-5.7-4 1.4 2.4 5.5z" fill="#8989fe" stroke="#8989fe"/>
<path d="M1378.7 638.9l-.1-4.3-4.8-2.2 .1 3.7zM1345.9 578.2l-3.5-2.3 0 5.6 3.1 1.9z" fill="#8a8aff" stroke="#8a8aff"/>
<path d="M1452.3 530l3.5 4.9M1471 561.1l2.4 5.5" class="e"/>
<path d="M1460.5 514.4l-4.3-5.1-1.1 1.6 4.2 5z" fill="#9191ff" stroke="#9191ff"/>
<path d="M1493.3 573.6l-2.3-6.3-1.9 .3 2.3 6.2z" fill="#8888fc" stroke="#8888fc"/>
<path d="M1373.8 632.4l.1 3.7M1342.4 581.5l3.1 1.9M1460.5 514.4l-4.3-5.1M1493.3 573.6l-2.3-6.3" class="e"/>
<path d="M1434.4 636.3l-.1-4.2-3.9 2.2 .1 4.2z" fill="#5a5ab4" stroke="#5a5ab4"/>
<path d="M1376 531.2l-3.6-2.2-3.9 2.2 3.7 2.2z" fill="#a7a5ff" stroke="#a7a5ff"/>
<path d="M1434.3 632.1l.1 4.2M1372.4 529l3.6 2.2" class="e"/>
<path d="M1434.6 630.7l-.3-4.3-.3 1.3 .3 4.4z" fill="#5a5ab4" stroke="#5a5ab4"/>
<path d="M1380.9 534l-3.5-2.4-1.4-.4 3.6 2.4z" fill="#7373dc" stroke="#7373dc"/>
<path d="M1434.3 626.4l.3 4.3M1377.4 531.6l3.5 2.4" class="e"/>
<path d="M1463.3 529.5l-3.8-5.2-2.1 1.5 3.7 5.1z" fill="#9898ff" stroke="#9898ff"/>
<path d="M1482 563.2l-2.6-5.8-2.4 1.1 2.6 5.8z" fill="#7171d9" stroke="#7171d9"/>
<path d="M1484.4 562.3l-2.7-6-2.3 1.1 2.6 5.8z" fill="#7f7fef" stroke="#7f7fef"/>
<path d="M1465.4 528l-3.8-5.3-2.1 1.6 3.8 5.2z" fill="#a6a5ff" stroke="#a6a5ff"/>
<path d="M1395.8 593.2l-2.6-4.7-10.8 6.3 2.5 4.7z" fill="#6565c7" stroke="#6565c7"/>
<path d="M1393.2 588.5l-2.8-4.5-10.8 6.2 2.8 4.6z" fill="#6e6ed5" stroke="#6e6ed5"/>
<path d="M1395.8 593.2l-2.6-4.7M1393.2 588.5l-2.8-4.5" class="e"/>
<path d="M1393.5 628.2l-.6-4.7-10.8 6.3 .5 4.6z" fill="#5a5ab4" stroke="#5a5ab4"/>
<path d="M1362.7 571.3l-3.7-2.8-10.8 6.2 3.7 2.8z" fill="#a09fff" stroke="#a09fff"/>
<path d="M1359 654.7l.8-2.4-4.3 2.5-.8 2.5z" fill="#5a5ab4" stroke="#5a5ab4"/>
<path d="M1423.9 621.7l-.9-4.3-20.1-4.7 .5 2.8zM1383.1 548.3l-3.3-2.9-4.9 20.8 2.2 1.9z" fill="#8a8aff" stroke="#8a8aff"/>
<path d="M1402.9 612.7l.5 2.8M1374.9 566.2l2.2 1.9" class="e"/>
<path d="M1313.8 587.4l-2.4-.2-4.4 2.5 2.4 .3z" fill="#b4b1ff" stroke="#b4b1ff"/>
<path d="M1462.6 537.4l-3.5-5.3-3.3 2.8 3.4 5z" fill="#9393ff" stroke="#9393ff"/>
<path d="M1475 559.7l-2.8-5.7-3.9 1.7 2.7 5.4z" fill="#8b8bff" stroke="#8b8bff"/>
<path d="M1330.9 666l1.5-1.3-4.8 2-1.5 1.2z" fill="#5a5ab4" stroke="#5a5ab4"/>
<path d="M1455.8 534.9l3.4 5M1468.3 555.7l2.7 5.4M1332.4 664.7l-4.8 2" class="e"/>
<path d="M1290.5 607.2l-1.6 .9-4.2 2.7 1.5-.9z" fill="#b6b2ff" stroke="#b6b2ff"/>
<path d="M1288.9 608.1l-4.2 2.7M1284.7 610.8l1.5-.9" class="e"/>
<path d="M1256.3 689.6l-2.9 5.6 20.9-12 2.8-5.7z" fill="#5a5ab4" stroke="#5a5ab4"/>
<path d="M1274.3 683.2l-20.9 12M1277.1 677.5l-20.8 12.1" class="e"/>
<path d="M1479.4 557.4l-2.9-5.8-2.3 1.2 2.8 5.7z" fill="#7676e1" stroke="#7676e1"/>
<path d="M1466.8 534.8l-3.5-5.3-2.2 1.4 3.6 5.3z" fill="#9090ff" stroke="#9090ff"/>
<path d="M1461.1 530.9l-3.7-5.1-2 1.2 3.7 5.1z" fill="#8383f4" stroke="#8383f4"/>
<path d="M1479.6 564.3l-2.6-5.8-2 1.2 2.6 5.7z" fill="#6262c1" stroke="#6262c1"/>
<path d="M1469 533.4l-3.6-5.4-2.1 1.5 3.5 5.3z" fill="#9e9eff" stroke="#9e9eff"/>
<path d="M1481.7 556.3l-2.8-5.8-2.4 1.1 2.9 5.8z" fill="#8484f7" stroke="#8484f7"/>
<path d="M1455.4 527l3.7 5.1M1475 559.7l2.6 5.7" class="e"/>
<path d="M1451.8 602.7l-1.2-4.6-17.1 9.9 1.1 4.6z" fill="#5a5ab4" stroke="#5a5ab4"/>
<path d="M1413.6 534l-3.4-3.3-17.2 9.9 3.5 3.3z" fill="#9393ff" stroke="#9393ff"/>
<path d="M1486.6 561.5l-2.7-6-2.2 .8 2.7 6z" fill="#8888fb" stroke="#8888fb"/>
<path d="M1467.2 526.5l-3.9-5.4-1.7 1.6 3.8 5.3z" fill="#9d9dff" stroke="#9d9dff"/>
<path d="M1472.2 554l-3-5.7-3.8 2 2.9 5.4z" fill="#8d8dff" stroke="#8d8dff"/>
<path d="M1466 542.8l-3.4-5.4-3.4 2.5 3.2 5.2z" fill="#9191ff" stroke="#9191ff"/>
<path d="M1465.4 550.3l2.9 5.4M1459.2 539.9l3.2 5.2" class="e"/>
<path d="M1307 589.7l-2.3 .1-4.4 2.5 2.4 0z" fill="#b5b2ff" stroke="#b5b2ff"/>
<path d="M1304.7 589.8l-4.4 2.5" class="e"/>
<path d="M1353.7 659.5l1-2.2-4.4 2.5-1 2.2z" fill="#5a5ab4" stroke="#5a5ab4"/>
<path d="M1469.2 548.3l-3.2-5.5-3.6 2.3 3 5.2z" fill="#8f8fff" stroke="#8f8fff"/>
<path d="M1462.4 545.1l3 5.2" class="e"/>
<path d="M1343.4 582l-3.6-1.9-13 7.6 3.5 1.9z" fill="#a9a8ff" stroke="#a9a8ff"/>
<path d="M1343.4 582l-3.6-1.9" class="e"/>
<path d="M1476.5 551.6l-3-5.7-2.3 1.3 3 5.6z" fill="#7c7cea" stroke="#7c7cea"/>
<path d="M1470.3 540.3l-3.5-5.5-2.1 1.4 3.3 5.4zM1491 567.3l-2.5-6.2-1.9 .4 2.5 6.1z" fill="#8989fe" stroke="#8989fe"/>
<path d="M1464.6 519.8l-4.1-5.4-1.2 1.5 4 5.2z" fill="#9090ff" stroke="#9090ff"/>
<path d="M1491 567.3l-2.5-6.2M1464.6 519.8l-4.1-5.4" class="e"/>
<path d="M1478.9 550.5l-3.1-5.8-2.3 1.2 3 5.7z" fill="#8a8aff" stroke="#8a8aff"/>
<path d="M1472.5 539l-3.5-5.6-2.2 1.4 3.5 5.5z" fill="#9797ff" stroke="#9797ff"/>
<path d="M1436.8 626.1l-.5-4.4-2.6 .4 .6 4.3z" fill="#5a5ab5" stroke="#5a5ab5"/>
<path d="M1386 534.7l-3.5-2.7-1.6 2 3.5 2.6z" fill="#e8deff" stroke="#e8deff"/>
<path d="M1436.3 621.7l.5 4.4M1382.5 532l3.5 2.7" class="e"/>
<path d="M1372.2 533.4l-3.7-2.2-2.4 4.4 3.4 2.1z" fill="#e8ddff" stroke="#e8ddff"/>
<path d="M1430.5 638.5l-.1-4.2-5 .1 .1 4.1z" fill="#5a5ab4" stroke="#5a5ab4"/>
<path d="M1368.5 531.2l3.7 2.2M1366.1 535.6l3.4 2.1M1430.4 634.3l.1 4.2M1425.4 634.4l.1 4.1" class="e"/>
<path d="M1473.5 545.9l-3.2-5.6-2.3 1.3 3.2 5.6z" fill="#8282f4" stroke="#8282f4"/>
<path d="M1353.4 652.6l2.1 2.2 4.3-2.5 0 0z" fill="#8a8aff" stroke="#8a8aff"/>
<path d="M1359.8 652.3l-4.3 2.5" class="e"/>
<path d="M1475.8 544.7l-3.3-5.7-2.2 1.3 3.2 5.6z" fill="#9090ff" stroke="#9090ff"/>
<path d="M1324.6 668.8l1.5-.9-4.5 2.3-1.5 .9z" fill="#5a5ab4" stroke="#5a5ab4"/>
<path d="M1324.6 668.8l-4.5 2.3" class="e"/>
<path d="M1477 558.5l-2.8-5.7-2 1.2 2.8 5.7z" fill="#6767ca" stroke="#6767ca"/>
<path d="M1464.7 536.2l-3.6-5.3-2 1.2 3.5 5.3z" fill="#7d7deb" stroke="#7d7deb"/>
<path d="M1472.2 554l2.8 5.7M1459.1 532.1l3.5 5.3" class="e"/>
<path d="M1470.9 532.1l-3.7-5.6-1.8 1.5 3.6 5.4z" fill="#9999ff" stroke="#9999ff"/>
<path d="M1483.9 555.5l-2.9-6-2.1 1 2.8 5.8z" fill="#8b8bff" stroke="#8b8bff"/>
<path d="M1348.1 664.1l1.2-2.1-4.3 2.6-1.2 2z" fill="#5a5ab4" stroke="#5a5ab4"/>
<path d="M1257.8 642.6l-6.5-.9-20.8 12 6.5 1z" fill="#b4b1ff" stroke="#b4b1ff"/>
<path d="M1257.8 642.6l-20.8 12.1M1230.5 653.7l20.8-12" class="e"/>
<path d="M1423 617.4l-1.1-4.4-19.7-3.1 .7 2.8zM1386.4 551.5l-3.3-3.2-6 19.8 2.1 2z" fill="#8a8aff" stroke="#8a8aff"/>
<path d="M1382.8 638.9l-.2-4.5-4 .2 .1 4.3z" fill="#5a5ab5" stroke="#5a5ab5"/>
<path d="M1348.2 574.7l-3.8-2.3-2 3.5 3.5 2.3z" fill="#e9deff" stroke="#e9deff"/>
<path d="M1402.2 609.9l.7 2.8M1377.1 568.1l2.1 2M1382.6 634.4l.2 4.5M1344.4 572.4l3.8 2.3M1378.6 634.6l.1 4.3M1342.4 575.9l3.5 2.3" class="e"/>
<path d="M1474.2 552.8l-3-5.6-2 1.1 3 5.7z" fill="#6c6cd2" stroke="#6c6cd2"/>
<path d="M1468 541.6l-3.3-5.4-2.1 1.2 3.4 5.4z" fill="#7777e3" stroke="#7777e3"/>
<path d="M1469.2 548.3l3 5.7M1462.6 537.4l3.4 5.4" class="e"/>
<path d="M1481 549.5l-3.2-5.9-2 1.1 3.1 5.8z" fill="#8e8eff" stroke="#8e8eff"/>
<path d="M1474.5 537.7l-3.6-5.6-1.9 1.3 3.5 5.6z" fill="#9595ff" stroke="#9595ff"/>
<path d="M1471.2 547.2l-3.2-5.6-2 1.2 3.2 5.5z" fill="#7272da" stroke="#7272da"/>
<path d="M1466 542.8l3.2 5.5" class="e"/>
<path d="M1378.6 634.6l-.6-4.3-4.7-1.7 .5 3.8zM1349.5 580.8l-3.6-2.6-.4 5.2 3 2.3z" fill="#8a8aff" stroke="#8a8aff"/>
<path d="M1373.3 628.6l.5 3.8M1345.5 583.4l3 2.3" class="e"/>
<path d="M1477.8 543.6l-3.3-5.9-2 1.3 3.3 5.7z" fill="#9292ff" stroke="#9292ff"/>
<path d="M1323.2 586.2l-2.5-.8-4.4 2.5 2.6 .8z" fill="#b1aeff" stroke="#b1aeff"/>
<path d="M1298.1 602.8l-1.9 .5-4 3.2 1.8-.5z" fill="#bbb7ff" stroke="#bbb7ff"/>
<path d="M1298.1 602.8l-4.1 3.2" class="e"/>
<path d="M1488.5 561.1l-2.8-6.2-1.8 .6 2.7 6z" fill="#8a8aff" stroke="#8a8aff"/>
<path d="M1468.6 525.3l-4-5.5-1.3 1.3 3.9 5.4z" fill="#8f8fff" stroke="#8f8fff"/>
<path d="M1488.5 561.1l-2.8-6.2M1468.6 525.3l-4-5.5" class="e"/>
<path d="M1342.4 668.4l1.4-1.8-4.4 2.5-1.4 1.8z" fill="#5a5ab4" stroke="#5a5ab4"/>
<path d="M1338 670.9l4.4-2.5" class="e"/>
<path d="M1373.9 637.2l-.1-4.1-13.1 7.5 .1 4.2z" fill="#5a5ab4" stroke="#5a5ab4"/>
<path d="M1373.9 637.2l-.1-4.1" class="e"/>
<path d="M1434.3 626.4l-.6-4.3-.3 1.2 .6 4.4z" fill="#5a5ab4" stroke="#5a5ab4"/>
<path d="M1384.4 536.6l-3.5-2.6-1.3-.4 3.6 2.7z" fill="#7070d7" stroke="#7070d7"/>
<path d="M1433.7 622.1l.6 4.3M1380.9 534l3.5 2.6" class="e"/>
<path d="M1450.6 598.1l-1.3-4.6-17.2 9.9 1.4 4.6z" fill="#5a5ab4" stroke="#5a5ab4"/>
<path d="M1416.9 537.5l-3.3-3.5-17.1 9.9 3.3 3.5z" fill="#8e8eff" stroke="#8e8eff"/>
<path d="M1434.3 632.1l-.3-4.4-3.9 2.3 .3 4.3z" fill="#5a5ab4" stroke="#5a5ab4"/>
<path d="M1379.6 533.6l-3.6-2.4-3.8 2.2 3.5 2.5z" fill="#a3a3ff" stroke="#a3a3ff"/>
<path d="M1434 627.7l.3 4.4M1376 531.2l3.6 2.4" class="e"/>
<path d="M1392.9 623.5l-.9-4.7-10.8 6.2 .9 4.8z" fill="#5a5ab4" stroke="#5a5ab4"/>
<path d="M1366.4 574.4l-3.7-3.1-10.8 6.2 3.7 3.2z" fill="#9999ff" stroke="#9999ff"/>
<path d="M1359.8 652.3l.7-3.6-6.5 .7-.6 3.2z" fill="#5a5ab4" stroke="#5a5ab4"/>
<path d="M1359.8 652.3l-6.4 .3" class="e"/>
<path d="M1485.7 554.9l-3-6.1-1.7 .7 2.9 6z" fill="#8b8bff" stroke="#8b8bff"/>
<path d="M1472.4 530.9l-3.8-5.6-1.4 1.2 3.7 5.6z" fill="#8e8eff" stroke="#8e8eff"/>
<path d="M1316.3 587.9l-2.5-.5-4.4 2.6 2.6 .4z" fill="#b3b0ff" stroke="#b3b0ff"/>
<path d="M1485.7 554.9l-3-6.1M1472.4 530.9l-3.8-5.6" class="e"/>
<path d="M1292.2 606.5l-1.7 .7-4.3 2.7 1.7-.7z" fill="#b7b3ff" stroke="#b7b3ff"/>
<path d="M1421.9 613l-1.3-4.5-19.3-1.5 .9 2.9zM1389.6 554.8l-3.2-3.3-7.2 18.6 2.1 2.2z" fill="#8a8aff" stroke="#8a8aff"/>
<path d="M1401.3 607l.9 2.9M1379.2 570.1l2.1 2.2" class="e"/>
<path d="M1323.2 586.2l0 0-4.3 2.5 .8 2.8z" fill="#5a5ab4" stroke="#5a5ab4"/>
<path d="M1318.9 588.7l4.3-2.5" class="e"/>
<path d="M1482.7 548.8l-3.3-6.1-1.6 .9 3.2 5.9z" fill="#8c8cff" stroke="#8c8cff"/>
<path d="M1476 536.8l-3.6-5.9-1.5 1.2 3.6 5.6z" fill="#8e8eff" stroke="#8e8eff"/>
<path d="M1482.7 548.8l-3.3-6.1M1476 536.8l-3.6-5.9" class="e"/>
<path d="M1436.3 621.7l-.8-4.5-2.5 .5 .7 4.4z" fill="#5c5cb8" stroke="#5c5cb8"/>
<path d="M1389.6 537.5l-3.6-2.8-1.6 1.9 3.5 2.9z" fill="#e2d8ff" stroke="#e2d8ff"/>
<path d="M1435.5 617.2l.8 4.5M1386 534.7l3.6 2.8" class="e"/>
<path d="M1295.8 684.3l2.4 8.9 20.9-12.1-2.5-8.8z" fill="#5a5ab4" stroke="#5a5ab4"/>
<path d="M1319.1 681.1l-20.9 12.1M1316.6 672.3l-20.8 12" class="e"/>
<path d="M1479.4 542.7l-3.4-5.9-1.5 .9 3.3 5.9z" fill="#8d8dff" stroke="#8d8dff"/>
<path d="M1479.4 542.7l-3.4-5.9" class="e"/>
<path d="M1354.7 657.3l.8-2.5-4.4 2.5-.8 2.5z" fill="#5a5ab4" stroke="#5a5ab4"/>
<path d="M1309.4 590l-2.4-.3-4.3 2.6 2.4 .2z" fill="#b4b1ff" stroke="#b4b1ff"/>
<path d="M1326.1 667.9l1.5-1.2-4.6 2.3-1.4 1.2z" fill="#5a5ab4" stroke="#5a5ab4"/>
<path d="M1327.6 666.7l-4.6 2.3" class="e"/>
<path d="M1346.9 584.4l-3.5-2.4-13.1 7.6 3.5 2.4z" fill="#a3a3ff" stroke="#a3a3ff"/>
<path d="M1346.9 584.4l-3.5-2.4" class="e"/>
<path d="M1430.4 634.3l-.3-4.3-5 .3 .3 4.1z" fill="#5c5cb9" stroke="#5c5cb9"/>
<path d="M1375.7 535.9l-3.5-2.5-2.7 4.3 3.5 2.4z" fill="#e5dbff" stroke="#e5dbff"/>
<path d="M1430.1 630l.3 4.3M1372.2 533.4l3.5 2.5M1425.1 630.3l.3 4.1M1369.5 537.7l3.5 2.4" class="e"/>
<path d="M1449.3 593.5l-1.5-4.7-17.2 9.9 1.5 4.7z" fill="#5a5ab4" stroke="#5a5ab4"/>
<path d="M1420.2 541.1l-3.3-3.6-17.1 9.9 3.3 3.6z" fill="#8989fe" stroke="#8989fe"/>
<path d="M1378 630.3l-.8-4.5-4.6-1.1 .7 3.9zM1352.9 583.8l-3.4-3-1 4.9 3 2.6z" fill="#8a8aff" stroke="#8a8aff"/>
<path d="M1372.6 624.7l.7 3.9M1348.5 585.7l3 2.6" class="e"/>
<path d="M1420.6 608.5l-1.4-4.4-18.8 0 .9 2.9zM1392.7 558.3l-3.1-3.5-8.3 17.5 2 2.2z" fill="#8a8aff" stroke="#8a8aff"/>
<path d="M1400.4 604.1l.9 2.9M1381.3 572.3l2 2.2" class="e"/>
<path d="M1347.5 653.3l3.6 4 4.4-2.5-2.1-2.2z" fill="#8a8aff" stroke="#8a8aff"/>
<path d="M1382.6 634.4l-.5-4.6-4.1 .5 .6 4.3z" fill="#5f5fbd" stroke="#5f5fbd"/>
<path d="M1351.9 577.5l-3.7-2.8-2.3 3.5 3.6 2.6z" fill="#e3d9ff" stroke="#e3d9ff"/>
<path d="M1355.5 654.8l-4.4 2.5" class="e"/>
<path d="M1326.8 587.7l-3.6-1.5-3.5 5.3 3.1 1.4z" fill="#e1d7ff" stroke="#e1d7ff"/>
<path d="M1382.1 629.8l.5 4.6M1348.2 574.7l3.7 2.8M1378 630.3l.6 4.3M1345.9 578.2l3.6 2.6M1323.2 586.2l-3.5 5.3" class="e"/>
<path d="M1302.7 592.3l-2.4 0-4.3 2.6 2.3-.1z" fill="#b5b2ff" stroke="#b5b2ff"/>
<path d="M1300.3 592.3l-4.3 2.6" class="e"/>
<path d="M1349.3 662l1-2.2-4.3 2.5-1 2.3zM1392 618.8l-1.3-4.8-10.8 6.2 1.3 4.8z" fill="#5a5ab4" stroke="#5a5ab4"/>
<path d="M1369.9 578l-3.5-3.6-10.8 6.3 3.5 3.5z" fill="#9191ff" stroke="#9191ff"/>
<path d="M1433.7 622.1l-.7-4.4-.3 1.1 .7 4.5z" fill="#5a5ab4" stroke="#5a5ab4"/>
<path d="M1387.9 539.5l-3.5-2.9-1.2-.3 3.5 2.9z" fill="#6d6dd3" stroke="#6d6dd3"/>
<path d="M1433 617.7l.7 4.4M1384.4 536.6l3.5 2.9" class="e"/>
<path d="M1373.8 633.1l-.5-4.4-13 7.6 .4 4.3z" fill="#5a5ab4" stroke="#5a5ab4"/>
<path d="M1373.8 633.1l-.5-4.4" class="e"/>
<path d="M1434 627.7l-.6-4.4-3.9 2.3 .6 4.4z" fill="#5a5ab4" stroke="#5a5ab4"/>
<path d="M1383.2 536.3l-3.6-2.7-3.9 2.3 3.6 2.6z" fill="#a09fff" stroke="#a09fff"/>
<path d="M1433.4 623.3l.6 4.4M1379.6 533.6l3.6 2.7" class="e"/>
<path d="M1353.4 652.6l.6-3.2-6 1.1-.5 2.8zM1343.8 666.6l1.2-2-4.4 2.5-1.2 2z" fill="#5a5ab4" stroke="#5a5ab4"/>
<path d="M1353.4 652.6l-5.9 .7" class="e"/>
<path d="M1447.8 588.8l-1.7-4.6-17.2 9.9 1.7 4.6z" fill="#5a5ab4" stroke="#5a5ab4"/>
<path d="M1423.4 544.9l-3.2-3.8-17.1 9.9 3.1 3.8z" fill="#8484f6" stroke="#8484f6"/>
<path d="M1419.2 604.1l-1.7-4.5-18.2 1.6 1.1 2.9zM1395.8 561.9l-3.1-3.6-9.4 16.2 2 2.4z" fill="#8a8aff" stroke="#8a8aff"/>
<path d="M1399.3 601.2l1.1 2.9M1383.3 574.5l2 2.4" class="e"/>
<path d="M1283.3 612l-6.3-6.9-20.9 12 6.3 7z" fill="#8a8aff" stroke="#8a8aff"/>
<path d="M1283.3 612l-20.9 12.1M1256.1 617.1l20.9-12" class="e"/>
<path d="M1294 606l-1.8 .5-4.3 2.7 1.8-.4z" fill="#b7b4ff" stroke="#b7b4ff"/>
<path d="M1294 606l-4.3 2.8" class="e"/>
<path d="M1318.9 588.7l-2.6-.8-4.3 2.5 2.5 .8z" fill="#b1aeff" stroke="#b1aeff"/>
<path d="M1360.5 648.7l.3-3.9-6.5 1.1-.3 3.5z" fill="#5a5ab4" stroke="#5a5ab4"/>
<path d="M1435.5 617.2l-.9-4.6-2.5 .6 .9 4.5z" fill="#6060be" stroke="#6060be"/>
<path d="M1393 540.6l-3.4-3.1-1.7 2 3.4 3z" fill="#dbd2ff" stroke="#dbd2ff"/>
<path d="M1434.6 612.6l.9 4.6M1389.6 537.5l3.4 3.1" class="e"/>
<path d="M1338 670.9l1.4-1.8-4.3 2.5-1.4 1.8z" fill="#5a5ab4" stroke="#5a5ab4"/>
<path d="M1333.7 673.4l4.3-2.5" class="e"/>
<path d="M1377.2 625.8l-1.2-4.6-4.5-.4 1.1 3.9zM1356.3 587.1l-3.4-3.3-1.4 4.5 3 2.9z" fill="#8a8aff" stroke="#8a8aff"/>
<path d="M1371.5 620.8l1.1 3.9M1351.5 588.3l3 2.9" class="e"/>
<path d="M1417.5 599.6l-1.8-4.4-17.5 3.2 1.1 2.8zM1398.7 565.7l-2.9-3.8-10.5 15 1.9 2.4z" fill="#8a8aff" stroke="#8a8aff"/>
<path d="M1398.2 598.4l1.1 2.8M1385.3 576.9l1.9 2.4" class="e"/>
<path d="M1390.7 614l-1.6-4.9-10.8 6.2 1.6 4.9z" fill="#5a5ab4" stroke="#5a5ab4"/>
<path d="M1373.4 581.8l-3.5-3.8-10.8 6.2 3.4 3.8z" fill="#8989fd" stroke="#8989fd"/>
<path d="M1319.7 591.5l-.8-2.8-4.4 2.5 1.4 5.1z" fill="#5a5ab4" stroke="#5a5ab4"/>
<path d="M1314.5 591.2l4.4-2.5" class="e"/>
<path d="M1350.4 587.3l-3.5-2.9-13.1 7.6 3.5 2.8z" fill="#9c9cff" stroke="#9c9cff"/>
<path d="M1350.4 587.3l-3.5-2.9" class="e"/>
<path d="M1446.1 584.2l-1.9-4.6-17.2 9.9 1.9 4.6z" fill="#5a5ab4" stroke="#5a5ab4"/>
<path d="M1426.5 548.9l-3.1-4-17.2 9.9 3.1 4z" fill="#7f7fee" stroke="#7f7fee"/>
<path d="M1430.1 630l-.6-4.4-4.9 .5 .5 4.2z" fill="#6060be" stroke="#6060be"/>
<path d="M1379.3 538.5l-3.6-2.6-2.7 4.2 3.4 2.5z" fill="#e2d8ff" stroke="#e2d8ff"/>
<path d="M1429.5 625.6l.6 4.4M1424.6 626.1l.5 4.2M1375.7 535.9l3.6 2.6M1373 540.1l3.4 2.5" class="e"/>
<path d="M1312 590.4l-2.6-.4-4.3 2.5 2.5 .5z" fill="#b3b0ff" stroke="#b3b0ff"/>
<path d="M1382.1 629.8l-.9-4.8-4 .8 .8 4.5z" fill="#6565c6" stroke="#6565c6"/>
<path d="M1355.6 580.7l-3.7-3.2-2.4 3.3 3.4 3z" fill="#d9d1ff" stroke="#d9d1ff"/>
<path d="M1381.2 625l.9 4.8M1377.2 625.8l.8 4.5M1351.9 577.5l3.7 3.2M1349.5 580.8l3.4 3" class="e"/>
<path d="M1322.8 592.9l-3.1-1.4-3.8 4.8 2.8 1.2z" fill="#d6ceff" stroke="#d6ceff"/>
<path d="M1319.7 591.5l-3.8 4.8" class="e"/>
<path d="M1433 617.7l-.9-4.5-.3 1.1 .9 4.5z" fill="#5a5ab4" stroke="#5a5ab4"/>
<path d="M1391.3 542.5l-3.4-3-1.2-.3 3.5 3.1z" fill="#6a6ace" stroke="#6a6ace"/>
<path d="M1415.7 595.2l-2-4.5-16.8 4.8 1.3 2.9zM1401.5 569.7l-2.8-4-11.5 13.6 1.8 2.6z" fill="#8a8aff" stroke="#8a8aff"/>
<path d="M1432.1 613.2l.9 4.5M1387.9 539.5l3.4 3M1396.9 595.5l1.3 2.9M1387.2 579.3l1.8 2.6" class="e"/>
<path d="M1373.3 628.7l-.6-3.3-13.1 7.6 .7 3.3z" fill="#5a5ab4" stroke="#5a5ab4"/>
<path d="M1373.3 628.7l-.6-3.3" class="e"/>
<path d="M1429.4 553l-2.9-4.1-17.2 9.9 3 4.1z" fill="#7a7ae7" stroke="#7a7ae7"/>
<path d="M1444.2 579.6l-2.1-4.6-17.1 9.9 2 4.6z" fill="#5a5ab5" stroke="#5a5ab5"/>
<path d="M1350.3 659.8l.8-2.5-4.4 2.5-.7 2.5z" fill="#5a5ab4" stroke="#5a5ab4"/>
<path d="M1330.3 589.6l-3.5-1.9-4 5.2 3.1 1.7z" fill="#e2d8ff" stroke="#e2d8ff"/>
<path d="M1305.1 592.5l-2.4-.2-4.4 2.5 2.4 .2z" fill="#b4b1ff" stroke="#b4b1ff"/>
<path d="M1413.7 590.7l-2.1-4.3-16.1 6.3 1.4 2.8zM1404.3 573.7l-2.8-4-12.5 12.2 1.8 2.6z" fill="#8a8aff" stroke="#8a8aff"/>
<path d="M1395.5 592.7l1.4 2.8M1389 581.9l1.8 2.6" class="e"/>
<path d="M1433.4 623.3l-.7-4.5-3.9 2.3 .7 4.5z" fill="#5a5ab4" stroke="#5a5ab4"/>
<path d="M1386.7 539.2l-3.5-2.9-3.9 2.2 3.5 2.9z" fill="#9c9cff" stroke="#9c9cff"/>
<path d="M1432.7 618.8l.7 4.5M1383.2 536.3l3.5 2.9" class="e"/>
<path d="M1376 621.2l-1.6-4.6-4.2 .2 1.3 4zM1359.5 590.8l-3.2-3.7-1.8 4.1 2.8 3.1z" fill="#8a8aff" stroke="#8a8aff"/>
<path d="M1389.1 609.1l-1.9-4.9-10.8 6.3 1.9 4.8z" fill="#5a5ab4" stroke="#5a5ab4"/>
<path d="M1376.6 585.9l-3.2-4.1-10.9 6.2 3.3 4.1z" fill="#8080f0" stroke="#8080f0"/>
<path d="M1370.2 616.8l1.3 4M1354.5 591.2l2.8 3.1" class="e"/>
<path d="M1411.6 586.4l-2.3-4.3-15.3 7.8 1.5 2.8zM1406.8 577.8l-2.5-4.1-13.5 10.8 1.6 2.7z" fill="#8a8aff" stroke="#8a8aff"/>
<path d="M1394 589.9l1.5 2.8M1390.8 584.5l1.6 2.7" class="e"/>
<path d="M1341.9 654.5l4.8 5.3 4.4-2.5-3.6-4z" fill="#8a8aff" stroke="#8a8aff"/>
<path d="M1351.1 657.3l-4.4 2.5" class="e"/>
<path d="M1434.6 612.6l-1.1-4.6-2.5 .7 1.1 4.5z" fill="#6464c4" stroke="#6464c4"/>
<path d="M1396.5 543.9l-3.5-3.3-1.7 1.9 3.4 3.2z" fill="#d3cbff" stroke="#d3cbff"/>
<path d="M1433.5 608l1.1 4.6M1393 540.6l3.5 3.3" class="e"/>
<path d="M1409.3 582.1l-2.5-4.3-14.4 9.4 1.6 2.7z" fill="#8a8aff" stroke="#8a8aff"/>
<path d="M1392.4 587.2l1.6 2.7" class="e"/>
<path d="M1442.1 575l-2.2-4.6-17.2 9.9 2.3 4.6z" fill="#5f5fbe" stroke="#5f5fbe"/>
<path d="M1432.2 557.2l-2.8-4.2-17.1 9.9 2.8 4.2z" fill="#7575df" stroke="#7575df"/>
<path d="M1354 649.4l.3-3.5-6.1 1.5-.2 3.1zM1347.5 653.3l.5-2.8-5.6 1.4-.5 2.6z" fill="#5a5ab4" stroke="#5a5ab4"/>
<path d="M1347.5 653.3l-5.6 1.2" class="e"/>
<path d="M1298.3 594.8l-2.3 .1-4.4 2.5 2.3-.1z" fill="#b5b2ff" stroke="#b5b2ff"/>
<path d="M1296 594.9l-4.4 2.5" class="e"/>
<path d="M1345 664.6l1-2.3-4.4 2.5-1 2.3z" fill="#5a5ab4" stroke="#5a5ab4"/>
<path d="M1352.9 589.6l-2.5-2.3-13.1 7.5 2.5 2.4z" fill="#9494ff" stroke="#9494ff"/>
<path d="M1352.9 589.6l-2.5-2.3" class="e"/>
<path d="M1439.9 570.4l-2.4-4.5-17.2 9.9 2.4 4.5z" fill="#6565c6" stroke="#6565c6"/>
<path d="M1434.9 561.5l-2.7-4.3-17.1 9.9 2.7 4.3z" fill="#6f6fd7" stroke="#6f6fd7"/>
<path d="M1437.5 565.9l-2.6-4.4-17.1 9.9 2.5 4.4z" fill="#6a6ace" stroke="#6a6ace"/>
<path d="M1387.2 604.2l-2.3-4.7-10.8 6.2 2.3 4.8z" fill="#5c5cb9" stroke="#5c5cb9"/>
<path d="M1379.6 590.2l-3-4.3-10.8 6.2 3 4.4z" fill="#7777e3" stroke="#7777e3"/>
<path d="M1372.7 625.4l-.8-3.4-13.1 7.6 .8 3.4z" fill="#5a5ab4" stroke="#5a5ab4"/>
<path d="M1372.7 625.4l-.8-3.4" class="e"/>
<path d="M1360.8 644.8l-.1-4.2-6.5 1.7 .1 3.6z" fill="#5a5ab4" stroke="#5a5ab4"/>
<path d="M1362.6 594.6l-3.1-3.8-2.2 3.5 2.6 3.4zM1374.4 616.6l-1.8-4.6-4 .8 1.6 4z" fill="#8a8aff" stroke="#8a8aff"/>
<path d="M1357.3 594.3l2.6 3.4M1368.6 612.8l1.6 4" class="e"/>
<path d="M1339.4 669.1l1.2-2-4.3 2.5-1.2 2z" fill="#5a5ab4" stroke="#5a5ab4"/>
<path d="M1381.2 625l-1.3-4.8-3.9 1 1.2 4.6z" fill="#6b6bd0" stroke="#6b6bd0"/>
<path d="M1359.1 584.2l-3.5-3.5-2.7 3.1 3.4 3.3z" fill="#cdc6ff" stroke="#cdc6ff"/>
<path d="M1379.9 620.2l1.3 4.8M1355.6 580.7l3.5 3.5M1376 621.2l1.2 4.6M1352.9 583.8l3.4 3.3" class="e"/>
<path d="M1384.9 599.5l-2.5-4.7-10.8 6.2 2.5 4.7z" fill="#6565c7" stroke="#6565c7"/>
<path d="M1382.4 594.8l-2.8-4.6-10.8 6.3 2.8 4.5z" fill="#6e6ed5" stroke="#6e6ed5"/>
<path d="M1429.5 625.6l-.7-4.5-4.9 .6 .7 4.4z" fill="#6363c4" stroke="#6363c4"/>
<path d="M1382.8 541.4l-3.5-2.9-2.9 4.1 3.4 2.8z" fill="#ddd4ff" stroke="#ddd4ff"/>
<path d="M1428.8 621.1l.7 4.5M1379.3 538.5l3.5 2.9M1423.9 621.7l.7 4.4M1376.4 542.6l3.4 2.8" class="e"/>
<path d="M1432.1 613.2l-1.1-4.5-.4 1 1.2 4.6z" fill="#5a5ab4" stroke="#5a5ab4"/>
<path d="M1394.7 545.7l-3.4-3.2-1.1-.2 3.4 3.2z" fill="#6666c9" stroke="#6666c9"/>
<path d="M1431 608.7l1.1 4.5M1391.3 542.5l3.4 3.2" class="e"/>
<path d="M1314.5 591.2l-2.5-.8-4.4 2.6 2.6 .7z" fill="#b1aeff" stroke="#b1aeff"/>
<path d="M1372.6 612l-2.1-4.5-3.7 1.3 1.8 4zM1365.4 598.7l-2.8-4.1-2.7 3.1 2.5 3.6z" fill="#8a8aff" stroke="#8a8aff"/>
<path d="M1366.8 608.8l1.8 4M1359.9 597.7l2.5 3.6" class="e"/>
<path d="M1333.7 673.4l1.4-1.8-4.4 2.5-1.4 1.8z" fill="#5a5ab4" stroke="#5a5ab4"/>
<path d="M1329.3 675.9l4.4-2.5" class="e"/>
<path d="M1433.5 608l-1.4-4.6-2.4 .7 1.3 4.6z" fill="#6868cb" stroke="#6868cb"/>
<path d="M1399.8 547.4l-3.3-3.5-1.8 1.8 3.2 3.4z" fill="#cac3ff" stroke="#cac3ff"/>
<path d="M1325.9 594.6l-3.1-1.7-4.1 4.6 2.8 1.5z" fill="#d5cdff" stroke="#d5cdff"/>
<path d="M1432.1 603.4l1.4 4.6M1396.5 543.9l3.3 3.5" class="e"/>
<path d="M1315.9 596.3l-1.4-5.1-4.3 2.5 1.8 6.8z" fill="#5a5ab4" stroke="#5a5ab4"/>
<path d="M1355.4 592.2l-2.5-2.6-13.1 7.6 2.5 2.5z" fill="#8e8eff" stroke="#8e8eff"/>
<path d="M1310.2 593.7l4.3-2.5M1355.4 592.2l-2.5-2.6" class="e"/>
<path d="M1318.7 597.5l-2.8-1.2-3.9 4.2 2.5 1.1z" fill="#cac4ff" stroke="#cac4ff"/>
<path d="M1315.9 596.3l-3.9 4.2" class="e"/>
<path d="M1432.7 618.8l-.9-4.5-3.9 2.2 .9 4.6z" fill="#5a5ab4" stroke="#5a5ab4"/>
<path d="M1390.2 542.3l-3.5-3.1-3.9 2.2 3.5 3.1z" fill="#9797ff" stroke="#9797ff"/>
<path d="M1431.8 614.3l.9 4.5M1386.7 539.2l3.5 3.1" class="e"/>
<path d="M1370.5 607.5l-2.4-4.5-3.4 2 2.1 3.8zM1368.1 603l-2.7-4.3-3 2.6 2.3 3.7z" fill="#8a8aff" stroke="#8a8aff"/>
<path d="M1371.9 622l-1.1-3.4-13 7.6 1 3.4z" fill="#5a5ab4" stroke="#5a5ab4"/>
<path d="M1364.7 605l2.1 3.8M1362.4 601.3l2.3 3.7M1371.9 622l-1.1-3.4" class="e"/>
<path d="M1333.8 592l-3.5-2.4-4.4 5 3.1 2.1z" fill="#ddd4ff" stroke="#ddd4ff"/>
<path d="M1307.6 593l-2.5-.5-4.4 2.5 2.5 .5z" fill="#b3b0ff" stroke="#b3b0ff"/>
<path d="M1354.3 645.9l-.1-3.6-6 1.9 0 3.2z" fill="#5a5ab4" stroke="#5a5ab4"/>
<path d="M1379.9 620.2l-1.6-4.9-3.9 1.3 1.6 4.6z" fill="#7272db" stroke="#7272db"/>
<path d="M1362.5 588l-3.4-3.8-2.8 2.9 3.2 3.7z" fill="#bfbaff" stroke="#bfbaff"/>
<path d="M1378.3 615.3l1.6 4.9M1359.1 584.2l3.4 3.8M1374.4 616.6l1.6 4.6M1356.3 587.1l3.2 3.7" class="e"/>
<path d="M1348 650.5l.2-3.1-5.6 1.7-.2 2.8z" fill="#5a5ab4" stroke="#5a5ab4"/>
<path d="M1357.7 594.9l-2.3-2.7-13.1 7.5 2.3 2.8z" fill="#8787fa" stroke="#8787fa"/>
<path d="M1357.7 594.9l-2.3-2.7" class="e"/>
<path d="M1431 608.7l-1.3-4.6-.4 .9 1.3 4.7z" fill="#5a5ab4" stroke="#5a5ab4"/>
<path d="M1397.9 549.1l-3.2-3.4-1.1-.2 3.4 3.5z" fill="#6363c4" stroke="#6363c4"/>
<path d="M1429.7 604.1l1.3 4.6M1394.7 545.7l3.2 3.4" class="e"/>
<path d="M1370.8 618.6l-1.2-3.4-13.1 7.6 1.3 3.4z" fill="#5a5ab4" stroke="#5a5ab4"/>
<path d="M1370.8 618.6l-1.2-3.4" class="e"/>
<path d="M1346 662.3l.7-2.5-4.3 2.5-.8 2.5z" fill="#5a5ab4" stroke="#5a5ab4"/>
<path d="M1300.7 595l-2.4-.2-4.4 2.5 2.5 .2z" fill="#b4b1ff" stroke="#b4b1ff"/>
<path d="M1428.8 621.1l-.9-4.6-4.9 .9 .9 4.3z" fill="#6767c9" stroke="#6767c9"/>
<path d="M1386.3 544.5l-3.5-3.1-3 4 3.3 2.9z" fill="#d6ceff" stroke="#d6ceff"/>
<path d="M1432.1 603.4l-1.5-4.7-2.4 .9 1.5 4.5z" fill="#6c6cd2" stroke="#6c6cd2"/>
<path d="M1403.1 551l-3.3-3.6-1.9 1.7 3.2 3.6z" fill="#c0bbff" stroke="#c0bbff"/>
<path d="M1427.9 616.5l.9 4.6M1423 617.4l.9 4.3M1382.8 541.4l3.5 3.1M1379.8 545.4l3.3 2.9M1430.6 598.7l1.5 4.7M1399.8 547.4l3.3 3.6" class="e"/>
<path d="M1341.9 654.5l.5-2.6-5.3 1.8-.4 2.4z" fill="#5a5ab4" stroke="#5a5ab4"/>
<path d="M1336.7 656.1l5.7 6.2 4.3-2.5-4.8-5.3z" fill="#8a8aff" stroke="#8a8aff"/>
<path d="M1360.7 640.6l-.4-4.3-6.5 2.2 .4 3.8z" fill="#5a5ab4" stroke="#5a5ab4"/>
<path d="M1346.7 659.8l-4.3 2.5M1341.9 654.5l-5.2 1.6M1353.8 638.5l6.5-2.2" class="e"/>
<path d="M1360 597.8l-2.3-2.9-13.1 7.6 2.3 2.9z" fill="#7f7fef" stroke="#7f7fef"/>
<path d="M1360 597.8l-2.3-2.9" class="e"/>
<path d="M1320.1 671.1l1.5-.9-20.8 12-1.6 1z" fill="#5a5ab4" stroke="#5a5ab4"/>
<path d="M1321.6 670.2l-1.5 .9M1320.1 671.1l-20.9 12.1" class="e"/>
<path d="M1293.9 597.3l-2.3 .1-4.4 2.5 2.4-.1z" fill="#b5b2ff" stroke="#b5b2ff"/>
<path d="M1431.8 614.3l-1.2-4.6-3.8 2.2 1.1 4.6z" fill="#5a5ab4" stroke="#5a5ab4"/>
<path d="M1393.6 545.5l-3.4-3.2-3.9 2.2 3.4 3.3z" fill="#9393ff" stroke="#9393ff"/>
<path d="M1291.6 597.4l-4.4 2.5M1430.6 609.7l1.2 4.6M1390.2 542.3l3.4 3.2" class="e"/>
<path d="M1340.6 667.1l1-2.3-4.4 2.5-.9 2.3z" fill="#5a5ab4" stroke="#5a5ab4"/>
<path d="M1378.3 615.3l-1.9-4.8-3.8 1.5 1.8 4.6z" fill="#7979e6" stroke="#7979e6"/>
<path d="M1365.8 592.1l-3.3-4.1-3 2.8 3.1 3.8z" fill="#b0aeff" stroke="#b0aeff"/>
<path d="M1369.6 615.2l-1.9-4.5-13.1 7.5 1.9 4.6z" fill="#5a5ab4" stroke="#5a5ab4"/>
<path d="M1376.4 610.5l1.9 4.8M1362.5 588l3.3 4.1M1372.6 612l1.8 4.6M1359.5 590.8l3.1 3.8M1369.6 615.2l-1.9-4.5" class="e"/>
<path d="M1329 596.7l-3.1-2.1-4.4 4.4 2.7 1.9z" fill="#d1c9ff" stroke="#d1c9ff"/>
<path d="M1321.5 599l-2.8-1.5-4.2 4.1 2.6 1.4z" fill="#c9c3ff" stroke="#c9c3ff"/>
<path d="M1362.8 601.9l-2.8-4.1-13.1 7.6 2.8 4.1z" fill="#7676e2" stroke="#7676e2"/>
<path d="M1362.8 601.9l-2.8-4.1" class="e"/>
<path d="M1429.7 604.1l-1.5-4.5-.4 .8 1.5 4.6z" fill="#5a5ab4" stroke="#5a5ab4"/>
<path d="M1401.1 552.7l-3.2-3.6-.9-.1 3.2 3.7z" fill="#6060be" stroke="#6060be"/>
<path d="M1428.2 599.6l1.5 4.5M1397.9 549.1l3.2 3.6" class="e"/>
<path d="M1367.7 610.7l-2.3-4.5-13.1 7.6 2.3 4.4z" fill="#6262c2" stroke="#6262c2"/>
<path d="M1367.7 610.7l-2.3-4.5" class="e"/>
<path d="M1406.2 554.8l-3.1-3.8-2 1.7 3.2 3.7z" fill="#b6b3ff" stroke="#b6b3ff"/>
<path d="M1430.6 598.7l-1.7-4.6-2.4 .9 1.7 4.6z" fill="#7171d9" stroke="#7171d9"/>
<path d="M1403.1 551l3.1 3.8M1428.9 594.1l1.7 4.6" class="e"/>
<path d="M1337.3 594.8l-3.5-2.8-4.8 4.7 3 2.4z" fill="#d3ccff" stroke="#d3ccff"/>
<path d="M1337.3 594.8l-5.3 4.3" class="e"/>
<path d="M1335.1 671.6l1.2-2-4.4 2.5-1.2 2z" fill="#5a5ab4" stroke="#5a5ab4"/>
<path d="M1365.4 606.2l-2.6-4.3-13.1 7.6 2.6 4.3z" fill="#6c6cd2" stroke="#6c6cd2"/>
<path d="M1365.4 606.2l-2.6-4.3" class="e"/>
<path d="M1376.4 610.5l-2.3-4.8-3.6 1.8 2.1 4.5z" fill="#8282f2" stroke="#8282f2"/>
<path d="M1368.8 596.5l-3-4.4-3.2 2.5 2.8 4.1z" fill="#a3a2ff" stroke="#a3a2ff"/>
<path d="M1374.1 605.7l2.3 4.8M1365.8 592.1l3 4.4M1370.5 607.5l2.1 4.5M1362.6 594.6l2.8 4.1" class="e"/>
<path d="M1314.5 601.6l-2.5-1.1-4 3.7 2.3 1.1z" fill="#c0bbff" stroke="#c0bbff"/>
<path d="M1354.2 642.3l-.4-3.8-6 2.3 .4 3.4z" fill="#5a5ab4" stroke="#5a5ab4"/>
<path d="M1347.8 640.8l6-2.3" class="e"/>
<path d="M1348.2 647.4l0-3.2-5.7 2 .1 2.9zM1312 600.5l-1.8-6.8-4.4 2.5 2.2 8z" fill="#5a5ab4" stroke="#5a5ab4"/>
<path d="M1312 600.5l-4 3.7" class="e"/>
<path d="M1310.2 593.7l-2.6-.7-4.4 2.5 2.6 .7z" fill="#b1aeff" stroke="#b1aeff"/>
<path d="M1305.8 596.2l4.4-2.5" class="e"/>
<path d="M1374.1 605.7l-2.5-4.7-3.5 2 2.4 4.5z" fill="#8b8bff" stroke="#8b8bff"/>
<path d="M1371.6 601l-2.8-4.5-3.4 2.2 2.7 4.3z" fill="#9696ff" stroke="#9696ff"/>
<path d="M1371.6 601l2.5 4.7M1368.1 603l2.4 4.5M1368.8 596.5l2.8 4.5M1365.4 598.7l2.7 4.3" class="e"/>
<path d="M1427.9 616.5l-1.1-4.6-4.9 1.1 1.1 4.4z" fill="#6a6acf" stroke="#6a6acf"/>
<path d="M1389.7 547.8l-3.4-3.3-3.2 3.8 3.3 3.2z" fill="#cfc8ff" stroke="#cfc8ff"/>
<path d="M1426.8 611.9l1.1 4.6M1386.3 544.5l3.4 3.3M1421.9 613l1.1 4.4M1383.1 548.3l3.3 3.2" class="e"/>
<path d="M1342.4 651.9l.2-2.8-5.3 2-.2 2.6z" fill="#5a5ab4" stroke="#5a5ab4"/>
<path d="M1428.9 594.1l-1.9-4.6-2.3 1 1.8 4.5z" fill="#7575e0" stroke="#7575e0"/>
<path d="M1409.3 558.8l-3.1-4-1.9 1.6 3 3.9z" fill="#adabff" stroke="#adabff"/>
<path d="M1427 589.5l1.9 4.6M1406.2 554.8l3.1 4" class="e"/>
<path d="M1430.6 609.7l-1.3-4.7-3.9 2.3 1.4 4.6z" fill="#5a5ab4" stroke="#5a5ab4"/>
<path d="M1397 549l-3.4-3.5-3.9 2.3 3.4 3.5z" fill="#8e8eff" stroke="#8e8eff"/>
<path d="M1429.3 605l1.3 4.7M1393.6 545.5l3.4 3.5" class="e"/>
<path d="M1287.9 609.2l-1.7 .7-20.8 12.1 1.6-.7z" fill="#b5b2ff" stroke="#b5b2ff"/>
<path d="M1286.2 609.9l1.7-.7M1286.2 609.9l-20.8 12.1" class="e"/>
<path d="M1428.2 599.6l-1.7-4.6-.4 .7 1.7 4.7z" fill="#5a5ab4" stroke="#5a5ab4"/>
<path d="M1404.3 556.4l-3.2-3.7-.9 0 3.2 3.8z" fill="#5c5cb8" stroke="#5c5cb8"/>
<path d="M1426.5 595l1.7 4.6M1401.1 552.7l3.2 3.7" class="e"/>
<path d="M1303.2 595.5l-2.5-.5-4.3 2.5 2.5 .5z" fill="#b3b0ff" stroke="#b3b0ff"/>
<path d="M1332 599.1l-3-2.4-4.8 4.2 2.8 2.2z" fill="#c8c2ff" stroke="#c8c2ff"/>
<path d="M1332 599.1l-5 4" class="e"/>
<path d="M1324.2 600.9l-2.7-1.9-4.4 4 2.5 1.7z" fill="#c4bfff" stroke="#c4bfff"/>
<path d="M1321.6 670.2l1.4-1.2-20.8 12.1-1.4 1.1z" fill="#5a5ab4" stroke="#5a5ab4"/>
<path d="M1323 669l-1.4 1.2M1323 669l-20.8 12.1" class="e"/>
<path d="M1360.3 636.3l-.7-3.3-4.3 2.5 .6 3.3z" fill="#5a5ab4" stroke="#5a5ab4"/>
<path d="M1355.9 638.8l4.4-2.5" class="e"/>
<path d="M1427 589.5l-2-4.6-2.4 1 2.1 4.6z" fill="#7b7be8" stroke="#7b7be8"/>
<path d="M1412.3 562.9l-3-4.1-2 1.5 2.9 4z" fill="#a4a3ff" stroke="#a4a3ff"/>
<path d="M1425 584.9l2 4.6M1409.3 558.8l3 4.1" class="e"/>
<path d="M1336.7 656.1l.4-2.4-4.8 2.1-.4 2.3zM1341.6 664.8l.8-2.5-4.4 2.5-.8 2.5z" fill="#5a5ab4" stroke="#5a5ab4"/>
<path d="M1331.9 658.1l6.1 6.7 4.4-2.5-5.7-6.2z" fill="#8a8aff" stroke="#8a8aff"/>
<path d="M1342.4 662.3l-4.4 2.5M1336.7 656.1l-4.8 2" class="e"/>
<path d="M1296.4 597.5l-2.5-.2-4.3 2.5 2.4 .2z" fill="#b4b1ff" stroke="#b4b1ff"/>
<path d="M1426.5 595l-1.8-4.5-.5 .6 1.9 4.6zM1407.3 560.3l-3-3.9-.9 .1 3.1 3.9z" fill="#5a5ab4" stroke="#5a5ab4"/>
<path d="M1424.7 590.5l1.8 4.5M1404.3 556.4l3 3.9" class="e"/>
<path d="M1317.1 603l-2.6-1.4-4.2 3.7 2.4 1.3z" fill="#bdb9ff" stroke="#bdb9ff"/>
<path d="M1393.1 551.3l-3.4-3.5-3.3 3.7 3.2 3.3z" fill="#c7c2ff" stroke="#c7c2ff"/>
<path d="M1426.8 611.9l-1.4-4.6-4.8 1.2 1.3 4.5z" fill="#6e6ed5" stroke="#6e6ed5"/>
<path d="M1389.7 547.8l3.4 3.5M1386.4 551.5l3.2 3.3M1425.4 607.3l1.4 4.6M1420.6 608.5l1.3 4.5" class="e"/>
<path d="M1348.2 644.2l-.4-3.4-5.5 2.3 .2 3.1z" fill="#5a5ab4" stroke="#5a5ab4"/>
<path d="M1342.3 643.1l5.5-2.3" class="e"/>
<path d="M1425 584.9l-2.3-4.6-2.3 1.2 2.2 4.4z" fill="#8080f0" stroke="#8080f0"/>
<path d="M1415.1 567.1l-2.8-4.2-2.1 1.4 2.7 4.2z" fill="#9c9cff" stroke="#9c9cff"/>
<path d="M1422.7 580.3l2.3 4.6M1412.3 562.9l2.8 4.2" class="e"/>
<path d="M1429.3 605l-1.5-4.6-3.9 2.2 1.5 4.7z" fill="#5a5ab4" stroke="#5a5ab4"/>
<path d="M1400.2 552.7l-3.2-3.7-3.9 2.3 3.2 3.6z" fill="#8989fe" stroke="#8989fe"/>
<path d="M1427.8 600.4l1.5 4.6M1397 549l3.2 3.7" class="e"/>
<path d="M1422.7 580.3l-2.4-4.5-2.2 1.3 2.3 4.4z" fill="#8686f9" stroke="#8686f9"/>
<path d="M1417.8 571.4l-2.7-4.3-2.2 1.4 2.7 4.2z" fill="#9494ff" stroke="#9494ff"/>
<path d="M1420.3 575.8l2.4 4.5M1415.1 567.1l2.7 4.3" class="e"/>
<path d="M1336.3 669.6l.9-2.3-4.3 2.5-1 2.3z" fill="#5a5ab4" stroke="#5a5ab4"/>
<path d="M1420.3 575.8l-2.5-4.4-2.2 1.3 2.5 4.4z" fill="#8d8dff" stroke="#8d8dff"/>
<path d="M1417.8 571.4l2.5 4.4" class="e"/>
<path d="M1342.6 649.1l-.1-2.9-5.2 2.2 0 2.7z" fill="#5a5ab4" stroke="#5a5ab4"/>
<path d="M1339.8 597.2l-2.5-2.4-4.4 2.5 2.6 2.4z" fill="#9494ff" stroke="#9494ff"/>
<path d="M1337.3 594.8l-4.4 2.5" class="e"/>
<path d="M1424.7 590.5l-2.1-4.6-.5 .6 2.1 4.6zM1410.2 564.3l-2.9-4-.8 .1 2.9 4.1z" fill="#5a5ab4" stroke="#5a5ab4"/>
<path d="M1422.6 585.9l2.1 4.6M1407.3 560.3l2.9 4" class="e"/>
<path d="M1359.6 633l-.8-3.4-4.4 2.5 .9 3.4z" fill="#5a5ab4" stroke="#5a5ab4"/>
<path d="M1310.3 605.3l-2.3-1.1-4.2 3.2 2.3 1z" fill="#b7b4ff" stroke="#b7b4ff"/>
<path d="M1327 603.1l-2.8-2.2-4.6 3.8 2.5 1.9z" fill="#bcb8ff" stroke="#bcb8ff"/>
<path d="M1327 603.1l-4.9 3.5" class="e"/>
<path d="M1289.7 608.8l-1.8 .4-20.9 12.1 1.8-.5z" fill="#b5b2ff" stroke="#b5b2ff"/>
<path d="M1287.9 609.2l1.8-.4M1289.7 608.8l-20.9 12" class="e"/>
<path d="M1422.6 585.9l-2.2-4.4-.5 .4 2.2 4.6zM1412.9 568.5l-2.7-4.2-.8 .2 2.9 4.2z" fill="#5a5ab4" stroke="#5a5ab4"/>
<path d="M1420.4 581.5l2.2 4.4M1410.2 564.3l2.7 4.2" class="e"/>
<path d="M1425.4 607.3l-1.5-4.7-4.7 1.5 1.4 4.4z" fill="#7272db" stroke="#7272db"/>
<path d="M1396.3 554.9l-3.2-3.6-3.5 3.5 3.1 3.5z" fill="#bfbaff" stroke="#bfbaff"/>
<path d="M1423.9 602.6l1.5 4.7M1393.1 551.3l3.2 3.6M1419.2 604.1l1.4 4.4M1389.6 554.8l3.1 3.5" class="e"/>
<path d="M1308 604.2l-2.2-8-4.3 2.6 2.3 8.6z" fill="#5a5ab4" stroke="#5a5ab4"/>
<path d="M1308 604.2l-4.2 3.2" class="e"/>
<path d="M1427.8 600.4l-1.7-4.7-3.9 2.3 1.7 4.6z" fill="#5a5ab4" stroke="#5a5ab4"/>
<path d="M1403.4 556.5l-3.2-3.8-3.9 2.2 3.2 3.8z" fill="#8484f6" stroke="#8484f6"/>
<path d="M1426.1 595.7l1.7 4.7M1400.2 552.7l3.2 3.8" class="e"/>
<path d="M1337.1 653.7l.2-2.6-4.9 2.2-.1 2.5zM1420.4 581.5l-2.3-4.4-.6 .3 2.4 4.5zM1415.6 572.7l-2.7-4.2-.6 .2 2.6 4.3z" fill="#5a5ab4" stroke="#5a5ab4"/>
<path d="M1418.1 577.1l2.3 4.4M1412.9 568.5l2.7 4.2" class="e"/>
<path d="M1305.8 596.2l-2.6-.7-4.3 2.5 2.6 .8z" fill="#b1aeff" stroke="#b1aeff"/>
<path d="M1301.5 598.8l4.3-2.6" class="e"/>
<path d="M1418.1 577.1l-2.5-4.4-.7 .3 2.6 4.4z" fill="#5a5ab4" stroke="#5a5ab4"/>
<path d="M1415.6 572.7l2.5 4.4" class="e"/>
<path d="M1319.6 604.7l-2.5-1.7-4.4 3.6 2.3 1.5z" fill="#b9b5ff" stroke="#b9b5ff"/>
<path d="M1342.3 599.7l-2.5-2.5-4.3 2.5 2.4 2.5z" fill="#8e8eff" stroke="#8e8eff"/>
<path d="M1358.8 629.6l-1-3.4-4.4 2.5 1 3.4zM1342.5 646.2l-.2-3.1-5.3 2.4 .3 2.9z" fill="#5a5ab4" stroke="#5a5ab4"/>
<path d="M1337 645.5l5.3-2.4" class="e"/>
<path d="M1298.9 598l-2.5-.5-4.4 2.5 2.5 .5z" fill="#b3b0ff" stroke="#b3b0ff"/>
<path d="M1426.1 595.7l-1.9-4.6-3.9 2.2 1.9 4.7z" fill="#5a5ab4" stroke="#5a5ab4"/>
<path d="M1406.5 560.4l-3.1-3.9-3.9 2.2 3.1 4z" fill="#7f7fee" stroke="#7f7fee"/>
<path d="M1424.2 591.1l1.9 4.6M1403.4 556.5l3.1 3.9" class="e"/>
<path d="M1423.9 602.6l-1.7-4.6-4.7 1.6 1.7 4.5z" fill="#7676e2" stroke="#7676e2"/>
<path d="M1399.5 558.7l-3.2-3.8-3.6 3.4 3.1 3.6z" fill="#b7b3ff" stroke="#b7b3ff"/>
<path d="M1422.2 598l1.7 4.6M1396.3 554.9l3.2 3.8M1417.5 599.6l1.7 4.5M1392.7 558.3l3.1 3.6" class="e"/>
<path d="M1331.9 658.1l.4-2.3-4.6 2.3-.3 2.3z" fill="#5a5ab4" stroke="#5a5ab4"/>
<path d="M1356.5 622.8l-1.9-4.6-6.2 2.8 1.7 4z" fill="#6e6ed5" stroke="#6e6ed5"/>
<path d="M1235.4 701.6l-2.8 5.7 20.8-12.1 2.9-5.6z" fill="#5a5ab4" stroke="#5a5ab4"/>
<path d="M1253.4 695.2l-20.8 12.1M1256.3 689.6l-20.9 12" class="e"/>
<path d="M1312.7 606.6l-2.4-1.3-4.2 3.1 2.2 1.3z" fill="#b4b1ff" stroke="#b4b1ff"/>
<path d="M1344.6 602.5l-2.3-2.8-4.4 2.5 2.4 2.8z" fill="#8787fa" stroke="#8787fa"/>
<path d="M1355.9 638.8l-.6-3.3-4.4 2.5 .6 3.3z" fill="#5a5ab4" stroke="#5a5ab4"/>
<path d="M1351.5 641.3l4.4-2.5" class="e"/>
<path d="M1350.1 625l2.1 .3 4.3-2.5 0 0z" fill="#b4b1ff" stroke="#b4b1ff"/>
<path d="M1356.5 622.8l-6.4 2.2" class="e"/>
<path d="M1357.8 626.2l-1.3-3.4-4.3 2.5 1.2 3.4z" fill="#5a5ab4" stroke="#5a5ab4"/>
<path d="M1327.4 660.4l6.3 7 4.3-2.6-6.1-6.7z" fill="#8a8aff" stroke="#8a8aff"/>
<path d="M1356.5 622.8l-4.3 2.5M1331.9 658.1l-4.5 2.3" class="e"/>
<path d="M1349.7 609.5l-2.8-4.1-5.3 4.3 2.5 3.6z" fill="#9393ff" stroke="#9393ff"/>
<path d="M1337.2 667.3l.8-2.5-4.3 2.6-.8 2.4z" fill="#5a5ab4" stroke="#5a5ab4"/>
<path d="M1338 664.8l-4.3 2.6" class="e"/>
<path d="M1354.6 618.2l-2.3-4.4-5.9 3.3 2 3.9z" fill="#7979e5" stroke="#7979e5"/>
<path d="M1409.4 564.5l-2.9-4.1-3.9 2.3 2.9 4.1z" fill="#7a7ae7" stroke="#7a7ae7"/>
<path d="M1424.2 591.1l-2.1-4.6-3.9 2.2 2.1 4.6z" fill="#5a5ab5" stroke="#5a5ab5"/>
<path d="M1406.5 560.4l2.9 4.1M1422.1 586.5l2.1 4.6" class="e"/>
<path d="M1337.3 651.1l0-2.7-4.9 2.3 0 2.6z" fill="#5a5ab4" stroke="#5a5ab4"/>
<path d="M1352.3 613.8l-2.6-4.3-5.6 3.8 2.3 3.8z" fill="#8585f7" stroke="#8585f7"/>
<path d="M1322.1 606.6l-2.5-1.9-4.6 3.4 2.3 1.8z" fill="#b2afff" stroke="#b2afff"/>
<path d="M1322.1 606.6l-4.8 3.3" class="e"/>
<path d="M1346.9 605.4l0 0-4.4 2.5-.9 1.8z" fill="#5a5ab4" stroke="#5a5ab4"/>
<path d="M1346.9 605.4l-5.3 4.3" class="e"/>
<path d="M1422.2 598l-1.9-4.7-4.6 1.9 1.8 4.4z" fill="#7b7be8" stroke="#7b7be8"/>
<path d="M1402.6 562.7l-3.1-4-3.7 3.2 2.9 3.8z" fill="#aeacff" stroke="#aeacff"/>
<path d="M1420.3 593.3l1.9 4.7M1399.5 558.7l3.1 4M1415.7 595.2l1.8 4.4M1395.8 561.9l2.9 3.8" class="e"/>
<path d="M1346.9 605.4l-2.3-2.9-4.3 2.5 2.2 2.9z" fill="#7f7fef" stroke="#7f7fef"/>
<path d="M1342.5 607.9l4.4-2.5" class="e"/>
<path d="M1237 654.7l-6.5-1-20.9 12.1 6.5 .9z" fill="#b4b1ff" stroke="#b4b1ff"/>
<path d="M1237 654.7l-20.9 12M1209.6 665.8l20.9-12.1" class="e"/>
<path d="M1422.1 586.5l-2.2-4.6-3.9 2.3 2.2 4.5z" fill="#5f5fbe" stroke="#5f5fbe"/>
<path d="M1412.3 568.7l-2.9-4.2-3.9 2.3 2.9 4.2z" fill="#7575df" stroke="#7575df"/>
<path d="M1419.9 581.9l2.2 4.6M1409.4 564.5l2.9 4.2" class="e"/>
<path d="M1335.5 599.7l-2.6-2.4-4.3 2.5 2.5 2.4z" fill="#9494ff" stroke="#9494ff"/>
<path d="M1332.9 597.3l-4.3 2.5" class="e"/>
<path d="M1306.1 608.4l-2.3-1-4.3 2.8 2.2 1z" fill="#b0adff" stroke="#b0adff"/>
<path d="M1350.1 625l-1.7-4-5.9 2.7 1.6 3.6z" fill="#6b6bcf" stroke="#6b6bcf"/>
<path d="M1419.9 581.9l-2.4-4.5-3.9 2.3 2.4 4.5z" fill="#6565c6" stroke="#6565c6"/>
<path d="M1414.9 573l-2.6-4.3-3.9 2.3 2.7 4.3z" fill="#6f6fd7" stroke="#6f6fd7"/>
<path d="M1417.5 577.4l2.4 4.5M1412.3 568.7l2.6 4.3" class="e"/>
<path d="M1355.3 635.5l-.9-3.4-4.3 2.5 .8 3.4z" fill="#5a5ab4" stroke="#5a5ab4"/>
<path d="M1417.5 577.4l-2.6-4.4-3.8 2.3 2.5 4.4z" fill="#6a6ace" stroke="#6a6ace"/>
<path d="M1414.9 573l2.6 4.4" class="e"/>
<path d="M1420.3 593.3l-2.1-4.6-4.5 2 2 4.5z" fill="#8080f0" stroke="#8080f0"/>
<path d="M1405.5 566.8l-2.9-4.1-3.9 3 2.8 4z" fill="#a6a5ff" stroke="#a6a5ff"/>
<path d="M1418.2 588.7l2.1 4.6M1402.6 562.7l2.9 4.1M1413.7 590.7l2 4.5M1398.7 565.7l2.8 4" class="e"/>
<path d="M1344.1 613.3l-2.5-3.6-5 3.9 2.1 3.3z" fill="#8b8bff" stroke="#8b8bff"/>
<path d="M1315 608.1l-2.3-1.5-4.4 3.1 2.2 1.5z" fill="#afadff" stroke="#afadff"/>
<path d="M1348.4 621l-2-3.9-5.7 3.1 1.8 3.5z" fill="#7575df" stroke="#7575df"/>
<path d="M1346.4 617.1l-2.3-3.8-5.4 3.6 2 3.3z" fill="#7f7fef" stroke="#7f7fef"/>
<path d="M1332.3 655.8l.1-2.5-4.5 2.4-.2 2.4zM1303.8 607.4l-2.3-8.6-4.4 2.5 2.4 8.9z" fill="#5a5ab4" stroke="#5a5ab4"/>
<path d="M1303.8 607.4l-4.3 2.8" class="e"/>
<path d="M1329.3 675.9l1.4-1.8-20.8 12.1-1.4 1.8z" fill="#5a5ab4" stroke="#5a5ab4"/>
<path d="M1308.5 688l20.8-12.1" class="e"/>
<path d="M1418.2 588.7l-2.2-4.5-4.4 2.2 2.1 4.3z" fill="#8585f7" stroke="#8585f7"/>
<path d="M1408.4 571l-2.9-4.2-4 2.9 2.8 4z" fill="#9f9fff" stroke="#9f9fff"/>
<path d="M1416 584.2l2.2 4.5M1405.5 566.8l2.9 4.2M1411.6 586.4l2.1 4.3M1401.5 569.7l2.8 4" class="e"/>
<path d="M1301.5 598.8l-2.6-.8-4.4 2.5 2.6 .8z" fill="#b1aeff" stroke="#b1aeff"/>
<path d="M1297.1 601.3l4.4-2.5" class="e"/>
<path d="M1337.3 648.4l-.3-2.9-4.8 2.5 .2 2.7z" fill="#5a5ab4" stroke="#5a5ab4"/>
<path d="M1332.2 648l4.8-2.5" class="e"/>
<path d="M1337.9 602.2l-2.4-2.5-4.4 2.5 2.5 2.6z" fill="#8e8eff" stroke="#8e8eff"/>
<path d="M1416 584.2l-2.4-4.5-4.3 2.4 2.3 4.3z" fill="#8b8bff" stroke="#8b8bff"/>
<path d="M1411.1 575.3l-2.7-4.3-4.1 2.7 2.5 4.1z" fill="#9797ff" stroke="#9797ff"/>
<path d="M1413.6 579.7l2.4 4.5M1408.4 571l2.7 4.3M1409.3 582.1l2.3 4.3M1404.3 573.7l2.5 4.1" class="e"/>
<path d="M1344.1 627.3l3.7 .5 4.4-2.5-2.1-.3z" fill="#b4b1ff" stroke="#b4b1ff"/>
<path d="M1350.1 625l-6 2.3" class="e"/>
<path d="M1413.6 579.7l-2.5-4.4-4.3 2.5 2.5 4.3z" fill="#9191ff" stroke="#9191ff"/>
<path d="M1411.1 575.3l2.5 4.4M1406.8 577.8l2.5 4.3" class="e"/>
<path d="M1354.4 632.1l-1-3.4-4.3 2.5 1 3.4zM1274.9 696.4l2.5 8.8 20.8-12-2.4-8.9z" fill="#5a5ab4" stroke="#5a5ab4"/>
<path d="M1298.2 693.2l-20.8 12M1295.8 684.3l-20.9 12.1" class="e"/>
<path d="M1341.6 609.7l.9-1.8-4.3 2.5-1.6 3.2z" fill="#5a5ab4" stroke="#5a5ab4"/>
<path d="M1341.6 609.7l-5 3.9" class="e"/>
<path d="M1344.1 627.3l-1.6-3.6-5.4 2.7 1.4 3.2z" fill="#6767ca" stroke="#6767ca"/>
<path d="M1308.3 609.7l-2.2-1.3-4.4 2.8 2.2 1.2z" fill="#acaaff" stroke="#acaaff"/>
<path d="M1317.3 609.9l-2.3-1.8-4.5 3.1 2.2 1.7z" fill="#a9a7ff" stroke="#a9a7ff"/>
<path d="M1317.3 609.9l-4.6 3" class="e"/>
<path d="M1338.7 616.9l-2.1-3.3-4.9 3.6 1.9 3z" fill="#8585f7" stroke="#8585f7"/>
<path d="M1340.3 605l-2.4-2.8-4.3 2.6 2.3 2.7z" fill="#8787fa" stroke="#8787fa"/>
<path d="M1351.5 641.3l-.6-3.3-4.3 2.5 .6 3.3z" fill="#5a5ab4" stroke="#5a5ab4"/>
<path d="M1347.2 643.8l4.3-2.5" class="e"/>
<path d="M1342.5 623.7l-1.8-3.5-5.3 3 1.7 3.2z" fill="#7171d9" stroke="#7171d9"/>
<path d="M1340.7 620.2l-2-3.3-5.1 3.3 1.8 3z" fill="#7a7ae8" stroke="#7a7ae8"/>
<path d="M1332.4 653.3l0-2.6-4.5 2.4 0 2.6zM1353.4 628.7l-1.2-3.4-4.4 2.5 1.3 3.4z" fill="#5a5ab4" stroke="#5a5ab4"/>
<path d="M1352.2 625.3l-4.4 2.5" class="e"/>
<path d="M1289.6 599.8l-2.4 .1-20.8 12 2.3 0z" fill="#b5b2ff" stroke="#b5b2ff"/>
<path d="M1287.2 599.9l-20.8 12" class="e"/>
<path d="M1342.5 607.9l-2.2-2.9-4.4 2.5 2.3 2.9z" fill="#7f7fef" stroke="#7f7fef"/>
<path d="M1338.2 610.4l4.3-2.5" class="e"/>
<path d="M1331.1 602.2l-2.5-2.4-4.4 2.6 2.6 2.3z" fill="#9494ff" stroke="#9494ff"/>
<path d="M1328.6 599.8l-4.4 2.6" class="e"/>
<path d="M1330.7 674.1l1.2-2-20.9 12-1.1 2.1z" fill="#5a5ab4" stroke="#5a5ab4"/>
<path d="M1262.4 624.1l-6.3-7-20.8 12.1 6.3 6.9z" fill="#8a8aff" stroke="#8a8aff"/>
<path d="M1310.5 611.2l-2.2-1.5-4.4 2.7 2.2 1.5z" fill="#a7a6ff" stroke="#a7a6ff"/>
<path d="M1262.4 624.1l-20.8 12M1235.3 629.2l20.8-12.1" class="e"/>
<path d="M1350.9 638l-.8-3.4-4.4 2.5 .9 3.4z" fill="#5a5ab4" stroke="#5a5ab4"/>
<path d="M1338.5 629.6l5 .7 4.3-2.5-3.7-.5z" fill="#b4b1ff" stroke="#b4b1ff"/>
<path d="M1344.1 627.3l-5.6 2.3" class="e"/>
<path d="M1332.4 650.7l-.2-2.7-4.6 2.5 .3 2.6z" fill="#5a5ab4" stroke="#5a5ab4"/>
<path d="M1327.6 650.5l4.6-2.5" class="e"/>
<path d="M1338.5 629.6l-1.4-3.2-5.1 2.6 1.3 3z" fill="#6464c5" stroke="#6464c5"/>
<path d="M1336.6 613.6l1.6-3.2-4.4 2.5-2.1 4.3z" fill="#5a5ab4" stroke="#5a5ab4"/>
<path d="M1336.6 613.6l-4.9 3.6" class="e"/>
<path d="M1333.6 620.2l-1.9-3-4.8 3.3 1.9 2.7z" fill="#7f7fef" stroke="#7f7fef"/>
<path d="M1337.1 626.4l-1.7-3.2-5 2.9 1.6 2.9z" fill="#6d6dd3" stroke="#6d6dd3"/>
<path d="M1335.4 623.2l-1.8-3-4.8 3 1.6 2.9z" fill="#7676e1" stroke="#7676e1"/>
<path d="M1333.6 604.8l-2.5-2.6-4.3 2.5 2.4 2.6z" fill="#8e8eff" stroke="#8e8eff"/>
<path d="M1350.1 634.6l-1-3.4-4.4 2.5 1 3.4z" fill="#5a5ab4" stroke="#5a5ab4"/>
<path d="M1312.7 612.9l-2.2-1.7-4.4 2.7 2.2 1.6z" fill="#a2a1ff" stroke="#a2a1ff"/>
<path d="M1312.7 612.9l-4.4 2.6" class="e"/>
<path d="M1292 600l-2.4-.2-20.9 12.1 2.4 .2z" fill="#b4b1ff" stroke="#b4b1ff"/>
<path d="M1335.9 607.5l-2.3-2.7-4.4 2.5 2.4 2.7z" fill="#8787fa" stroke="#8787fa"/>
<path d="M1347.2 643.8l-.6-3.3-4.4 2.5 .6 3.4z" fill="#5a5ab4" stroke="#5a5ab4"/>
<path d="M1342.8 646.4l4.4-2.6" class="e"/>
<path d="M1349.1 631.2l-1.3-3.4-4.3 2.5 1.2 3.4z" fill="#5a5ab4" stroke="#5a5ab4"/>
<path d="M1347.8 627.8l-4.3 2.5" class="e"/>
<path d="M1331.9 672.1l1-2.3-20.9 12.1-1 2.2z" fill="#5a5ab4" stroke="#5a5ab4"/>
<path d="M1338.2 610.4l-2.3-2.9-4.3 2.5 2.2 2.9z" fill="#7f7fef" stroke="#7f7fef"/>
<path d="M1333.8 612.9l4.4-2.5" class="e"/>
<path d="M1326.8 604.7l-2.6-2.3-4.3 2.5 2.5 2.3z" fill="#9494ff" stroke="#9494ff"/>
<path d="M1324.2 602.4l-4.3 2.5" class="e"/>
<path d="M1333.3 632l-1.3-3-4.9 2.6 1.3 2.9z" fill="#6060bf" stroke="#6060bf"/>
<path d="M1333.3 632l5.8 .8 4.4-2.5-5-.7z" fill="#b4b1ff" stroke="#b4b1ff"/>
<path d="M1338.5 629.6l-5.2 2.4" class="e"/>
<path d="M1328.8 623.2l-1.9-2.7-4.6 2.9 1.8 2.7z" fill="#7a7ae7" stroke="#7a7ae7"/>
<path d="M1346.6 640.5l-.9-3.4-4.3 2.5 .8 3.4z" fill="#5a5ab4" stroke="#5a5ab4"/>
<path d="M1332 629l-1.6-2.9-4.7 2.7 1.4 2.8z" fill="#6969cd" stroke="#6969cd"/>
<path d="M1330.4 626.1l-1.6-2.9-4.7 2.9 1.6 2.7z" fill="#7171da" stroke="#7171da"/>
<path d="M1331.7 617.2l2.1-4.3-4.3 2.5-2.6 5.1z" fill="#5a5ab4" stroke="#5a5ab4"/>
<path d="M1331.7 617.2l-4.8 3.3" class="e"/>
<path d="M1329.2 607.3l-2.4-2.6-4.4 2.5 2.5 2.6z" fill="#8e8eff" stroke="#8e8eff"/>
<path d="M1345.7 637.1l-1-3.4-4.4 2.5 1.1 3.4z" fill="#5a5ab4" stroke="#5a5ab4"/>
<path d="M1294.5 600.5l-2.5-.5-20.9 12.1 2.6 .5z" fill="#b3b0ff" stroke="#b3b0ff"/>
<path d="M1327.4 660.4l.3-2.3-20.8 12.1-.4 2.3z" fill="#5a5ab4" stroke="#5a5ab4"/>
<path d="M1327.7 658.1l-.3 2.3" class="e"/>
<path d="M1306.5 672.5l6.3 6.9 20.9-12-6.3-7z" fill="#8a8aff" stroke="#8a8aff"/>
<path d="M1327.4 660.4l-20.9 12.1" class="e"/>
<path d="M1332.9 669.8l.8-2.4-20.9 12-.8 2.5z" fill="#5a5ab4" stroke="#5a5ab4"/>
<path d="M1333.7 667.4l-20.9 12" class="e"/>
<path d="M1331.6 610l-2.4-2.7-4.3 2.5 2.3 2.7z" fill="#8787fa" stroke="#8787fa"/>
<path d="M1342.8 646.4l-.6-3.4-4.4 2.5 .7 3.4z" fill="#5a5ab4" stroke="#5a5ab4"/>
<path d="M1338.5 648.9l4.3-2.5" class="e"/>
<path d="M1344.7 633.7l-1.2-3.4-4.4 2.5 1.2 3.4z" fill="#5a5ab4" stroke="#5a5ab4"/>
<path d="M1343.5 630.3l-4.4 2.5" class="e"/>
<path d="M1299.2 683.2l1.6-1-20.9 12.1-1.5 .9z" fill="#5a5ab4" stroke="#5a5ab4"/>
<path d="M1299.2 683.2l-20.8 12" class="e"/>
<path d="M1328.4 634.5l-1.3-2.9-4.5 2.5 1.3 2.8z" fill="#5d5db9" stroke="#5d5db9"/>
<path d="M1333.8 612.9l-2.2-2.9-4.4 2.5 2.3 2.9z" fill="#7f7fef" stroke="#7f7fef"/>
<path d="M1328.4 634.5l6.3 .8 4.4-2.5-5.8-.8z" fill="#b4b1ff" stroke="#b4b1ff"/>
<path d="M1329.5 615.4l4.3-2.5M1333.3 632l-4.9 2.5" class="e"/>
<path d="M1301.7 611.2l-2.2-1-20.8 12 2.2 1z" fill="#adabff" stroke="#adabff"/>
<path d="M1299.5 610.2l2.2 1" class="e"/>
<path d="M1324.1 626.1l-1.8-2.7-4.4 2.7 1.7 2.6z" fill="#7575e0" stroke="#7575e0"/>
<path d="M1327.1 631.6l-1.4-2.8-4.5 2.6 1.4 2.7z" fill="#6565c7" stroke="#6565c7"/>
<path d="M1322.4 607.2l-2.5-2.3-4.4 2.5 2.5 2.3z" fill="#9494ff" stroke="#9494ff"/>
<path d="M1319.9 604.9l-4.4 2.5" class="e"/>
<path d="M1325.7 628.8l-1.6-2.7-4.5 2.6 1.6 2.7z" fill="#6d6dd3" stroke="#6d6dd3"/>
<path d="M1326.9 620.5l2.6-5.1-4.4 2.5-2.8 5.5z" fill="#5a5ab4" stroke="#5a5ab4"/>
<path d="M1326.9 620.5l-4.6 2.9" class="e"/>
<path d="M1327.7 658.1l.2-2.4-20.9 12-.1 2.5z" fill="#5a5ab4" stroke="#5a5ab4"/>
<path d="M1327.9 655.7l-.2 2.4" class="e"/>
<path d="M1342.2 643l-.8-3.4-4.4 2.6 .8 3.3zM1299.5 610.2l-2.4-8.9-20.9 12 2.5 8.9z" fill="#5a5ab4" stroke="#5a5ab4"/>
<path d="M1299.5 610.2l-20.8 12" class="e"/>
<path d="M1297.1 601.3l-2.6-.8-20.8 12.1 2.5 .7z" fill="#b1aeff" stroke="#b1aeff"/>
<path d="M1276.2 613.3l20.9-12" class="e"/>
<path d="M1267 621.3l-1.6 .7-20.9 12 1.7-.7z" fill="#b5b2ff" stroke="#b5b2ff"/>
<path d="M1265.4 622l-20.9 12" class="e"/>
<path d="M1324.9 609.8l-2.5-2.6-4.4 2.5 2.5 2.6z" fill="#8e8eff" stroke="#8e8eff"/>
<path d="M1341.4 639.6l-1.1-3.4-4.3 2.6 1 3.4z" fill="#5a5ab4" stroke="#5a5ab4"/>
<path d="M1303.9 612.4l-2.2-1.2-20.8 12 2.2 1.2z" fill="#a9a7ff" stroke="#a9a7ff"/>
<path d="M1301.7 611.2l2.2 1.2" class="e"/>
<path d="M1300.8 682.2l1.4-1.1-20.9 12-1.4 1.2z" fill="#5a5ab4" stroke="#5a5ab4"/>
<path d="M1302.2 681.1l-20.9 12" class="e"/>
<path d="M1327.9 655.7l0-2.6-20.9 12.1 0 2.5z" fill="#5a5ab4" stroke="#5a5ab4"/>
<path d="M1327.9 653.1l0 2.6" class="e"/>
<path d="M1327.2 612.5l-2.3-2.7-4.4 2.5 2.4 2.7z" fill="#8787fa" stroke="#8787fa"/>
<path d="M1338.5 648.9l-.7-3.4-4.3 2.6 .6 3.3z" fill="#5a5ab4" stroke="#5a5ab4"/>
<path d="M1334.1 651.4l4.4-2.5" class="e"/>
<path d="M1340.3 636.2l-1.2-3.4-4.4 2.5 1.3 3.5z" fill="#5a5ab4" stroke="#5a5ab4"/>
<path d="M1339.1 632.8l-4.4 2.5" class="e"/>
<path d="M1323.9 636.9l6.5 1 4.3-2.6-6.3-.8z" fill="#b4b1ff" stroke="#b4b1ff"/>
<path d="M1328.4 634.5l-4.5 2.4" class="e"/>
<path d="M1329.5 615.4l-2.3-2.9-4.3 2.5 2.2 2.9z" fill="#7f7fef" stroke="#7f7fef"/>
<path d="M1325.1 617.9l4.4-2.5" class="e"/>
<path d="M1306.1 613.9l-2.2-1.5-20.8 12 2.2 1.5z" fill="#a4a3ff" stroke="#a4a3ff"/>
<path d="M1303.9 612.4l2.2 1.5" class="e"/>
<path d="M1268.8 620.8l-1.8 .5-20.8 12 1.8-.4z" fill="#b5b2ff" stroke="#b5b2ff"/>
<path d="M1268.8 620.8l-20.8 12.1" class="e"/>
<path d="M1322.3 623.4l2.8-5.5-4.3 2.6-2.9 5.6z" fill="#5a5ab4" stroke="#5a5ab4"/>
<path d="M1322.3 623.4l-4.4 2.7" class="e"/>
<path d="M1318 609.7l-2.5-2.3-4.3 2.5 2.5 2.4z" fill="#9494ff" stroke="#9494ff"/>
<path d="M1315.5 607.4l-4.3 2.5" class="e"/>
<path d="M1327.9 653.1l-.3-2.6-20.8 12 .2 2.7z" fill="#5a5ab4" stroke="#5a5ab4"/>
<path d="M1306.8 662.5l20.8-12M1327.6 650.5l.3 2.6" class="e"/>
<path d="M1337.8 645.5l-.8-3.3-4.3 2.5 .8 3.4z" fill="#5a5ab4" stroke="#5a5ab4"/>
<path d="M1320.5 612.3l-2.5-2.6-4.3 2.6 2.4 2.5z" fill="#8e8eff" stroke="#8e8eff"/>
<path d="M1308.3 615.5l-2.2-1.6-20.8 12 2.1 1.7z" fill="#9e9eff" stroke="#9e9eff"/>
<path d="M1306.1 613.9l2.2 1.6M1308.3 615.5l-20.9 12.1" class="e"/>
<path d="M1214.6 713.7l-2.9 5.6 20.9-12 2.8-5.7z" fill="#5a5ab4" stroke="#5a5ab4"/>
<path d="M1232.6 707.3l-20.9 12M1235.4 701.6l-20.8 12.1" class="e"/>
<path d="M1337 642.2l-1-3.4-4.4 2.5 1.1 3.4z" fill="#5a5ab4" stroke="#5a5ab4"/>
<path d="M1322.9 615l-2.4-2.7-4.4 2.5 2.4 2.8z" fill="#8787fa" stroke="#8787fa"/>
<path d="M1336 638.8l-1.3-3.5-4.3 2.6 1.2 3.4z" fill="#5a5ab4" stroke="#5a5ab4"/>
<path d="M1334.7 635.3l-4.3 2.6" class="e"/>
<path d="M1216.1 666.7l-6.5-.9-20.8 12 6.4 .9z" fill="#b4b1ff" stroke="#b4b1ff"/>
<path d="M1216.1 666.7l-20.9 12M1188.8 677.8l20.8-12" class="e"/>
<path d="M1325.1 617.9l-2.2-2.9-4.4 2.6 2.3 2.9z" fill="#7f7fef" stroke="#7f7fef"/>
<path d="M1320.8 620.5l4.3-2.6" class="e"/>
<path d="M1308.5 688l1.4-1.8-20.9 12-1.4 1.8z" fill="#5a5ab4" stroke="#5a5ab4"/>
<path d="M1287.6 700l20.9-12" class="e"/>
<path d="M1254 708.4l2.5 8.9 20.9-12.1-2.5-8.8z" fill="#5a5ab4" stroke="#5a5ab4"/>
<path d="M1277.4 705.2l-20.9 12.1M1274.9 696.4l-20.9 12" class="e"/>
<path d="M1268.7 611.9l-2.3 0-20.9 12.1 2.4-.1z" fill="#b5b2ff" stroke="#b5b2ff"/>
<path d="M1266.4 611.9l-20.9 12.1" class="e"/>
<path d="M1323.9 636.9l-1.3-2.8-20.8 12.1 1.3 2.8z" fill="#5b5bb6" stroke="#5b5bb6"/>
<path d="M1322.6 634.1l1.3 2.8" class="e"/>
<path d="M1319.6 628.7l-1.7-2.6-20.9 12 1.8 2.6z" fill="#7373dd" stroke="#7373dd"/>
<path d="M1317.9 626.1l1.7 2.6" class="e"/>
<path d="M1309.9 686.2l1.1-2.1-20.8 12.1-1.2 2z" fill="#5a5ab4" stroke="#5a5ab4"/>
<path d="M1322.6 634.1l-1.4-2.7-20.9 12 1.5 2.8z" fill="#6363c3" stroke="#6363c3"/>
<path d="M1321.2 631.4l1.4 2.7" class="e"/>
<path d="M1241.6 636.1l-6.3-6.9-20.9 12 6.3 6.9z" fill="#8a8aff" stroke="#8a8aff"/>
<path d="M1241.6 636.1l-20.9 12M1214.4 641.2l20.9-12" class="e"/>
<path d="M1321.2 631.4l-1.6-2.7-20.8 12 1.5 2.7z" fill="#6b6bd0" stroke="#6b6bd0"/>
<path d="M1319.6 628.7l1.6 2.7" class="e"/>
<path d="M1271.1 612.1l-2.4-.2-20.8 12 2.4 .2z" fill="#b4b1ff" stroke="#b4b1ff"/>
<path d="M1334.1 651.4l-.6-3.3-20.9 12 .6 3.3z" fill="#5a5ab4" stroke="#5a5ab4"/>
<path d="M1313.2 663.4l20.9-12" class="e"/>
<path d="M1311 684.1l1-2.2-20.8 12-1 2.3z" fill="#5a5ab4" stroke="#5a5ab4"/>
<path d="M1303.1 649l6.4 .9 20.9-12-6.5-1z" fill="#b4b1ff" stroke="#b4b1ff"/>
<path d="M1323.9 636.9l-20.8 12.1" class="e"/>
<path d="M1317.9 626.1l2.9-5.6-20.9 12-2.9 5.6z" fill="#5a5ab4" stroke="#5a5ab4"/>
<path d="M1317.9 626.1l-20.9 12" class="e"/>
<path d="M1313.7 612.3l-2.5-2.4-20.9 12.1 2.5 2.3z" fill="#9494ff" stroke="#9494ff"/>
<path d="M1311.2 609.9l-20.9 12.1" class="e"/>
<path d="M1333.5 648.1l-.8-3.4-20.9 12 .8 3.4z" fill="#5a5ab4" stroke="#5a5ab4"/>
<path d="M1273.7 612.6l-2.6-.5-20.8 12 2.5 .5z" fill="#b3b0ff" stroke="#b3b0ff"/>
<path d="M1316.1 614.8l-2.4-2.5-20.9 12 2.5 2.6z" fill="#8e8eff" stroke="#8e8eff"/>
<path d="M1306.5 672.5l.4-2.3-20.9 12-.4 2.3zM1332.7 644.7l-1.1-3.4-20.8 12 1 3.4z" fill="#5a5ab4" stroke="#5a5ab4"/>
<path d="M1285.6 684.5l6.3 7 20.9-12.1-6.3-6.9z" fill="#8a8aff" stroke="#8a8aff"/>
<path d="M1306.5 672.5l-20.9 12" class="e"/>
<path d="M1312 681.9l.8-2.5-20.9 12.1-.7 2.4z" fill="#5a5ab4" stroke="#5a5ab4"/>
<path d="M1312.8 679.4l-20.9 12.1" class="e"/>
<path d="M1278.4 695.2l1.5-.9-20.9 12-1.5 1z" fill="#5a5ab4" stroke="#5a5ab4"/>
<path d="M1278.4 695.2l-20.9 12.1" class="e"/>
<path d="M1318.5 617.6l-2.4-2.8-20.8 12.1 2.3 2.7z" fill="#8787fa" stroke="#8787fa"/>
<path d="M1331.6 641.3l-1.2-3.4-20.9 12 1.3 3.4z" fill="#5a5ab4" stroke="#5a5ab4"/>
<path d="M1330.4 637.9l-20.9 12" class="e"/>
<path d="M1280.9 623.2l-2.2-1-20.9 12 2.2 1.1z" fill="#adabff" stroke="#adabff"/>
<path d="M1320.8 620.5l-2.3-2.9-20.9 12 2.3 2.9z" fill="#7f7fef" stroke="#7f7fef"/>
<path d="M1299.9 632.5l20.9-12" class="e"/>
<path d="M1306.9 670.2l.1-2.5-20.8 12.1-.2 2.4zM1278.7 622.2l-2.5-8.9-20.8 12.1 2.4 8.8z" fill="#5a5ab4" stroke="#5a5ab4"/>
<path d="M1278.7 622.2l-20.9 12" class="e"/>
<path d="M1276.2 613.3l-2.5-.7-20.9 12 2.6 .8z" fill="#b1aeff" stroke="#b1aeff"/>
<path d="M1255.4 625.4l20.8-12.1" class="e"/>
<path d="M1246.2 633.3l-1.7 .7-20.9 12 1.7-.7z" fill="#b5b2ff" stroke="#b5b2ff"/>
<path d="M1244.5 634l-20.9 12" class="e"/>
<path d="M1283.1 624.4l-2.2-1.2-20.9 12.1 2.2 1.2z" fill="#a9a7ff" stroke="#a9a7ff"/>
<path d="M1279.9 694.3l1.4-1.2-20.9 12.1-1.4 1.1z" fill="#5a5ab4" stroke="#5a5ab4"/>
<path d="M1281.3 693.1l-20.9 12.1" class="e"/>
<path d="M1307 667.7l0-2.5-20.9 12 .1 2.6z" fill="#5a5ab4" stroke="#5a5ab4"/>
<path d="M1285.3 625.9l-2.2-1.5-20.9 12.1 2.2 1.5z" fill="#a4a3ff" stroke="#a4a3ff"/>
<path d="M1248 632.9l-1.8 .4-20.9 12 1.8-.4z" fill="#b5b2ff" stroke="#b5b2ff"/>
<path d="M1248 632.9l-20.9 12" class="e"/>
<path d="M1307 665.2l-.2-2.7-20.9 12.1 .2 2.6z" fill="#5a5ab4" stroke="#5a5ab4"/>
<path d="M1285.9 674.6l20.9-12.1" class="e"/>
<path d="M1287.4 627.6l-2.1-1.7-20.9 12.1 2.2 1.6z" fill="#9e9eff" stroke="#9e9eff"/>
<path d="M1287.4 627.6l-20.8 12" class="e"/>
<path d="M1193.7 725.7l-2.9 5.7 20.9-12.1 2.9-5.6z" fill="#5a5ab4" stroke="#5a5ab4"/>
<path d="M1211.7 719.3l-20.9 12.1M1214.6 713.7l-20.9 12" class="e"/>
<path d="M1195.2 678.7l-6.4-.9-20.9 12.1 6.5 .9z" fill="#b4b1ff" stroke="#b4b1ff"/>
<path d="M1195.2 678.7l-20.8 12.1M1167.9 689.9l20.9-12.1" class="e"/>
<path d="M1287.6 700l1.4-1.8-20.9 12.1-1.4 1.8z" fill="#5a5ab4" stroke="#5a5ab4"/>
<path d="M1266.7 712.1l20.9-12.1" class="e"/>
<path d="M1233.2 720.4l2.4 8.9 20.9-12-2.5-8.9z" fill="#5a5ab4" stroke="#5a5ab4"/>
<path d="M1256.5 717.3l-20.9 12M1254 708.4l-20.8 12" class="e"/>
<path d="M1247.9 623.9l-2.4 .1-20.8 12 2.3-.1z" fill="#b5b2ff" stroke="#b5b2ff"/>
<path d="M1245.5 624l-20.8 12" class="e"/>
<path d="M1303.1 649l-1.3-2.8-20.9 12 1.3 2.8z" fill="#5b5bb6" stroke="#5b5bb6"/>
<path d="M1298.8 640.7l-1.8-2.6-20.8 12.1 1.7 2.6z" fill="#7373dd" stroke="#7373dd"/>
<path d="M1289 698.2l1.2-2-20.9 12-1.2 2.1z" fill="#5a5ab4" stroke="#5a5ab4"/>
<path d="M1301.8 646.2l-1.5-2.8-20.8 12.1 1.4 2.7z" fill="#6363c3" stroke="#6363c3"/>
<path d="M1220.7 648.1l-6.3-6.9-20.9 12.1 6.3 6.9z" fill="#8a8aff" stroke="#8a8aff"/>
<path d="M1220.7 648.1l-20.9 12.1M1193.5 653.3l20.9-12.1" class="e"/>
<path d="M1300.3 643.4l-1.5-2.7-20.9 12.1 1.6 2.7z" fill="#6b6bd0" stroke="#6b6bd0"/>
<path d="M1181.2 720.8l2.3 2.9-1.8-2.9-2.2-3z" fill="#6d6dd3" stroke="#6d6dd3"/>
<path d="M1183.5 723.7l-2.3-2.9M1181.7 720.8l-2.2-3M1179.5 717.8l1.7 3" class="e"/>
<path d="M1170.4 700l1.2 3.4 1.9 3.6-1.3-3.4z" fill="#8888fc" stroke="#8888fc"/>
<path d="M1171.6 703.4l-1.2-3.4M1171.6 703.4l1.9 3.6M1173.5 707l-1.3-3.4" class="e"/>
<path d="M1250.3 624.1l-2.4-.2-20.9 12 2.4 .3z" fill="#b4b1ff" stroke="#b4b1ff"/>
<path d="M1183.5 723.7l2.4 2.7-1.8-2.8-2.4-2.8z" fill="#6969cd" stroke="#6969cd"/>
<path d="M1185.9 726.4l-2.4-2.7M1184.1 723.6l-2.4-2.8" class="e"/>
<path d="M1313.2 663.4l-.6-3.3-20.8 12 .6 3.4z" fill="#5a5ab4" stroke="#5a5ab4"/>
<path d="M1292.4 675.5l20.8-12.1" class="e"/>
<path d="M1290.2 696.2l1-2.3-20.9 12.1-1 2.2z" fill="#5a5ab4" stroke="#5a5ab4"/>
<path d="M1169.3 696.6l1.1 3.4 1.8 3.6-1.1-3.5z" fill="#8c8cff" stroke="#8c8cff"/>
<path d="M1170.4 700l-1.1-3.4M1172.2 703.6l-1.1-3.5" class="e"/>
<path d="M1282.2 661l6.5 .9 20.8-12-6.4-.9z" fill="#b4b1ff" stroke="#b4b1ff"/>
<path d="M1303.1 649l-20.9 12" class="e"/>
<path d="M1185.9 726.4l2.4 2.6-1.8-2.9-2.4-2.5z" fill="#6565c7" stroke="#6565c7"/>
<path d="M1188.3 729l-2.4-2.6M1186.5 726.1l-2.4-2.5" class="e"/>
<path d="M1297 638.1l2.9-5.6-20.9 12-2.8 5.7z" fill="#5a5ab4" stroke="#5a5ab4"/>
<path d="M1297 638.1l-20.8 12.1" class="e"/>
<path d="M1292.8 624.3l-2.5-2.3-20.9 12 2.6 2.4z" fill="#9494ff" stroke="#9494ff"/>
<path d="M1290.3 622l-20.9 12" class="e"/>
<path d="M1312.6 660.1l-.8-3.4-20.9 12.1 .9 3.3z" fill="#5a5ab4" stroke="#5a5ab4"/>
<path d="M1168.5 693.2l.8 3.4 1.8 3.5-.8-3.3z" fill="#9090ff" stroke="#9090ff"/>
<path d="M1169.3 696.6l-.8-3.4M1171.1 700.1l-.8-3.3" class="e"/>
<path d="M1188.3 729l2.5 2.4-1.7-3-2.6-2.3z" fill="#6262c2" stroke="#6262c2"/>
<path d="M1190.8 731.4l-2.5-2.4M1189.1 728.4l-2.6-2.3" class="e"/>
<path d="M1252.8 624.6l-2.5-.5-20.9 12.1 2.5 .4z" fill="#b3b0ff" stroke="#b3b0ff"/>
<path d="M1295.3 626.9l-2.5-2.6-20.8 12.1 2.4 2.5z" fill="#8e8eff" stroke="#8e8eff"/>
<path d="M1285.6 684.5l.4-2.3-20.9 12.1-.3 2.3zM1311.8 656.7l-1-3.4-20.9 12.1 1 3.4z" fill="#5a5ab4" stroke="#5a5ab4"/>
<path d="M1264.8 696.6l6.3 6.9 20.8-12-6.3-7z" fill="#8a8aff" stroke="#8a8aff"/>
<path d="M1285.6 684.5l-20.8 12.1" class="e"/>
<path d="M1291.2 693.9l.7-2.4-20.8 12-.8 2.5z" fill="#5a5ab4" stroke="#5a5ab4"/>
<path d="M1291.9 691.5l-20.8 12" class="e"/>
<path d="M1167.9 689.9l.6 3.3 1.8 3.6-.5-3.4z" fill="#9494ff" stroke="#9494ff"/>
<path d="M1168.5 693.2l-.6-3.3M1170.3 696.8l-.5-3.4" class="e"/>
<path d="M1257.5 707.3l1.5-1-20.8 12.1-1.6 .9z" fill="#5a5ab4" stroke="#5a5ab4"/>
<path d="M1257.5 707.3l-20.9 12" class="e"/>
<path d="M1297.6 629.6l-2.3-2.7-20.9 12 2.4 2.7z" fill="#8787fa" stroke="#8787fa"/>
<path d="M1310.8 653.3l-1.3-3.4-20.8 12 1.2 3.5z" fill="#5a5ab4" stroke="#5a5ab4"/>
<path d="M1309.5 649.9l-20.8 12" class="e"/>
<path d="M1260 635.3l-2.2-1.1-20.9 12.1 2.2 1z" fill="#adabff" stroke="#adabff"/>
<path d="M1299.9 632.5l-2.3-2.9-20.8 12 2.2 2.9z" fill="#7f7fef" stroke="#7f7fef"/>
<path d="M1279 644.5l20.9-12" class="e"/>
<path d="M1286 682.2l.2-2.4-20.9 12-.2 2.5zM1189.1 728.4l0 0 1.7 3 2.9-5.7z" fill="#5a5ab4" stroke="#5a5ab4"/>
<path d="M1190.8 731.4l-1.7-3M1193.7 725.7l-4.6 2.7" class="e"/>
<path d="M1257.8 634.2l-2.4-8.8-20.9 12 2.4 8.9z" fill="#5a5ab4" stroke="#5a5ab4"/>
<path d="M1257.8 634.2l-20.9 12.1" class="e"/>
<path d="M1255.4 625.4l-2.6-.8-20.9 12 2.6 .8z" fill="#b1aeff" stroke="#b1aeff"/>
<path d="M1234.5 637.4l20.9-12" class="e"/>
<path d="M1225.3 645.3l-1.7 .7-20.8 12.1 1.6-.7z" fill="#b5b2ff" stroke="#b5b2ff"/>
<path d="M1223.6 646l-20.8 12.1" class="e"/>
<path d="M1174.4 690.8l-6.5-.9 1.9 3.5 0 0z" fill="#b4b1ff" stroke="#b4b1ff"/>
<path d="M1174.4 690.8l-4.6 2.6M1169.8 693.4l-1.9-3.5" class="e"/>
<path d="M1262.2 636.5l-2.2-1.2-20.9 12 2.2 1.2z" fill="#a9a7ff" stroke="#a9a7ff"/>
<path d="M1259 706.3l1.4-1.1-20.8 12-1.4 1.2z" fill="#5a5ab4" stroke="#5a5ab4"/>
<path d="M1260.4 705.2l-20.8 12" class="e"/>
<path d="M1286.2 679.8l-.1-2.6-20.8 12.1 0 2.5z" fill="#5a5ab4" stroke="#5a5ab4"/>
<path d="M1175.1 710.5l1.6 3 3.9-2.2-1.2-2.4zM1176.7 713.5l1.8 2.9 3.5-2.9-1.4-2.2z" fill="#8a8aff" stroke="#8a8aff"/>
<path d="M1175.1 710.5l1.6 3M1180.6 711.3l-1.2-2.4M1176.7 713.5l1.8 2.9M1182 713.5l-1.4-2.2" class="e"/>
<path d="M1173.7 707.4l1.4 3.1 4.3-1.6-1.1-2.4zM1178.5 716.4l2 2.8 3.1-3.5-1.6-2.2z" fill="#8a8aff" stroke="#8a8aff"/>
<path d="M1173.7 707.4l1.4 3.1M1179.4 708.9l-1.1-2.4M1178.5 716.4l2 2.8M1183.6 715.7l-1.6-2.2" class="e"/>
<path d="M1264.4 638l-2.2-1.5-20.9 12 2.2 1.5z" fill="#a4a3ff" stroke="#a4a3ff"/>
<path d="M1227.1 644.9l-1.8 .4-20.9 12.1 1.8-.4z" fill="#b5b2ff" stroke="#b5b2ff"/>
<path d="M1227.1 644.9l-20.9 12.1" class="e"/>
<path d="M1172.4 704.3l1.3 3.1 4.6-.9-1-2.4zM1180.5 719.2l2.1 2.7 2.6-4.1-1.6-2.1z" fill="#8a8aff" stroke="#8a8aff"/>
<path d="M1172.4 704.3l1.3 3.1M1178.3 706.5l-1-2.4M1180.5 719.2l2.1 2.7M1185.2 717.8l-1.6-2.1" class="e"/>
<path d="M1286.1 677.2l-.2-2.6-20.8 12 .2 2.7z" fill="#5a5ab4" stroke="#5a5ab4"/>
<path d="M1265.1 686.6l20.8-12" class="e"/>
<path d="M1171.4 701.1l1 3.2 4.9-.2-.8-2.5zM1182.6 721.9l2.2 2.4 2.1-4.6-1.7-1.9z" fill="#8a8aff" stroke="#8a8aff"/>
<path d="M1171.4 701.1l1 3.2M1177.3 704.1l-.8-2.5M1182.6 721.9l2.2 2.4M1186.9 719.7l-1.7-1.9" class="e"/>
<path d="M1266.6 639.6l-2.2-1.6-20.9 12 2.2 1.7z" fill="#9e9eff" stroke="#9e9eff"/>
<path d="M1266.6 639.6l-20.9 12.1" class="e"/>
<path d="M1170.6 698l.8 3.1 5.1 .5-.7-2.4zM1184.8 724.3l2.3 2.3 1.6-5.2-1.8-1.7z" fill="#8a8aff" stroke="#8a8aff"/>
<path d="M1170.6 698l.8 3.1M1176.5 701.6l-.7-2.4M1184.8 724.3l2.3 2.3M1188.7 721.4l-1.8-1.7" class="e"/>
<path d="M1170 695l.6 3 5.2 1.2-.4-2.4zM1187.1 726.6l2.3 2 1.1-5.6-1.8-1.6z" fill="#8a8aff" stroke="#8a8aff"/>
<path d="M1170 695l.6 3M1175.8 699.2l-.4-2.4M1187.1 726.6l2.3 2M1190.5 723l-1.8-1.6" class="e"/>
<path d="M1266.7 712.1l1.4-1.8-20.8 12-1.4 1.8z" fill="#5a5ab4" stroke="#5a5ab4"/>
<path d="M1245.9 724.1l20.8-12" class="e"/>
<path d="M1189.4 728.6l2.4 1.8 .6-6-1.9-1.4zM1169.6 692l.4 3 5.4 1.8-.3-2.3z" fill="#8a8aff" stroke="#8a8aff"/>
<path d="M1189.4 728.6l2.4 1.8M1192.4 724.4l-1.9-1.4M1169.6 692l.4 3M1175.4 696.8l-.3-2.3" class="e"/>
<path d="M1212.3 732.5l2.5 8.9 20.8-12.1-2.4-8.9z" fill="#5a5ab4" stroke="#5a5ab4"/>
<path d="M1235.6 729.3l-20.8 12.1M1233.2 720.4l-20.9 12.1" class="e"/>
<path d="M1204.9 740l2.6 .8-7-6.1-2.6-.9z" fill="#5a5ab4" stroke="#5a5ab4"/>
<path d="M1207.5 740.8l-2.6-.8M1200.5 734.7l-2.6-.9M1197.9 733.8l7 6.2" class="e"/>
<path d="M1169.5 689.1l.1 2.9 5.5 2.5-.1-2.2zM1191.8 730.4l2.4 1.6 0-6.4-1.8-1.2z" fill="#8a8aff" stroke="#8a8aff"/>
<path d="M1169.5 689.1l.1 2.9M1175.1 694.5l-.1-2.2M1191.8 730.4l2.4 1.6M1194.2 725.6l-1.8-1.2" class="e"/>
<path d="M1227 635.9l-2.3 .1-20.9 12.1 2.3-.1z" fill="#b5b2ff" stroke="#b5b2ff"/>
<path d="M1224.7 636l-20.9 12.1" class="e"/>
<path d="M1282.2 661l-1.3-2.8-20.9 12.1 1.3 2.8z" fill="#5b5bb6" stroke="#5b5bb6"/>
<path d="M1277.9 652.8l-1.7-2.6-20.9 12 1.7 2.6z" fill="#7373dd" stroke="#7373dd"/>
<path d="M1268.1 710.3l1.2-2.1-20.9 12.1-1.1 2z" fill="#5a5ab4" stroke="#5a5ab4"/>
<path d="M1280.9 658.2l-1.4-2.7-20.9 12 1.4 2.8z" fill="#6363c3" stroke="#6363c3"/>
<path d="M1199.8 660.2l-6.3-6.9-20.8 12 6.3 6.9z" fill="#8a8aff" stroke="#8a8aff"/>
<path d="M1199.8 660.2l-20.8 12M1172.7 665.3l20.8-12" class="e"/>
<path d="M1279.5 655.5l-1.6-2.7-20.9 12 1.6 2.7z" fill="#6b6bd0" stroke="#6b6bd0"/>
<path d="M1169.1 671.4l-.8 2.5 1.7 9.6 .7-2.6z" fill="#aaa9ff" stroke="#aaa9ff"/>
<path d="M1168.3 673.9l.8-2.5M1168.3 673.9l1.7 9.6M1170 683.5l.7-2.6" class="e"/>
<path d="M1169.6 686.4l-.1 2.7 5.5 3.2 .1-2.1zM1194.2 732l2.5 1.2-.6-6.6-1.9-1z" fill="#8a8aff" stroke="#8a8aff"/>
<path d="M1169.6 686.4l-.1 2.7M1175 692.3l.1-2.1M1194.2 732l2.5 1.2M1196.1 726.6l-1.9-1" class="e"/>
<path d="M1207.5 740.8l2.5 .4-7-6-2.5-.5z" fill="#5a5ab4" stroke="#5a5ab4"/>
<path d="M1210 741.2l-2.5-.4M1203 735.2l-2.5-.5" class="e"/>
<path d="M1229.4 636.2l-2.4-.3-20.9 12.1 2.5 .2z" fill="#b4b1ff" stroke="#b4b1ff"/>
<path d="M1292.4 675.5l-.6-3.4-20.9 12.1 .6 3.3z" fill="#5a5ab4" stroke="#5a5ab4"/>
<path d="M1271.5 687.5l20.9-12" class="e"/>
<path d="M1196.7 733.2l2.4 1-1.1-6.9-1.9-.7zM1170 683.8l-.4 2.6 5.5 3.8 .3-2z" fill="#8a8aff" stroke="#8a8aff"/>
<path d="M1196.7 733.2l2.4 1M1198 727.3l-1.9-.7M1170 683.8l-.4 2.6M1175.1 690.2l.3-2" class="e"/>
<path d="M1269.3 708.2l1-2.2-20.9 12-1 2.3z" fill="#5a5ab4" stroke="#5a5ab4"/>
<path d="M1170.1 669.2l-1 2.2 1.6 9.5 1-2.3z" fill="#adabff" stroke="#adabff"/>
<path d="M1169.1 671.4l1-2.2M1170.7 680.9l1-2.3" class="e"/>
<path d="M1261.3 673.1l6.5 .9 20.9-12.1-6.5-.9z" fill="#b4b1ff" stroke="#b4b1ff"/>
<path d="M1282.2 661l-20.9 12.1" class="e"/>
<path d="M1276.2 650.2l2.8-5.7-20.8 12.1-2.9 5.6z" fill="#5a5ab4" stroke="#5a5ab4"/>
<path d="M1276.2 650.2l-20.9 12" class="e"/>
<path d="M1272 636.4l-2.6-2.4-20.8 12 2.5 2.4z" fill="#9494ff" stroke="#9494ff"/>
<path d="M1269.4 634l-20.8 12" class="e"/>
<path d="M1291.8 672.1l-.9-3.3-20.8 12 .8 3.4zM1210 741.2l2.4 .3-7-6.2-2.4-.1z" fill="#5a5ab4" stroke="#5a5ab4"/>
<path d="M1212.4 741.5l-2.4-.3M1205.4 735.3l-2.4-.1" class="e"/>
<path d="M1170.6 681.4l-.6 2.4 5.4 4.4 .4-1.9zM1199.1 734.2l2.3 .7-1.6-7-1.8-.6z" fill="#8a8aff" stroke="#8a8aff"/>
<path d="M1170.6 681.4l-.6 2.4M1175.4 688.2l.4-1.9M1199.1 734.2l2.3 .7M1199.8 727.9l-1.8-.6" class="e"/>
<path d="M1231.9 636.6l-2.5-.4-20.8 12 2.5 .5z" fill="#b3b0ff" stroke="#b3b0ff"/>
<path d="M1274.4 638.9l-2.4-2.5-20.9 12 2.4 2.6z" fill="#8e8eff" stroke="#8e8eff"/>
<path d="M1264.8 696.6l.3-2.3-20.8 12-.4 2.3zM1290.9 668.8l-1-3.4-20.9 12 1.1 3.4z" fill="#5a5ab4" stroke="#5a5ab4"/>
<path d="M1243.9 708.6l6.3 6.9 20.9-12-6.3-6.9z" fill="#8a8aff" stroke="#8a8aff"/>
<path d="M1264.8 696.6l-20.9 12" class="e"/>
<path d="M1270.3 706l.8-2.5-20.9 12-.8 2.5z" fill="#5a5ab4" stroke="#5a5ab4"/>
<path d="M1271.1 703.5l-20.9 12" class="e"/>
<path d="M1171.3 667.1l-1.2 2.1 1.6 9.4 1.2-2z" fill="#afadff" stroke="#afadff"/>
<path d="M1170.1 669.2l1.2-2.1M1171.7 678.6l1.2-2" class="e"/>
<path d="M1236.6 719.3l1.6-.9-20.9 12-1.5 1z" fill="#5a5ab4" stroke="#5a5ab4"/>
<path d="M1236.6 719.3l-20.8 12.1" class="e"/>
<path d="M1276.8 641.6l-2.4-2.7-20.9 12.1 2.4 2.7z" fill="#8787fa" stroke="#8787fa"/>
<path d="M1289.9 665.4l-1.2-3.5-20.9 12.1 1.2 3.4z" fill="#5a5ab4" stroke="#5a5ab4"/>
<path d="M1288.7 661.9l-20.9 12.1" class="e"/>
<path d="M1239.1 647.3l-2.2-1-20.8 12 2.2 1z" fill="#adabff" stroke="#adabff"/>
<path d="M1279 644.5l-2.2-2.9-20.9 12.1 2.3 2.9z" fill="#7f7fef" stroke="#7f7fef"/>
<path d="M1258.2 656.6l20.8-12.1" class="e"/>
<path d="M1212.4 741.5l2.4-.1-7.1-6.3-2.3 .2z" fill="#5a5ab4" stroke="#5a5ab4"/>
<path d="M1214.8 741.4l-2.4 .1M1207.7 735.1l-2.3 .2" class="e"/>
<path d="M1171.4 679.3l-.8 2.1 5.2 4.9 .7-1.7zM1201.4 734.9l2.3 .4-2.1-7.1-1.8-.3z" fill="#8a8aff" stroke="#8a8aff"/>
<path d="M1171.4 679.3l-.8 2.1M1175.8 686.3l.7-1.7M1201.4 734.9l2.3 .4M1201.6 728.2l-1.8-.3" class="e"/>
<path d="M1265.1 694.3l.2-2.5-20.9 12.1-.1 2.4zM1236.9 646.3l-2.4-8.9-20.9 12.1 2.5 8.8z" fill="#5a5ab4" stroke="#5a5ab4"/>
<path d="M1236.9 646.3l-20.8 12" class="e"/>
<path d="M1234.5 637.4l-2.6-.8-20.8 12.1 2.5 .8z" fill="#b1aeff" stroke="#b1aeff"/>
<path d="M1213.6 649.5l20.9-12.1" class="e"/>
<path d="M1204.4 657.4l-1.6 .7-20.9 12 1.7-.7z" fill="#b5b2ff" stroke="#b5b2ff"/>
<path d="M1202.8 658.1l-20.9 12" class="e"/>
<path d="M1241.3 648.5l-2.2-1.2-20.8 12 2.2 1.3z" fill="#a9a7ff" stroke="#a9a7ff"/>
<path d="M1238.2 718.4l1.4-1.2-20.9 12.1-1.4 1.1z" fill="#5a5ab4" stroke="#5a5ab4"/>
<path d="M1239.6 717.2l-20.9 12.1" class="e"/>
<path d="M1172.7 665.3l-1.4 1.8 1.6 9.5 1.5-1.7z" fill="#b2afff" stroke="#b2afff"/>
<path d="M1171.3 667.1l1.4-1.8M1172.9 676.6l1.5-1.7" class="e"/>
<path d="M1265.3 691.8l0-2.5-20.9 12 0 2.6zM1207.7 735.1l0 0 7.1 6.3-2.5-8.9z" fill="#5a5ab4" stroke="#5a5ab4"/>
<path d="M1214.8 741.4l-7.1-6.3M1212.3 732.5l-4.6 2.6" class="e"/>
<path d="M1172.4 677.3l-1 2 5.1 5.3 .8-1.5zM1203.7 735.3l2.2 0-2.6-7.1-1.7 0z" fill="#8a8aff" stroke="#8a8aff"/>
<path d="M1172.4 677.3l-1 2M1176.5 684.6l.8-1.5M1203.7 735.3l2.2 0M1203.3 728.2l-1.7 0" class="e"/>
<path d="M1243.5 650l-2.2-1.5-20.8 12.1 2.2 1.4z" fill="#a4a3ff" stroke="#a4a3ff"/>
<path d="M1206.2 657l-1.8 .4-20.8 12 1.8-.4z" fill="#b5b2ff" stroke="#b5b2ff"/>
<path d="M1206.2 657l-20.8 12" class="e"/>
<path d="M1265.3 689.3l-.2-2.7-20.9 12.1 .2 2.6z" fill="#5a5ab4" stroke="#5a5ab4"/>
<path d="M1244.2 698.7l20.9-12.1" class="e"/>
<path d="M1179 672.2l-6.3-6.9 1.7 9.6 0 0z" fill="#8a8aff" stroke="#8a8aff"/>
<path d="M1179 672.2l-4.6 2.7M1174.4 674.9l-1.7-9.6" class="e"/>
<path d="M1173.7 675.6l-1.3 1.7 4.9 5.8 1-1.3zM1205.9 735.3l2.1-.2-3.1-7.1-1.6 .2z" fill="#8a8aff" stroke="#8a8aff"/>
<path d="M1173.7 675.6l-1.3 1.7M1177.3 683.1l1-1.3M1205.9 735.3l2.1-.2M1204.9 728l-1.6 .2" class="e"/>
<path d="M1245.7 651.7l-2.2-1.7-20.8 12 2.2 1.7z" fill="#9e9eff" stroke="#9e9eff"/>
<path d="M1245.7 651.7l-20.8 12" class="e"/>
<path d="M1245.9 724.1l1.4-1.8-20.9 12.1-1.4 1.8z" fill="#5a5ab4" stroke="#5a5ab4"/>
<path d="M1225 736.2l20.9-12.1" class="e"/>
<path d="M1175.1 674.2l-1.4 1.4 4.6 6.2 1.1-1.1zM1208 735.1l1.9-.5-3.5-7-1.5 .4z" fill="#8a8aff" stroke="#8a8aff"/>
<path d="M1175.1 674.2l-1.4 1.4M1178.3 681.8l1.1-1.1M1208 735.1l1.9-.5M1206.4 727.6l-1.5 .4" class="e"/>
<path d="M1206.1 648l-2.3 .1-20.9 12 2.4-.1z" fill="#b5b2ff" stroke="#b5b2ff"/>
<path d="M1203.8 648.1l-20.9 12" class="e"/>
<path d="M1215.8 731.4l1.5-1-4.6 2.7-1.5 .9z" fill="#5a5ab4" stroke="#5a5ab4"/>
<path d="M1215.8 731.4l-4.6 2.6M1212.7 733.1l-1.5 .9" class="e"/>
<path d="M1176.7 673.1l-1.6 1.1 4.3 6.5 1.2-.9zM1209.9 734.6l1.8-.9-3.9-6.7-1.4 .6z" fill="#8a8aff" stroke="#8a8aff"/>
<path d="M1176.7 673.1l-1.6 1.1M1179.4 680.7l1.2-.9M1209.9 734.6l1.8-.9M1207.8 727l-1.4 .6" class="e"/>
<path d="M1261.3 673.1l-1.3-2.8-20.8 12 1.3 2.8z" fill="#5b5bb6" stroke="#5b5bb6"/>
<path d="M1257 664.8l-1.7-2.6-20.8 12.1 1.7 2.6z" fill="#7373dd" stroke="#7373dd"/>
<path d="M1247.3 722.3l1.1-2-20.8 12-1.2 2.1z" fill="#5a5ab4" stroke="#5a5ab4"/>
<path d="M1260 670.3l-1.4-2.8-20.9 12.1 1.5 2.7z" fill="#6363c3" stroke="#6363c3"/>
<path d="M1258.6 667.5l-1.6-2.7-20.8 12.1 1.5 2.7z" fill="#6b6bd0" stroke="#6b6bd0"/>
<path d="M1183.6 669.4l-1.7 .7-4.6 2.7 1.7-.7z" fill="#b5b2ff" stroke="#b5b2ff"/>
<path d="M1181.9 670.1l-4.6 2.7M1177.3 672.8l1.7-.7" class="e"/>
<path d="M1217.3 730.4l1.4-1.1-4.6 2.6-1.4 1.2z" fill="#5a5ab4" stroke="#5a5ab4"/>
<path d="M1218.7 729.3l-4.6 2.6M1214.1 731.9l-1.4 1.2" class="e"/>
<path d="M1178.5 672.2l-1.8 .9 3.9 6.7 1.4-.6zM1211.7 733.7l1.7-1.1-4.3-6.5-1.3 .9z" fill="#8a8aff" stroke="#8a8aff"/>
<path d="M1178.5 672.2l-1.8 .9M1211.7 733.7l1.7-1.1" class="e"/>
<path d="M1208.6 648.2l-2.5-.2-20.8 12 2.4 .2z" fill="#b4b1ff" stroke="#b4b1ff"/>
<path d="M1271.5 687.5l-.6-3.3-20.9 12 .7 3.4z" fill="#5a5ab4" stroke="#5a5ab4"/>
<path d="M1250.7 699.6l20.8-12.1" class="e"/>
<path d="M1248.4 720.3l1-2.3-20.8 12.1-1 2.2z" fill="#5a5ab4" stroke="#5a5ab4"/>
<path d="M1240.5 685.1l6.4 .9 20.9-12-6.5-.9z" fill="#b4b1ff" stroke="#b4b1ff"/>
<path d="M1261.3 673.1l-20.8 12" class="e"/>
<path d="M1255.3 662.2l2.9-5.6-20.9 12-2.8 5.7z" fill="#5a5ab4" stroke="#5a5ab4"/>
<path d="M1255.3 662.2l-20.8 12.1" class="e"/>
<path d="M1185.4 669l-1.8 .4-4.6 2.7 1.8-.5z" fill="#b5b2ff" stroke="#b5b2ff"/>
<path d="M1185.4 669l-4.6 2.6M1179 672.1l1.8-.5" class="e"/>
<path d="M1251.1 648.4l-2.5-2.4-20.9 12.1 2.5 2.3z" fill="#9494ff" stroke="#9494ff"/>
<path d="M1248.6 646l-20.9 12.1" class="e"/>
<path d="M1270.9 684.2l-.8-3.4-20.9 12.1 .8 3.3z" fill="#5a5ab4" stroke="#5a5ab4"/>
<path d="M1213.4 732.6l1.4-1.4-4.6-6.2-1.1 1.1zM1180.5 671.7l-2 .5 3.5 7 1.6-.4z" fill="#8a8aff" stroke="#8a8aff"/>
<path d="M1213.4 732.6l1.4-1.4M1180.5 671.7l-2 .5" class="e"/>
<path d="M1211.1 648.7l-2.5-.5-20.9 12 2.5 .5z" fill="#b3b0ff" stroke="#b3b0ff"/>
<path d="M1253.5 651l-2.4-2.6-20.9 12 2.5 2.6z" fill="#8e8eff" stroke="#8e8eff"/>
<path d="M1243.9 708.6l.4-2.3-20.9 12.1-.4 2.3zM1270.1 680.8l-1.1-3.4-20.8 12.1 1 3.4z" fill="#5a5ab4" stroke="#5a5ab4"/>
<path d="M1223 720.7l6.3 6.9 20.9-12.1-6.3-6.9z" fill="#8a8aff" stroke="#8a8aff"/>
<path d="M1243.9 708.6l-20.9 12.1" class="e"/>
<path d="M1249.4 718l.8-2.5-20.9 12.1-.7 2.5z" fill="#5a5ab4" stroke="#5a5ab4"/>
<path d="M1250.2 715.5l-20.9 12.1" class="e"/>
<path d="M1225 736.2l1.4-1.8-10.8-4.2-1.5 1.7z" fill="#5a5ab4" stroke="#5a5ab4"/>
<path d="M1226.4 734.4l-1.4 1.8M1215.6 730.2l-1.5 1.7M1214.1 731.9l10.9 4.3" class="e"/>
<path d="M1255.9 653.7l-2.4-2.7-20.8 12 2.3 2.7z" fill="#8787fa" stroke="#8787fa"/>
<path d="M1269 677.4l-1.2-3.4-20.9 12 1.3 3.5z" fill="#5a5ab4" stroke="#5a5ab4"/>
<path d="M1267.8 674l-20.9 12" class="e"/>
<path d="M1218.3 659.3l-2.2-1-20.9 12.1 2.2 1z" fill="#adabff" stroke="#adabff"/>
<path d="M1258.2 656.6l-2.3-2.9-20.9 12 2.3 2.9z" fill="#7f7fef" stroke="#7f7fef"/>
<path d="M1237.3 668.6l20.9-12" class="e"/>
<path d="M1182.6 671.5l-2.1 .2 3.1 7.1 1.6-.2zM1214.8 731.2l1.3-1.7-4.9-5.8-1 1.3z" fill="#8a8aff" stroke="#8a8aff"/>
<path d="M1182.6 671.5l-2.1 .2M1214.8 731.2l1.3-1.7" class="e"/>
<path d="M1244.3 706.3l.1-2.4-20.8 12-.2 2.5zM1216.1 658.3l-2.5-8.8-20.8 12 2.4 8.9z" fill="#5a5ab4" stroke="#5a5ab4"/>
<path d="M1216.1 658.3l-20.9 12.1" class="e"/>
<path d="M1213.6 649.5l-2.5-.8-20.9 12 2.6 .8z" fill="#b1aeff" stroke="#b1aeff"/>
<path d="M1192.8 661.5l20.8-12" class="e"/>
<path d="M1185.3 660l-2.4 .1-2.1 11.5 2.3-.2z" fill="#c4bfff" stroke="#c4bfff"/>
<path d="M1182.9 660.1l2.4-.1M1182.9 660.1l-2.1 11.5M1180.8 671.6l2.3-.2" class="e"/>
<path d="M1220.5 660.6l-2.2-1.3-20.9 12.1 2.2 1.2z" fill="#a9a7ff" stroke="#a9a7ff"/>
<path d="M1226.4 734.4l1.2-2.1-10.8-4.1-1.2 2z" fill="#5a5ab4" stroke="#5a5ab4"/>
<path d="M1227.6 732.3l-1.2 2.1M1216.8 728.2l-1.2 2" class="e"/>
<path d="M1244.4 703.9l0-2.6-20.8 12.1 0 2.5z" fill="#5a5ab4" stroke="#5a5ab4"/>
<path d="M1216.1 729.5l1-2-5.1-5.3-.8 1.5zM1184.8 671.5l-2.2 0 2.6 7.1 1.7 0z" fill="#8a8aff" stroke="#8a8aff"/>
<path d="M1216.1 729.5l1-2M1184.8 671.5l-2.2 0" class="e"/>
<path d="M1182 679.2l-1.4 .6-18.8 10.9 1.4-.6z" fill="#b5b1ff" stroke="#b5b1ff"/>
<path d="M1207.8 727l1.3-.9-18.8 10.8-1.3 .9z" fill="#5a5ab4" stroke="#5a5ab4"/>
<path d="M1180.6 679.8l1.4-.6M1209.1 726.1l-1.3 .9M1180.6 679.8l-18.8 10.9M1207.8 727l-18.8 10.8" class="e"/>
<path d="M1222.7 662l-2.2-1.4-20.9 12 2.2 1.5z" fill="#a4a3ff" stroke="#a4a3ff"/>
<path d="M1244.4 701.3l-.2-2.6-20.9 12 .3 2.7z" fill="#5a5ab4" stroke="#5a5ab4"/>
<path d="M1223.3 710.7l20.9-12" class="e"/>
<path d="M1187.7 660.2l-2.4-.2-2.2 11.4 2.4 .2z" fill="#c8c2ff" stroke="#c8c2ff"/>
<path d="M1185.3 660l2.4 .2M1183.1 671.4l2.4 .2" class="e"/>
<path d="M1217.1 727.5l.8-2.1-5.2-4.9-.7 1.7zM1187.1 671.9l-2.3-.4 2.1 7.1 1.8 .3z" fill="#8a8aff" stroke="#8a8aff"/>
<path d="M1217.1 727.5l.8-2.1M1187.1 671.9l-2.3-.4" class="e"/>
<path d="M1183.6 678.8l-1.6 .4-18.8 10.9 1.5-.5z" fill="#b5b2ff" stroke="#b5b2ff"/>
<path d="M1209.1 726.1l1.1-1.1-18.8 10.8-1.1 1.1z" fill="#5a5ab4" stroke="#5a5ab4"/>
<path d="M1182 679.2l1.6-.4M1210.2 725l-1.1 1.1" class="e"/>
<path d="M1224.9 663.7l-2.2-1.7-20.9 12.1 2.2 1.7z" fill="#9e9eff" stroke="#9e9eff"/>
<path d="M1224.9 663.7l-20.9 12.1" class="e"/>
<path d="M1227.6 732.3l1-2.2-10.8-4.2-1 2.3z" fill="#5a5ab4" stroke="#5a5ab4"/>
<path d="M1228.6 730.1l-1 2.2M1217.8 725.9l-1 2.3" class="e"/>
<path d="M1190.2 660.7l-2.5-.5-2.2 11.4 2.5 .5z" fill="#cbc5ff" stroke="#cbc5ff"/>
<path d="M1187.7 660.2l2.5 .5M1185.5 671.6l2.5 .5" class="e"/>
<path d="M1189.4 672.6l-2.3-.7 1.6 7 1.8 .6zM1217.9 725.4l.6-2.4-5.4-4.4-.4 1.9z" fill="#8a8aff" stroke="#8a8aff"/>
<path d="M1189.4 672.6l-2.3-.7M1217.9 725.4l.6-2.4" class="e"/>
<path d="M1185.2 678.6l-1.6 .2-18.9 10.8 1.6-.1z" fill="#b5b2ff" stroke="#b5b2ff"/>
<path d="M1210.2 725l1-1.3-18.8 10.8-1 1.3z" fill="#5a5ab4" stroke="#5a5ab4"/>
<path d="M1183.6 678.8l1.6-.2M1211.2 723.7l-1 1.3" class="e"/>
<path d="M1228.6 730.1l.7-2.5-10.8-4.3-.7 2.6z" fill="#5a5ab4" stroke="#5a5ab4"/>
<path d="M1229.3 727.6l-.7 2.5M1218.5 723.3l-.7 2.6" class="e"/>
<path d="M1218.5 723.3l0 0 10.8 4.3-6.3-6.9z" fill="#8a8aff" stroke="#8a8aff"/>
<path d="M1229.3 727.6l-10.8-4.3" class="e"/>
<path d="M1223 720.7l.4-2.3-4.6 2.6-.3 2.3z" fill="#5a5ab4" stroke="#5a5ab4"/>
<path d="M1223 720.7l-4.5 2.6M1218.8 721l-.3 2.3" class="e"/>
<path d="M1191.8 673.6l-2.4-1 1.1 6.9 1.9 .7zM1218.5 723l.4-2.6-5.5-3.8-.3 2z" fill="#8a8aff" stroke="#8a8aff"/>
<path d="M1191.8 673.6l-2.4-1M1218.5 723l.4-2.6" class="e"/>
<path d="M1186.9 678.6l-1.7 0-18.9 10.9 1.8 0z" fill="#b5b2ff" stroke="#b5b2ff"/>
<path d="M1211.2 723.7l.8-1.5-18.8 10.8-.8 1.5z" fill="#5a5ab4" stroke="#5a5ab4"/>
<path d="M1185.2 678.6l1.7 0M1212 722.2l-.8 1.5" class="e"/>
<path d="M1192.8 661.5l-2.6-.8-2.2 11.4 2.6 .9z" fill="#cec7ff" stroke="#cec7ff"/>
<path d="M1190.2 660.7l2.6 .8M1188 672.1l2.6 .9" class="e"/>
<path d="M1240.5 685.1l-1.3-2.8-20.9 12.1 1.3 2.8z" fill="#5b5bb6" stroke="#5b5bb6"/>
<path d="M1195.2 670.4l-2.4-8.9-2.2 11.5 0 0z" fill="#5a5ab4" stroke="#5a5ab4"/>
<path d="M1190.6 673l2.2-11.5" class="e"/>
<path d="M1236.2 676.9l-1.7-2.6-20.9 12 1.7 2.6z" fill="#7373dd" stroke="#7373dd"/>
<path d="M1197.4 671.4l-2.2-1-4.6 2.6 2.2 1z" fill="#adabff" stroke="#adabff"/>
<path d="M1195.2 670.4l-4.6 2.6M1190.6 673l2.2 1" class="e"/>
<path d="M1239.2 682.3l-1.5-2.7-20.8 12 1.4 2.8z" fill="#6363c3" stroke="#6363c3"/>
<path d="M1237.7 679.6l-1.5-2.7-20.9 12 1.6 2.7z" fill="#6b6bd0" stroke="#6b6bd0"/>
<path d="M1223.4 718.4l.2-2.5-4.6 2.7-.2 2.4z" fill="#5a5ab4" stroke="#5a5ab4"/>
<path d="M1219 718.6l-.2 2.4" class="e"/>
<path d="M1194.2 674.8l-2.4-1.2 .6 6.6 1.8 1zM1218.9 720.4l.1-2.7-5.5-3.2-.1 2.1z" fill="#8a8aff" stroke="#8a8aff"/>
<path d="M1194.2 674.8l-2.4-1.2M1218.9 720.4l.1-2.7" class="e"/>
<path d="M1188.7 678.9l-1.8-.3-18.8 10.9 1.7 .3z" fill="#b3b0ff" stroke="#b3b0ff"/>
<path d="M1212 722.2l.7-1.7-18.9 10.8-.6 1.7z" fill="#5a5ab4" stroke="#5a5ab4"/>
<path d="M1186.9 678.6l1.8 .3M1212.7 720.5l-.7 1.7" class="e"/>
<path d="M1199.6 672.6l-2.2-1.2-4.6 2.6 2.2 1.3z" fill="#a9a7ff" stroke="#a9a7ff"/>
<path d="M1192.8 674l2.2 1.3" class="e"/>
<path d="M1223.6 715.9l0-2.5-4.6 2.6 0 2.6z" fill="#5a5ab4" stroke="#5a5ab4"/>
<path d="M1219 716l0 2.6" class="e"/>
<path d="M1250.7 699.6l-.7-3.4-20.8 12.1 .6 3.3z" fill="#5a5ab4" stroke="#5a5ab4"/>
<path d="M1229.8 711.6l20.9-12" class="e"/>
<path d="M1219 717.7l-.1-2.9-5.5-2.5 .1 2.2zM1196.7 676.4l-2.5-1.6 0 6.4 1.9 1.2z" fill="#8a8aff" stroke="#8a8aff"/>
<path d="M1219 717.7l-.1-2.9M1196.7 676.4l-2.5-1.6" class="e"/>
<path d="M1212.7 720.5l.4-1.9-18.8 10.9-.5 1.8z" fill="#5a5ab4" stroke="#5a5ab4"/>
<path d="M1190.5 679.5l-1.8-.6-18.9 10.9 1.9 .5z" fill="#b1afff" stroke="#b1afff"/>
<path d="M1213.1 718.6l-.4 1.9M1188.7 678.9l1.8 .6" class="e"/>
<path d="M1219.6 697.2l6.5 .9 20.8-12.1-6.4-.9z" fill="#b4b1ff" stroke="#b4b1ff"/>
<path d="M1240.5 685.1l-20.9 12.1" class="e"/>
<path d="M1234.5 674.3l2.8-5.7-20.9 12.1-2.8 5.6z" fill="#5a5ab4" stroke="#5a5ab4"/>
<path d="M1234.5 674.3l-20.9 12" class="e"/>
<path d="M1201.8 674.1l-2.2-1.5-4.6 2.7 2.2 1.4z" fill="#a4a3ff" stroke="#a4a3ff"/>
<path d="M1195 675.3l2.2 1.4" class="e"/>
<path d="M1230.2 660.4l-2.5-2.3-20.9 12 2.6 2.4z" fill="#9494ff" stroke="#9494ff"/>
<path d="M1227.7 658.1l-20.9 12" class="e"/>
<path d="M1250 696.2l-.8-3.3-20.9 12 .9 3.4zM1223.6 713.4l-.3-2.7-4.6 2.7 .3 2.6z" fill="#5a5ab4" stroke="#5a5ab4"/>
<path d="M1218.7 713.4l4.6-2.7M1218.7 713.4l.3 2.6" class="e"/>
<path d="M1218.9 714.8l-.4-3-5.4-1.8 .3 2.3zM1199.1 678.2l-2.4-1.8-.6 6 1.9 1.4z" fill="#8a8aff" stroke="#8a8aff"/>
<path d="M1218.9 714.8l-.4-3M1199.1 678.2l-2.4-1.8" class="e"/>
<path d="M1192.4 680.2l-1.9-.7-18.8 10.8 1.8 .8z" fill="#aeacff" stroke="#aeacff"/>
<path d="M1213.1 718.6l.3-2-18.8 10.9-.3 2z" fill="#5a5ab4" stroke="#5a5ab4"/>
<path d="M1190.5 679.5l1.9 .7M1213.4 716.6l-.3 2" class="e"/>
<path d="M1232.7 663l-2.5-2.6-20.8 12.1 2.4 2.5z" fill="#8e8eff" stroke="#8e8eff"/>
<path d="M1204 675.8l-2.2-1.7-4.6 2.6 2.2 1.7z" fill="#9e9eff" stroke="#9e9eff"/>
<path d="M1204 675.8l-4.6 2.6M1197.2 676.7l2.2 1.7" class="e"/>
<path d="M1249.2 692.9l-1-3.4-20.9 12 1 3.4z" fill="#5a5ab4" stroke="#5a5ab4"/>
<path d="M1218.5 711.8l-.6-3-5.2-1.2 .4 2.4zM1201.4 680.2l-2.3-2-1.1 5.6 1.8 1.6z" fill="#8a8aff" stroke="#8a8aff"/>
<path d="M1218.5 711.8l-.6-3M1201.4 680.2l-2.3-2" class="e"/>
<path d="M1235 665.7l-2.3-2.7-20.9 12 2.4 2.8z" fill="#8787fa" stroke="#8787fa"/>
<path d="M1248.2 689.5l-1.3-3.5-20.8 12.1 1.2 3.4z" fill="#5a5ab4" stroke="#5a5ab4"/>
<path d="M1246.9 686l-20.8 12.1" class="e"/>
<path d="M1194.2 681.2l-1.8-1-18.9 10.9 1.9 1z" fill="#aaa9ff" stroke="#aaa9ff"/>
<path d="M1213.4 716.6l.1-2.1-18.9 10.9 0 2.1z" fill="#5a5ab4" stroke="#5a5ab4"/>
<path d="M1192.4 680.2l1.8 1M1213.5 714.5l-.1 2.1" class="e"/>
<path d="M1217.9 708.8l-.8-3.1-5.1-.5 .7 2.4zM1203.7 682.5l-2.3-2.3-1.6 5.2 1.8 1.7z" fill="#8a8aff" stroke="#8a8aff"/>
<path d="M1217.9 708.8l-.8-3.1M1203.7 682.5l-2.3-2.3" class="e"/>
<path d="M1237.3 668.6l-2.3-2.9-20.8 12.1 2.2 2.9z" fill="#7f7fef" stroke="#7f7fef"/>
<path d="M1216.4 680.7l20.9-12.1" class="e"/>
<path d="M1217.1 705.7l-1-3.2-4.9 .2 .8 2.5zM1205.9 684.9l-2.2-2.4-2.1 4.6 1.7 1.9z" fill="#8a8aff" stroke="#8a8aff"/>
<path d="M1217.1 705.7l-1-3.2M1205.9 684.9l-2.2-2.4" class="e"/>
<path d="M1213.5 714.5l-.1-2.2-18.8 10.8 0 2.3z" fill="#5a5ab4" stroke="#5a5ab4"/>
<path d="M1196.1 682.4l-1.9-1.2-18.8 10.9 1.9 1.2z" fill="#a6a5ff" stroke="#a6a5ff"/>
<path d="M1213.4 712.3l.1 2.2M1194.2 681.2l1.9 1.2" class="e"/>
<path d="M1189 737.8l1.3-.9-18.9 10.9-1.2 .9z" fill="#5a5ab4" stroke="#5a5ab4"/>
<path d="M1163.2 690.1l-1.4 .6-18.8 10.9 1.4-.7z" fill="#b5b1ff" stroke="#b5b1ff"/>
<path d="M1189 737.8l-18.8 10.9M1161.8 690.7l-18.8 10.9" class="e"/>
<path d="M1216.1 702.5l-1.3-3.1-4.6 .9 1 2.4zM1208 687.6l-2.1-2.7-2.6 4.1 1.6 2.1z" fill="#8a8aff" stroke="#8a8aff"/>
<path d="M1216.1 702.5l-1.3-3.1M1208 687.6l-2.1-2.7" class="e"/>
<path d="M1214.8 699.4l-1.4-3.1-4.3 1.6 1.1 2.4zM1209.9 690.4l-1.9-2.8-3.1 3.5 1.5 2.2z" fill="#8a8aff" stroke="#8a8aff"/>
<path d="M1214.8 699.4l-1.4-3.1M1209.9 690.4l-1.9-2.8" class="e"/>
<path d="M1213.4 696.3l-1.7-3-3.9 2.2 1.3 2.4zM1211.7 693.3l-1.8-2.9-3.5 2.9 1.4 2.2z" fill="#8a8aff" stroke="#8a8aff"/>
<path d="M1213.4 696.3l-1.7-3M1211.7 693.3l-1.8-2.9" class="e"/>
<path d="M1213.4 712.3l-.3-2.3-18.8 10.8 .3 2.3z" fill="#5a5ab4" stroke="#5a5ab4"/>
<path d="M1198 683.8l-1.9-1.4-18.8 10.9 1.9 1.4z" fill="#a09fff" stroke="#a09fff"/>
<path d="M1213.1 710l.3 2.3M1196.1 682.4l1.9 1.4" class="e"/>
<path d="M1229.8 711.6l-.6-3.3-11 1.7 .5 3.4z" fill="#6f6fd6" stroke="#6f6fd6"/>
<path d="M1229.2 708.3l.6 3.3M1218.2 710l.5 3.4M1218.7 713.4l11.1-1.8" class="e"/>
<path d="M1219.6 697.2l-1.3-2.8-4.6 2.6 1.3 2.8z" fill="#5b5bb6" stroke="#5b5bb6"/>
<path d="M1213.7 697l1.3 2.8" class="e"/>
<path d="M1164.7 689.6l-1.5 .5-18.8 10.8 1.5-.4z" fill="#b5b2ff" stroke="#b5b2ff"/>
<path d="M1190.3 736.9l1.1-1.1-18.8 10.9-1.2 1.1z" fill="#5a5ab4" stroke="#5a5ab4"/>
<path d="M1215.3 688.9l-1.7-2.6-4.6 2.7 1.7 2.6z" fill="#7373dd" stroke="#7373dd"/>
<path d="M1209 689l1.7 2.6" class="e"/>
<path d="M1209.4 672.5l-2.6-2.4-7.4 8.3 2.6 2.3z" fill="#bfbbff" stroke="#bfbbff"/>
<path d="M1206.8 670.1l2.6 2.4M1206.8 670.1l-7.4 8.3M1199.4 678.4l2.6 2.3" class="e"/>
<path d="M1218.3 694.4l-1.4-2.8-4.6 2.7 1.4 2.7z" fill="#6363c3" stroke="#6363c3"/>
<path d="M1212.3 694.3l1.4 2.7" class="e"/>
<path d="M1216.9 691.6l-1.6-2.7-4.6 2.7 1.6 2.7z" fill="#6b6bd0" stroke="#6b6bd0"/>
<path d="M1210.7 691.6l1.6 2.7" class="e"/>
<path d="M1213.1 710l-.4-2.4-18.9 10.9 .5 2.3z" fill="#5a5ab4" stroke="#5a5ab4"/>
<path d="M1199.8 685.4l-1.8-1.6-18.8 10.9 1.8 1.5z" fill="#9999ff" stroke="#9999ff"/>
<path d="M1212.7 707.6l.4 2.4M1198 683.8l1.8 1.6" class="e"/>
<path d="M1229.2 708.3l-.9-3.4-10.9 1.8 .8 3.3z" fill="#7373dd" stroke="#7373dd"/>
<path d="M1228.3 704.9l.9 3.4M1217.4 706.7l.8 3.3" class="e"/>
<path d="M1212.7 707.6l-.7-2.4-18.8 10.8 .6 2.5z" fill="#5a5ab4" stroke="#5a5ab4"/>
<path d="M1201.6 687.1l-1.8-1.7-18.8 10.8 1.8 1.8z" fill="#9191ff" stroke="#9191ff"/>
<path d="M1212 705.2l.7 2.4M1199.8 685.4l1.8 1.7" class="e"/>
<path d="M1215 699.8l0 0 11.1-1.7-6.5-.9z" fill="#b4b1ff" stroke="#b4b1ff"/>
<path d="M1219.6 697.2l-4.6 2.6" class="e"/>
<path d="M1211.8 675l-2.4-2.5-7.4 8.2 2.4 2.5z" fill="#b8b5ff" stroke="#b8b5ff"/>
<path d="M1209.4 672.5l2.4 2.5M1202 680.7l2.4 2.5" class="e"/>
<path d="M1213.6 686.3l2.8-5.6-7.4 8.3 0 0z" fill="#5a5ab4" stroke="#5a5ab4"/>
<path d="M1213.6 686.3l-4.6 2.7" class="e"/>
<path d="M1228.3 704.9l-1-3.4-11 1.7 1.1 3.5z" fill="#7878e4" stroke="#7878e4"/>
<path d="M1227.3 701.5l1 3.4M1216.3 703.2l1.1 3.5" class="e"/>
<path d="M1166.3 689.5l-1.6 .1-18.8 10.9 1.6-.2z" fill="#b5b2ff" stroke="#b5b2ff"/>
<path d="M1191.4 735.8l1-1.3-18.9 10.9-.9 1.3zM1212 705.2l-.8-2.5-18.8 10.9 .8 2.4z" fill="#5a5ab4" stroke="#5a5ab4"/>
<path d="M1203.3 689l-1.7-1.9-18.8 10.9 1.7 1.9z" fill="#8989fd" stroke="#8989fd"/>
<path d="M1211.2 702.7l.8 2.5M1201.6 687.1l1.7 1.9" class="e"/>
<path d="M1214.2 677.8l-2.4-2.8-7.4 8.2 2.4 2.8z" fill="#b0aeff" stroke="#b0aeff"/>
<path d="M1211.8 675l2.4 2.8M1204.4 683.2l2.4 2.8" class="e"/>
<path d="M1211.2 702.7l-1-2.4-18.8 10.9 1 2.4z" fill="#5a5ab4" stroke="#5a5ab4"/>
<path d="M1204.9 691.1l-1.6-2.1-18.8 10.9 1.6 2.1z" fill="#8080f0" stroke="#8080f0"/>
<path d="M1210.2 700.3l1 2.4M1203.3 689l1.6 2.1" class="e"/>
<path d="M1227.3 701.5l-1.2-3.4-11.1 1.7 1.3 3.4z" fill="#7d7dec" stroke="#7d7dec"/>
<path d="M1226.1 698.1l1.2 3.4M1226.1 698.1l-11.1 1.7M1215 699.8l1.3 3.4" class="e"/>
<path d="M1210.2 700.3l-1.1-2.4-18.8 10.9 1.1 2.4z" fill="#5c5cb9" stroke="#5c5cb9"/>
<path d="M1206.4 693.3l-1.5-2.2-18.8 10.9 1.5 2.1z" fill="#7777e3" stroke="#7777e3"/>
<path d="M1209.1 697.9l1.1 2.4M1204.9 691.1l1.5 2.2" class="e"/>
<path d="M1216.4 680.7l-2.2-2.9-7.4 8.2 2.2 3z" fill="#a8a7ff" stroke="#a8a7ff"/>
<path d="M1214.2 677.8l2.2 2.9M1206.8 686l2.2 3M1209 689l7.4-8.3" class="e"/>
<path d="M1209.1 697.9l-1.3-2.4-18.8 10.9 1.3 2.4z" fill="#6565c7" stroke="#6565c7"/>
<path d="M1207.8 695.5l-1.4-2.2-18.8 10.8 1.4 2.3z" fill="#6e6ed5" stroke="#6e6ed5"/>
<path d="M1207.8 695.5l1.3 2.4M1206.4 693.3l1.4 2.2" class="e"/>
<path d="M1168.1 689.5l-1.8 0-18.8 10.8 1.7 .1z" fill="#b5b2ff" stroke="#b5b2ff"/>
<path d="M1192.4 734.5l.8-1.5-18.8 10.9-.9 1.5z" fill="#5a5ab4" stroke="#5a5ab4"/>
<path d="M1169.8 689.8l-1.7-.3-18.9 10.9 1.8 .3z" fill="#b3b0ff" stroke="#b3b0ff"/>
<path d="M1193.2 733l.6-1.7-18.8 10.9-.6 1.7z" fill="#5a5ab4" stroke="#5a5ab4"/>
<path d="M1171.7 690.3l-1.9-.5-18.8 10.9 1.8 .5z" fill="#b1afff" stroke="#b1afff"/>
<path d="M1193.8 731.3l.5-1.8-18.9 10.9-.4 1.8zM1194.3 729.5l.3-2-18.9 10.9-.3 2z" fill="#5a5ab4" stroke="#5a5ab4"/>
<path d="M1173.5 691.1l-1.8-.8-18.9 10.9 1.9 .8z" fill="#aeacff" stroke="#aeacff"/>
<path d="M1175.4 692.1l-1.9-1-18.8 10.9 1.9 .9z" fill="#aaa9ff" stroke="#aaa9ff"/>
<path d="M1194.6 727.5l0-2.1-18.8 10.8-.1 2.2zM1194.6 725.4l0-2.3-18.9 10.9 .1 2.2z" fill="#5a5ab4" stroke="#5a5ab4"/>
<path d="M1177.3 693.3l-1.9-1.2-18.8 10.8 1.9 1.2z" fill="#a6a5ff" stroke="#a6a5ff"/>
<path d="M1144.4 700.9l-1.4 .7-18.9 10.9 1.4-.7z" fill="#b5b1ff" stroke="#b5b1ff"/>
<path d="M1170.2 748.7l1.2-.9-18.8 10.9-1.3 .9z" fill="#5a5ab4" stroke="#5a5ab4"/>
<path d="M1143 701.6l-18.9 10.9M1170.2 748.7l-18.9 10.9" class="e"/>
<path d="M1194.6 723.1l-.3-2.3-18.9 10.9 .3 2.3z" fill="#5a5ab4" stroke="#5a5ab4"/>
<path d="M1179.2 694.7l-1.9-1.4-18.8 10.8 1.8 1.4z" fill="#a09fff" stroke="#a09fff"/>
<path d="M1116.1 746.1l1 1.9 4.7-2.8-.5-1zM1117.1 748l1 1.7 4.3-3.5-.6-1z" fill="#8a8aff" stroke="#8a8aff"/>
<path d="M1117.1 748l-1-1.9M1118.1 749.7l-1-1.7" class="e"/>
<path d="M1115.2 744.3l.9 1.8 5.2-1.9-.5-1zM1118.1 749.7l1.2 1.7 3.7-4.3-.6-.9z" fill="#8a8aff" stroke="#8a8aff"/>
<path d="M1116.1 746.1l-.9-1.8M1119.3 751.4l-1.2-1.7" class="e"/>
<path d="M1119.3 751.4l1.3 1.6 3.1-5-.7-.9zM1114.5 742.4l.7 1.9 5.6-1.1-.4-1z" fill="#8a8aff" stroke="#8a8aff"/>
<path d="M1120.6 753l-1.3-1.6M1115.2 744.3l-.7-1.9" class="e"/>
<path d="M1145.9 700.5l-1.5 .4-18.9 10.9 1.6-.4z" fill="#b5b2ff" stroke="#b5b2ff"/>
<path d="M1171.4 747.8l1.2-1.1-18.9 10.9-1.1 1.1z" fill="#5a5ab4" stroke="#5a5ab4"/>
<path d="M1113.8 740.5l.7 1.9 5.9-.2-.3-1zM1120.6 753l1.3 1.5 2.6-5.7-.8-.8z" fill="#8a8aff" stroke="#8a8aff"/>
<path d="M1114.5 742.4l-.7-1.9M1121.9 754.5l-1.3-1.5" class="e"/>
<path d="M1194.3 720.8l-.5-2.3-18.8 10.8 .4 2.4z" fill="#5a5ab4" stroke="#5a5ab4"/>
<path d="M1181 696.2l-1.8-1.5-18.9 10.8 1.9 1.6z" fill="#9999ff" stroke="#9999ff"/>
<path d="M1113.4 738.7l.4 1.8 6.3 .7-.3-1.1zM1121.9 754.5l1.4 1.3 1.9-6.3-.7-.7z" fill="#8a8aff" stroke="#8a8aff"/>
<path d="M1113.8 740.5l-.4-1.8M1123.3 755.8l-1.4-1.3" class="e"/>
<path d="M1127.3 741.3l.3 .6 7.8-4.5-.3-.6z" fill="#6565c7" stroke="#6565c7"/>
<path d="M1127.6 741.9l.4 .6 7.7-4.5-.3-.6z" fill="#6e6ed5" stroke="#6e6ed5"/>
<path d="M1127 740.7l.3 .6 7.8-4.5-.3-.6z" fill="#5c5cb9" stroke="#5c5cb9"/>
<path d="M1128 742.5l.4 .5 7.7-4.5-.4-.5z" fill="#7777e3" stroke="#7777e3"/>
<path d="M1126.7 740l.3 .7 7.8-4.5-.3-.7z" fill="#5a5ab4" stroke="#5a5ab4"/>
<path d="M1128.4 743l.4 .5 7.7-4.4-.4-.6z" fill="#8080f0" stroke="#8080f0"/>
<path d="M1128.8 743.5l.4 .5 7.8-4.4-.5-.5z" fill="#8989fd" stroke="#8989fd"/>
<path d="M1126.5 739.4l.2 .6 7.8-4.5-.2-.6z" fill="#5a5ab4" stroke="#5a5ab4"/>
<path d="M1113 736.8l.4 1.9 6.4 1.4-.2-1zM1123.3 755.8l1.4 1.2 1.3-6.8-.8-.7z" fill="#8a8aff" stroke="#8a8aff"/>
<path d="M1113.4 738.7l-.4-1.9M1124.7 757l-1.4-1.2" class="e"/>
<path d="M1193.8 718.5l-.6-2.5-18.8 10.9 .6 2.4z" fill="#5a5ab4" stroke="#5a5ab4"/>
<path d="M1182.8 698l-1.8-1.8-18.8 10.9 1.7 1.8zM1129.2 744l.5 .5 7.7-4.5-.4-.4z" fill="#9191ff" stroke="#9191ff"/>
<path d="M1126.4 738.8l.1 .6 7.8-4.5-.2-.6zM1126.2 738.2l.2 .6 7.7-4.5-.1-.6z" fill="#5a5ab4" stroke="#5a5ab4"/>
<path d="M1129.7 744.5l.4 .4 7.8-4.5-.5-.4z" fill="#9999ff" stroke="#9999ff"/>
<path d="M1126.2 737.6l0 .6 7.8-4.5 0-.6z" fill="#5a5ab4" stroke="#5a5ab4"/>
<path d="M1130.1 744.9l.5 .4 7.8-4.5-.5-.4z" fill="#a09fff" stroke="#a09fff"/>
<path d="M1112.8 735l.2 1.8 6.6 2.3-.1-1zM1124.7 757l1.4 1.1 .7-7.3-.8-.6z" fill="#8a8aff" stroke="#8a8aff"/>
<path d="M1113 736.8l-.2-1.8M1126.1 758.1l-1.4-1.1" class="e"/>
<path d="M1147.5 700.3l-1.6 .2-18.8 10.9 1.6-.2z" fill="#b5b2ff" stroke="#b5b2ff"/>
<path d="M1172.6 746.7l.9-1.3-18.8 10.9-1 1.3zM1193.2 716l-.8-2.4-18.9 10.9 .9 2.4z" fill="#5a5ab4" stroke="#5a5ab4"/>
<path d="M1184.5 699.9l-1.7-1.9-18.9 10.9 1.7 1.9z" fill="#8989fd" stroke="#8989fd"/>
<path d="M1126.2 737l0 .6 7.8-4.5-.1-.6z" fill="#5a5ab4" stroke="#5a5ab4"/>
<path d="M1130.6 745.3l.5 .3 7.8-4.5-.5-.3z" fill="#a6a5ff" stroke="#a6a5ff"/>
<path d="M1126.2 736.5l0 .5 7.7-4.5 .1-.5z" fill="#5a5ab4" stroke="#5a5ab4"/>
<path d="M1131.1 745.6l.5 .2 7.8-4.5-.5-.2z" fill="#aaa9ff" stroke="#aaa9ff"/>
<path d="M1192.4 713.6l-1-2.4-18.8 10.8 .9 2.5z" fill="#5a5ab4" stroke="#5a5ab4"/>
<path d="M1186.1 702l-1.6-2.1-18.9 10.9 1.7 2z" fill="#8080f0" stroke="#8080f0"/>
<path d="M1112.7 733.3l.1 1.7 6.7 3.1-.1-.9zM1126.1 758.1l1.5 .9 0-7.7-.8-.5z" fill="#8a8aff" stroke="#8a8aff"/>
<path d="M1112.8 735l-.1-1.7M1127.6 759l-1.5-.9" class="e"/>
<path d="M1126.2 735.9l0 .6 7.8-4.5 0-.6z" fill="#5a5ab4" stroke="#5a5ab4"/>
<path d="M1131.6 745.8l.5 .2 7.7-4.5-.4-.2z" fill="#aeacff" stroke="#aeacff"/>
<path d="M1191.4 711.2l-1.1-2.4-18.9 10.8 1.2 2.4z" fill="#5c5cb9" stroke="#5c5cb9"/>
<path d="M1187.6 704.1l-1.5-2.1-18.8 10.8 1.5 2.2z" fill="#7777e3" stroke="#7777e3"/>
<path d="M1190.3 708.8l-1.3-2.4-18.8 10.9 1.2 2.3z" fill="#6565c7" stroke="#6565c7"/>
<path d="M1189 706.4l-1.4-2.3-18.8 10.9 1.4 2.3z" fill="#6e6ed5" stroke="#6e6ed5"/>
<path d="M1126.4 735.5l-.2 .4 7.8-4.5 .1-.4z" fill="#5a5ab4" stroke="#5a5ab4"/>
<path d="M1132.1 746l.4 .2 7.8-4.5-.5-.2z" fill="#b1afff" stroke="#b1afff"/>
<path d="M1121.3 744.2l.5 1 5.8-3.3-.3-.6z" fill="#8989fe" stroke="#8989fe"/>
<path d="M1121.8 745.2l.6 1 5.6-3.7-.4-.6z" fill="#9595ff" stroke="#9595ff"/>
<path d="M1121.8 745.2l-.5-1M1122.4 746.2l-.6-1M1127.6 741.9l-.3-.6M1128 742.5l-.4-.6" class="e"/>
<path d="M1121.8 714.4l-1 1.4-6.3 10.5 .7-1.1z" fill="#bab6ff" stroke="#bab6ff"/>
<path d="M1146.8 760.8l1.6-.1-12.6 .2-1.2 .2z" fill="#5a5ab4" stroke="#5a5ab4"/>
<path d="M1120.8 715.8l1-1.4M1148.4 760.7l-1.6 .1M1120.8 715.8l-6.3 10.5M1146.8 760.8l-12.2 .3" class="e"/>
<path d="M1120.8 743.2l.5 1 6-2.9-.3-.6z" fill="#8080ef" stroke="#8080ef"/>
<path d="M1122.4 746.2l.6 .9 5.4-4.1-.4-.5z" fill="#a2a1ff" stroke="#a2a1ff"/>
<path d="M1112.8 731.7l-.1 1.6 6.7 3.9 .1-.9zM1127.6 759l1.4 .8-.6-8.1-.8-.4z" fill="#8a8aff" stroke="#8a8aff"/>
<path d="M1121.3 744.2l-.5-1M1123 747.1l-.6-.9M1127.3 741.3l-.3-.6M1128.4 743l-.4-.5M1112.7 733.3l.1-1.6M1129 759.8l-1.4-.8" class="e"/>
<path d="M1120.4 742.2l.4 1 6.2-2.5-.3-.7z" fill="#7777e3" stroke="#7777e3"/>
<path d="M1123 747.1l.7 .9 5.1-4.5-.4-.5z" fill="#b0aeff" stroke="#b0aeff"/>
<path d="M1120.8 743.2l-.4-1M1123.7 748l-.7-.9M1127 740.7l-.3-.7M1128.8 743.5l-.4-.5" class="e"/>
<path d="M1120.1 741.2l.3 1 6.3-2.2-.2-.6z" fill="#6f6fd7" stroke="#6f6fd7"/>
<path d="M1123.7 748l.8 .8 4.7-4.8-.4-.5z" fill="#c0bbff" stroke="#c0bbff"/>
<path d="M1120.4 742.2l-.3-1M1124.5 748.8l-.8-.8M1126.7 740l-.2-.6M1129.2 744l-.4-.5" class="e"/>
<path d="M1173.5 745.4l.9-1.5-18.9 10.9-.8 1.5z" fill="#5a5ab4" stroke="#5a5ab4"/>
<path d="M1149.2 700.4l-1.7-.1-18.8 10.9 1.7 .1z" fill="#b5b2ff" stroke="#b5b2ff"/>
<path d="M1126.5 735l-.1 .5 7.7-4.5 .2-.5z" fill="#5a5ab4" stroke="#5a5ab4"/>
<path d="M1132.5 746.2l.5 0 7.8-4.5-.5 0z" fill="#b3b0ff" stroke="#b3b0ff"/>
<path d="M1119.8 740.1l.3 1.1 6.4-1.8-.1-.6z" fill="#6868cc" stroke="#6868cc"/>
<path d="M1124.5 748.8l.7 .7 4.5-5-.5-.5z" fill="#cfc8ff" stroke="#cfc8ff"/>
<path d="M1120.1 741.2l-.3-1.1M1125.2 749.5l-.7-.7M1126.5 739.4l-.1-.6M1129.7 744.5l-.5-.5" class="e"/>
<path d="M1126.7 734.6l-.2 .4 7.8-4.5 .2-.3z" fill="#5a5ab4" stroke="#5a5ab4"/>
<path d="M1133 746.2l.4 0 7.8-4.4-.4-.1z" fill="#b5b2ff" stroke="#b5b2ff"/>
<path d="M1119.6 739.1l.2 1 6.6-1.3-.2-.6z" fill="#6262c2" stroke="#6262c2"/>
<path d="M1125.2 749.5l.8 .7 4.1-5.3-.4-.4z" fill="#dcd3ff" stroke="#dcd3ff"/>
<path d="M1119.8 740.1l-.2-1M1126 750.2l-.8-.7M1126.4 738.8l-.2-.6M1130.1 744.9l-.4-.4" class="e"/>
<path d="M1113 730.1l-.2 1.6 6.7 4.6 .1-.8zM1129 759.8l1.5 .6-1.3-8.4-.8-.3z" fill="#8a8aff" stroke="#8a8aff"/>
<path d="M1112.8 731.7l.2-1.6M1130.5 760.4l-1.5-.6" class="e"/>
<path d="M1119.5 738.1l.1 1 6.6-.9 0-.6z" fill="#5c5cb8" stroke="#5c5cb8"/>
<path d="M1126 750.2l.8 .6 3.8-5.5-.5-.4z" fill="#e6dcff" stroke="#e6dcff"/>
<path d="M1119.6 739.1l-.1-1M1126.8 750.8l-.8-.6M1126.2 738.2l0-.6M1130.6 745.3l-.5-.4" class="e"/>
<path d="M1127 734.3l-.3 .3 7.8-4.4 .3-.4z" fill="#5a5ab4" stroke="#5a5ab4"/>
<path d="M1133.4 746.2l.5 0 7.7-4.5-.4 .1z" fill="#b5b2ff" stroke="#b5b2ff"/>
<path d="M1122.9 713.3l-1.1 1.1-6.6 10.8 .9-.8z" fill="#bdb8ff" stroke="#bdb8ff"/>
<path d="M1148.4 760.7l1.6-.5-13 .4-1.2 .3zM1119.4 737.2l.1 .9 6.7-.5 0-.6z" fill="#5a5ab4" stroke="#5a5ab4"/>
<path d="M1126.8 750.8l.8 .5 3.5-5.7-.5-.3z" fill="#ede1ff" stroke="#ede1ff"/>
<path d="M1121.8 714.4l1.1-1.1M1150 760.2l-1.6 .5M1119.5 738.1l-.1-.9M1127.6 751.3l-.8-.5M1126.2 737.6l0-.6M1131.1 745.6l-.5-.3" class="e"/>
<path d="M1127.3 734l-.3 .3 7.8-4.5 .3-.3z" fill="#5a5ab4" stroke="#5a5ab4"/>
<path d="M1133.9 746.2l.3-.1 7.8-4.5-.4 .1z" fill="#b5b2ff" stroke="#b5b2ff"/>
<path d="M1113.4 728.7l-.4 1.4 6.6 5.4 .2-.8zM1130.5 760.4l1.4 .4-2-8.6-.7-.2z" fill="#8a8aff" stroke="#8a8aff"/>
<path d="M1113 730.1l.4-1.4M1131.9 760.8l-1.4-.4" class="e"/>
<path d="M1174.4 743.9l.6-1.7-18.8 10.9-.7 1.7z" fill="#5a5ab4" stroke="#5a5ab4"/>
<path d="M1151 700.7l-1.8-.3-18.8 10.9 1.8 .2z" fill="#b3b0ff" stroke="#b3b0ff"/>
<path d="M1119.5 736.3l-.1 .9 6.8-.2 0-.5z" fill="#5a5ab4" stroke="#5a5ab4"/>
<path d="M1127.6 751.3l.8 .4 3.2-5.9-.5-.2z" fill="#eee3ff" stroke="#eee3ff"/>
<path d="M1119.4 737.2l.1-.9M1128.4 751.7l-.8-.4M1126.2 737l0-.5M1131.6 745.8l-.5-.2" class="e"/>
<path d="M1127.6 733.8l-.3 .2 7.8-4.5 .3-.2z" fill="#5a5ab4" stroke="#5a5ab4"/>
<path d="M1134.2 746.1l.4-.2 7.8-4.5-.4 .2z" fill="#b5b1ff" stroke="#b5b1ff"/>
<path d="M1127.6 733.8l7.8-4.5M1134.6 745.9l7.8-4.5" class="e"/>
<path d="M1119.6 735.5l-.1 .8 6.7 .2 0-.6z" fill="#5a5ab4" stroke="#5a5ab4"/>
<path d="M1128.4 751.7l.8 .3 2.9-6-.5-.2z" fill="#ece0ff" stroke="#ece0ff"/>
<path d="M1119.5 736.3l.1-.8M1129.2 752l-.8-.3M1126.2 736.5l0-.6M1132.1 746l-.5-.2" class="e"/>
<path d="M1113.8 727.4l-.4 1.3 6.4 6 .3-.7zM1131.9 760.8l1.3 .2-2.5-8.6-.8-.2z" fill="#8a8aff" stroke="#8a8aff"/>
<path d="M1113.4 728.7l.4-1.3M1133.2 761l-1.3-.2" class="e"/>
<path d="M1119.8 734.7l-.2 .8 6.6 .4 .2-.4z" fill="#5a5ab4" stroke="#5a5ab4"/>
<path d="M1129.2 752l.7 .2 2.6-6-.4-.2z" fill="#e6dcff" stroke="#e6dcff"/>
<path d="M1119.6 735.5l.2-.8M1129.9 752.2l-.7-.2M1126.2 735.9l.2-.4M1132.5 746.2l-.4-.2" class="e"/>
<path d="M1124.1 712.5l-1.2 .8-6.8 11.1 1-.7z" fill="#c0bbff" stroke="#c0bbff"/>
<path d="M1150 760.2l1.3-.6-13.2 .5-1.1 .5z" fill="#5a5ab4" stroke="#5a5ab4"/>
<path d="M1122.9 713.3l1.2-.8M1151.3 759.6l-1.3 .6" class="e"/>
<path d="M1120.1 734l-.3 .7 6.6 .8 .1-.5z" fill="#5a5ab4" stroke="#5a5ab4"/>
<path d="M1129.9 752.2l.8 .2 2.3-6.2-.5 0z" fill="#ded5ff" stroke="#ded5ff"/>
<path d="M1119.8 734.7l.3-.7M1130.7 752.4l-.8-.2M1126.4 735.5l.1-.5M1133 746.2l-.5 0" class="e"/>
<path d="M1152.8 701.2l-1.8-.5-18.8 10.8 1.8 .6z" fill="#b1afff" stroke="#b1afff"/>
<path d="M1175 742.2l.4-1.8-18.8 10.8-.4 1.9z" fill="#5a5ab4" stroke="#5a5ab4"/>
<path d="M1114.5 726.3l-.7 1.1 6.3 6.6 .3-.7zM1133.2 761l1.4 .1-3.2-8.7-.7 0z" fill="#8a8aff" stroke="#8a8aff"/>
<path d="M1113.8 727.4l.7-1.1M1134.6 761.1l-1.4-.1" class="e"/>
<path d="M1120.4 733.3l-.3 .7 6.4 1 .2-.4z" fill="#5a5ab4" stroke="#5a5ab4"/>
<path d="M1130.7 752.4l.7 0 2-6.2-.4 0z" fill="#d6ceff" stroke="#d6ceff"/>
<path d="M1120.1 734l.3-.7M1131.4 752.4l-.7 0M1126.5 735l.2-.4M1133.4 746.2l-.4 0" class="e"/>
<path d="M1120.8 732.8l-.4 .5 6.3 1.3 .3-.3z" fill="#5a5ab4" stroke="#5a5ab4"/>
<path d="M1131.4 752.4l.7-.1 1.8-6.1-.5 0z" fill="#cfc8ff" stroke="#cfc8ff"/>
<path d="M1126.7 734.6l.3-.3M1133.9 746.2l-.5 0" class="e"/>
<path d="M1115.2 725.2l-.7 1.1 5.9 7 .4-.5zM1134.6 761.1l1.2-.2-3.7-8.6-.7 .1z" fill="#8a8aff" stroke="#8a8aff"/>
<path d="M1114.5 726.3l.7-1.1M1135.8 760.9l-1.2 .2M1120.4 733.3l.4-.5M1132.1 752.3l-.7 .1" class="e"/>
<path d="M1125.5 711.8l-1.4 .7-7 11.2 1-.5z" fill="#c2bdff" stroke="#c2bdff"/>
<path d="M1151.3 759.6l1.3-.9-13.6 .7-.9 .7z" fill="#5a5ab4" stroke="#5a5ab4"/>
<path d="M1124.1 712.5l1.4-.7M1152.6 758.7l-1.3 .9" class="e"/>
<path d="M1154.7 702l-1.9-.8-18.8 10.9 1.9 .7z" fill="#aeacff" stroke="#aeacff"/>
<path d="M1175.4 740.4l.3-2-18.8 10.8-.3 2zM1121.3 732.3l-.5 .5 6.2 1.5 .3-.3z" fill="#5a5ab4" stroke="#5a5ab4"/>
<path d="M1132.1 752.3l.6-.2 1.5-6-.3 .1z" fill="#c9c3ff" stroke="#c9c3ff"/>
<path d="M1127 734.3l.3-.3M1134.2 746.1l-.3 .1" class="e"/>
<path d="M1116.1 724.4l-.9 .8 5.6 7.6 .5-.5zM1135.8 760.9l1.2-.3-4.3-8.5-.6 .2z" fill="#8a8aff" stroke="#8a8aff"/>
<path d="M1115.2 725.2l.9-.8M1137 760.6l-1.2 .3M1120.8 732.8l.5-.5M1132.7 752.1l-.6 .2" class="e"/>
<path d="M1121.8 731.9l-.5 .4 6 1.7 .3-.2z" fill="#5a5ab4" stroke="#5a5ab4"/>
<path d="M1132.7 752.1l.6-.2 1.3-6-.4 .2z" fill="#c4beff" stroke="#c4beff"/>
<path d="M1127.3 734l.3-.2M1134.6 745.9l-.4 .2" class="e"/>
<path d="M1127.1 711.4l-1.6 .4-7.4 11.4 1.2-.3z" fill="#c5c0ff" stroke="#c5c0ff"/>
<path d="M1152.6 758.7l1.1-1.1-13.8 1-.9 .8z" fill="#5a5ab4" stroke="#5a5ab4"/>
<path d="M1125.5 711.8l1.6-.4M1153.7 757.6l-1.1 1.1" class="e"/>
<path d="M1156.6 702.9l-1.9-.9-18.8 10.8 1.8 1z" fill="#aaa9ff" stroke="#aaa9ff"/>
<path d="M1175.7 738.4l.1-2.2-18.8 10.9-.1 2.1zM1122.4 731.7l-.6 .2 5.8 1.9 .4-.2z" fill="#5a5ab4" stroke="#5a5ab4"/>
<path d="M1133.3 751.9l.6-.4 1-5.8-.3 .2z" fill="#c0bbff" stroke="#c0bbff"/>
<path d="M1127.6 733.8l.4-.2M1134.9 745.7l-.3 .2" class="e"/>
<path d="M1117.1 723.7l-1 .7 5.2 7.9 .5-.4zM1137 760.6l1.1-.5-4.8-8.2-.6 .2z" fill="#8a8aff" stroke="#8a8aff"/>
<path d="M1116.1 724.4l1-.7M1138.1 760.1l-1.1 .5M1121.3 732.3l.5-.4M1133.3 751.9l-.6 .2" class="e"/>
<path d="M1123 731.5l-.6 .2 5.6 1.9 .4-.1z" fill="#5a5ab4" stroke="#5a5ab4"/>
<path d="M1133.9 751.5l.4-.5 .9-5.6-.3 .3z" fill="#bcb8ff" stroke="#bcb8ff"/>
<path d="M1128 733.6l.4-.1M1135.2 745.4l-.3 .3" class="e"/>
<path d="M1123.7 731.4l-.7 .1 5.4 2 .4 0z" fill="#5a5ab4" stroke="#5a5ab4"/>
<path d="M1134.3 751l.4-.5 .8-5.4-.3 .3z" fill="#b9b5ff" stroke="#b9b5ff"/>
<path d="M1128.4 733.5l.4 0M1135.5 745.1l-.3 .3" class="e"/>
<path d="M1175.8 736.2l-.1-2.2-18.8 10.9 .1 2.2z" fill="#5a5ab4" stroke="#5a5ab4"/>
<path d="M1158.5 704.1l-1.9-1.2-18.9 10.9 1.9 1.2z" fill="#a6a5ff" stroke="#a6a5ff"/>
<path d="M1128.7 711.2l-1.6 .2-7.8 11.5 1.3-.2z" fill="#c9c2ff" stroke="#c9c2ff"/>
<path d="M1153.7 757.6l1-1.3-14 1.2-.8 1.1z" fill="#5a5ab4" stroke="#5a5ab4"/>
<path d="M1127.1 711.4l1.6-.2M1154.7 756.3l-1 1.3" class="e"/>
<path d="M1118.1 723.2l-1 .5 4.7 8.2 .6-.2zM1138.1 760.1l.9-.7-5.1-7.9-.6 .4z" fill="#8a8aff" stroke="#8a8aff"/>
<path d="M1117.1 723.7l1-.5M1139 759.4l-.9 .7M1121.8 731.9l.6-.2M1133.9 751.5l-.6 .4" class="e"/>
<path d="M1124.5 731.4l-.8 0 5.1 2.1 .4 0z" fill="#5a5ab4" stroke="#5a5ab4"/>
<path d="M1134.7 750.5l.4-.7 .6-5.1-.2 .4z" fill="#b5b2ff" stroke="#b5b2ff"/>
<path d="M1128.8 733.5l.4 0M1135.7 744.7l-.2 .4" class="e"/>
<path d="M1125.2 731.5l-.7-.1 4.7 2.1 .5 .1z" fill="#5a5ab4" stroke="#5a5ab4"/>
<path d="M1135.1 749.8l.2-.7 .5-4.9-.1 .5z" fill="#b1afff" stroke="#b1afff"/>
<path d="M1129.2 733.5l.5 .1M1135.8 744.2l-.1 .5" class="e"/>
<path d="M1175.7 734l-.3-2.3-18.8 10.9 .3 2.3z" fill="#5a5ab4" stroke="#5a5ab4"/>
<path d="M1160.3 705.5l-1.8-1.4-18.9 10.9 1.9 1.4z" fill="#a09fff" stroke="#a09fff"/>
<path d="M1119.3 722.9l-1.2 .3 4.3 8.5 .6-.2zM1139 759.4l.9-.8-5.6-7.6-.4 .5z" fill="#8a8aff" stroke="#8a8aff"/>
<path d="M1118.1 723.2l1.2-.3M1139.9 758.6l-.9 .8M1122.4 731.7l.6-.2M1134.3 751l-.4 .5" class="e"/>
<path d="M1126 731.8l-.8-.3 4.5 2.1 .4 .1z" fill="#5a5ab4" stroke="#5a5ab4"/>
<path d="M1135.3 749.1l.2-.8 .5-4.5-.2 .4z" fill="#adabff" stroke="#adabff"/>
<path d="M1129.7 733.6l.4 .1M1136 743.8l-.2 .4" class="e"/>
<path d="M1130.4 711.3l-1.7-.1-8.1 11.5 1.3 .1z" fill="#cdc6ff" stroke="#cdc6ff"/>
<path d="M1154.7 756.3l.8-1.5-14.2 1.6-.6 1.1z" fill="#5a5ab4" stroke="#5a5ab4"/>
<path d="M1128.7 711.2l1.7 .1M1155.5 754.8l-.8 1.5" class="e"/>
<path d="M1175.4 731.7l-.4-2.4-18.8 10.9 .4 2.4z" fill="#5a5ab4" stroke="#5a5ab4"/>
<path d="M1162.2 707.1l-1.9-1.6-18.8 10.9 1.8 1.6z" fill="#9999ff" stroke="#9999ff"/>
<path d="M1126.8 732.1l-.8-.3 4.1 1.9 .5 .2z" fill="#5a5ab4" stroke="#5a5ab4"/>
<path d="M1135.5 748.3l.2-.8 .3-4.2 0 .5z" fill="#a9a7ff" stroke="#a9a7ff"/>
<path d="M1126.8 732.1l3.8 1.8M1130.1 733.7l.5 .2M1135.7 747.5l.3-4.2M1136 743.3l0 .5" class="e"/>
<path d="M1120.6 722.7l-1.3 .2 3.7 8.6 .7-.1zM1139.9 758.6l.8-1.1-6-7-.4 .5z" fill="#8a8aff" stroke="#8a8aff"/>
<path d="M1119.3 722.9l1.3-.2M1140.7 757.5l-.8 1.1M1123 731.5l.7-.1M1134.7 750.5l-.4 .5" class="e"/>
<path d="M1175 729.3l-.6-2.4-18.9 10.9 .7 2.4z" fill="#5a5ab4" stroke="#5a5ab4"/>
<path d="M1163.9 708.9l-1.7-1.8-18.9 10.9 1.8 1.7z" fill="#9191ff" stroke="#9191ff"/>
<path d="M1132.2 711.5l-1.8-.2-8.5 11.5 1.4 .2z" fill="#d2caff" stroke="#d2caff"/>
<path d="M1155.5 754.8l.7-1.7-14.4 2-.5 1.3z" fill="#5a5ab4" stroke="#5a5ab4"/>
<path d="M1130.4 711.3l1.8 .2M1156.2 753.1l-.7 1.7" class="e"/>
<path d="M1121.9 722.8l-1.3-.1 3.1 8.7 .8 0zM1140.7 757.5l.6-1.1-6.2-6.6-.4 .7z" fill="#8a8aff" stroke="#8a8aff"/>
<path d="M1120.6 722.7l1.3 .1M1141.3 756.4l-.6 1.1M1123.7 731.4l.8 0M1135.1 749.8l-.4 .7" class="e"/>
<path d="M1174.4 726.9l-.9-2.4-18.8 10.8 .8 2.5z" fill="#5a5ab4" stroke="#5a5ab4"/>
<path d="M1165.6 710.8l-1.7-1.9-18.8 10.8 1.7 2z" fill="#8989fd" stroke="#8989fd"/>
<path d="M1173.5 724.5l-.9-2.5-18.9 10.9 1 2.4z" fill="#5a5ab4" stroke="#5a5ab4"/>
<path d="M1167.3 712.8l-1.7-2-18.8 10.9 1.6 2z" fill="#8080f0" stroke="#8080f0"/>
<path d="M1123.3 723l-1.4-.2 2.6 8.6 .7 .1zM1141.3 756.4l.5-1.3-6.5-6-.2 .7z" fill="#8a8aff" stroke="#8a8aff"/>
<path d="M1121.9 722.8l1.4 .2M1141.8 755.1l-.5 1.3M1124.5 731.4l.7 .1M1135.3 749.1l-.2 .7" class="e"/>
<path d="M1172.6 722l-1.2-2.4-18.8 10.9 1.1 2.4z" fill="#5c5cb9" stroke="#5c5cb9"/>
<path d="M1168.8 715l-1.5-2.2-18.9 10.9 1.6 2.2z" fill="#7777e3" stroke="#7777e3"/>
<path d="M1134 712.1l-1.8-.6-8.9 11.5 1.4 .4z" fill="#d6ceff" stroke="#d6ceff"/>
<path d="M1156.2 753.1l.4-1.9-14.5 2.5-.3 1.4z" fill="#5a5ab4" stroke="#5a5ab4"/>
<path d="M1132.2 711.5l1.8 .6M1156.6 751.2l-.4 1.9" class="e"/>
<path d="M1171.4 719.6l-1.2-2.3-18.9 10.9 1.3 2.3z" fill="#6565c7" stroke="#6565c7"/>
<path d="M1170.2 717.3l-1.4-2.3-18.8 10.9 1.3 2.3z" fill="#6e6ed5" stroke="#6e6ed5"/>
<path d="M1124.7 723.4l-1.4-.4 1.9 8.5 .8 .3zM1141.8 755.1l.3-1.4-6.6-5.4-.2 .8z" fill="#8a8aff" stroke="#8a8aff"/>
<path d="M1123.3 723l1.4 .4M1142.1 753.7l-.3 1.4M1125.2 731.5l.8 .3M1135.5 748.3l-.2 .8" class="e"/>
<path d="M1135.9 712.8l-1.9-.7-9.3 11.3 1.4 .6z" fill="#dad1ff" stroke="#dad1ff"/>
<path d="M1156.6 751.2l.3-2-14.6 2.9-.2 1.6z" fill="#5a5ab4" stroke="#5a5ab4"/>
<path d="M1134 712.1l1.9 .7M1156.9 749.2l-.3 2" class="e"/>
<path d="M1126.1 724l-1.4-.6 1.3 8.4 .8 .3zM1142.1 753.7l.2-1.6-6.6-4.6-.2 .8z" fill="#8a8aff" stroke="#8a8aff"/>
<path d="M1124.7 723.4l1.4 .6M1142.3 752.1l-.2 1.6M1126 731.8l.8 .3M1135.7 747.5l-.2 .8" class="e"/>
<path d="M1127.6 724.8l-1.5-.8 .7 8.1 .8 .4zM1142.3 752.1l.1-1.6-6.7-3.9 0 .9z" fill="#8a8aff" stroke="#8a8aff"/>
<path d="M1126.8 732.1l.8 .4M1135.7 746.6l0 .9" class="e"/>
<path d="M1137.7 713.8l-1.8-1-9.8 11.2 1.5 .8z" fill="#dad2ff" stroke="#dad2ff"/>
<path d="M1156.9 749.2l.1-2.1-14.6 3.4-.1 1.6z" fill="#5a5ab4" stroke="#5a5ab4"/>
<path d="M1135.9 712.8l1.8 1M1157 747.1l-.1 2.1M1126.1 724l1.5 .8M1142.4 750.5l-.1 1.6" class="e"/>
<path d="M1142.4 750.5l-.1-1.8-6.6-3.1 0 1zM1129 725.7l-1.4-.9 0 7.7 .8 .5z" fill="#8a8aff" stroke="#8a8aff"/>
<path d="M1135.7 745.6l0 1M1127.6 732.5l.8 .5" class="e"/>
<path d="M1157 747.1l-.1-2.2-14.6 3.8 .1 1.8z" fill="#5a5ab4" stroke="#5a5ab4"/>
<path d="M1139.6 715l-1.9-1.2-10.1 11 1.4 .9z" fill="#d8cfff" stroke="#d8cfff"/>
<path d="M1156.9 744.9l.1 2.2M1137.7 713.8l1.9 1.2M1142.3 748.7l.1 1.8M1127.6 724.8l1.4 .9" class="e"/>
<path d="M1142.3 748.7l-.2-1.7-6.6-2.3 .2 .9zM1130.5 726.8l-1.5-1.1-.6 7.3 .8 .6z" fill="#8a8aff" stroke="#8a8aff"/>
<path d="M1135.5 744.7l.2 .9M1128.4 733l.8 .6" class="e"/>
<path d="M1142.1 747l-.3-1.9-6.5-1.4 .2 1zM1131.9 728l-1.4-1.2-1.3 6.8 .7 .7z" fill="#8a8aff" stroke="#8a8aff"/>
<path d="M1135.3 743.7l.2 1M1129.2 733.6l.7 .7" class="e"/>
<path d="M1156.9 744.9l-.3-2.3-14.5 4.4 .2 1.7z" fill="#5a5ab4" stroke="#5a5ab4"/>
<path d="M1141.5 716.4l-1.9-1.4-10.6 10.7 1.5 1.1z" fill="#d1caff" stroke="#d1caff"/>
<path d="M1156.6 742.6l.3 2.3M1139.6 715l1.9 1.4M1142.1 747l.2 1.7M1129 725.7l1.5 1.1" class="e"/>
<path d="M1141.8 745.1l-.5-1.8-6.2-.7 .2 1.1zM1133.2 729.3l-1.3-1.3-2 6.3 .8 .7z" fill="#8a8aff" stroke="#8a8aff"/>
<path d="M1135.1 742.6l.2 1.1M1129.9 734.3l.8 .7" class="e"/>
<path d="M1141.3 743.3l-.6-1.9-6 .2 .4 1zM1134.6 730.8l-1.4-1.5-2.5 5.7 .7 .8z" fill="#8a8aff" stroke="#8a8aff"/>
<path d="M1134.7 741.6l.4 1M1130.7 735l.7 .8" class="e"/>
<path d="M1156.6 742.6l-.4-2.4-14.4 4.9 .3 1.9z" fill="#5a5ab4" stroke="#5a5ab4"/>
<path d="M1143.3 718l-1.8-1.6-11 10.4 1.4 1.2z" fill="#c6c1ff" stroke="#c6c1ff"/>
<path d="M1156.2 740.2l.4 2.4M1141.5 716.4l1.8 1.6M1141.8 745.1l.3 1.9M1130.5 726.8l1.4 1.2" class="e"/>
<path d="M1140.7 741.4l-.8-1.9-5.6 1.1 .4 1zM1135.8 732.4l-1.2-1.6-3.2 5 .7 .9z" fill="#8a8aff" stroke="#8a8aff"/>
<path d="M1134.3 740.6l.4 1M1131.4 735.8l.7 .9" class="e"/>
<path d="M1139.9 739.5l-.9-1.9-5.1 2 .4 1zM1137 734.1l-1.2-1.7-3.7 4.3 .6 .9z" fill="#8a8aff" stroke="#8a8aff"/>
<path d="M1133.9 739.6l.4 1M1132.1 736.7l.6 .9" class="e"/>
<path d="M1139 737.6l-.9-1.8-4.8 2.8 .6 1zM1138.1 735.8l-1.1-1.7-4.3 3.5 .6 1z" fill="#8a8aff" stroke="#8a8aff"/>
<path d="M1133.3 738.6l.6 1M1132.7 737.6l.6 1" class="e"/>
<path d="M1156.2 740.2l-.7-2.4-14.2 5.5 .5 1.8z" fill="#5a5ab5" stroke="#5a5ab5"/>
<path d="M1145.1 719.7l-1.8-1.7-11.4 10 1.3 1.3z" fill="#b9b5ff" stroke="#b9b5ff"/>
<path d="M1155.5 737.8l.7 2.4M1143.3 718l1.8 1.7M1141.3 743.3l.5 1.8M1131.9 728l1.3 1.3" class="e"/>
<path d="M1155.5 737.8l-.8-2.5-14 6.1 .6 1.9z" fill="#5f5fbd" stroke="#5f5fbd"/>
<path d="M1146.8 721.7l-1.7-2-11.9 9.6 1.4 1.5z" fill="#aba9ff" stroke="#aba9ff"/>
<path d="M1154.7 735.3l.8 2.5M1145.1 719.7l1.7 2M1140.7 741.4l.6 1.9M1133.2 729.3l1.4 1.5" class="e"/>
<path d="M1154.7 735.3l-1-2.4-13.8 6.6 .8 1.9z" fill="#6767ca" stroke="#6767ca"/>
<path d="M1148.4 723.7l-1.6-2-12.2 9.1 1.2 1.6z" fill="#9d9dff" stroke="#9d9dff"/>
<path d="M1153.7 732.9l1 2.4M1146.8 721.7l1.6 2M1139.9 739.5l.8 1.9M1134.6 730.8l1.2 1.6" class="e"/>
<path d="M1153.7 732.9l-1.1-2.4-13.6 7.1 .9 1.9z" fill="#7070d8" stroke="#7070d8"/>
<path d="M1150 725.9l-1.6-2.2-12.6 8.7 1.2 1.7z" fill="#9090ff" stroke="#9090ff"/>
<path d="M1152.6 730.5l1.1 2.4M1148.4 723.7l1.6 2.2M1139 737.6l.9 1.9M1135.8 732.4l1.2 1.7" class="e"/>
<path d="M1152.6 730.5l-1.3-2.3-13.2 7.6 .9 1.8z" fill="#7a7ae7" stroke="#7a7ae7"/>
<path d="M1151.3 728.2l-1.3-2.3-13 8.2 1.1 1.7z" fill="#8484f6" stroke="#8484f6"/>
<path d="M1151.3 728.2l1.3 2.3M1150 725.9l1.3 2.3M1138.1 735.8l.9 1.8M1137 734.1l1.1 1.7" class="e"/>
</g>
</svg>
<svg width="2358" height="1267" viewBox="0 0 2358 1267">
<defs>
<linearGradient id="tb" x1="0" y1="0" x2="0" y2="1"><stop offset="0" stop-color="#fdfdfe"/><stop offset=".55" stop-color="#f3f5f8"/><stop offset="1" stop-color="#dfe3e9"/></linearGradient>
<linearGradient id="cap" x1="0" y1="0" x2="0" y2="1"><stop offset="0" stop-color="#c9cdd1"/><stop offset=".5" stop-color="#a4a8ad"/><stop offset="1" stop-color="#8b8f95"/></linearGradient>
<linearGradient id="hl" x1="0" y1="0" x2="0" y2="1"><stop offset="0" stop-color="#ffe9a6"/><stop offset="1" stop-color="#ffd86c"/></linearGradient>
<linearGradient id="btn" x1="0" y1="0" x2="0" y2="1"><stop offset="0" stop-color="#f2f2f2"/><stop offset=".5" stop-color="#dddddd"/><stop offset="1" stop-color="#cfcfcf"/></linearGradient>
<linearGradient id="bl" x1="0" y1="0" x2="1" y2="1"><stop offset="0" stop-color="#7fd4ff"/><stop offset="1" stop-color="#1a5fd0"/></linearGradient>
<linearGradient id="tabg" x1="0" y1="0" x2="0" y2="1"><stop offset="0" stop-color="#ffffff"/><stop offset="1" stop-color="#b9cdea"/></linearGradient>
<linearGradient id="stat" x1="0" y1="0" x2="0" y2="1"><stop offset="0" stop-color="#e9ebee"/><stop offset=".5" stop-color="#dcdfe4"/><stop offset="1" stop-color="#cfd2d8"/></linearGradient>
<linearGradient id="wmin" x1="0" y1="0" x2="0" y2="1"><stop offset="0" stop-color="#b6babb"/><stop offset=".47" stop-color="#9ea3a6"/><stop offset=".5" stop-color="#474d57"/><stop offset="1" stop-color="#5a606b"/></linearGradient>
<linearGradient id="wcls" x1="0" y1="0" x2="0" y2="1"><stop offset="0" stop-color="#eeb0a4"/><stop offset=".47" stop-color="#df7f6c"/><stop offset=".5" stop-color="#c23a1c"/><stop offset="1" stop-color="#d8583a"/></linearGradient>
<radialGradient id="glow" cx=".5" cy=".5" r=".5"><stop offset="0" stop-color="#fff" stop-opacity=".62"/><stop offset=".7" stop-color="#fff" stop-opacity=".5"/><stop offset="1" stop-color="#fff" stop-opacity="0"/></radialGradient>
<clipPath id="treeclip"><rect x="34" y="170" width="190" height="668"/></clipPath>
</defs>
<rect x="0" y="0" width="2358" height="20" fill="#0b0e15" />
<linearGradient id="tg" x1="0" y1="0" x2="1" y2="0"><stop offset="0" stop-color="#fff" stop-opacity=".40"/><stop offset=".8" stop-color="#fff" stop-opacity=".47"/><stop offset=".9" stop-color="#fff" stop-opacity=".3"/><stop offset="1" stop-color="#fff" stop-opacity="0"/></linearGradient>
<rect x="0" y="0" width="350" height="20" fill="url(#tg)"/>
<linearGradient id="tg2" x1="0" y1="0" x2="1" y2="0"><stop offset="0" stop-color="#8a9096" stop-opacity="0"/><stop offset="1" stop-color="#8a9096" stop-opacity=".3"/></linearGradient>
<rect x="2170" y="0" width="85" height="20" fill="url(#tg2)"/>
<rect x="0" y="0" width="150" height="20" fill="#fff" opacity=".0"/>
<circle cx="11" cy="10" r="8.5" fill="#2a7fd6"/><circle cx="11" cy="10" r="6.6" fill="#49a8f5"/>
<path d="M7.5 5.5V14M8 10L13 5.5M9.5 9L14.5 14.2" fill="none" stroke="#fff" stroke-width="1.7" />
<path d="M9.5 14.6l2-3 2 3z M13.8 8.2l1.8-1.8.4 3z" fill="#cfeaff" />
<text x="22" y="14.6" font-size="12.2" fill="#000" textLength="289" lengthAdjust="spacingAndGlyphs" >КОМПАС-3D V16.1 x64 - Gear-shaft.m3d [ABC.00.001]</text>
<rect x="0" y="20" width="2358" height="1" fill="#9a9da0" />
<rect x="0" y="21" width="2358" height="1" fill="#15181d" />
<path d="M2252 0V13q0 5 5 5H2350q5 0 5-5V0z" fill="#15181d" stroke="#c9ccd0" stroke-width="1"/>
<path d="M2253.5 0V12.5q0 4 4 4H2280V0z" fill="url(#wmin)"/>
<rect x="2281.5" y="0" width="25.5" height="16.5" fill="url(#wmin)" />
<path d="M2308.5 0V16.5H2349q4.5 0 4.5-4V0z" fill="url(#wcls)"/>
<path d="M2280.8 0L2280.8 17" stroke="#d5d8db" stroke-width="1" fill="none" />
<path d="M2307.8 0L2307.8 17" stroke="#d5d8db" stroke-width="1" fill="none" />
<rect x="2262" y="9" width="10" height="2.6" fill="#fff" stroke="#6a6f78" />
<path d="M2293.5 3.5h6v7" fill="none" stroke="#fff" stroke-width="1.6" />
<rect x="2289" y="6" width="7" height="6.5" fill="none" stroke="#fff" stroke-width="2"/>
<path d="M2327 4.5l7.5 7.5M2334.5 4.5l-7.5 7.5" fill="none" stroke="#fff" stroke-width="2.8" />
<rect x="0" y="22" width="2358" height="24" fill="#e3e6e9" />
<rect x="4" y="27" width="2" height="2" fill="#b9bec5" />
<rect x="4" y="31" width="2" height="2" fill="#b9bec5" />
<rect x="4" y="35" width="2" height="2" fill="#b9bec5" />
<rect x="4" y="39" width="2" height="2" fill="#b9bec5" />
<text x="17" y="38.2" font-size="11.3" fill="#3f4a59" textLength="25" lengthAdjust="spacingAndGlyphs" >Файл</text>
<rect x="17" y="39.6" width="7" height="1" fill="#3f4a59" />
<text x="57" y="38.2" font-size="11.3" fill="#3f4a59" textLength="49" lengthAdjust="spacingAndGlyphs" >Редактор</text>
<rect x="57" y="39.6" width="7" height="1" fill="#3f4a59" />
<text x="120" y="38.2" font-size="11.3" fill="#3f4a59" textLength="52" lengthAdjust="spacingAndGlyphs" >Выделить</text>
<rect x="126" y="39.6" width="6" height="1" fill="#3f4a59" />
<text x="186" y="38.2" font-size="11.3" fill="#3f4a59" textLength="20" lengthAdjust="spacingAndGlyphs" >Вид</text>
<rect x="186" y="39.6" width="7" height="1" fill="#3f4a59" />
<text x="221" y="38.2" font-size="11.3" fill="#3f4a59" textLength="50" lengthAdjust="spacingAndGlyphs" >Операции</text>
<rect x="258" y="39.6" width="6" height="1" fill="#3f4a59" />
<text x="286" y="38.2" font-size="11.3" fill="#3f4a59" textLength="75" lengthAdjust="spacingAndGlyphs" >Спецификация</text>
<rect x="293" y="39.6" width="6" height="1" fill="#3f4a59" />
<text x="375" y="38.2" font-size="11.3" fill="#3f4a59" textLength="38" lengthAdjust="spacingAndGlyphs" >Сервис</text>
<rect x="381" y="39.6" width="5" height="1" fill="#3f4a59" />
<text x="427" y="38.2" font-size="11.3" fill="#3f4a59" textLength="27" lengthAdjust="spacingAndGlyphs" >Окно</text>
<rect x="427" y="39.6" width="8" height="1" fill="#3f4a59" />
<text x="468" y="38.2" font-size="11.3" fill="#3f4a59" textLength="44" lengthAdjust="spacingAndGlyphs" >Справка</text>
<rect x="468" y="39.6" width="7" height="1" fill="#3f4a59" />
<text x="526" y="38.2" font-size="11.3" fill="#3f4a59" textLength="60" lengthAdjust="spacingAndGlyphs" >Библиотеки</text>
<rect x="526" y="39.6" width="7" height="1" fill="#3f4a59" />
<path d="M514 46H523.5q4 0 4 4V68q0 4 -4 4H514q-4 0 -4 -4V50q0 -4 4 -4z" fill="url(#cap)"/>
<path d="M7 46H515q3 0 3 3V68q0 3 -3 3H7q-3 0 -3 -3V49q0 -3 3 -3z" fill="url(#tb)"/>
<path d="M6 71.5L522 71.5" stroke="#a9adb3" stroke-width="1" fill="none" />
<rect x="7" y="52" width="2" height="2" fill="#b4b9c0" />
<rect x="7" y="56" width="2" height="2" fill="#b4b9c0" />
<rect x="7" y="60" width="2" height="2" fill="#b4b9c0" />
<rect x="7" y="64" width="2" height="2" fill="#b4b9c0" />
<rect x="518.8" y="60.8" width="5.2" height="1.2" fill="#fff" />
<rect x="518.5" y="60.5" width="5" height="1.2" fill="#222" />
<path d="M518.8 63.8h5.6l-2.8 3z" fill="#fff" />
<path d="M518.5 63.3h5l-2.5 2.8z" fill="#222" />
<path d="M1072 46H1081.5q4 0 4 4V68q0 4 -4 4H1072q-4 0 -4 -4V50q0 -4 4 -4z" fill="url(#cap)"/>
<path d="M532 46H1073q3 0 3 3V68q0 3 -3 3H532q-3 0 -3 -3V49q0 -3 3 -3z" fill="url(#tb)"/>
<path d="M531 71.5L1080 71.5" stroke="#a9adb3" stroke-width="1" fill="none" />
<rect x="532" y="52" width="2" height="2" fill="#b4b9c0" />
<rect x="532" y="56" width="2" height="2" fill="#b4b9c0" />
<rect x="532" y="60" width="2" height="2" fill="#b4b9c0" />
<rect x="532" y="64" width="2" height="2" fill="#b4b9c0" />
<rect x="1076.8" y="60.8" width="5.2" height="1.2" fill="#fff" />
<rect x="1076.5" y="60.5" width="5" height="1.2" fill="#222" />
<path d="M1076.8 63.8h5.6l-2.8 3z" fill="#fff" />
<path d="M1076.5 63.3h5l-2.5 2.8z" fill="#222" />
<path d="M1290 46H1299.5q4 0 4 4V68q0 4 -4 4H1290q-4 0 -4 -4V50q0 -4 4 -4z" fill="url(#cap)"/>
<path d="M1091 46H1291q3 0 3 3V68q0 3 -3 3H1091q-3 0 -3 -3V49q0 -3 3 -3z" fill="url(#tb)"/>
<path d="M1090 71.5L1298 71.5" stroke="#a9adb3" stroke-width="1" fill="none" />
<rect x="1091" y="52" width="2" height="2" fill="#b4b9c0" />
<rect x="1091" y="56" width="2" height="2" fill="#b4b9c0" />
<rect x="1091" y="60" width="2" height="2" fill="#b4b9c0" />
<rect x="1091" y="64" width="2" height="2" fill="#b4b9c0" />
<rect x="1294.8" y="60.8" width="5.2" height="1.2" fill="#fff" />
<rect x="1294.5" y="60.5" width="5" height="1.2" fill="#222" />
<path d="M1294.8 63.8h5.6l-2.8 3z" fill="#fff" />
<path d="M1294.5 63.3h5l-2.5 2.8z" fill="#222" />
<path d="M486 73H495.5q4 0 4 4V94q0 4 -4 4H486q-4 0 -4 -4V77q0 -4 4 -4z" fill="url(#cap)"/>
<path d="M7 73H487q3 0 3 3V94q0 3 -3 3H7q-3 0 -3 -3V76q0 -3 3 -3z" fill="url(#tb)"/>
<path d="M6 97.5L494 97.5" stroke="#a9adb3" stroke-width="1" fill="none" />
<rect x="7" y="79" width="2" height="2" fill="#b4b9c0" />
<rect x="7" y="83" width="2" height="2" fill="#b4b9c0" />
<rect x="7" y="87" width="2" height="2" fill="#b4b9c0" />
<rect x="7" y="91" width="2" height="2" fill="#b4b9c0" />
<rect x="490.8" y="86.8" width="5.2" height="1.2" fill="#fff" />
<rect x="490.5" y="86.5" width="5" height="1.2" fill="#222" />
<path d="M490.8 89.8h5.6l-2.8 3z" fill="#fff" />
<path d="M490.5 89.3h5l-2.5 2.8z" fill="#222" />
<circle cx="16.5" cy="55" r="2.2" fill="#fff" stroke="#000" stroke-width="1.2"/>
<path d="M12.2 55h2.0999999999999996M18.7 55h2.0999999999999996M16.5 50.7v2.0999999999999996M16.5 57.2v2.0999999999999996" fill="none" stroke="#000" stroke-width="1.2" />
<circle cx="25.5" cy="55" r="2.2" fill="#fff" stroke="#000" stroke-width="1.2"/>
<path d="M21.2 55h2.0999999999999996M27.7 55h2.0999999999999996M25.5 50.7v2.0999999999999996M25.5 57.2v2.0999999999999996" fill="none" stroke="#000" stroke-width="1.2" />
<path d="M16.5 57v10M25.5 57v10M16.5 64h9M22.5 61.5l3 2.5-3 2.5" fill="none" stroke="#1515c8" stroke-width="1.3" />
<rect x="34.5" y="49.5" width="58" height="19" fill="#ffffff" stroke="#8d939b" />
<rect x="35.5" y="50.5" width="56" height="1" fill="#d9dce0" />
<rect x="76.5" y="51.5" width="14" height="15" fill="url(#btn)" stroke="#8a8a8a" />
<path d="M80 57.5h7l-3.5 4z" fill="#000" />
<text x="40" y="63.2" font-size="11.3" fill="#222" textLength="15" lengthAdjust="spacingAndGlyphs" >1.0</text>
<rect x="95.5" y="48.5" width="20" height="22" fill="url(#hl)" stroke="#e5b64e" rx="3" />
<circle cx="100.5" cy="54.5" r="1.8" fill="#fff" stroke="#000" stroke-width="1.2"/>
<path d="M96.7 54.5h1.9999999999999998M102.3 54.5h1.9999999999999998M100.5 50.7v1.9999999999999998M100.5 56.3v1.9999999999999998" fill="none" stroke="#000" stroke-width="1.2" />
<circle cx="110" cy="65" r="1.8" fill="#fff" stroke="#000" stroke-width="1.2"/>
<path d="M106.2 65h1.9999999999999998M111.8 65h1.9999999999999998M110 61.2v1.9999999999999998M110 66.8v1.9999999999999998" fill="none" stroke="#000" stroke-width="1.2" />
<path d="M99 63.5L112 55.5" fill="none" stroke="#444" stroke-width="1" />
<circle cx="99" cy="63.5" r="1.3" fill="#fff" stroke="#333" stroke-width=".8"/><circle cx="112" cy="55.5" r="1.3" fill="#fff" stroke="#333" stroke-width=".8"/>
<path d="M120 51L120 67" stroke="#9aa0a8" stroke-width="1" fill="none" />
<path d="M121 51L121 67" stroke="#ffffff" stroke-width="1" fill="none" />
<path d="M126.500 58l5.500 -4h11.500l-5.500 4z" fill="#fff" stroke="#10109c" stroke-width="1.2" />
<path d="M126.500 62l5.500 -4h11.500l-5.500 4z" fill="#fff" stroke="#10109c" stroke-width="1.2" />
<path d="M126.500 66l5.500 -4h11.500l-5.500 4z" fill="#fff" stroke="#10109c" stroke-width="1.2" />
<rect x="148.5" y="49.5" width="124" height="19" fill="#ffffff" stroke="#8d939b" />
<rect x="149.5" y="50.5" width="122" height="1" fill="#d9dce0" />
<rect x="256.5" y="51.5" width="14" height="15" fill="url(#btn)" stroke="#8a8a8a" />
<path d="M260 57.5h7l-3.5 4z" fill="#000" />
<text x="153" y="63.2" font-size="11.3" fill="#222" textLength="99" lengthAdjust="spacingAndGlyphs" >Системный слой (0)</text>
<path d="M277 51L277 67" stroke="#9aa0a8" stroke-width="1" fill="none" />
<path d="M278 51L278 67" stroke="#ffffff" stroke-width="1" fill="none" />
<path d="M287 52h8v7h7v8h-15z" fill="#a9d4f2" stroke="#123cb0" stroke-width="1.4" />
<rect x="285.5" y="50.5" width="3" height="3" fill="#123cb0" />
<rect x="293.5" y="50.5" width="3" height="3" fill="#123cb0" />
<rect x="293.5" y="57.5" width="3" height="3" fill="#123cb0" />
<rect x="300.5" y="57.5" width="3" height="3" fill="#123cb0" />
<rect x="300.5" y="65.5" width="3" height="3" fill="#123cb0" />
<rect x="285.5" y="65.5" width="3" height="3" fill="#123cb0" />
<path d="M308 58l5-4h9l-5 4zM308 58v9h9v-9zM317 58l5-4v9l-5 4z" fill="#e6e6e6" stroke="#a8a8a8" stroke-width="1" />
<path d="M312 65l6-8 4-3-2 5z" fill="#c8c8c8" stroke="#9a9a9a" stroke-width="0.8" />
<path d="M329 51L329 67" stroke="#9aa0a8" stroke-width="1" fill="none" />
<path d="M330 51L330 67" stroke="#ffffff" stroke-width="1" fill="none" />
<path d="M344 65V55" fill="none" stroke="#2040d0" stroke-width="1.1" />
<path d="M344 65h9" fill="none" stroke="#20a040" stroke-width="1.1" />
<path d="M344 65l-6 4.500" fill="none" stroke="#d02020" stroke-width="1.1" />
<rect x="341.5" y="60.5" width="5" height="5" fill="none" stroke="#d03030" />
<path d="M347 53l2.500 3 4.500-5.500" fill="none" stroke="#101090" stroke-width="1.9" />
<path d="M359 51L359 67" stroke="#9aa0a8" stroke-width="1" fill="none" />
<path d="M360 51L360 67" stroke="#ffffff" stroke-width="1" fill="none" />
<rect x="367" y="61" width="8" height="8" fill="#ffcf5a" stroke="#8a6a10" />
<circle cx="371" cy="65" r="2" fill="#fff" stroke="#8a6a10"/>
<path d="M372 56h8v8h-5v-3h-3z" fill="#3aa0e8" stroke="#0a3a90" stroke-width="1" />
<path d="M376 52h6q3 0 3 3v7h-4v-7h-5z" fill="#6cc4ff" stroke="#0a3a90" stroke-width="1" />
<rect x="387.5" y="49.5" width="125" height="19" fill="#ffffff" stroke="#8d939b" />
<rect x="388.5" y="50.5" width="123" height="1" fill="#d9dce0" />
<rect x="496.5" y="51.5" width="14" height="15" fill="url(#btn)" stroke="#8a8a8a" />
<path d="M500 57.5h7l-3.5 4z" fill="#000" />
<text x="392.5" y="63.2" font-size="11.3" fill="#222" textLength="91" lengthAdjust="spacingAndGlyphs" >Gear-shaft (Тел-1)</text>
<circle cx="546" cy="57" r="5.8" fill="#e8f2ff" stroke="#1a1a6a" stroke-width="1.5"/>
<path d="M550.2 61.2l5 5" fill="none" stroke="#1a1a6a" stroke-width="3.2" />
<path d="M550.8 61.4l4.2 4.2" fill="none" stroke="#7a9ae0" stroke-width="1.2" />
<path d="M543 54.5h4.5l1.5 1.5v4h-6z" fill="#fff" stroke="#000" stroke-width="1" />
<path d="M562 51L562 67" stroke="#9aa0a8" stroke-width="1" fill="none" />
<path d="M563 51L563 67" stroke="#ffffff" stroke-width="1" fill="none" />
<circle cx="576" cy="57" r="5.8" fill="#e8f2ff" stroke="#1a1a6a" stroke-width="1.5"/>
<path d="M580.2 61.2l5 5" fill="none" stroke="#1a1a6a" stroke-width="3.2" />
<path d="M580.8 61.4l4.2 4.2" fill="none" stroke="#7a9ae0" stroke-width="1.2" />
<rect x="573" y="53" width="13" height="9" fill="none" stroke="#333" stroke-width="1" stroke-dasharray="1 1"/>
<path d="M592 51L592 67" stroke="#9aa0a8" stroke-width="1" fill="none" />
<path d="M593 51L593 67" stroke="#ffffff" stroke-width="1" fill="none" />
<circle cx="606" cy="57" r="5.8" fill="#e8f2ff" stroke="#1a1a6a" stroke-width="1.5"/>
<path d="M610.2 61.2l5 5" fill="none" stroke="#1a1a6a" stroke-width="3.2" />
<path d="M610.8 61.4l4.2 4.2" fill="none" stroke="#7a9ae0" stroke-width="1.2" />
<path d="M602.5 55.5h7M606 52.5v6M602.5 60.5h7" fill="none" stroke="#000" stroke-width="1.2" />
<rect x="620.5" y="49.5" width="65" height="19" fill="#ffffff" stroke="#8d939b" />
<rect x="621.5" y="50.5" width="63" height="1" fill="#d9dce0" />
<rect x="670.5" y="51.5" width="14" height="15" fill="url(#btn)" stroke="#8a8a8a" />
<path d="M674 57.5h7l-3.5 4z" fill="#000" />
<text x="625.5" y="63.2" font-size="11.3" fill="#222" textLength="34" lengthAdjust="spacingAndGlyphs" >0.5876</text>
<path d="M690 51L690 67" stroke="#9aa0a8" stroke-width="1" fill="none" />
<path d="M691 51L691 67" stroke="#ffffff" stroke-width="1" fill="none" />
<path d="M700.500 62.500a6.500 7.500 0 0 1 5-11M712 55.500a6.500 7.500 0 0 1 -5 11" fill="none" stroke="#111" stroke-width="2" />
<path d="M697.500 60.500l2.500 5 3.500-4zM715 57.500l-2.500-5-3.500 4z" fill="#111" />
<path d="M729 52v11M729 63h8M729 63l-5 4" fill="none" stroke="#111" stroke-width="1.2" />
<path d="M727 54.5l2-3 2 3zM734.5 61l3 2-3 2zM723 64.5l1 3 2.5-1.5z" fill="#111" />
<circle cx="729" cy="63" r="1.6" fill="#2020d0"/>
<path d="M744.0 57.5h5l-2.5 3z" fill="#111" />
<path d="M755 51L755 67" stroke="#9aa0a8" stroke-width="1" fill="none" />
<path d="M756 51L756 67" stroke="#ffffff" stroke-width="1" fill="none" />
<path d="M764 55l5 -3.5 9 3v9l-5 3.5-9-3zM764 55l9 3 5-3.5M773 58v9" fill="#fff" stroke="#111" stroke-width="1.1" />
<path d="M769 51.5v9l-5 3.5M769 60.5l9 3" fill="none" stroke="#111" stroke-width="1" />
<path d="M786 55l5 -3.5 9 3v9l-5 3.5-9-3zM786 55l9 3 5-3.5M795 58v9" fill="#fff" stroke="#111" stroke-width="1.1" />
<path d="M808 55l5 -3.5 9 3v9l-5 3.5-9-3zM808 55l9 3 5-3.5M817 58v9" fill="#fff" stroke="#111" stroke-width="1.1" />
<path d="M813 51.5v9l-5 3.5M813 60.5l9 3" fill="none" stroke="#999" stroke-width="0.9" />
<path d="M830 55l5 -3.5 9 3-5 3.5z" fill="#45d7f5" />
<path d="M830 55l9 3v9l-9-3z" fill="#4c8ff0" />
<path d="M839 58l5-3.5v9l-5 3.5z" fill="#1536c0" />
<rect x="848.5" y="48.5" width="21" height="22" fill="url(#hl)" stroke="#e5b64e" rx="3" />
<path d="M852 55l5 -3.5 9 3-5 3.5z" fill="#45d7f5" />
<path d="M852 55l9 3v9l-9-3z" fill="#4c8ff0" />
<path d="M861 58l5-3.5v9l-5 3.5z" fill="#1536c0" />
<path d="M852 55l5 -3.5 9 3v9l-5 3.5-9-3zM852 55l9 3 5-3.5M861 58v9" fill="none" stroke="#0a0a30" stroke-width="1.2" />
<path d="M873 51L873 67" stroke="#9aa0a8" stroke-width="1" fill="none" />
<path d="M874 51L874 67" stroke="#ffffff" stroke-width="1" fill="none" />
<path d="M883 53l3-2 5 7-3 2z" fill="#1a4fc0" stroke="#0a2a80" stroke-width="0.8" />
<path d="M888.2 58.3l3-2 2.5 2.2-3.2 2.3z" fill="#6aa0f0" stroke="#0a2a80" stroke-width="0.6" />
<path d="M893 59v7M889.5 66h8M893 59h-2M889 64.5l-2 3" fill="none" stroke="#666" stroke-width="1" />
<rect x="893.5" y="58.5" width="5" height="4.5" fill="#f4f4f4" stroke="#666" />
<path d="M905.0 57.5h5l-2.5 3z" fill="#111" />
<path d="M918 53l3-2 5 7-3 2z" fill="#1a4fc0" stroke="#0a2a80" stroke-width="0.8" />
<path d="M923.2 58.3l3-2 2.5 2.2-3.2 2.3z" fill="#6aa0f0" stroke="#0a2a80" stroke-width="0.6" />
<rect x="926.5" y="59.5" width="7" height="7" fill="#c9c9c9" stroke="#8a8a8a" />
<rect x="928.5" y="61.5" width="3" height="3" fill="#e4e4e4" stroke="#8a8a8a" />
<path d="M940.0 57.5h5l-2.5 3z" fill="#111" />
<path d="M951 51L951 67" stroke="#9aa0a8" stroke-width="1" fill="none" />
<path d="M952 51L952 67" stroke="#ffffff" stroke-width="1" fill="none" />
<path d="M960 56l4-4h11v11l-4 4h-11zM960 56h11v11M971 56l4-4" fill="#ffff66" stroke="#8a8a00" stroke-width="1.1" stroke-dasharray="1.5 1"/>
<path d="M984 59l7-7 7 7-7 3z" fill="#f5b740" stroke="#7a5a10" stroke-width="0.8" />
<path d="M984 59v8h14v-5l-7 3z" fill="#2d5fd0" stroke="#0a2070" stroke-width="0.8" />
<path d="M988 62l4-3v2h3v3h-3v2z" fill="#9fd0ff" stroke="#0a2070" stroke-width="0.6" />
<path d="M1004.5 57.5h5l-2.5 3z" fill="#111" />
<path d="M1016 51L1016 67" stroke="#9aa0a8" stroke-width="1" fill="none" />
<path d="M1017 51L1017 67" stroke="#ffffff" stroke-width="1" fill="none" />
<rect x="1021.5" y="48.5" width="22" height="22" fill="url(#hl)" stroke="#e5b64e" rx="3" />
<path d="M1025 53q6-1 9 3l-1 9q-5-1-8-6z" fill="#49a8f5" stroke="#0a2a80" stroke-width="1" />
<path d="M1032 55l6 1v8l-5 3z" fill="#1d6fe0" stroke="#0a2a80" stroke-width="1" />
<path d="M1026 60q4 6 10 7" fill="none" stroke="#0a2a80" stroke-width="1.2" />
<path d="M1046 51L1046 67" stroke="#9aa0a8" stroke-width="1" fill="none" />
<path d="M1047 51L1047 67" stroke="#ffffff" stroke-width="1" fill="none" />
<path d="M1055 53h14M1058 53v5M1066 53v14M1062 53v14M1062 56l4 3-4 3 4 3" fill="none" stroke="#000" stroke-width="1.4" />
<path d="M1058 58a1.5 1.5 0 1 0 .1 0" fill="none" stroke="#000" stroke-width="1.1" />
<rect x="1054.5" y="62.5" width="7" height="5" fill="#fff" stroke="#000" />
<path d="M1054.5 65h7M1058 62.5v5" fill="none" stroke="#000" stroke-width="1" />
<path d="M1101 56l5-4 10 3v9l-5 4-10-3z" fill="#10206a" />
<path d="M1101 58l5-4M1101 62l7-5.5M1101 66l8-6.5M1110 57l6-2M1110 61l6-2M1110 65l6-2" fill="none" stroke="#8fa8f0" stroke-width="1.3" />
<path d="M1104 53q4-2 8 0" fill="none" stroke="#2a9a8a" stroke-width="1.2" />
<path d="M1123.0 57.5h5l-2.5 3z" fill="#111" />
<path d="M1134 51L1134 67" stroke="#9aa0a8" stroke-width="1" fill="none" />
<path d="M1135 51L1135 67" stroke="#ffffff" stroke-width="1" fill="none" />
<path d="M1144 58l5-6h11l-5 6z" fill="#35d3f5" />
<path d="M1144 58h11v9h-11z" fill="#4c8ff0" />
<path d="M1155 58l5-6v9l-5 6z" fill="#1536c0" />
<path d="M1166.0 57.5h5l-2.5 3z" fill="#111" />
<path d="M1177 51L1177 67" stroke="#9aa0a8" stroke-width="1" fill="none" />
<path d="M1178 51L1178 67" stroke="#ffffff" stroke-width="1" fill="none" />
<circle cx="1193" cy="55" r="2.6" fill="none" stroke="#aaa" stroke-width="1.2"/>
<path d="M1196 58h6M1200 56l2.5 2-2.5 2" fill="none" stroke="#aaa" stroke-width="1.2" />
<path d="M1187 66l4-3h12l-4 3zM1194 66l4-3" fill="#ddd" stroke="#aaa" stroke-width="1" />
<path d="M1209.0 57.5h5l-2.5 3z" fill="#111" />
<path d="M1220 51L1220 67" stroke="#9aa0a8" stroke-width="1" fill="none" />
<path d="M1221 51L1221 67" stroke="#ffffff" stroke-width="1" fill="none" />
<path d="M1232 56h9v11h-9z" fill="#58c82a" />
<path d="M1232 56l3-3h9l-3 3z" fill="#7fe04a" />
<path d="M1241 56l3-3v11l-3 3z" fill="#1230b8" />
<path d="M1235 51.500h9M1235 50v3M1244 50v3M1229.5 57v10M1228 57h3M1228 67h3" fill="none" stroke="#000" stroke-width="1.1" />
<path d="M1250 51L1250 67" stroke="#9aa0a8" stroke-width="1" fill="none" />
<path d="M1251 51L1251 67" stroke="#ffffff" stroke-width="1" fill="none" />
<text x="1260" y="59" font-size="9.5" fill="#111" textLength="7.5" lengthAdjust="spacingAndGlyphs" >A</text>
<text x="1268" y="58" font-size="8" fill="#c01818" textLength="8" lengthAdjust="spacingAndGlyphs" font-weight="bold" >±1</text>
<path d="M1261 62v6M1275 62v6M1261 65h14" fill="none" stroke="#000" stroke-width="1.2" />
<path d="M1282.0 57.5h5l-2.5 3z" fill="#111" />
<path d="M17 77h8l4 4v12h-12z" fill="#fff" stroke="#222" stroke-width="1.2" />
<path d="M25 77v4h4" fill="none" stroke="#222" stroke-width="1" />
<path d="M35.5 83.5h5l-2.5 3z" fill="#111" />
<path d="M49 92l3-8h12l-3 8z" fill="#c9c34a" stroke="#444" stroke-width="1" />
<path d="M49 92v-11h4l1 1.5h6v2" fill="#e8e29a" stroke="#444" stroke-width="1" />
<path d="M57 79q4-3 6 1l1.500-1v4h-4l1.300-1.300q-1.500-2-3.500-.5z" fill="#1a4fd0" />
<rect x="71.5" y="78.5" width="13" height="13" fill="#7a7a52" stroke="#222" />
<rect x="74" y="79" width="8" height="5" fill="#e8e8e8" />
<rect x="74.5" y="86.5" width="7" height="5" fill="#c8c8b0" stroke="#444" />
<rect x="76" y="87.5" width="2" height="3" fill="#333" />
<path d="M92 77L92 93" stroke="#9aa0a8" stroke-width="1" fill="none" />
<path d="M93 77L93 93" stroke="#ffffff" stroke-width="1" fill="none" />
<path d="M104 84h13v6h-13z" fill="#d8d8d8" stroke="#222" stroke-width="1" />
<path d="M106 84v-4l2-2h6l1 2v4" fill="#fff" stroke="#222" stroke-width="1" />
<path d="M104 90l2 3h9l2-3" fill="#8a8a8a" stroke="#222" stroke-width="1" />
<path d="M108 80.500h5M108 82.500h5" fill="none" stroke="#666" stroke-width="0.8" />
<path d="M123.5 83.5h5l-2.5 3z" fill="#111" />
<path d="M135 77L135 93" stroke="#9aa0a8" stroke-width="1" fill="none" />
<path d="M136 77L136 93" stroke="#ffffff" stroke-width="1" fill="none" />
<path d="M146 78h7l3 3v11h-10z" fill="#fff" stroke="#222" stroke-width="1.1" />
<circle cx="151" cy="86" r="3.6" fill="#cfe4ff" stroke="#1a2a7a" stroke-width="1.2"/>
<path d="M153.500 88.500l4.500 4.500" fill="none" stroke="#1a2a7a" stroke-width="2.2" />
<rect x="149.5" y="82" width="3" height="2.5" fill="#444" />
<path d="M166.5 83.5h5l-2.5 3z" fill="#111" />
<path d="M178 77L178 93" stroke="#9aa0a8" stroke-width="1" fill="none" />
<path d="M179 77L179 93" stroke="#ffffff" stroke-width="1" fill="none" />
<path d="M191 77l5 10M197 77l-5 10" fill="none" stroke="#b5b5b5" stroke-width="1.3" />
<circle cx="191.500" cy="90" r="2.2" fill="none" stroke="#b5b5b5" stroke-width="1.2"/><circle cx="196.500" cy="90" r="2.2" fill="none" stroke="#b5b5b5" stroke-width="1.2"/>
<path d="M210 78h6l2 2v7h-8zM216 82h6l2 2v8h-8z" fill="#ececec" stroke="#b5b5b5" stroke-width="1" />
<path d="M218 86h4M218 88h4M218 90h4" fill="none" stroke="#b5b5b5" stroke-width="0.8" />
<path d="M231 80h10v11h-10z" fill="#d8d8d8" stroke="#b5b5b5" stroke-width="1" />
<rect x="234" y="78" width="4" height="3" fill="#ccc" stroke="#b5b5b5" />
<path d="M237 84h7l2 2v7h-9z" fill="#f0f0f0" stroke="#b5b5b5" stroke-width="1" />
<path d="M239 88h5M239 90h5" fill="none" stroke="#b5b5b5" stroke-width="0.8" />
<path d="M252 77L252 93" stroke="#9aa0a8" stroke-width="1" fill="none" />
<path d="M253 77L253 93" stroke="#ffffff" stroke-width="1" fill="none" />
<path d="M262 91l6-6 3 3-6 6zM269 84l5-6 2 2-5 6z" fill="#e4e4e4" stroke="#b5b5b5" stroke-width="1" />
<rect x="284.5" y="78.5" width="12" height="13" fill="#fff" stroke="#10106a" />
<rect x="285" y="79" width="11" height="2.5" fill="#10106a" />
<path d="M286.500 84h2M290 84h5M286.500 86.500h2M290 86.500h5M286.500 89h2M290 89h5" fill="none" stroke="#10106a" stroke-width="1.1" />
<path d="M304 77L304 93" stroke="#9aa0a8" stroke-width="1" fill="none" />
<path d="M305 77L305 93" stroke="#ffffff" stroke-width="1" fill="none" />
<path d="M315 84l5-5v3q7 0 7 7q-2-4-7-3v3z" fill="#b5b5b5" />
<path d="M349 84l-5-5v3q-7 0-7 7q2-4 7-3v3z" fill="#b5b5b5" />
<path d="M356 77L356 93" stroke="#9aa0a8" stroke-width="1" fill="none" />
<path d="M357 77L357 93" stroke="#ffffff" stroke-width="1" fill="none" />
<rect x="364.5" y="78.5" width="13" height="13" fill="#2a7fe0" stroke="#0a2070" />
<path d="M377.500 78.500l2.500 1.500v13l-2.500-1.500" fill="#103a9a" stroke="#0a2070" stroke-width="0.8" />
<rect x="366.5" y="80.5" width="9" height="3.5" fill="#5fe0f0" stroke="#0a2070" />
<rect x="366.5" y="86" width="9" height="3.5" fill="#5fe0f0" stroke="#0a2070" />
<rect x="393.5" y="79.5" width="8" height="9" fill="#2ac0b0" stroke="#0a5a50" />
<rect x="391.5" y="81.5" width="8" height="9" fill="#3ad0c0" stroke="#0a5a50" />
<rect x="389.5" y="83.5" width="8" height="8" fill="#fff" stroke="#222" />
<text x="386" y="85" font-size="10" fill="#d0a800" textLength="6" lengthAdjust="spacingAndGlyphs" font-weight="bold" >?</text>
<path d="M389.500 89h8M392 89v3M395 89v3" fill="none" stroke="#222" stroke-width="1" />
<text x="408" y="90" font-size="14" fill="#10106a" textLength="5" lengthAdjust="spacingAndGlyphs" font-weight="bold" >f</text>
<text x="413.5" y="90" font-size="11" fill="#10106a" textLength="12" lengthAdjust="spacingAndGlyphs" >(x)</text>
<path d="M431 77L431 93" stroke="#9aa0a8" stroke-width="1" fill="none" />
<path d="M432 77L432 93" stroke="#ffffff" stroke-width="1" fill="none" />
<circle cx="442" cy="81.500" r="3.300" fill="#fff" stroke="#111" stroke-width="1"/><circle cx="450" cy="89.500" r="3.300" fill="#fff" stroke="#111" stroke-width="1"/>
<text x="440.3" y="84" font-size="6.5" fill="#111" textLength="3.4" lengthAdjust="spacingAndGlyphs" >1</text>
<text x="448.3" y="92" font-size="6.5" fill="#111" textLength="3.4" lengthAdjust="spacingAndGlyphs" >2</text>
<path d="M448 80.500q3 0 3 3M449.500 79l-2 1.500 2 1.500M444 90.500q-3 0-3-3M442.500 92l2-1.500-2-1.500" fill="none" stroke="#1a2ad0" stroke-width="1.2" />
<path d="M461 77L461 93" stroke="#9aa0a8" stroke-width="1" fill="none" />
<path d="M462 77L462 93" stroke="#ffffff" stroke-width="1" fill="none" />
<path d="M468 77v13l3-3 2.500 5 2-1-2.500-5h4z" fill="#000" />
<text x="476" y="91" font-size="16" fill="#10106a" textLength="9" lengthAdjust="spacingAndGlyphs" font-weight="bold" >?</text>
<linearGradient id="ts" x1="0" y1="0" x2="0" y2="1"><stop offset="0" stop-color="#f4f5f7"/><stop offset="1" stop-color="#ffffff"/></linearGradient>
<rect x="27" y="99" width="2331" height="22.5" fill="url(#ts)" />
<path d="M27 98.5L2358 98.5" stroke="#a9adb3" stroke-width="1" fill="none" />
<path d="M0 121.5L2358 121.5" stroke="#9ea3aa" stroke-width="1" fill="none" />
<rect x="27" y="122" width="2331" height="2" fill="#d5dde5" />
<path d="M28 121.500L50 100.500q1-1 3-1H194q3 0 3 3V121.500z" fill="url(#tabg)" stroke="#9aa3b0" stroke-width="1" />
<path d="M54 107.500l3.500-3.500h8l3 3v7l-3.500 3.500h-8.500l-2.500-2.500z" fill="#fff" stroke="#111" stroke-width="1.4" />
<path d="M54.500 107.500h10.500v9.500M65 107.500l3-3" fill="none" stroke="#111" stroke-width="1.2" />
<path d="M65 107.500l3.500-3v7.500l-3.500 3.500z" fill="#b8b8b8" stroke="#111" stroke-width="0.8" />
<circle cx="59.500" cy="112" r="2.600" fill="#fff" stroke="#111" stroke-width="1.100"/>
<path d="M59.500 112v-1.800M59.500 112h1.800" fill="none" stroke="#111" stroke-width="0.9" />
<text x="80" y="114.6" font-size="11.5" fill="#111" textLength="89" lengthAdjust="spacingAndGlyphs" font-weight="bold" >Gear-shaft.m3d</text>
<path d="M182 107l7 7M189 107l-7 7" fill="none" stroke="#111" stroke-width="1.6" />
<path d="M2341 107.500h10l-5 5z" fill="#000" />
<linearGradient id="lv" x1="0" y1="0" x2="1" y2="0"><stop offset="0" stop-color="#ffffff"/><stop offset="1" stop-color="#e9ecf0"/></linearGradient>
<path d="M0 99H26V708q0 3-3 3H0z" fill="url(#lv)"/>
<path d="M0 711H23q3 0 3 3v4q0 4-4 4H4q-4 0-4-4z" fill="url(#cap)"/>
<path d="M17 713v6M19 713l3.500 3-3.500 3z" fill="#000" stroke="#000" stroke-width="0.8" />
<path d="M26.5 99L26.5 710" stroke="#c5c9cf" stroke-width="1" fill="none" />
<rect x="6" y="102" width="2" height="2" fill="#b4b9c0" />
<rect x="10" y="102" width="2" height="2" fill="#b4b9c0" />
<rect x="14" y="102" width="2" height="2" fill="#b4b9c0" />
<rect x="18" y="102" width="2" height="2" fill="#b4b9c0" />
<rect x="6.5" y="108.5" width="17" height="17" fill="url(#hl)" stroke="#e5b64e" rx="2" />
<path d="M9 113l4-3 8 2v8l-4 3-8-2z" fill="#2a8af0" />
<path d="M9 113l4-3 8 2-4 3z" fill="#45d7f5" />
<path d="M17 115l4-3v8l-4 3z" fill="#1536c0" />
<path d="M12 128q5 0 3 4-3 4 0 5 3 1 4 3" fill="none" stroke="#000" stroke-width="1.6" />
<path d="M9 151l6-6 8 6-6 6z" fill="url(#bl)" stroke="#0a1a6a" stroke-width="0.8" />
<path d="M13 147q3 4 0 8M17 145q3 5 0 10" fill="none" stroke="#cfeaff" stroke-width="0.9" />
<circle cx="12" cy="163" r="2.200" fill="#7a9af0" stroke="#1a2ab0" stroke-width="1"/>
<circle cx="19" cy="163" r="2.200" fill="#7a9af0" stroke="#1a2ab0" stroke-width="1"/>
<circle cx="12" cy="170" r="2.200" fill="#7a9af0" stroke="#1a2ab0" stroke-width="1"/>
<circle cx="19" cy="170" r="2.200" fill="#7a9af0" stroke="#1a2ab0" stroke-width="1"/>
<path d="M10 179l8 3 2 7-6-2-5-5zM9 178l12 13" fill="#2a8af0" stroke="#0a1a6a" stroke-width="1" />
<path d="M15 194l-6 14M15 194l6 14M11 204q4-2 8 0" fill="none" stroke="#000" stroke-width="1.5" />
<path d="M9 212h12l-4.500 5v5h-3v-5z" fill="url(#bl)" stroke="#0a1a6a" stroke-width="0.8" />
<circle cx="15" cy="225" r="1.200" fill="#d03020"/>
<path d="M10 229h7l3 3v10h-10z" fill="#fff" stroke="#000" stroke-width="1.2" />
<path d="M11.500 233h7M11.500 235.500h7M11.500 238h7M11.500 240.500h7M13.500 231v10M16 231v10" fill="none" stroke="#000" stroke-width="0.7" />
<rect x="9.5" y="246.5" width="11" height="12" fill="url(#bl)" stroke="#0a1a6a" />
<rect x="11.5" y="249" width="7" height="5" fill="#cfeaff" />
<path d="M10 265v5h4v-5zM12 270v4M9 276l4-3 3 3 4-8" fill="none" stroke="#000" stroke-width="1.3" />
<rect x="10" y="265" width="4" height="5" fill="#2a8af0" />
<path d="M10 281h6v6h5q0 6-6 6-5 0-5-5z" fill="url(#bl)" stroke="#0a1a6a" stroke-width="1" />
<path d="M5 297L21 297" stroke="#9aa0a8" stroke-width="1" fill="none" />
<path d="M5 298L21 298" stroke="#fff" stroke-width="1" fill="none" />
<path d="M6 313l5-5h11v9l-5 5h-11z" fill="#1a6fe0" stroke="#0a1a6a" stroke-width="1" />
<path d="M9 313h9v6h-9z" fill="#8fe0ff" stroke="#0a1a6a" stroke-width="0.8" />
<path d="M6 313l5-5h11l-4 5z" fill="#49c8f5" stroke="#0a1a6a" stroke-width="0.6" />
<path d="M19 322h4v-4z" fill="#888" />
<path d="M6 335l5-5h11v9l-5 5h-11z" fill="#1a6fe0" stroke="#0a1a6a" stroke-width="1" />
<path d="M9 335h8v5h-8z" fill="#fff" stroke="#0a1a6a" stroke-width="1.2" />
<path d="M6 335l5-5h11l-4 5z" fill="#49c8f5" stroke="#0a1a6a" stroke-width="0.6" />
<path d="M19 344h4v-4z" fill="#888" />
<path d="M11 353l5-4h7v9l-5 4h-7z" fill="#1a6fe0" stroke="#0a1a6a" stroke-width="0.8" />
<path d="M11 353l5-4h7l-5 4z" fill="#49c8f5" stroke="#0a1a6a" stroke-width="0.6" />
<path d="M7 352v9M5 358l2 3 2-3" fill="none" stroke="#000" stroke-width="1.2" />
<path d="M19 366h4v-4z" fill="#888" />
<path d="M5 371L21 371" stroke="#9aa0a8" stroke-width="1" fill="none" />
<path d="M5 372L21 372" stroke="#fff" stroke-width="1" fill="none" />
<ellipse cx="15" cy="381" rx="4.500" ry="2.500" fill="#7fe04a" stroke="#0a5a10"/>
<path d="M10.500 381v7a4.500 2.500 0 0 0 9 0v-7" fill="#3ab82a" stroke="#0a5a10" stroke-width="1" />
<ellipse cx="9" cy="387" rx="3.500" ry="2" fill="#cfeaff" stroke="#0a1a6a"/>
<path d="M5.500 387v6a3.500 2 0 0 0 7 0v-6" fill="#9fd0ff" stroke="#0a1a6a" stroke-width="1" />
<path d="M5 381l3-3M5 378l0 3 3 0" fill="none" stroke="#000" stroke-width="1" />
<path d="M19 395h4v-4z" fill="#888" />
<path d="M5 402L21 402" stroke="#9aa0a8" stroke-width="1" fill="none" />
<path d="M5 403L21 403" stroke="#fff" stroke-width="1" fill="none" />
<rect x="5.5" y="410.5" width="15" height="14" fill="#1a6fe0" stroke="#0a1a6a" />
<rect x="8.5" y="413.5" width="9" height="8" fill="#8fe0ff" stroke="#0a1a6a" />
<rect x="10.5" y="415.5" width="5" height="4" fill="#fff" stroke="#0a1a6a" />
<path d="M19 425h4v-4z" fill="#888" />
<path d="M5 447v-8q0-8 8-8q8 0 8 9l-4 7z" fill="url(#bl)" stroke="#0a1a6a" stroke-width="1" />
<path d="M19 448h4v-4z" fill="#888" />
<path d="M7 454h14l-3 3v5l-4 5-4-5v-5z" fill="url(#bl)" stroke="#0a1a6a" stroke-width="1" />
<path d="M4 466l8-7M4 462l5-4M16 468l6-5" fill="none" stroke="#1a2ab0" stroke-width="0.8" />
<path d="M19 470h4v-4z" fill="#888" />
<path d="M6 489l3-10h10v7l-3 3zM9 483h6v5h-6z" fill="#e4e4e4" stroke="#aaa" stroke-width="1" />
<path d="M6 489v3h10v-3" fill="#ddd" stroke="#aaa" stroke-width="1" />
<path d="M6 515l4-11h6l6 7-3 4z" fill="#1a6fe0" stroke="#0a1a6a" stroke-width="1" />
<path d="M10 504h6l6 7h-7z" fill="#49c8f5" stroke="#0a1a6a" stroke-width="0.6" />
<path d="M6 525l4-3h12v10l-4 3h-12z" fill="#1a6fe0" stroke="#0a1a6a" stroke-width="1" />
<rect x="8.5" y="527.5" width="8" height="6" fill="#8fe0ff" stroke="#0a1a6a" />
<path d="M10 531h5" fill="none" stroke="#0a1a6a" stroke-width="1" />
<path d="M5 549l8-7 8 7v5l-8 4-8-4z" fill="#1a6fe0" stroke="#0a1a6a" stroke-width="1" />
<path d="M9 551l5-4v2h3v4h-3v2z" fill="#cfeaff" stroke="#0a1a6a" stroke-width="0.7" />
<path d="M19 559h4v-4z" fill="#888" />
<path d="M6 570l3-3h8v8l-3 3h-8zM13 566a3 3 0 1 1 3 3" fill="#eee" stroke="#b0b0b0" stroke-width="1.1" />
<rect x="5.5" y="593.5" width="7" height="6" fill="#49c8f5" stroke="#0a1a6a" />
<path d="M11 591l4-3h7v8l-4 3h-7z" fill="#1a6fe0" stroke="#0a1a6a" stroke-width="0.8" />
<path d="M11 591l4-3h7l-4 3z" fill="#49c8f5" stroke="#0a1a6a" stroke-width="0.5" />
<rect x="6.5" y="616.5" width="7" height="6" fill="#49c8f5" stroke="#0a1a6a" />
<path d="M12 613l3-3h7v7l-3 3h-7z" fill="#fff" stroke="#0a1a6a" stroke-width="0.9" />
<path d="M6 609l6 5M12 609v5h-5" fill="none" stroke="#000" stroke-width="1.2" />
<path d="M5 636l3-3h7v7l-3 3h-7zM11 632l3-3h7v7l-3 3" fill="#e8e8e8" stroke="#aaa" stroke-width="1" />
<path d="M19 646h4v-4z" fill="#888" />
<path d="M5 652L21 652" stroke="#9aa0a8" stroke-width="1" fill="none" />
<path d="M5 653L21 653" stroke="#fff" stroke-width="1" fill="none" />
<rect x="6.5" y="664.5" width="13" height="10" fill="#2a9af0" stroke="#0a1a6a" rx="1.5" />
<path d="M9.500 664.500v-3a3.500 3.500 0 0 1 7 0v3" fill="none" stroke="#0a1a6a" stroke-width="1.6" />
<rect x="11" y="668" width="4" height="1.5" fill="#0a1a6a" />
<rect x="12.2" y="668" width="1.6" height="4" fill="#0a1a6a" />
<path d="M19 677h4v-4z" fill="#888" />
<path d="M5 682L21 682" stroke="#9aa0a8" stroke-width="1" fill="none" />
<path d="M5 683L21 683" stroke="#fff" stroke-width="1" fill="none" />
<rect x="5.5" y="692.5" width="12" height="12" fill="#fff" stroke="#000" />
<rect x="7.5" y="695.5" width="4" height="4" fill="#fff" stroke="#1a2ab0" />
<rect x="12" y="699.5" width="4" height="3" fill="#fff" stroke="#1a2ab0" />
<path d="M13 690l3-3h6v6l-3 3h-6z" fill="#1a6fe0" stroke="#0a1a6a" stroke-width="0.8" />
<path d="M13 690l3-3h6l-3 3z" fill="#49c8f5" stroke="#0a1a6a" stroke-width="0.5" />
<path d="M12 689q-3 0-4 3M6.500 690.500l1.500 2 2-1" fill="none" stroke="#000" stroke-width="1" />
<rect x="28.5" y="123.5" width="203" height="1048.5" fill="#e3e6e9" stroke="#9aa5b4" />
<rect x="29" y="124" width="202" height="18" fill="#c3d0df" />
<text x="33" y="137.4" font-size="11.3" fill="#6f7780" textLength="78" lengthAdjust="spacingAndGlyphs" >Дерево модели</text>
<path d="M199.500 129.500h5M200.500 129.500v4.500h3v-4.500M198.500 134h7M202 134v4" fill="none" stroke="#111" stroke-width="1.2" />
<rect x="201" y="130" width="1.8" height="4" fill="#111" />
<path d="M215 128.500l7 7M222 128.500l-7 7" fill="none" stroke="#111" stroke-width="1.5" />
<linearGradient id="ptb" x1="0" y1="0" x2="0" y2="1"><stop offset="0" stop-color="#ffffff"/><stop offset="1" stop-color="#e6e9ed"/></linearGradient>
<rect x="29" y="142" width="202" height="25.5" fill="url(#ptb)" />
<path d="M38.500 149v13M38.500 152h4M38.500 157h5M38.500 162h4" fill="none" stroke="#000" stroke-width="1.2" />
<rect x="37" y="147" width="3" height="3" fill="#fff" stroke="#000" />
<rect x="42" y="150.5" width="3" height="3" fill="#fff" stroke="#000" />
<rect x="43" y="155.5" width="3" height="3" fill="#fff" stroke="#000" />
<rect x="42" y="160.5" width="3" height="3" fill="#fff" stroke="#000" />
<path d="M60 150v10M60 150h4M60 155h4M60 160h4M66 150.500h6M66 155.500h6M66 160.500h6" fill="none" stroke="#aaa" stroke-width="1.2" />
<path d="M64 149l1.500 1.500 2.500-3M64 154l1.500 1.500 2.500-3M64 159l1.500 1.500 2.500-3" fill="none" stroke="#bbb" stroke-width="0.8" />
<path d="M79.500 154h5l-2.500 3z" fill="#999" />
<path d="M90.5 146L90.5 164" stroke="#9aa0a8" stroke-width="1" fill="none" />
<rect x="95.5" y="143.5" width="21" height="21" fill="url(#hl)" stroke="#e5b64e" rx="3" />
<rect x="100.5" y="146.5" width="10" height="15" fill="#fff" stroke="#000" />
<rect x="100.5" y="158.5" width="10" height="3.5" fill="#10106a" stroke="#000" />
<path d="M103 149.500h5M105 149.500v4M105 153h3" fill="none" stroke="#000" stroke-width="1" />
<path d="M122 148h8v10h-8zM127 152h8v10h-8z" fill="#eee" stroke="#b0b0b0" stroke-width="1" />
<path d="M123.500 151h5M123.500 153.500h3M129 156h5M129 158.500h5" fill="none" stroke="#b0b0b0" stroke-width="1" />
<path d="M131 146l2 2 2-2" fill="none" stroke="#b0b0b0" stroke-width="1" />
<rect x="33.5" y="169.5" width="192" height="688" fill="#ffffff" stroke="#8e959e" />
<rect x="34.5" y="170.5" width="190" height="686" fill="none" stroke="#e4e7ea" />
<rect x="35" y="839" width="189" height="17" fill="#f0f0f0" />
<linearGradient id="thumb" x1="0" y1="0" x2="0" y2="1"><stop offset="0" stop-color="#f5f6f7"/><stop offset=".5" stop-color="#e0e3e6"/><stop offset="1" stop-color="#d0d4d8"/></linearGradient>
<rect x="53.5" y="840.5" width="108" height="14" fill="url(#thumb)" stroke="#9aa0a6" rx="2" />
<path d="M104.500 844v7M107 844v7M109.500 844v7" fill="none" stroke="#333" stroke-width="1" />
<path d="M45 843.500v7l-4-3.500zM212 843.500v7l4-3.500z" fill="#333" />
<rect x="33.5" y="860.5" width="192" height="286" fill="#f0f0f0" stroke="#8e959e" />
<rect x="34.5" y="861.5" width="190" height="284" fill="none" stroke="#fafafa" />
<path d="M33.500 1150v13.500q0 3 3 3H97q3 0 3-3V1150z" fill="#fdfdfd" stroke="#c5cad0"/>
<text x="36.5" y="1162.6" font-size="11.3" fill="#3a3f46" textLength="59" lengthAdjust="spacingAndGlyphs" >Построение</text>
<text x="109" y="1162.6" font-size="11.3" fill="#3a3f46" textLength="60" lengthAdjust="spacingAndGlyphs" >Исполнения</text>
<text x="182" y="1162.6" font-size="11.3" fill="#3a3f46" textLength="26" lengthAdjust="spacingAndGlyphs" >Зоны</text>
<g clip-path="url(#treeclip)">
<path d="M47.500 193V543" stroke="#808080" stroke-width="1" stroke-dasharray="1 1" fill="none"/>
<text x="63" y="187" font-size="11.3" fill="#1a1a1a" textLength="97" lengthAdjust="spacingAndGlyphs" >Gear-shaft (Тел-1)</text>
<path d="M40 179.500l4-4.500h9l3.500 3.500v8l-4 4.500h-10l-2.500-2.500z" fill="#ffd98a" stroke="#1a1a1a" stroke-width="1.3" />
<path d="M40.500 179.500h12v11.500M52.500 179.500l3.500-4" fill="none" stroke="#1a1a1a" stroke-width="1.1" />
<path d="M52.500 179.500l4-4v8.500l-4 4.500z" fill="#e0a84a" stroke="#1a1a1a" stroke-width="0.8" />
<circle cx="46" cy="185" r="3.300" fill="#ffe9b8" stroke="#1a1a1a" stroke-width="1.100"/>
<path d="M46 185v-2.300M46 185l2 1.300" fill="none" stroke="#1a1a1a" stroke-width="0.9" />
<text x="86" y="207" font-size="11.3" fill="#1a1a1a" textLength="119" lengthAdjust="spacingAndGlyphs" >(т) Начало координат</text>
<path d="M48 203.5H62" stroke="#808080" stroke-width="1" stroke-dasharray="1 1" fill="none"/>
<path d="M70 195V206H80M70 206l-5 4" fill="none" stroke="#555" stroke-width="1" />
<text x="89" y="227" font-size="11.3" fill="#1a1a1a" textLength="39" lengthAdjust="spacingAndGlyphs" >Эскиз:1</text>
<path d="M48 223.5H62" stroke="#808080" stroke-width="1" stroke-dasharray="1 1" fill="none"/>
<path d="M65 216h6v6h7v8h-13z" fill="#c9c9c9" stroke="#333" stroke-width="1.2" />
<rect x="63.5" y="214.5" width="3" height="3" fill="#444" />
<rect x="69.5" y="214.5" width="3" height="3" fill="#444" />
<rect x="69.5" y="220.5" width="3" height="3" fill="#444" />
<rect x="76.5" y="220.5" width="3" height="3" fill="#444" />
<rect x="76.5" y="228.5" width="3" height="3" fill="#444" />
<rect x="63.5" y="228.5" width="3" height="3" fill="#444" />
<text x="89" y="247" font-size="11.3" fill="#1a1a1a" textLength="122" lengthAdjust="spacingAndGlyphs" >Операция вращения:1</text>
<path d="M48 243.5H62" stroke="#808080" stroke-width="1" stroke-dasharray="1 1" fill="none"/>
<path d="M64 241q0-5 4-5v14h-4zM72 237q6-2 7 4v9h-7zM68 237h4v14h-4z" fill="#2a7fe8" stroke="#0a1a6a" stroke-width="1" />
<path d="M68 238v12" fill="none" stroke="#9fd8ff" stroke-width="1.5" />
<text x="89" y="267" font-size="11.3" fill="#1a1a1a" textLength="39" lengthAdjust="spacingAndGlyphs" >Эскиз:2</text>
<path d="M48 263.5H62" stroke="#808080" stroke-width="1" stroke-dasharray="1 1" fill="none"/>
<path d="M65 256h6v6h7v8h-13z" fill="#c9c9c9" stroke="#333" stroke-width="1.2" />
<rect x="63.5" y="254.5" width="3" height="3" fill="#444" />
<rect x="69.5" y="254.5" width="3" height="3" fill="#444" />
<rect x="69.5" y="260.5" width="3" height="3" fill="#444" />
<rect x="76.5" y="260.5" width="3" height="3" fill="#444" />
<rect x="76.5" y="268.5" width="3" height="3" fill="#444" />
<rect x="63.5" y="268.5" width="3" height="3" fill="#444" />
<text x="89" y="287" font-size="11.3" fill="#1a1a1a" textLength="39" lengthAdjust="spacingAndGlyphs" >Эскиз:3</text>
<path d="M48 283.5H62" stroke="#808080" stroke-width="1" stroke-dasharray="1 1" fill="none"/>
<path d="M65 276h6v6h7v8h-13z" fill="#c9c9c9" stroke="#333" stroke-width="1.2" />
<rect x="63.5" y="274.5" width="3" height="3" fill="#444" />
<rect x="69.5" y="274.5" width="3" height="3" fill="#444" />
<rect x="69.5" y="280.5" width="3" height="3" fill="#444" />
<rect x="76.5" y="280.5" width="3" height="3" fill="#444" />
<rect x="76.5" y="288.5" width="3" height="3" fill="#444" />
<rect x="63.5" y="288.5" width="3" height="3" fill="#444" />
<text x="89" y="307" font-size="11.3" fill="#1a1a1a" textLength="86" lengthAdjust="spacingAndGlyphs" >Ось операции:1</text>
<path d="M48 303.5H62" stroke="#808080" stroke-width="1" stroke-dasharray="1 1" fill="none"/>
<path d="M64 296L78 310" fill="none" stroke="#222" stroke-width="1.3" />
<circle cx="71" cy="303" r="1.600" fill="#222"/>
<text x="89" y="327" font-size="11.3" fill="#1a1a1a" textLength="192" lengthAdjust="spacingAndGlyphs" >Вырезать элемент выдавливания:1</text>
<path d="M48 323.5H62" stroke="#808080" stroke-width="1" stroke-dasharray="1 1" fill="none"/>
<rect x="64.5" y="315.5" width="14" height="14" fill="#2a9af0" stroke="#0a1a6a" />
<rect x="67.5" y="318.5" width="8" height="8" fill="#8fe0ff" stroke="#0a1a6a" />
<rect x="69.5" y="320.5" width="4" height="4" fill="#fff" stroke="#0a1a6a" />
<text x="89" y="347" font-size="11.3" fill="#1a1a1a" textLength="196" lengthAdjust="spacingAndGlyphs" >Копия по концентрической сетке:1</text>
<path d="M48 343.5H62" stroke="#808080" stroke-width="1" stroke-dasharray="1 1" fill="none"/>
<circle cx="76.5" cy="343.0" r="1.700" fill="#7a8af0" stroke="#1a1ab0" stroke-width=".800"/>
<circle cx="74.9" cy="346.9" r="1.700" fill="#7a8af0" stroke="#1a1ab0" stroke-width=".800"/>
<circle cx="71.0" cy="348.5" r="1.700" fill="#7a8af0" stroke="#1a1ab0" stroke-width=".800"/>
<circle cx="67.1" cy="346.9" r="1.700" fill="#7a8af0" stroke="#1a1ab0" stroke-width=".800"/>
<circle cx="65.5" cy="343.0" r="1.700" fill="#7a8af0" stroke="#1a1ab0" stroke-width=".800"/>
<circle cx="67.1" cy="339.1" r="1.700" fill="#7a8af0" stroke="#1a1ab0" stroke-width=".800"/>
<circle cx="71.0" cy="337.5" r="1.700" fill="#7a8af0" stroke="#1a1ab0" stroke-width=".800"/>
<circle cx="74.9" cy="339.1" r="1.700" fill="#7a8af0" stroke="#1a1ab0" stroke-width=".800"/>
<text x="89" y="367" font-size="11.3" fill="#1a1a1a" textLength="39" lengthAdjust="spacingAndGlyphs" >Эскиз:5</text>
<path d="M48 363.5H62" stroke="#808080" stroke-width="1" stroke-dasharray="1 1" fill="none"/>
<path d="M65 356h6v6h7v8h-13z" fill="#c9c9c9" stroke="#333" stroke-width="1.2" />
<rect x="63.5" y="354.5" width="3" height="3" fill="#444" />
<rect x="69.5" y="354.5" width="3" height="3" fill="#444" />
<rect x="69.5" y="360.5" width="3" height="3" fill="#444" />
<rect x="76.5" y="360.5" width="3" height="3" fill="#444" />
<rect x="76.5" y="368.5" width="3" height="3" fill="#444" />
<rect x="63.5" y="368.5" width="3" height="3" fill="#444" />
<text x="89" y="387" font-size="11.3" fill="#1a1a1a" textLength="192" lengthAdjust="spacingAndGlyphs" >Вырезать элемент выдавливания:2</text>
<path d="M48 383.5H62" stroke="#808080" stroke-width="1" stroke-dasharray="1 1" fill="none"/>
<rect x="64.5" y="375.5" width="14" height="14" fill="#2a9af0" stroke="#0a1a6a" />
<rect x="67.5" y="378.5" width="8" height="8" fill="#8fe0ff" stroke="#0a1a6a" />
<rect x="69.5" y="380.5" width="4" height="4" fill="#fff" stroke="#0a1a6a" />
<text x="89" y="407" font-size="11.3" fill="#1a1a1a" textLength="196" lengthAdjust="spacingAndGlyphs" >Копия по концентрической сетке:2</text>
<path d="M48 403.5H62" stroke="#808080" stroke-width="1" stroke-dasharray="1 1" fill="none"/>
<circle cx="76.5" cy="403.0" r="1.700" fill="#7a8af0" stroke="#1a1ab0" stroke-width=".800"/>
<circle cx="74.9" cy="406.9" r="1.700" fill="#7a8af0" stroke="#1a1ab0" stroke-width=".800"/>
<circle cx="71.0" cy="408.5" r="1.700" fill="#7a8af0" stroke="#1a1ab0" stroke-width=".800"/>
<circle cx="67.1" cy="406.9" r="1.700" fill="#7a8af0" stroke="#1a1ab0" stroke-width=".800"/>
<circle cx="65.5" cy="403.0" r="1.700" fill="#7a8af0" stroke="#1a1ab0" stroke-width=".800"/>
<circle cx="67.1" cy="399.1" r="1.700" fill="#7a8af0" stroke="#1a1ab0" stroke-width=".800"/>
<circle cx="71.0" cy="397.5" r="1.700" fill="#7a8af0" stroke="#1a1ab0" stroke-width=".800"/>
<circle cx="74.9" cy="399.1" r="1.700" fill="#7a8af0" stroke="#1a1ab0" stroke-width=".800"/>
<text x="86" y="427" font-size="11.3" fill="#1a1a1a" textLength="87" lengthAdjust="spacingAndGlyphs" >Направляющая</text>
<path d="M48 423.5H62" stroke="#808080" stroke-width="1" stroke-dasharray="1 1" fill="none"/>
<path d="M65 416h6v6h7v8h-13z" fill="#c9c9c9" stroke="#333" stroke-width="1.2" />
<rect x="63.5" y="414.5" width="3" height="3" fill="#444" />
<rect x="69.5" y="414.5" width="3" height="3" fill="#444" />
<rect x="69.5" y="420.5" width="3" height="3" fill="#444" />
<rect x="76.5" y="420.5" width="3" height="3" fill="#444" />
<rect x="76.5" y="428.5" width="3" height="3" fill="#444" />
<rect x="63.5" y="428.5" width="3" height="3" fill="#444" />
<text x="86" y="447" font-size="11.3" fill="#1a1a1a" textLength="20" lengthAdjust="spacingAndGlyphs" >Паз</text>
<path d="M48 443.5H62" stroke="#808080" stroke-width="1" stroke-dasharray="1 1" fill="none"/>
<path d="M65 436h6v6h7v8h-13z" fill="#c9c9c9" stroke="#333" stroke-width="1.2" />
<rect x="63.5" y="434.5" width="3" height="3" fill="#444" />
<rect x="69.5" y="434.5" width="3" height="3" fill="#444" />
<rect x="69.5" y="440.5" width="3" height="3" fill="#444" />
<rect x="76.5" y="440.5" width="3" height="3" fill="#444" />
<rect x="76.5" y="448.5" width="3" height="3" fill="#444" />
<rect x="63.5" y="448.5" width="3" height="3" fill="#444" />
<text x="89" y="467" font-size="11.3" fill="#1a1a1a" textLength="146" lengthAdjust="spacingAndGlyphs" >Вырезать кинематически:1</text>
<path d="M48 463.5H62" stroke="#808080" stroke-width="1" stroke-dasharray="1 1" fill="none"/>
<path d="M64 460l3-4h12v9l-3 5h-12z" fill="#2a6fe0" stroke="#0a1a6a" stroke-width="1" />
<path d="M65 466q6-1 12-7" fill="none" stroke="#9fe0ff" stroke-width="2" />
<text x="89" y="487" font-size="11.3" fill="#1a1a1a" textLength="86" lengthAdjust="spacingAndGlyphs" >Ось операции:2</text>
<path d="M48 483.5H62" stroke="#808080" stroke-width="1" stroke-dasharray="1 1" fill="none"/>
<path d="M64 476L78 490" fill="none" stroke="#222" stroke-width="1.3" />
<circle cx="71" cy="483" r="1.600" fill="#222"/>
<text x="89" y="507" font-size="11.3" fill="#1a1a1a" textLength="196" lengthAdjust="spacingAndGlyphs" >Копия по концентрической сетке:3</text>
<path d="M48 503.5H62" stroke="#808080" stroke-width="1" stroke-dasharray="1 1" fill="none"/>
<circle cx="76.5" cy="503.0" r="1.700" fill="#7a8af0" stroke="#1a1ab0" stroke-width=".800"/>
<circle cx="74.9" cy="506.9" r="1.700" fill="#7a8af0" stroke="#1a1ab0" stroke-width=".800"/>
<circle cx="71.0" cy="508.5" r="1.700" fill="#7a8af0" stroke="#1a1ab0" stroke-width=".800"/>
<circle cx="67.1" cy="506.9" r="1.700" fill="#7a8af0" stroke="#1a1ab0" stroke-width=".800"/>
<circle cx="65.5" cy="503.0" r="1.700" fill="#7a8af0" stroke="#1a1ab0" stroke-width=".800"/>
<circle cx="67.1" cy="499.1" r="1.700" fill="#7a8af0" stroke="#1a1ab0" stroke-width=".800"/>
<circle cx="71.0" cy="497.5" r="1.700" fill="#7a8af0" stroke="#1a1ab0" stroke-width=".800"/>
<circle cx="74.9" cy="499.1" r="1.700" fill="#7a8af0" stroke="#1a1ab0" stroke-width=".800"/>
<text x="89" y="527" font-size="11.3" fill="#1a1a1a" textLength="39" lengthAdjust="spacingAndGlyphs" >Эскиз:7</text>
<path d="M48 523.5H62" stroke="#808080" stroke-width="1" stroke-dasharray="1 1" fill="none"/>
<path d="M65 516h6v6h7v8h-13z" fill="#c9c9c9" stroke="#333" stroke-width="1.2" />
<rect x="63.5" y="514.5" width="3" height="3" fill="#444" />
<rect x="69.5" y="514.5" width="3" height="3" fill="#444" />
<rect x="69.5" y="520.5" width="3" height="3" fill="#444" />
<rect x="76.5" y="520.5" width="3" height="3" fill="#444" />
<rect x="76.5" y="528.5" width="3" height="3" fill="#444" />
<rect x="63.5" y="528.5" width="3" height="3" fill="#444" />
<text x="89" y="547" font-size="11.3" fill="#1a1a1a" textLength="65" lengthAdjust="spacingAndGlyphs" >Отверстие:1</text>
<path d="M48 543.5H62" stroke="#808080" stroke-width="1" stroke-dasharray="1 1" fill="none"/>
<path d="M64 539l3-3h12v11l-3 3h-12z" fill="#2a6fe0" stroke="#0a1a6a" stroke-width="1" />
<circle cx="70" cy="545" r="3" fill="#fff" stroke="#0a1a6a"/><circle cx="70.500" cy="545" r="1.300" fill="#0a1a6a"/>
<rect x="43.5" y="198.5" width="8" height="8" fill="#fff" stroke="#8a8f96" />
<path d="M45.500 202.5h4M47.500 200.5v4" fill="none" stroke="#222" stroke-width="1" />
<rect x="43.5" y="338.5" width="8" height="8" fill="#fff" stroke="#8a8f96" />
<path d="M45.500 342.5h4M47.500 340.5v4" fill="none" stroke="#222" stroke-width="1" />
<rect x="43.5" y="398.5" width="8" height="8" fill="#fff" stroke="#8a8f96" />
<path d="M45.500 402.5h4M47.500 400.5v4" fill="none" stroke="#222" stroke-width="1" />
<rect x="43.5" y="498.5" width="8" height="8" fill="#fff" stroke="#8a8f96" />
<path d="M45.500 502.5h4M47.500 500.5v4" fill="none" stroke="#222" stroke-width="1" />
<path d="M43.500 550.500H210l5 3-5 3H43.500z" fill="#f4f4f4" stroke="#555" stroke-width="1"/>
<path d="M45 552.5L210 552.5" stroke="#fff" stroke-width="1" fill="none" />
</g>
<rect x="234" y="124" width="2121" height="1" fill="#4f6a85" />
<rect x="234" y="124" width="1" height="1045" fill="#4f6a85" />
<rect x="2354" y="124" width="1" height="1046" fill="#f4f6f8" />
<rect x="234" y="1168" width="2121" height="1" fill="#f4f6f8" />
<rect x="232" y="1169" width="2126" height="3" fill="#c9ced4" />
<rect x="2355" y="122" width="3" height="1050" fill="#d0d5da" />
<path d="M28 1172.5L2358 1172.5" stroke="#a8adb4" stroke-width="1" fill="none" />
<rect x="28" y="1178" width="2" height="2" fill="#c0c4ca" />
<rect x="28" y="1181" width="2" height="2" fill="#c0c4ca" />
<rect x="28" y="1184" width="2" height="2" fill="#c0c4ca" />
<rect x="28" y="1187" width="2" height="2" fill="#c0c4ca" />
<rect x="28" y="1190" width="2" height="2" fill="#c0c4ca" />
<rect x="28" y="1193" width="2" height="2" fill="#c0c4ca" />
<rect x="28" y="1196" width="2" height="2" fill="#c0c4ca" />
<rect x="28" y="1199" width="2" height="2" fill="#c0c4ca" />
<rect x="28" y="1202" width="2" height="2" fill="#c0c4ca" />
<rect x="28" y="1205" width="2" height="2" fill="#c0c4ca" />
<rect x="28" y="1208" width="2" height="2" fill="#c0c4ca" />
<rect x="28" y="1211" width="2" height="2" fill="#c0c4ca" />
<rect x="28" y="1214" width="2" height="2" fill="#c0c4ca" />
<rect x="28" y="1217" width="2" height="2" fill="#c0c4ca" />
<rect x="28" y="1220" width="2" height="2" fill="#c0c4ca" />
<rect x="28" y="1223" width="2" height="2" fill="#c0c4ca" />
<rect x="28" y="1226" width="2" height="2" fill="#c0c4ca" />
<rect x="28" y="1229" width="2" height="2" fill="#c0c4ca" />
<rect x="28" y="1232" width="2" height="2" fill="#c0c4ca" />
<rect x="28" y="1235" width="2" height="2" fill="#c0c4ca" />
<linearGradient id="inp" x1="0" y1="0" x2="0" y2="1"><stop offset="0" stop-color="#ffffff"/><stop offset=".6" stop-color="#ffffff"/><stop offset="1" stop-color="#f1f3f6"/></linearGradient>
<rect x="32.5" y="1180.5" width="2319" height="34" fill="url(#inp)" stroke="#8e949c" />
<rect x="0" y="1240" width="2358" height="20" fill="url(#stat)" />
<path d="M0 1240.5L2358 1240.5" stroke="#8f949b" stroke-width="1" fill="none" />
<path d="M2271.5 1241L2271.5 1259" stroke="#555" stroke-width="1" fill="none" />
<text x="5" y="1254.3" font-size="11.3" fill="#3a3f46" textLength="536" lengthAdjust="spacingAndGlyphs" >Щелкните левой кнопкой мыши на объекте для его выделения (вместе с Ctrl - добавить к выделенным)</text>
<rect x="0" y="1259" width="2358" height="8" fill="#0c1016" />
<ellipse cx="20" cy="1274" rx="14" ry="13" fill="#9bb7d6"/>
<rect x="52" y="1264" width="10" height="3" fill="#e8d9a0" />
<rect x="122" y="1261" width="58" height="6" fill="#c8c8c8" />
<ellipse cx="146" cy="1270" rx="10" ry="8" fill="#2a8ae8"/>
<rect x="2347" y="1262" width="11" height="5" fill="#4a4f56" />
<rect x="2191" y="1216" width="153" height="31" fill="#77797c" opacity=".96"/>
<rect x="2191" y="1247" width="153" height="2.5" fill="#a9abae" opacity=".8"/>
<text transform="translate(2200.3 1242) scale(.5 1)" text-anchor="middle" font-size="27.6" font-weight="bold" fill="#e9e9ea" stroke="#e9e9ea" stroke-width=".9">P</text>
<text transform="translate(2215.2 1242) scale(.5 1)" text-anchor="middle" font-size="27.6" font-weight="bold" fill="#e9e9ea" stroke="#e9e9ea" stroke-width=".9">C</text>
<text transform="translate(2228.8 1242) scale(.5 1)" text-anchor="middle" font-size="27.6" font-weight="bold" fill="#e9e9ea" stroke="#e9e9ea" stroke-width=".9">P</text>
<text transform="translate(2242.8 1242) scale(.5 1)" text-anchor="middle" font-size="27.6" font-weight="bold" fill="#e9e9ea" stroke="#e9e9ea" stroke-width=".9">R</text>
<text transform="translate(2258.1 1242) scale(.5 1)" text-anchor="middle" font-size="27.6" font-weight="bold" fill="#e9e9ea" stroke="#e9e9ea" stroke-width=".9">O</text>
<text transform="translate(2272.9 1242) scale(.5 1)" text-anchor="middle" font-size="27.6" font-weight="bold" fill="#e9e9ea" stroke="#e9e9ea" stroke-width=".9">G</text>
<text transform="translate(2285.2 1242) scale(.5 1)" text-anchor="middle" font-size="27.6" font-weight="bold" fill="#e9e9ea" stroke="#e9e9ea" stroke-width=".9">S</text>
<text transform="translate(2295.8 1242) scale(.5 1)" text-anchor="middle" font-size="27.6" font-weight="bold" fill="#e9e9ea" stroke="#e9e9ea" stroke-width=".9">.</text>
<text transform="translate(2306.8 1242) scale(.5 1)" text-anchor="middle" font-size="27.6" font-weight="bold" fill="#e9e9ea" stroke="#e9e9ea" stroke-width=".9">N</text>
<text transform="translate(2321.3 1242) scale(.5 1)" text-anchor="middle" font-size="27.6" font-weight="bold" fill="#e9e9ea" stroke="#e9e9ea" stroke-width=".9">E</text>
<text transform="translate(2334.1 1242) scale(.5 1)" text-anchor="middle" font-size="27.6" font-weight="bold" fill="#e9e9ea" stroke="#e9e9ea" stroke-width=".9">T</text>
<path d="M301.500 1097V1062h4V1097z" fill="#62c462" />
<path d="M299 1064l4.500-12 4.500 12z" fill="#62c462" />
<path d="M303.500 1052l4.500 12h-2z" fill="#8fe08f" />
<path d="M303 1096l34 19-2 3.500-34-19z" fill="#e26060" />
<path d="M332 1111l12 9-15-2z" fill="#e26060" />
<path d="M304 1096l-34 19 2 3.500 34-19z" fill="#5a86e0" />
<path d="M275 1111l-12 9 15-2z" fill="#6a9af0" />
<path d="M298 1094l5.500-3 5.500 3v6l-5.500 3-5.500-3z" fill="#6a6adc" />
<path d="M298 1094l5.500 3 5.500-3" fill="none" stroke="#8a8af0" stroke-width="0.8" />
<text x="299.500" y="1048" font-size="10" fill="#4aa84a" font-family="Liberation Serif,serif">Y</text><text x="345" y="1127" font-size="10" fill="#d04848" font-family="Liberation Serif,serif">X</text><text x="255.500" y="1127" font-size="10" fill="#4a78c8" font-family="Liberation Serif,serif">Z</text>
</svg>
</body></html>
